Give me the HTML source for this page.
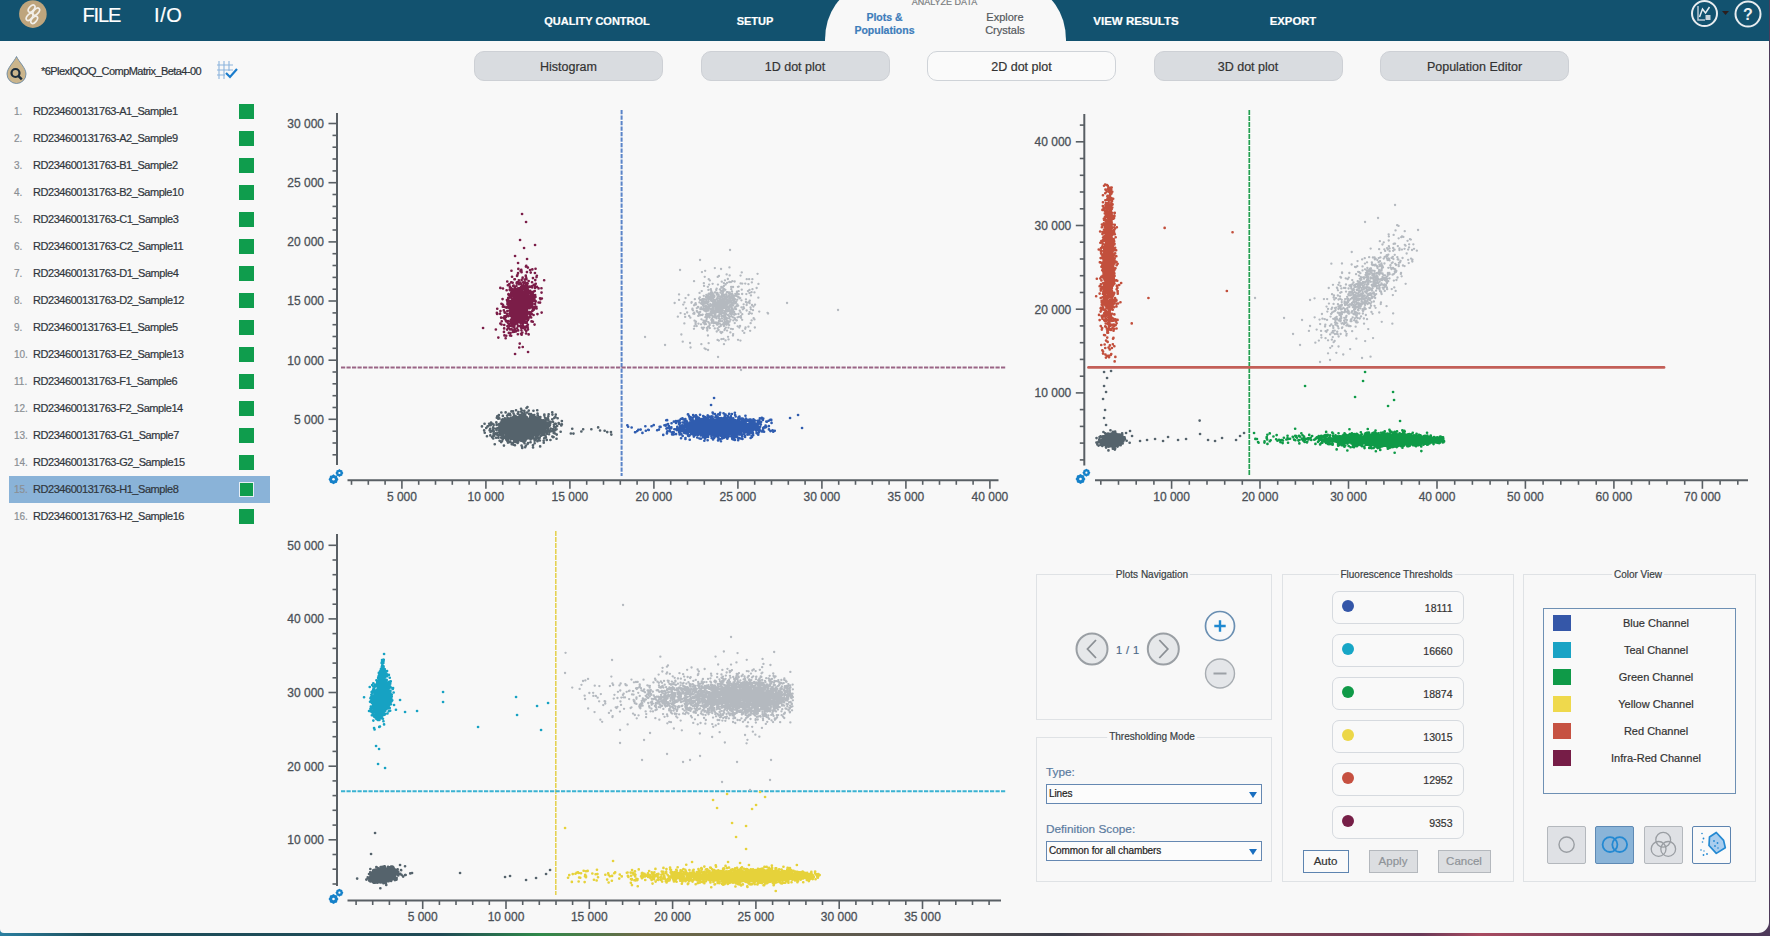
<!DOCTYPE html>
<html><head><meta charset="utf-8">
<style>
*{margin:0;padding:0;box-sizing:border-box}
html,body{width:1770px;height:936px;overflow:hidden}
.win div{-webkit-text-stroke:0.2px currentColor}
body{font-family:"Liberation Sans",sans-serif;position:relative;background:linear-gradient(90deg,#2a7fa0 0,#1d4f5c 90px,#1f4a55 440px,#2f8a4a 540px,#6d6a48 640px,#5a5550 930px,#3c3e4a 1060px,#8a4a55 1200px,#6a3a58 1420px,#a84a60 1480px,#4e3a5a 1700px)}
.win{position:absolute;left:0;top:0;width:1769px;height:932.5px;background:#f8f8f8;border-radius:0 0 11px 4px;overflow:hidden}
.hdr{position:absolute;left:0;top:0;width:1769px;height:41px;background:#12526f;overflow:hidden}
.ab{position:absolute;white-space:nowrap}
.logo{position:absolute;left:19px;top:0px;width:28px;height:28px;border-radius:50%;background:#c2a478}
.menu{position:absolute;color:#fff;font-size:20px;top:4px;line-height:23px}
.tabt{position:absolute;color:#fff;font-weight:bold;font-size:11px;top:15px;transform:translateX(-50%);white-space:nowrap}
.atab{position:absolute;left:825px;top:-10px;width:241px;height:51px;background:#f8f8f8;border-radius:36px 36px 0 0/50px 50px 0 0}
.sub{position:absolute;font-size:10.5px;font-weight:bold;line-height:13px;text-align:center;transform:translateX(-50%);white-space:nowrap}
.btn{position:absolute;top:50.5px;width:189px;height:30px;border-radius:10px;background:#d9dce0;border:1px solid #cdd0d5;font-size:12.5px;color:#333;text-align:center;line-height:30px}
.btn.on{background:#fafafa;border:1px solid #cfd3d8}
.num{position:absolute;left:14px;font-size:10px;color:#8a8f94;line-height:14px;margin-top:0.5px}
.sname{position:absolute;left:33px;font-size:11px;letter-spacing:-0.45px;color:#30363c;line-height:14px;white-space:nowrap}
.sq{position:absolute;left:239px;width:15px;height:14.5px;background:#0f9d4d}
.sq.sel{border:1px solid #e6eef5}
.selbar{position:absolute;left:9px;width:261px;height:27px;background:#8ab3d8}
svg text.al{font-family:"Liberation Sans",sans-serif;font-size:12px;fill:#4a5057;stroke:#4a5057;stroke-width:0.28px}
.gbox{position:absolute;border:1px solid #dfe2e5}
.gtitle{position:absolute;font-size:10px;color:#3a3f44;background:#f8f8f8;padding:0 2px;transform:translate(-50%,-50%);white-space:nowrap;line-height:12px}
.field{position:absolute;left:1331.5px;width:132px;height:32.5px;border:1.5px solid #d6dadf;border-radius:7px;background:#f9f9f9}
.field .dot{position:absolute;left:9.3px;top:8.2px;width:12px;height:12px;border-radius:50%}
.field .val{position:absolute;right:10px;top:9px;font-size:10.5px;color:#333;line-height:14px}
.sbtn{position:absolute;top:849.5px;height:23px;font-size:11.5px;text-align:center;line-height:21px}
.lg{position:absolute;left:1552.5px;width:18px;height:16px}
.lgt{position:absolute;font-size:11px;color:#333;transform:translateX(-50%);white-space:nowrap;line-height:14px}
.cvb{position:absolute;top:826px;width:39px;height:38px;border:1.5px solid #b4b8bd;border-radius:2px;background:#dfe1e5}
.lab2{position:absolute;left:1046px;font-size:11.8px;color:#5b7ba0;line-height:14px}
.sel2{position:absolute;left:1045.5px;width:216.5px;height:20px;border:1.3px solid #6588b2;background:#fcfcfc;font-size:10px;letter-spacing:-0.1px;color:#222;line-height:18px;padding-left:2.5px}
.sel2 .tri{position:absolute;right:4px;top:6.5px;width:0;height:0;border-left:4.5px solid transparent;border-right:4.5px solid transparent;border-top:6px solid #1a6fc0}
</style></head>
<body>
<div class="win">
  <div class="hdr">
    <svg class="ab" style="left:0;top:0" width="60" height="32" viewBox="0 0 60 32"><circle cx="32.9" cy="14.1" r="13.8" fill="#bea57d"/><g fill="none" stroke="#f2efe9" stroke-width="1.7"><ellipse cx="31.6" cy="8.6" rx="4.3" ry="2.4" transform="rotate(-50 31.6 8.6)"/><ellipse cx="36.2" cy="11.6" rx="4.3" ry="2.4" transform="rotate(-50 36.2 11.6)"/><ellipse cx="29.6" cy="16.8" rx="4.3" ry="2.4" transform="rotate(-50 29.6 16.8)"/><ellipse cx="34.2" cy="19.8" rx="4.3" ry="2.4" transform="rotate(-50 34.2 19.8)"/></g></svg>
    <div class="menu" style="left:82.5px;letter-spacing:-1.1px">FILE</div>
    <div class="menu" style="left:154px;letter-spacing:0.6px">I/O</div>
    <div class="tabt" style="left:597px">QUALITY CONTROL</div>
    <div class="tabt" style="left:755px">SETUP</div>
    <div class="atab"></div>
    <div class="ab" style="left:944.5px;top:-3px;font-size:9px;color:#7a7d80;transform:translateX(-50%)">ANALYZE DATA</div>
    <div class="sub" style="left:884.5px;top:11px;color:#3e7dbb">Plots &amp;<br>Populations</div>
    <div class="sub" style="left:1005px;top:11px;color:#54585c;font-weight:normal;font-size:11px">Explore<br>Crystals</div>
    <div class="tabt" style="left:1136px;font-size:11.5px">VIEW RESULTS</div>
    <div class="tabt" style="left:1293px;font-size:11.3px">EXPORT</div>
    <svg class="ab" style="left:1688px;top:0" width="81" height="30" viewBox="1688 0 81 30">
      <circle cx="1704.5" cy="13.5" r="12.5" fill="none" stroke="#e8ecef" stroke-width="2"/>
      <path d="M1698 6v14h7" fill="none" stroke="#b8c8d4" stroke-width="1.5"/>
      <path d="M1699.5 17l3-8 3 4 4-6" fill="none" stroke="#e6ecf0" stroke-width="1.5"/>
      <rect x="1705.5" y="15" width="5" height="5" fill="#c8d4dc"/>
      <path d="M1722 11h7l-3.5 4z" fill="#2b1f1f"/>
      <circle cx="1748" cy="14" r="12.5" fill="none" stroke="#e8ecef" stroke-width="2"/>
      <text x="1748" y="19.5" text-anchor="middle" font-family="Liberation Sans" font-size="16" font-weight="bold" fill="#eef1f3">?</text>
    </svg>
  </div>

  <!-- toolbar buttons -->
  <div class="btn" style="left:474px">Histogram</div>
  <div class="btn" style="left:700.5px">1D dot plot</div>
  <div class="btn on" style="left:927px">2D dot plot</div>
  <div class="btn" style="left:1153.5px">3D dot plot</div>
  <div class="btn" style="left:1380px">Population Editor</div>

  <!-- file row -->
  <svg class="ab" style="left:4px;top:55px" width="26" height="30" viewBox="0 0 26 30">
    <path d="M12.5 1.5C10 7 3 13 3 19a9.5 9.5 0 0 0 19 0c0-6-7-12-9.5-17.5z" fill="#cbb58c" stroke="#5a7fa0" stroke-width="0.8"/>
    <circle cx="11.5" cy="18" r="4" fill="none" stroke="#1c2d3c" stroke-width="2.2"/>
    <path d="M14.3 20.8l3.5 3.5" stroke="#1c2d3c" stroke-width="2.4"/>
  </svg>
  <div class="ab" style="left:41px;top:63.5px;font-size:11px;letter-spacing:-0.55px;color:#2c3238;line-height:14px">*6PlexIQOQ_CompMatrix_Beta4-00</div>
  <svg class="ab" style="left:214px;top:59px" width="26" height="22" viewBox="0 0 26 22">
    <g stroke="#8cb4dc" stroke-width="1.1" fill="none"><path d="M5 2v18M10 2v18M15 2v10M3 6h16M3 11h16M3 16h8"/></g>
    <path d="M12 14l4 4 7-8" fill="none" stroke="#1a7ccc" stroke-width="2.2"/>
  </svg>

  <div class="num" style="top:104px">1.</div><div class="sname" style="top:104px">RD234600131763-A1_Sample1</div><div class="sq" style="top:104px"></div><div class="num" style="top:131px">2.</div><div class="sname" style="top:131px">RD234600131763-A2_Sample9</div><div class="sq" style="top:131px"></div><div class="num" style="top:158px">3.</div><div class="sname" style="top:158px">RD234600131763-B1_Sample2</div><div class="sq" style="top:158px"></div><div class="num" style="top:185px">4.</div><div class="sname" style="top:185px">RD234600131763-B2_Sample10</div><div class="sq" style="top:185px"></div><div class="num" style="top:212px">5.</div><div class="sname" style="top:212px">RD234600131763-C1_Sample3</div><div class="sq" style="top:212px"></div><div class="num" style="top:239px">6.</div><div class="sname" style="top:239px">RD234600131763-C2_Sample11</div><div class="sq" style="top:239px"></div><div class="num" style="top:266px">7.</div><div class="sname" style="top:266px">RD234600131763-D1_Sample4</div><div class="sq" style="top:266px"></div><div class="num" style="top:293px">8.</div><div class="sname" style="top:293px">RD234600131763-D2_Sample12</div><div class="sq" style="top:293px"></div><div class="num" style="top:320px">9.</div><div class="sname" style="top:320px">RD234600131763-E1_Sample5</div><div class="sq" style="top:320px"></div><div class="num" style="top:347px">10.</div><div class="sname" style="top:347px">RD234600131763-E2_Sample13</div><div class="sq" style="top:347px"></div><div class="num" style="top:374px">11.</div><div class="sname" style="top:374px">RD234600131763-F1_Sample6</div><div class="sq" style="top:374px"></div><div class="num" style="top:401px">12.</div><div class="sname" style="top:401px">RD234600131763-F2_Sample14</div><div class="sq" style="top:401px"></div><div class="num" style="top:428px">13.</div><div class="sname" style="top:428px">RD234600131763-G1_Sample7</div><div class="sq" style="top:428px"></div><div class="num" style="top:455px">14.</div><div class="sname" style="top:455px">RD234600131763-G2_Sample15</div><div class="sq" style="top:455px"></div><div class="selbar" style="top:475.5px"></div><div class="num" style="top:482px">15.</div><div class="sname" style="top:482px">RD234600131763-H1_Sample8</div><div class="sq sel" style="top:482px"></div><div class="num" style="top:509px">16.</div><div class="sname" style="top:509px">RD234600131763-H2_Sample16</div><div class="sq" style="top:509px"></div>

  <svg class="ab" style="left:0;top:0" width="1769" height="932" viewBox="0 0 1769 932"><line x1="337" y1="113" x2="337" y2="465" stroke="#595f64" stroke-width="2"/><line x1="332.5" y1="454.8" x2="337" y2="454.8" stroke="#595f64" stroke-width="1.6"/><line x1="332.5" y1="443" x2="337" y2="443" stroke="#595f64" stroke-width="1.6"/><line x1="332.5" y1="431.2" x2="337" y2="431.2" stroke="#595f64" stroke-width="1.6"/><line x1="332.5" y1="407.5" x2="337" y2="407.5" stroke="#595f64" stroke-width="1.6"/><line x1="332.5" y1="395.7" x2="337" y2="395.7" stroke="#595f64" stroke-width="1.6"/><line x1="332.5" y1="383.8" x2="337" y2="383.8" stroke="#595f64" stroke-width="1.6"/><line x1="332.5" y1="372" x2="337" y2="372" stroke="#595f64" stroke-width="1.6"/><line x1="332.5" y1="348.3" x2="337" y2="348.3" stroke="#595f64" stroke-width="1.6"/><line x1="332.5" y1="336.5" x2="337" y2="336.5" stroke="#595f64" stroke-width="1.6"/><line x1="332.5" y1="324.7" x2="337" y2="324.7" stroke="#595f64" stroke-width="1.6"/><line x1="332.5" y1="312.9" x2="337" y2="312.9" stroke="#595f64" stroke-width="1.6"/><line x1="332.5" y1="289.2" x2="337" y2="289.2" stroke="#595f64" stroke-width="1.6"/><line x1="332.5" y1="277.4" x2="337" y2="277.4" stroke="#595f64" stroke-width="1.6"/><line x1="332.5" y1="265.5" x2="337" y2="265.5" stroke="#595f64" stroke-width="1.6"/><line x1="332.5" y1="253.7" x2="337" y2="253.7" stroke="#595f64" stroke-width="1.6"/><line x1="332.5" y1="230" x2="337" y2="230" stroke="#595f64" stroke-width="1.6"/><line x1="332.5" y1="218.2" x2="337" y2="218.2" stroke="#595f64" stroke-width="1.6"/><line x1="332.5" y1="206.4" x2="337" y2="206.4" stroke="#595f64" stroke-width="1.6"/><line x1="332.5" y1="194.5" x2="337" y2="194.5" stroke="#595f64" stroke-width="1.6"/><line x1="332.5" y1="170.9" x2="337" y2="170.9" stroke="#595f64" stroke-width="1.6"/><line x1="332.5" y1="159" x2="337" y2="159" stroke="#595f64" stroke-width="1.6"/><line x1="332.5" y1="147.2" x2="337" y2="147.2" stroke="#595f64" stroke-width="1.6"/><line x1="332.5" y1="135.4" x2="337" y2="135.4" stroke="#595f64" stroke-width="1.6"/><line x1="328.5" y1="419.3" x2="337" y2="419.3" stroke="#595f64" stroke-width="1.6"/><line x1="328.5" y1="360.2" x2="337" y2="360.2" stroke="#595f64" stroke-width="1.6"/><line x1="328.5" y1="301" x2="337" y2="301" stroke="#595f64" stroke-width="1.6"/><line x1="328.5" y1="241.9" x2="337" y2="241.9" stroke="#595f64" stroke-width="1.6"/><line x1="328.5" y1="182.7" x2="337" y2="182.7" stroke="#595f64" stroke-width="1.6"/><line x1="328.5" y1="123.5" x2="337" y2="123.5" stroke="#595f64" stroke-width="1.6"/><text x="324" y="423.6" text-anchor="end" class="al">5 000</text><text x="324" y="364.5" text-anchor="end" class="al">10 000</text><text x="324" y="305.3" text-anchor="end" class="al">15 000</text><text x="324" y="246.2" text-anchor="end" class="al">20 000</text><text x="324" y="187" text-anchor="end" class="al">25 000</text><text x="324" y="127.8" text-anchor="end" class="al">30 000</text><line x1="347.5" y1="480.3" x2="998.5" y2="480.3" stroke="#595f64" stroke-width="2"/><line x1="351.5" y1="480.3" x2="351.5" y2="484.8" stroke="#595f64" stroke-width="1.6"/><line x1="368.3" y1="480.3" x2="368.3" y2="484.8" stroke="#595f64" stroke-width="1.6"/><line x1="385.1" y1="480.3" x2="385.1" y2="484.8" stroke="#595f64" stroke-width="1.6"/><line x1="418.7" y1="480.3" x2="418.7" y2="484.8" stroke="#595f64" stroke-width="1.6"/><line x1="435.5" y1="480.3" x2="435.5" y2="484.8" stroke="#595f64" stroke-width="1.6"/><line x1="452.3" y1="480.3" x2="452.3" y2="484.8" stroke="#595f64" stroke-width="1.6"/><line x1="469.1" y1="480.3" x2="469.1" y2="484.8" stroke="#595f64" stroke-width="1.6"/><line x1="502.7" y1="480.3" x2="502.7" y2="484.8" stroke="#595f64" stroke-width="1.6"/><line x1="519.5" y1="480.3" x2="519.5" y2="484.8" stroke="#595f64" stroke-width="1.6"/><line x1="536.3" y1="480.3" x2="536.3" y2="484.8" stroke="#595f64" stroke-width="1.6"/><line x1="553.1" y1="480.3" x2="553.1" y2="484.8" stroke="#595f64" stroke-width="1.6"/><line x1="586.7" y1="480.3" x2="586.7" y2="484.8" stroke="#595f64" stroke-width="1.6"/><line x1="603.5" y1="480.3" x2="603.5" y2="484.8" stroke="#595f64" stroke-width="1.6"/><line x1="620.3" y1="480.3" x2="620.3" y2="484.8" stroke="#595f64" stroke-width="1.6"/><line x1="637.1" y1="480.3" x2="637.1" y2="484.8" stroke="#595f64" stroke-width="1.6"/><line x1="670.7" y1="480.3" x2="670.7" y2="484.8" stroke="#595f64" stroke-width="1.6"/><line x1="687.5" y1="480.3" x2="687.5" y2="484.8" stroke="#595f64" stroke-width="1.6"/><line x1="704.3" y1="480.3" x2="704.3" y2="484.8" stroke="#595f64" stroke-width="1.6"/><line x1="721.1" y1="480.3" x2="721.1" y2="484.8" stroke="#595f64" stroke-width="1.6"/><line x1="754.7" y1="480.3" x2="754.7" y2="484.8" stroke="#595f64" stroke-width="1.6"/><line x1="771.5" y1="480.3" x2="771.5" y2="484.8" stroke="#595f64" stroke-width="1.6"/><line x1="788.3" y1="480.3" x2="788.3" y2="484.8" stroke="#595f64" stroke-width="1.6"/><line x1="805.1" y1="480.3" x2="805.1" y2="484.8" stroke="#595f64" stroke-width="1.6"/><line x1="838.7" y1="480.3" x2="838.7" y2="484.8" stroke="#595f64" stroke-width="1.6"/><line x1="855.5" y1="480.3" x2="855.5" y2="484.8" stroke="#595f64" stroke-width="1.6"/><line x1="872.3" y1="480.3" x2="872.3" y2="484.8" stroke="#595f64" stroke-width="1.6"/><line x1="889.1" y1="480.3" x2="889.1" y2="484.8" stroke="#595f64" stroke-width="1.6"/><line x1="922.7" y1="480.3" x2="922.7" y2="484.8" stroke="#595f64" stroke-width="1.6"/><line x1="939.5" y1="480.3" x2="939.5" y2="484.8" stroke="#595f64" stroke-width="1.6"/><line x1="956.3" y1="480.3" x2="956.3" y2="484.8" stroke="#595f64" stroke-width="1.6"/><line x1="973.1" y1="480.3" x2="973.1" y2="484.8" stroke="#595f64" stroke-width="1.6"/><line x1="401.9" y1="480.3" x2="401.9" y2="488.8" stroke="#595f64" stroke-width="1.6"/><line x1="485.9" y1="480.3" x2="485.9" y2="488.8" stroke="#595f64" stroke-width="1.6"/><line x1="569.9" y1="480.3" x2="569.9" y2="488.8" stroke="#595f64" stroke-width="1.6"/><line x1="653.9" y1="480.3" x2="653.9" y2="488.8" stroke="#595f64" stroke-width="1.6"/><line x1="737.9" y1="480.3" x2="737.9" y2="488.8" stroke="#595f64" stroke-width="1.6"/><line x1="821.9" y1="480.3" x2="821.9" y2="488.8" stroke="#595f64" stroke-width="1.6"/><line x1="905.9" y1="480.3" x2="905.9" y2="488.8" stroke="#595f64" stroke-width="1.6"/><line x1="989.9" y1="480.3" x2="989.9" y2="488.8" stroke="#595f64" stroke-width="1.6"/><text x="401.9" y="500.8" text-anchor="middle" class="al">5 000</text><text x="485.9" y="500.8" text-anchor="middle" class="al">10 000</text><text x="569.9" y="500.8" text-anchor="middle" class="al">15 000</text><text x="653.9" y="500.8" text-anchor="middle" class="al">20 000</text><text x="737.9" y="500.8" text-anchor="middle" class="al">25 000</text><text x="821.9" y="500.8" text-anchor="middle" class="al">30 000</text><text x="905.9" y="500.8" text-anchor="middle" class="al">35 000</text><text x="989.9" y="500.8" text-anchor="middle" class="al">40 000</text><path d="M338.5 479.3L337.4 480.9L337 482.8L335.1 483.2L333.5 484.3L331.9 483.2L330 482.8L329.6 480.9L328.5 479.3L329.6 477.7L330 475.8L331.9 475.4L333.5 474.3L335.1 475.4L337 475.8L337.4 477.7Z" fill="#1581c9"/><circle cx="333.5" cy="479.3" r="1.3" fill="#f8f8f8"/><path d="M343.4 473L342.5 474.3L342.2 475.8L340.7 476.1L339.4 477L338.1 476.1L336.6 475.8L336.3 474.3L335.4 473L336.3 471.7L336.6 470.2L338.1 469.9L339.4 469L340.7 469.9L342.2 470.2L342.5 471.7Z" fill="#1581c9"/><circle cx="339.4" cy="473.0" r="1.1" fill="#f8f8f8"/><line x1="621.6" y1="110" x2="621.6" y2="476" stroke="#5a84c8" stroke-width="2" stroke-dasharray="4.2 1.3"/><line x1="341" y1="367.4" x2="1005.5" y2="367.4" stroke="#9a6585" stroke-width="2" stroke-dasharray="4.2 1.3"/><path d="M523.5 421.8h.1M527.3 425.7h.1M521.9 432.6h.1M513.9 427.9h.1M519.3 431.6h.1M493.2 438.4h.1M524.5 426.3h.1M519.1 433.5h.1M516.1 429.7h.1M528.8 431.9h.1M526.5 419.2h.1M524.7 415h.1M515.8 420.4h.1M522.9 420.6h.1M532 432.8h.1M514.6 430.7h.1M519.6 428.2h.1M493.3 431.5h.1M508.3 433.8h.1M493.4 428.1h.1M522.1 429.8h.1M507.4 430.2h.1M526 416.7h.1M525.8 425.5h.1M522.7 434.3h.1M497.4 428.2h.1M518.3 427.7h.1M523.2 424.9h.1M525.6 423.9h.1M511.2 433.6h.1M519.5 427.2h.1M502.5 419.4h.1M537 423.6h.1M515.7 419.8h.1M521.9 410.6h.1M532.7 430.9h.1M518.9 431.5h.1M522.4 420.3h.1M525.8 432.9h.1M524.8 430h.1M506.7 424.2h.1M525.4 432.6h.1M538.4 418.3h.1M504.6 422.6h.1M533 419.6h.1M524.6 423.5h.1M517.7 432.8h.1M547.8 418.3h.1M534.6 419.1h.1M524.7 428.7h.1M529.7 425.9h.1M522.3 432.6h.1M532.4 423h.1M532 424.4h.1M538 427h.1M516.1 423.7h.1M526.9 429.6h.1M518.5 440.4h.1M524.7 426.1h.1M507.3 429.6h.1M518.3 435.3h.1M520.6 423.5h.1M530 424.7h.1M548.6 414.3h.1M503 432.6h.1M516.2 431h.1M538.8 425h.1M504.4 429.7h.1M518.1 436.9h.1M523.2 433h.1M537.9 419.1h.1M530.1 427.4h.1M518.4 429.1h.1M521.2 431h.1M520.8 426.8h.1M557.6 418.2h.1M514.6 423.9h.1M529 427.2h.1M522.5 425h.1M522.5 429.9h.1M513.1 424.1h.1M523.6 425.2h.1M520.9 425.2h.1M534.6 422.2h.1M533.3 431.6h.1M523.4 424.8h.1M528.5 428.9h.1M519.9 422.5h.1M539.9 427.2h.1M523 417h.1M532.9 423.4h.1M499.2 425.1h.1M531.6 432.8h.1M490.5 432h.1M495.9 428.8h.1M521.7 431.4h.1M499.6 431.9h.1M534.6 440.8h.1M555.2 430.2h.1M514.3 428.2h.1M519.7 427.3h.1M525.5 428.8h.1M531.1 424.2h.1M522.7 429.4h.1M522.1 433.9h.1M538.1 434.3h.1M532.6 423.8h.1M509.7 420.8h.1M523.4 427.7h.1M524.3 427h.1M515.9 432.7h.1M527.4 424.8h.1M516.7 427.6h.1M538.9 431.7h.1M525.6 425.6h.1M524.9 426.8h.1M517.9 437.7h.1M522.2 447.9h.1M486.9 436.2h.1M501.7 431.9h.1M526.9 423.5h.1M495.5 433.6h.1M532.3 427.4h.1M501.9 430.8h.1M529 425.8h.1M515.7 428.4h.1M530 426.7h.1M525.4 429.1h.1M499.6 440.8h.1M539.5 428.6h.1M540.3 417.1h.1M522.8 422.4h.1M516 410.3h.1M522.1 424.2h.1M514.3 431.2h.1M536.9 428.9h.1M513.1 423h.1M523.7 428.8h.1M512.9 423.8h.1M514.3 418.9h.1M535.8 422.9h.1M523.1 433.8h.1M532.1 421.5h.1M525.8 445.7h.1M518.5 433.6h.1M519.5 426.9h.1M516.6 428h.1M523.7 423.2h.1M520.2 428h.1M521.6 430.7h.1M507.8 429.1h.1M513.8 434.8h.1M538.3 431.4h.1M515.9 430.4h.1M512.5 430.4h.1M528.6 426.9h.1M539.1 428.3h.1M508.8 423.6h.1M521 430.9h.1M511.4 430.5h.1M501.3 424.3h.1M540.1 446.4h.1M523.2 422h.1M524.3 424.2h.1M514.3 430.2h.1M514.4 422h.1M521.8 419.9h.1M511.2 423.6h.1M504.7 428.2h.1M537.4 428.2h.1M516.7 436.4h.1M526.4 430.5h.1M524.1 432.8h.1M521.5 429.7h.1M518.8 426h.1M531.3 432.9h.1M518 423.7h.1M522 424.5h.1M525.4 440.6h.1M534.4 430.2h.1M534.6 428.4h.1M526.5 429.8h.1M517.5 433.3h.1M514.9 424.5h.1M544.3 424.8h.1M536.7 418.9h.1M521.3 428.8h.1M533.4 420.9h.1M533.8 434.5h.1M545.3 431.8h.1M532.6 423.3h.1M518.4 428h.1M545 417.7h.1M507.2 429.3h.1M536.3 430.3h.1M526.9 428.3h.1M534.2 415.1h.1M547.2 423.8h.1M544.8 429.3h.1M514.1 429.8h.1M506.3 435.1h.1M532.5 420.3h.1M498.3 435.8h.1M523.5 423.9h.1M531.2 428h.1M497.6 432.8h.1M506.6 431.9h.1M526.5 424.6h.1M524.5 428.6h.1M521.2 422.6h.1M523.8 418.2h.1M513.6 431.8h.1M511.1 428.6h.1M522.2 421.9h.1M515.6 425.1h.1M511.5 428.9h.1M528.6 433.5h.1M523.5 438.4h.1M528.4 431.2h.1M512.5 427.6h.1M505.2 433.3h.1M510 431.7h.1M526.4 429.7h.1M510.8 426.8h.1M528.6 436.5h.1M527.4 433.5h.1M544.8 425.6h.1M536.3 439.1h.1M522.9 425.3h.1M524.4 435h.1M509.8 438.2h.1M515.9 420.9h.1M533.8 428.7h.1M523.1 426.3h.1M525.8 431.8h.1M520.6 429.8h.1M539.3 438h.1M524 431.4h.1M501.1 429.5h.1M518.7 432.6h.1M498.6 428h.1M518.2 441.8h.1M534.3 423.8h.1M524.4 423.7h.1M503.4 429.5h.1M509.9 421.5h.1M533.9 417.4h.1M526.3 433.4h.1M524.2 424.2h.1M522.6 422.9h.1M524.3 425.4h.1M537.4 418.3h.1M532.7 418.1h.1M526.3 428.3h.1M511.9 443.1h.1M527.6 429.9h.1M518.5 431.2h.1M536 418.4h.1M507.6 428.8h.1M520.1 415.9h.1M524.5 436.2h.1M512.7 427.8h.1M549 425.9h.1M539.8 426h.1M518.4 424.9h.1M530.7 420.4h.1M526.8 429.5h.1M499.8 423.7h.1M526.5 420.5h.1M523.4 426.7h.1M524.5 424.3h.1M510.8 430.3h.1M521.4 433.2h.1M522.5 428.9h.1M533.4 427.8h.1M528.9 427.4h.1M524.3 432.9h.1M519.1 429.7h.1M518.6 422.5h.1M510.2 424.6h.1M536.1 426.8h.1M534.4 424.8h.1M534.1 429.9h.1M534.8 434.7h.1M524.3 410.9h.1M526.4 427.1h.1M521.7 439.7h.1M522.8 430.9h.1M525.6 437.6h.1M538.6 427h.1M530.2 418.6h.1M522.8 421.8h.1M518.3 431.6h.1M513.2 436.6h.1M538.5 423.4h.1M528 426.4h.1M524.6 428.8h.1M518.9 417.8h.1M506.1 426.3h.1M523.9 434.6h.1M537.4 441.2h.1M519.7 427.5h.1M518.8 422.4h.1M525 422.8h.1M502.8 415.9h.1M520.6 435.5h.1M502.8 424.7h.1M534.2 438.5h.1M506.2 432.5h.1M532.9 428.2h.1M537.6 418.6h.1M520.9 436.4h.1M517.5 426.4h.1M526.1 426.7h.1M523 416.1h.1M512 434.1h.1M532.4 434.9h.1M540.8 424h.1M521.2 428.4h.1M521.9 430h.1M518.5 430.8h.1M529.5 427.9h.1M514 435.5h.1M511.8 427.4h.1M548.3 419.9h.1M510.7 425.5h.1M537.2 410.3h.1M555.3 416.9h.1M528.1 434h.1M529.1 428.5h.1M539.4 423.4h.1M522 429.6h.1M516.4 417.5h.1M507.2 427.4h.1M524.9 431.3h.1M544.2 430.5h.1M533.7 423.1h.1M505.4 437.8h.1M514.1 439.7h.1M518.1 425.9h.1M527.5 431.3h.1M518.3 412.1h.1M525 420.6h.1M527.1 430.4h.1M519.2 428.3h.1M523.5 429h.1M525.7 425.1h.1M523.1 426.6h.1M532.2 432.9h.1M556.5 438.7h.1M528.7 426.6h.1M523.9 419.9h.1M504.3 436.6h.1M529.7 431.2h.1M500.3 433.6h.1M500.6 430.9h.1M532.3 436.8h.1M531.7 427.5h.1M522.6 430.4h.1M513.1 423.3h.1M519.9 425.2h.1M511.7 422.9h.1M533.2 426.7h.1M543.4 427.7h.1M525.5 424.8h.1M516.2 437.3h.1M508.2 422.3h.1M523.3 425.9h.1M521.1 429.8h.1M504.3 419.4h.1M525.7 430.9h.1M512.6 431.7h.1M536.1 425.2h.1M536.1 436.4h.1M544.5 426.6h.1M517.8 430h.1M529.7 421.8h.1M521.4 417.2h.1M518 423.8h.1M520.5 426.5h.1M506.9 426.2h.1M501.2 435.3h.1M530 417.7h.1M521.3 421.9h.1M527.4 407h.1M534.7 433.4h.1M512.1 427h.1M516.9 426.2h.1M525.1 423.4h.1M527.4 430.9h.1M520 426.1h.1M539.5 428h.1M525.1 419.4h.1M502.6 439.5h.1M513.6 430.7h.1M531.9 429.7h.1M529.4 433.5h.1M498.7 428.5h.1M548.2 424.2h.1M528.3 429.8h.1M536.6 428.7h.1M518.4 426.4h.1M518.9 428.4h.1M511.2 426.1h.1M552.9 429.3h.1M522.4 432.7h.1M536.3 426.9h.1M515.3 441.9h.1M525 420.3h.1M486.2 428h.1M519.9 438.4h.1M531.4 425.7h.1M498.8 415h.1M534.2 433h.1M528.7 430.8h.1M510.5 421.8h.1M517.3 433.4h.1M519 423.3h.1M523 421.7h.1M519.3 427.5h.1M512.8 425.6h.1M518.7 420.2h.1M515.5 427.1h.1M504.8 422.3h.1M523.5 428.1h.1M537 426.5h.1M509.3 432.4h.1M523.9 426.7h.1M517.6 422.5h.1M518.3 424.9h.1M536.7 424.9h.1M518.8 436.5h.1M540.3 430.8h.1M514.5 424.9h.1M527.8 431.6h.1M521.5 423h.1M516.4 433.5h.1M528.1 426.2h.1M522 433.6h.1M533 431.2h.1M522.1 423.2h.1M512.3 430.4h.1M522.2 421.3h.1M524.5 427.4h.1M539.2 434.3h.1M523.8 431.6h.1M499 430.3h.1M530.4 422.2h.1M513 434h.1M501.7 420.1h.1M523.2 424.3h.1M536.4 428.7h.1M503.3 421.8h.1M507.3 440.9h.1M516.8 433.7h.1M506.4 424.9h.1M527.1 425.3h.1M515.1 422h.1M513.3 419.3h.1M534.4 430.5h.1M510.4 434.2h.1M527.4 428.9h.1M495.5 433.4h.1M505.1 425.1h.1M513.6 429.7h.1M539.8 420.4h.1M521.7 428.1h.1M526.9 434.3h.1M524.2 434.7h.1M525.4 425.5h.1M525 423h.1M509.3 441.8h.1M496.8 417.8h.1M505.3 425.4h.1M516.2 429.1h.1M536.6 435.9h.1M530.8 423.8h.1M498.4 437.8h.1M481.9 426.4h.1M521 440.8h.1M537.2 428.7h.1M530.4 425.2h.1M516 432.4h.1M532.5 429.7h.1M505.9 420.8h.1M522.1 428.7h.1M512.5 424.1h.1M515.4 425.4h.1M552.2 412.2h.1M535.5 417.2h.1M519.7 424.8h.1M513.2 423.1h.1M502.9 432.3h.1M520.4 431.8h.1M523.6 426.6h.1M522.8 423.1h.1M523.5 430.7h.1M511.3 418.6h.1M522.2 415.8h.1M523.9 431.8h.1M547.8 431.4h.1M544.9 431.2h.1M522.8 427.1h.1M501.3 412.5h.1M521.8 421.4h.1M519 430.5h.1M512.7 423.3h.1M523 423.8h.1M513.1 422h.1M527.9 423.7h.1M523.4 431.3h.1M526.3 429.5h.1M521.9 422.9h.1M511.9 420.5h.1M514.3 425.9h.1M522.4 429.9h.1M530.3 424.7h.1M523.2 418.1h.1M498.2 418.7h.1M525 430.2h.1M510.4 433.3h.1M519.3 424.3h.1M520.2 423.8h.1M502.3 433.6h.1M524.6 426.3h.1M525.9 423.7h.1M521.2 432.8h.1M520.7 428.8h.1M513.6 444.8h.1M502.7 437.8h.1M518.5 422.8h.1M518.9 427.7h.1M524.8 427.5h.1M511.9 422.5h.1M525.6 423.8h.1M526.8 434.7h.1M521.5 418.5h.1M518.2 435h.1M530.4 428.8h.1M504.8 428.5h.1M532.8 431.6h.1M526.7 429.9h.1M527.1 433h.1M527.4 425.8h.1M515.9 427.1h.1M521.1 426.8h.1M533.1 438.5h.1M535.9 438.1h.1M525.4 424.2h.1M511.8 427.5h.1M532.4 421.4h.1M538.9 426.6h.1M534.8 428h.1M527.2 438.5h.1M506 419.6h.1M535.4 432.6h.1M522.6 430.1h.1M527.9 426.7h.1M505.3 426.3h.1M515.5 428.7h.1M519.8 431.6h.1M536.1 419.6h.1M519.8 436.3h.1M526.3 426.1h.1M552.9 436.9h.1M536.2 428.4h.1M523.3 435.3h.1M521.5 431h.1M504 437.8h.1M513.4 429h.1M526.7 424.9h.1M528.1 430.6h.1M525.7 431.9h.1M533 435.5h.1M513.6 416.9h.1M523.3 426.9h.1M531.9 432.4h.1M532 418.2h.1M536.2 425.6h.1M528.2 436.4h.1M521.4 434.8h.1M530.6 418.7h.1M511.9 437.5h.1M514.4 432.1h.1M534 433h.1M523.4 430.5h.1M527.5 428.8h.1M491 422.5h.1M514.3 422.2h.1M519.6 430.9h.1M504.7 430.7h.1M506 436.6h.1M520.3 426.4h.1M532.3 415.4h.1M526.5 426.6h.1M513.7 430.9h.1M524 431.6h.1M530.2 427.7h.1M501.2 426.5h.1M523.3 435.1h.1M532.1 422.2h.1M537.3 433.1h.1M545.1 424.4h.1M535 421.2h.1M530.6 439.5h.1M525.7 417.8h.1M534.9 421.1h.1M517.3 431h.1M523.5 426.5h.1M536.5 431.6h.1M540.5 426.2h.1M522.1 425.7h.1M524.5 443.3h.1M526.7 426.1h.1M537.1 426.1h.1M523.3 423.2h.1M537 423.6h.1M516.5 431h.1M522.5 430.5h.1M522.1 428.1h.1M533.4 423h.1M536.4 430.7h.1M497.2 416.2h.1M511 426.6h.1M527.8 426.2h.1M515 423.4h.1M484.7 432.8h.1M542.3 420.6h.1M527.5 424.8h.1M534.6 443.2h.1M520.4 431h.1M535 432.9h.1M521.7 428.3h.1M534.7 431.4h.1M512.1 433.9h.1M511.6 437.8h.1M528 443.1h.1M517.5 427.5h.1M535.9 429.1h.1M526.9 427.4h.1M512.9 411.3h.1M524.2 421.5h.1M520.5 428.3h.1M542.4 432.3h.1M519.5 426.4h.1M518.3 436.1h.1M535.7 432.7h.1M550.3 423.5h.1M549 434.2h.1M525.8 439.5h.1M525.8 429.5h.1M543.5 420.3h.1M522.7 441.1h.1M505.1 428h.1M525.5 425.3h.1M527.8 428.1h.1M512.9 425.5h.1M506 435.1h.1M512.4 432h.1M530.4 432.7h.1M517.6 430.9h.1M522.4 424.6h.1M526.3 427h.1M530.9 431.9h.1M520.6 426.4h.1M530.5 442.2h.1M514.1 427.5h.1M518.8 424.6h.1M508.4 438h.1M538.4 431.3h.1M523.6 427.8h.1M508.5 427h.1M521.1 430h.1M520.8 434.9h.1M530.4 430.7h.1M508.7 427.9h.1M512.3 431.3h.1M521.5 431.1h.1M533.4 410.7h.1M522.9 424.8h.1M531 423.6h.1M554.9 423.9h.1M519.7 430h.1M520.3 433.2h.1M549.3 432h.1M528.4 427.1h.1M530.4 427.6h.1M550.2 421.9h.1M537.3 428.1h.1M529.7 434.4h.1M535.9 429.9h.1M536 430.3h.1M520.7 425.4h.1M528.3 427.1h.1M531.7 432.7h.1M521.5 429.9h.1M507 428.1h.1M527.4 431.3h.1M515.1 431.3h.1M519.5 429h.1M515.1 430.9h.1M517.8 430.7h.1M508.1 428.2h.1M543.4 422.9h.1M526.1 427.9h.1M538.4 420.8h.1M542.9 420.6h.1M524.7 433.8h.1M509.8 428.2h.1M511 428.9h.1M510.9 428.4h.1M517.3 428.7h.1M524.8 428h.1M507.8 429.5h.1M529 421.4h.1M510.8 433h.1M527.5 423.4h.1M522.4 439.1h.1M517.7 413.7h.1M522.9 423.1h.1M518.5 433.6h.1M514.5 427.7h.1M501.7 425.6h.1M523.8 430h.1M540.2 422.2h.1M557.1 426h.1M529.8 425.7h.1M515.1 424.8h.1M549.6 430.4h.1M523.8 431.4h.1M523 423.9h.1M520.6 439.5h.1M524.8 424.6h.1M518.2 417.4h.1M521 408.8h.1M507.6 441h.1M521.1 427.9h.1M547.4 422.9h.1M522.9 424.1h.1M520.9 422.5h.1M531.5 435.6h.1M532.1 426.9h.1M515.1 436h.1M521.2 427h.1M531.8 416.8h.1M531.3 437.1h.1M525.3 425.8h.1M538.4 425.8h.1M517.4 436.5h.1M525.1 426h.1M519.3 433.8h.1M535.1 427.1h.1M516.9 431.2h.1M517.8 425.3h.1M531.7 433.7h.1M535.2 435h.1M535 427.4h.1M497.7 435h.1M533.1 430.4h.1M521.1 427h.1M518.3 432.3h.1M528 426.9h.1M508.6 434.3h.1M492.4 423.8h.1M520.7 428.7h.1M509.6 431.1h.1M515.9 424.2h.1M537.2 419.6h.1M527.4 424.7h.1M543.7 430.7h.1M521.1 423.9h.1M490.3 435.4h.1M518.4 434.3h.1M505.3 433h.1M511.2 421.4h.1M530.4 428.4h.1M519.1 432.4h.1M493.3 428.4h.1M535.4 435.2h.1M523.2 430.7h.1M530.4 431h.1M524.9 426.8h.1M532.4 424h.1M524.3 426.6h.1M534.5 427.4h.1M528 429.9h.1M529.7 430.4h.1M528 426.3h.1M509.7 429.5h.1M522.6 429.9h.1M519.5 417.5h.1M525.3 425.4h.1M503.1 424h.1M555.7 423.7h.1M525.2 426.3h.1M510.3 427.8h.1M513.4 426.4h.1M519.9 433.6h.1M523.1 429.7h.1M512.6 417.5h.1M525.1 428.1h.1M515.3 422h.1M529 434.2h.1M512.2 425.6h.1M523.2 425.4h.1M533.8 427.7h.1M553.9 424.6h.1M515.4 428.5h.1M518.2 439h.1M516.7 429.6h.1M535.4 432.8h.1M506.7 437.9h.1M519.3 424.3h.1M524.4 436.7h.1M513.6 432.5h.1M507.6 437.6h.1M516.7 422.8h.1M501.9 434h.1M502.9 432.7h.1M516.5 424.3h.1M527.5 444h.1M522 431.5h.1M490.2 428.7h.1M519.9 429.2h.1M541 435.7h.1M531.7 434.4h.1M523.4 431.3h.1M511.8 437.6h.1M532.3 435.9h.1M508.2 414.7h.1M507.1 426.2h.1M515.8 424.4h.1M540 427.3h.1M527.6 436.9h.1M536.4 430.4h.1M517 422h.1M536.7 425.2h.1M518.7 433.1h.1M521.6 424.9h.1M561.8 424.4h.1M531.2 428.8h.1M520.3 422.7h.1M522.5 438.8h.1M526.7 429.2h.1M533.1 429.3h.1M516 421.7h.1M489.1 423.8h.1M518.9 423.8h.1M524.2 429.2h.1M525.8 428.5h.1M555.6 427.1h.1M533 447.5h.1M532.8 433.7h.1M510.6 425.1h.1M534 423.6h.1M552.3 436.5h.1M530.4 426.3h.1M528 436.4h.1M526.5 436.8h.1M539 424.7h.1M514.5 427.6h.1M521.8 429.2h.1M527.2 424.7h.1M535.4 419.7h.1M515.6 425.3h.1M527.5 432h.1M517.8 424.2h.1M525.7 426.6h.1M522.7 426.2h.1M511.8 422.4h.1M524.4 436.4h.1M530.4 418.5h.1M510 424.9h.1M520.2 433.1h.1M529.1 422.1h.1M515.8 431h.1M526.6 434.7h.1M512.9 424.8h.1M535.1 428.2h.1M552.2 419.3h.1M521.9 428.7h.1M534 428.7h.1M525.9 435h.1M525.5 430.7h.1M537.5 432.4h.1M510.6 432.3h.1M535.9 420.4h.1M522.8 432.1h.1M543.7 429.8h.1M525 422.7h.1M519.7 432.8h.1M526.6 428.2h.1M532.5 429.4h.1M524 422.7h.1M537.8 428.1h.1M515.8 431.1h.1M501.8 428.3h.1M536.2 427.7h.1M530.1 417.7h.1M526 434.5h.1M524.2 423.9h.1M531.9 418.9h.1M519.1 424h.1M517 424.9h.1M522.7 430.2h.1M534.9 423.1h.1M502.9 431.9h.1M537.3 421.8h.1M518.4 439.1h.1M516.3 430.5h.1M539.5 437.6h.1M521.6 419.9h.1M514.8 431.1h.1M514.8 418.3h.1M534.6 430.3h.1M540 431.1h.1M518 419.2h.1M526.6 424.1h.1M534.1 418.9h.1M510.3 415.2h.1M528.1 423.5h.1M523.1 422.3h.1M518 421.5h.1M517.3 429.3h.1M525.3 431.9h.1M523.8 420.7h.1M516.6 425.4h.1M517 428.7h.1M542.7 424.7h.1M526.2 423.9h.1M532.4 430.9h.1M538.1 431.5h.1M533.6 432.4h.1M558.8 423.8h.1M512.8 443.1h.1M536.2 438.6h.1M521.8 426.9h.1M542.2 426h.1M546.9 433.7h.1M484.5 423.7h.1M516.2 430.2h.1M531.3 427.7h.1M529.6 425.1h.1M530 426.7h.1M522.3 418.5h.1M528.2 425.2h.1M524.1 441.4h.1M537 435.6h.1M496.1 437.7h.1M534.2 429.5h.1M510 435.9h.1M546.7 439.9h.1M522.5 432h.1M506.8 438.2h.1M529.6 420.5h.1M518.4 429.8h.1M510.7 425.5h.1M510.9 424.5h.1M523.4 423.7h.1M531.7 430.5h.1M537.1 433.1h.1M520 414.9h.1M535 435.3h.1M524.5 432.8h.1M523 426.4h.1M536.1 422.3h.1M530.6 427.3h.1M520.3 434.1h.1M521.8 426.6h.1M521.7 422.2h.1M525.1 429.9h.1M516.3 420.9h.1M531.2 427.9h.1M520.5 433.7h.1M527.8 428.9h.1M510.8 435.2h.1M528.7 430.6h.1M529.4 432h.1M517.5 429.6h.1M542 423h.1M528.9 426.2h.1M549.8 425.4h.1M535.6 434h.1M515.2 440.1h.1M514 434.3h.1M529.3 422.9h.1M524.8 419.6h.1M524.3 427.3h.1M521.8 434.5h.1M506.2 431h.1M521.3 427.9h.1M489.6 425.2h.1M527.4 431.2h.1M515.2 430.4h.1M517.5 428.3h.1M521.5 428.8h.1M527.4 435.8h.1M508.7 428.4h.1M494.7 444.3h.1M506.3 439.7h.1M500.8 430.1h.1M506 437.6h.1M545.9 425.4h.1M509.9 424h.1M531 426.1h.1M506.4 424h.1M526.8 429.9h.1M520.2 428.4h.1M523.2 433.9h.1M532.7 433h.1M526.2 429.4h.1M524.4 421.6h.1M511 430.1h.1M529.3 423.5h.1M522.1 428.5h.1M535.3 435.4h.1M523.1 421h.1M539.1 427.6h.1M505.4 429.1h.1M520.6 419.9h.1M533.3 430.4h.1M516 429h.1M508.8 424.7h.1M519.8 423.4h.1M524.9 426.3h.1M545.7 418.4h.1M536.4 422.1h.1M513.2 427.2h.1M513 426.6h.1M518.7 427.9h.1M537.4 420h.1M514.1 432h.1M512.2 425.1h.1M534.8 418.7h.1M530.9 424.2h.1M512.2 423.4h.1M509 434.8h.1M515.1 430.1h.1M517.1 427h.1M499 430.1h.1M535.1 428.6h.1M516.3 442h.1M527.4 425.6h.1M539.4 428.6h.1M534 430.1h.1M513.7 424.9h.1M535.3 428.3h.1M536.9 427.8h.1M508.3 424.7h.1M511.5 432.6h.1M521.5 445.5h.1M501.2 437.7h.1M558.6 423.1h.1M499.3 430.9h.1M516.1 437.3h.1M521.4 423.8h.1M519.6 430.5h.1M529.1 438.3h.1M527.4 428.6h.1M521.9 431.6h.1M540.4 427.9h.1M501.8 433.5h.1M524.7 437.3h.1M516.2 427.5h.1M525.2 428.7h.1M526.4 427.5h.1M513.3 426.6h.1M515.8 428.5h.1M530.4 422.9h.1M529.7 432.9h.1M516.7 438.1h.1M553.5 437h.1M555 433.5h.1M505.5 423.8h.1M532.9 445.2h.1M547.8 422.8h.1M530 427.3h.1M526.2 434.4h.1M522.2 424.5h.1M508.5 441.5h.1M521.4 429.9h.1M517 427.7h.1M530.8 423.4h.1M519.1 431h.1M518.7 425.9h.1M504.4 437.9h.1M524 432.9h.1M507.4 417.8h.1M521.7 425.4h.1M530.6 426.5h.1M527.5 421.6h.1M530 420.6h.1M527 428.1h.1M524.5 427.1h.1M521.7 418.7h.1M520.2 425.3h.1M531.9 429.9h.1M515.7 424.5h.1M541.5 420.7h.1M524.9 435.3h.1M513.8 438h.1M511.4 411.4h.1M516.6 422.1h.1M526.9 430.8h.1M514.5 421.7h.1M533.8 426.2h.1M510.7 425.5h.1M496.4 433.5h.1M513.5 413.5h.1M523 421.3h.1M534.7 431.8h.1M538.1 425.3h.1M504.8 418.4h.1M516.2 431.1h.1M541.6 429.9h.1M527.3 426.5h.1M523.9 427h.1M534 429.1h.1M546.6 431.4h.1M541.4 427.6h.1M525.6 430.4h.1M527.2 427.5h.1M530.8 425.4h.1M515.4 422.9h.1M515.5 429.7h.1M524.6 426h.1M509 427.4h.1M523.7 432.8h.1M525.1 430.2h.1M552.8 430.7h.1M510.7 418.1h.1M523 430.8h.1M521.5 424.4h.1M529.6 422.3h.1M537.2 421.7h.1M514.2 441.5h.1M511.4 435.3h.1M493.3 424.2h.1M514.9 423.6h.1M529.3 427.6h.1M524.7 422.7h.1M507.9 442.6h.1M518.8 420h.1M523.7 421.9h.1M529.6 426.2h.1M516.4 428.7h.1M521.8 428.7h.1M503.6 433.7h.1M509.8 442.1h.1M561.8 421.1h.1M504.1 427.3h.1M520.9 421.8h.1M526.6 429.1h.1M520.4 432.5h.1M510.8 427.1h.1M523.8 433.3h.1M524 428.2h.1M523.6 438.4h.1M509.9 430.3h.1M522.1 423.1h.1M516.5 426h.1M517.9 421.1h.1M527 412.5h.1M540.4 429.9h.1M538.8 433.4h.1M519.8 437.5h.1M535.9 426.7h.1M538.7 425.4h.1M536.2 421.2h.1M543.6 432.9h.1M522.2 430.7h.1M521.3 424.4h.1M534.8 431.3h.1M498.9 435h.1M525.4 419h.1M517.8 432.8h.1M519.9 429.1h.1M498.9 427.3h.1M515.9 426.9h.1M525.1 447.3h.1M537 437h.1M533.3 434.9h.1M522.7 422.2h.1M521.6 424.8h.1M510 436.7h.1M530.9 416.3h.1M520.9 424.4h.1M530.3 417.5h.1M538.9 434h.1M524.1 435.7h.1M504.2 432.5h.1M512 430.4h.1M503 426.9h.1M508.7 426.8h.1M539.4 430.2h.1M525.5 425.3h.1M506.3 436.4h.1M530.5 425.1h.1M533.8 423.9h.1M520.3 435.7h.1M514.5 427.8h.1M521.5 430.3h.1M527.7 425h.1M531 414h.1M539.1 430.1h.1M537 419.8h.1M533.6 431.2h.1M533.5 421.9h.1M529.6 419.1h.1M504.3 431.5h.1M523.2 429.6h.1M529 428.4h.1M519.1 421.8h.1M530.8 430.5h.1M519.5 420.9h.1M505.3 425.1h.1M539.7 422.6h.1M531 425.5h.1M526.2 431.4h.1M541.7 420.7h.1M532.1 429.4h.1M530.4 433.2h.1M501.3 422.5h.1M511.2 419.2h.1M516.7 425.7h.1M513.4 425.9h.1M527.2 429.9h.1M537.8 415.5h.1M520.2 431.2h.1M510.1 433.6h.1M559.1 423.8h.1M519.7 422.7h.1M508.7 429.3h.1M529.3 421.4h.1M528.8 430.5h.1M516.1 428.2h.1M537.1 432.5h.1M518.4 426.1h.1M513.9 436.8h.1M525.1 414.6h.1M533.3 421.1h.1M510.1 434.4h.1M526.8 420.5h.1M523.3 432h.1M516.7 429h.1M534.3 423.9h.1M522.8 424.3h.1M522.8 429h.1M546.2 424.7h.1M534.6 425h.1M534.6 435.2h.1M529.9 427.6h.1M512.3 420.5h.1M518.8 433h.1M529.8 431.7h.1M533 435.6h.1M538.3 435.1h.1M529.9 420.6h.1M534.8 432.1h.1M535.9 431.2h.1M527 427.8h.1M511.8 429.9h.1M513.8 417.5h.1M504.5 425.9h.1M537.7 433.9h.1M512 417.8h.1M535.6 424.6h.1M528.1 428.6h.1M541.6 429.4h.1M534.6 434.9h.1M521.3 414.8h.1M520.1 428.7h.1M525.5 433.2h.1M525.7 419.3h.1M518.5 428.2h.1M540 432.8h.1M496.6 434.4h.1M526.5 408h.1M517.4 428.1h.1M527.3 430.7h.1M538.8 424.2h.1M523.6 427.8h.1M509.2 428.2h.1M533.8 423h.1M514.8 430.5h.1M529.5 426.2h.1M526.8 425.3h.1M489.6 430.2h.1M517.6 431.7h.1M526.1 428.8h.1M541.1 420.2h.1M527.3 427h.1M530.8 433h.1M506.9 426.7h.1M539.8 432.6h.1M550.9 431.3h.1M523.8 419.5h.1M522.4 429.3h.1M507.6 439.4h.1M534.2 435.2h.1M530.2 431h.1M537.5 423.4h.1M530.6 418.2h.1M508 433.7h.1M539.1 428.1h.1M508.6 432.3h.1M521.9 428.1h.1M526.9 429.3h.1M531.4 425.3h.1M529.5 430.4h.1M527.2 430.8h.1M510.9 428.6h.1M509.3 433.7h.1M523.9 415.3h.1M513 423.3h.1M507.8 438.2h.1M515 435h.1M510 432.6h.1M493.2 429.7h.1M503.7 420.9h.1M505.1 431.5h.1M529.6 437.3h.1M527.2 421.4h.1M543.6 429h.1M503.6 432.9h.1M513.7 432.1h.1M539.1 417.5h.1M522.5 430.2h.1M520.8 422.4h.1M553 437.3h.1M521.6 428.7h.1M512.9 423.8h.1M509.7 436.4h.1M528.5 434.2h.1M527.1 424.3h.1M513.7 437.2h.1M499.3 418.4h.1M528.9 428.9h.1M530.1 433h.1M515.7 416.3h.1M534.1 434.5h.1M530.4 427.1h.1M496.4 430.1h.1M519.4 421.7h.1M533.5 430.7h.1M516.5 422.2h.1M520.4 425.7h.1M537.6 415.6h.1M545.5 436.1h.1M496.3 422.4h.1M549.5 422.4h.1M506.7 427.1h.1M541.8 426.6h.1M541.1 431.7h.1M533.5 430.9h.1M525.3 426.6h.1M514 427.2h.1M529.5 427.7h.1M517.6 432.2h.1M543.1 424.8h.1M530.4 417.5h.1M550.4 440h.1M508 437.6h.1M541.7 428.1h.1M555.4 428.7h.1M544.4 423.1h.1M523.5 423.7h.1M511.5 427.4h.1M522.3 427.2h.1M506.4 422.5h.1M524.6 426.8h.1M513 432h.1M522.1 425.7h.1M522.5 428.3h.1M544.3 415.6h.1M536.2 426.1h.1M523.2 427.1h.1M537.4 420.2h.1M514.4 419.5h.1M519.5 431.1h.1M537.5 421h.1M515.7 430.2h.1M520.6 426h.1M500.8 435.2h.1M525.2 426.1h.1M540.3 419.3h.1M516.8 428.2h.1M525.8 426.6h.1M513.6 432.6h.1M514.5 427h.1M513.3 427.3h.1M537.8 430.7h.1M554 432.5h.1M527.7 430.3h.1M514.7 435.6h.1M533.3 430h.1M520.2 432.9h.1M533.2 431.9h.1M526.6 429.4h.1M526.9 428.1h.1M532.3 428.2h.1M519.8 438.3h.1M518.1 428.6h.1M500.4 428.4h.1M519.1 426.5h.1M509.7 429h.1M522.2 429.6h.1M509.2 421.2h.1M524.4 412.9h.1M529.9 429.3h.1M505.9 420.1h.1M513 430.6h.1M512.4 429.8h.1M534.5 434.4h.1M542.8 434.9h.1M529.5 428.7h.1M519.4 425.1h.1M552.4 414.6h.1M509.3 425.6h.1M535.7 427.2h.1M514.4 415.9h.1M491.6 431h.1M546.2 426.2h.1M545.6 430.4h.1M510.5 427h.1M528.2 428.9h.1M520.3 423h.1M524.7 426h.1M512.8 422.8h.1M519.3 428.8h.1M531.5 437.9h.1M528.1 429.1h.1M539.6 429h.1M524.6 421.1h.1M556.7 434.6h.1M515.9 424.7h.1M529.4 434.6h.1M493.7 431.2h.1M510.9 424.4h.1M537.7 431.8h.1M514.5 428.8h.1M534.8 428.8h.1M523.5 430.4h.1M515.1 428.6h.1M519.4 426.1h.1M515.6 432.4h.1M517.2 425.9h.1M530.3 427.8h.1M529.4 424.8h.1M513.3 416.9h.1M509.6 424.2h.1M526.8 425.2h.1M523.2 428.1h.1M532.4 431.7h.1M534.6 427.9h.1M522.3 413.2h.1M521.6 422.6h.1M517.8 426.8h.1M513.3 417.3h.1M507.1 415.5h.1M521.1 428.8h.1M520.4 428.6h.1M531.8 426.8h.1M520 424.7h.1M522.5 441.1h.1M510.8 428.2h.1M554.3 417.9h.1M528.7 434.1h.1M543 429.5h.1M535.5 424.5h.1M535.9 431.4h.1M522.1 428.7h.1M530.1 430h.1M553.9 426.8h.1M512 424.3h.1M544.4 434.1h.1M547.4 427.2h.1M530.4 419.5h.1M530.8 424.1h.1M542.1 432.8h.1M516.5 426.7h.1M529.4 427.9h.1M514.6 432.1h.1M514.1 429.7h.1M513.9 418.2h.1M521.9 433.5h.1M526.1 432.9h.1M528.9 431.7h.1M541.7 428.1h.1M533.2 430.1h.1M536.5 438.8h.1M519.1 426.6h.1M523.6 441.8h.1M529.3 434.5h.1M527.2 430.4h.1M506.2 438.9h.1M545.8 437.4h.1M546.8 422.9h.1M534.6 428.7h.1M528.2 429.8h.1M522.7 429h.1M543.3 435h.1M505.3 433.6h.1M525.9 423.3h.1M537.4 429h.1M522.2 431.7h.1M517.9 423.9h.1M525.6 424.5h.1M516 425.5h.1M545.6 422.3h.1M515.1 430.3h.1M533.4 432.1h.1M510.7 438.9h.1M534.1 435h.1M523 435.2h.1M492.1 437.2h.1M524.4 434.1h.1M501.3 426.2h.1M516.2 434.6h.1M542.1 428.3h.1M501.4 428.6h.1M514.1 426.9h.1M536.7 424.9h.1M525.5 426.1h.1M539 421.1h.1M530.2 431.9h.1M507 429.2h.1M523.3 428.6h.1M533.9 428.5h.1M532.7 430.3h.1M523.9 426.4h.1M524.3 427.7h.1M522.2 420.3h.1M516.5 416.9h.1M524.7 436.2h.1M508.3 418.2h.1M519.3 430.6h.1M539.8 440.5h.1M532.4 424.5h.1M522.1 447.1h.1M518.7 436h.1M525.6 439.6h.1M513 436.5h.1M513.1 431.3h.1M535 422.3h.1M518.8 431.1h.1M526.5 426.4h.1M530.3 421.4h.1M524.8 436.2h.1M545 423.8h.1M531.2 427.3h.1M519.2 424.5h.1M536.1 428.1h.1M529.1 426.2h.1M513.3 426.6h.1M524.3 422.3h.1M521.7 421.3h.1M504.9 426.3h.1M522 429.9h.1M521.6 439.4h.1M519.3 434.2h.1M501.1 442.1h.1M519.1 431.8h.1M523.1 427.4h.1M525 416.2h.1M500.3 430.1h.1M530.3 416.3h.1M493.1 427.2h.1M522.1 437h.1M552.7 429.2h.1M512.6 438.3h.1M517.5 426.4h.1M536.9 419h.1M520 426.2h.1M520.5 426.3h.1M528 436.3h.1M538.9 439.1h.1M502 426.5h.1M513.7 426.9h.1M514.7 428.2h.1M505.8 427h.1M509.3 419.9h.1M507.1 430.5h.1M526.9 429.4h.1M517.1 430.1h.1M525.1 420h.1M530.1 426.9h.1M508.6 413.8h.1M525.5 431.8h.1M545.7 420h.1M527.6 426.4h.1M516.2 426.3h.1M522.1 422.3h.1M498.5 417.2h.1M525.7 421.4h.1M532 434.5h.1M516.6 429.8h.1M521.4 430h.1M543.7 442.8h.1M517.9 428.1h.1M527.6 432.4h.1M512.7 429.2h.1M514 436.1h.1M517 432.1h.1M547.9 427.9h.1M518.5 427h.1M515 431.3h.1M515.6 437.8h.1M521 416.2h.1M532.7 426.7h.1M525.7 426.1h.1M546.9 424.7h.1M525.5 417.9h.1M553.7 432.9h.1M527.2 422.7h.1M536.2 425.1h.1M502.5 426.4h.1M522.1 420.2h.1M522.7 425.1h.1M519.7 416.5h.1M499.3 425.1h.1M536.1 425.2h.1M520.7 428.4h.1M517.7 429.1h.1M520.6 427.6h.1M522.8 436.5h.1M528.8 430.1h.1M507.4 422.2h.1M517.2 426.6h.1M526.9 424.5h.1M525.1 427.4h.1M520.1 425.6h.1M518.1 424.7h.1M517.8 434.9h.1M523.4 428.4h.1M539.7 424.8h.1M510.9 427.8h.1M542.1 425.5h.1M531.5 433h.1M520.2 430.5h.1M533 433.3h.1M505.6 412.4h.1M505.2 431.4h.1M513.4 433.3h.1M521.7 434.9h.1M520.5 428.6h.1M514.3 415.4h.1M526.3 433.4h.1M487.6 426.4h.1M527 421.9h.1M496.6 424.9h.1M515.6 435.7h.1M519.8 435h.1M506.1 435.2h.1M508.1 423.8h.1M523.4 422.6h.1M530.3 427.3h.1M528.4 421.9h.1M517.5 433h.1M503 435.9h.1M517.9 431.5h.1M527.9 428.2h.1M493.3 430.2h.1M534.2 428h.1M518.2 419.2h.1M511.4 437.3h.1M529.2 433.8h.1M544.3 423h.1M527.2 427.9h.1M537.6 429h.1M525.5 433.9h.1M539.7 429.6h.1M540.1 427.2h.1M522 424.4h.1M533.9 422.2h.1M525.9 424.4h.1M524.7 428.4h.1M516.8 427.8h.1M521.1 428.8h.1M533 431.5h.1M507 432.4h.1M531.7 429.1h.1M527.7 431h.1M526.6 428.8h.1M506.3 429.5h.1M523.2 430.3h.1M530.6 418.4h.1M512.5 438.9h.1M524.7 419h.1M494 435.8h.1M530.3 427.8h.1M518.6 433.2h.1M536.7 427.6h.1M498.7 424.3h.1M543.6 440.7h.1M517.8 431.5h.1M532.1 428.1h.1M518.6 428.8h.1M514.8 436.7h.1M560.6 431.7h.1M509.6 431.5h.1M515.1 420.4h.1M517.4 424.7h.1M517.5 429h.1M539.7 437.7h.1M538.3 428.6h.1M511.8 428.7h.1M503.9 436.7h.1M533.9 427h.1M561.2 425.4h.1M540.3 428.7h.1M535.4 420h.1M518.4 431.7h.1M522.3 430.7h.1M500.6 428h.1M506.9 423.3h.1M547.8 429.2h.1M518.4 434.7h.1M549.3 422.8h.1M524.4 422.4h.1M513.9 432.5h.1M530.7 420.9h.1M528.5 425.9h.1M504.9 424.9h.1M531.5 425.2h.1M545.2 422.6h.1M519.1 430.3h.1M517.5 427.9h.1M530 426h.1M525.2 426h.1M511.2 432.9h.1M519.8 434.3h.1M516.4 433.5h.1M528.7 432.9h.1M536 422.2h.1M530.9 426.2h.1M528.1 419h.1M536.8 436.5h.1M529.5 429.6h.1M531.6 425.4h.1M520.4 429h.1M514.4 427.4h.1M531.2 424.8h.1M514.9 431.1h.1M534.4 420.3h.1M502.7 421.9h.1M512.6 428h.1M505.9 423.4h.1M507 437.7h.1M514.1 424.7h.1M520.2 439.5h.1M533.2 437.6h.1M493.6 425h.1M536.2 428.5h.1M501.9 441.3h.1M513.9 428.2h.1M531.9 420.7h.1M523.5 428.7h.1M507.9 440.1h.1M536.9 422.1h.1M511.3 433.5h.1M527.7 428.2h.1M526.9 427.4h.1M540.5 424.9h.1M520.3 427.3h.1M534.9 432.6h.1M509.9 435.3h.1M535.9 422.2h.1M518.9 421.1h.1M552.6 430.9h.1M526.4 428.7h.1M525.6 433.9h.1M542.8 428.2h.1M528.7 433.9h.1M516.8 428.8h.1M534.8 434h.1M511.9 431h.1M537.3 438.5h.1M537 423.7h.1M517.9 435.5h.1M513.6 433.2h.1M525.8 429h.1M523.9 425.1h.1M510.4 432.6h.1M529.9 420h.1M504.6 423.8h.1M519.4 432.6h.1M518.3 419.7h.1M522.1 434.4h.1M530.1 425.6h.1M512.4 430.4h.1M532.2 428.3h.1M522.1 430.9h.1M516.4 427.5h.1M514.3 427.8h.1M484.1 430.4h.1M527.7 432.6h.1M514.9 434.4h.1M525.3 434.9h.1M539 429.7h.1M535.9 426.4h.1M534.8 421.7h.1M517.7 436.5h.1M516 432h.1M532.5 426h.1M527.2 431.7h.1M534.8 433.1h.1M524.1 428.6h.1M534.8 429.4h.1M530.7 419.4h.1M532.1 424.2h.1M528 426h.1M525.7 429.8h.1M526.3 423.4h.1M533.6 425.5h.1M513.5 420.7h.1M538.7 427h.1M523 428.8h.1M534.4 432.2h.1M523.1 434.9h.1M521.3 429.5h.1M521.8 428.8h.1M506.8 430.6h.1M514.8 439.7h.1M519.5 415.7h.1M544.8 425.9h.1M528.1 431.1h.1M544.2 438.2h.1M513 423.8h.1M527.6 429.7h.1M529.4 431h.1M542.8 424.7h.1M517 420.6h.1M531.9 425.6h.1M527.2 421.1h.1M514.6 432h.1M523.5 424.4h.1M522.3 435.8h.1M532.5 422.1h.1M528.9 425.7h.1M518.5 422.9h.1M493.3 435.6h.1M536.9 423.7h.1M541.9 434.7h.1M546.3 419.5h.1M517.2 431h.1M532.3 437.8h.1M521.2 422.2h.1M523.8 439.4h.1M523.5 436.4h.1M523.2 417.7h.1M537 419.1h.1M524.8 424.3h.1M523 432.5h.1M521.7 426.9h.1M527.5 427.3h.1M513.3 433.5h.1M517.7 429.7h.1M523.6 429.4h.1M518.7 427.3h.1M523.4 432.8h.1M518.9 425.7h.1M543.9 424.5h.1M528 424.5h.1M523.6 433.4h.1M545 428.7h.1M528.7 410.6h.1M523.4 429.1h.1M526.2 422.5h.1M527.1 423.7h.1M543.7 432h.1M523.5 423.9h.1M510.4 426.9h.1M530.6 435.6h.1M511.3 428.9h.1M538.7 422.5h.1M520.1 423.1h.1M522.3 420.8h.1M550.6 428.6h.1M538.3 427.2h.1M507.9 436.7h.1M519.5 429.9h.1M515.2 429.3h.1M525.7 430h.1M522.5 427.7h.1M519.7 430.5h.1M517.2 432.8h.1M518.1 435.2h.1M509.5 424.9h.1M527.7 421.3h.1M539.7 423h.1M509.2 430.5h.1M521 411.6h.1M517.3 425.5h.1M531.4 430.9h.1M506.4 425.1h.1M520.9 419.8h.1M513.3 438.4h.1M532.3 434.9h.1M525.1 426.8h.1M522.6 436.7h.1M527.6 433.3h.1M521.5 423.8h.1M510.1 441.6h.1M528.5 424.3h.1M526.8 426.8h.1M521.8 422.5h.1M533.7 427.9h.1M534.2 422h.1M516.8 428.7h.1M515 435.3h.1M542.1 428h.1M549.9 424.1h.1M514.1 439.9h.1M500.9 422.2h.1M516.2 435h.1M517.6 427h.1M510.3 430.2h.1M524.4 428.4h.1M506.6 430.6h.1M505.5 429.5h.1M540.2 420.4h.1M518.6 426.5h.1M523.5 430.1h.1M535.2 426.6h.1M533.1 421h.1M518 423.3h.1M524.2 424.7h.1M516.2 428.6h.1M546.5 427.6h.1M539.8 428.3h.1M505 424.6h.1M524.1 428.5h.1M528.4 423.4h.1M526.9 417.3h.1M541.9 426.5h.1M544.3 414.5h.1M515.5 422.3h.1M522 419.6h.1M512.4 431.9h.1M529 413.9h.1M525.5 429.2h.1M524.4 423.1h.1M502.9 422.5h.1M516.5 431.3h.1M525.5 430.1h.1M507.8 434.3h.1M519.1 433.8h.1M519.3 430.2h.1M528.1 429.4h.1M522.1 427.6h.1M512.1 429.8h.1M530.1 426.3h.1M514.9 422.1h.1M517.6 443h.1M516 430h.1M532.9 430.2h.1M506.1 430.3h.1M523 424h.1M534.7 425.9h.1M517.7 425.1h.1M526.9 420.5h.1M515.9 428.5h.1M550.5 422h.1M533.2 425.1h.1M526.5 431h.1M509.1 425h.1M513.1 431.1h.1M535.2 423.7h.1M556.5 429.2h.1M527.6 428.1h.1M539.2 428.2h.1M512.6 420.7h.1M522.2 425.1h.1M523.8 424.9h.1M532.8 429h.1M510.2 432.4h.1M533.5 432.2h.1M535 425.1h.1M510.3 429.6h.1M507.4 420.3h.1M526.1 419.7h.1M512.8 422.1h.1M502.7 426.9h.1M537.5 413.5h.1M524.8 419.8h.1M518.5 431.4h.1M544.5 422.5h.1M525.2 415.1h.1M516.1 441.6h.1M525.1 428.7h.1M515.9 427.4h.1M516.5 431.8h.1M528.6 422.9h.1M516.5 439.8h.1M519.9 422.5h.1M536.5 422.2h.1M530.5 426.9h.1M529.4 424.9h.1M529.3 433.6h.1M527.2 421.9h.1M535.8 424.1h.1M523.9 428.9h.1M512.3 434.9h.1M515.6 433.8h.1M503.9 445.6h.1M520 425.7h.1M535.7 428.6h.1M543.7 431.6h.1M514.3 426.4h.1M523.9 425.5h.1M519.7 425.7h.1M511.1 423.6h.1M503.9 420.6h.1M524.4 425.3h.1M503.1 420.9h.1M525.4 429.7h.1M523.6 420.2h.1M517.9 438.6h.1M516.6 434.7h.1M509.7 434.5h.1M505 425.4h.1M542.1 432.9h.1M529.6 428.2h.1M520.4 430.9h.1M510.1 424.9h.1M533 431.3h.1M535.4 424.4h.1M516.9 428.8h.1M519.4 417.9h.1M534.2 423.9h.1M527.4 429.8h.1M547.7 423.3h.1M518.8 426.3h.1M532.2 432.4h.1M511.5 428.4h.1M543.4 431.6h.1M515.6 416.8h.1M493.6 433.8h.1M522.4 431.3h.1M522.6 422.7h.1M555.7 414.6h.1M520.6 432.6h.1M523.3 421.7h.1M535.7 420.4h.1M543.4 429.6h.1M523.4 426.5h.1M541 429.9h.1M531.2 420.9h.1M521.2 429.3h.1M525.1 432.6h.1M524.4 429.3h.1M509.9 414.1h.1M541.7 430.6h.1M501.9 429.8h.1M535 422.7h.1M533.3 433.1h.1M522.1 418h.1M511.7 444.2h.1M521 424.4h.1M529.6 435.2h.1M530.6 427.1h.1M526.7 420.3h.1M541.5 426.9h.1M516.1 430.5h.1M525.5 429.3h.1M510.9 433.1h.1M528.8 424.7h.1M525.6 429.9h.1M517.7 433.8h.1M542.1 424.1h.1M531 422.4h.1M490.7 425.1h.1M524.8 431.8h.1M510.4 432.5h.1M548.3 416.2h.1M543.1 421.3h.1M517.9 435.7h.1M524.1 421.6h.1M520.9 428.9h.1M526.7 424.3h.1M528 421.7h.1M546.7 426.7h.1M511.7 427.6h.1M539.6 433.1h.1M517.9 436h.1M526 427h.1M540.3 433h.1M532.5 432.6h.1M513.6 425.9h.1M518.7 425.3h.1M514.9 445.2h.1M523.2 425.7h.1M537.7 426.4h.1M512.2 427.5h.1M527.8 427h.1M529 424.9h.1M529.2 430.5h.1M528.4 432.5h.1M552.9 421.8h.1M570.8 433.5h.1M611.3 434.6h.1M591.3 429.2h.1M610.9 432.1h.1M598.1 427.4h.1M607.2 432.1h.1M572.2 428.8h.1M604.6 430.7h.1M581.3 431.5h.1M600 430.5h.1M573.4 433.6h.1M583.1 429.2h.1" stroke="#55636c" stroke-width="2.6" stroke-linecap="round" fill="none" opacity="1.0"/><path d="M514.3 319.1h.1M525.6 291.4h.1M520.4 304.5h.1M524.8 289.6h.1M522.1 286.4h.1M515.7 306.5h.1M525.7 294.3h.1M527.8 267.6h.1M523.7 310.7h.1M526.9 304.4h.1M517.6 309.9h.1M514.6 320.4h.1M518.4 307h.1M514.5 312h.1M512.2 295.4h.1M530.3 316.3h.1M521.9 318h.1M535.1 295.1h.1M516.8 311.5h.1M522.5 308.4h.1M522.6 303.2h.1M519.9 306.5h.1M522.9 291.7h.1M520.4 302.4h.1M521.2 306.9h.1M510.3 304.4h.1M519 284.2h.1M516.5 310.7h.1M526.2 313h.1M521.1 325.6h.1M526.3 299.4h.1M527.5 289.2h.1M516.6 318.8h.1M538.5 288.4h.1M518.8 305.7h.1M512.5 301.3h.1M526.3 309h.1M528.4 300.8h.1M519.9 310.9h.1M523.7 296.8h.1M522.3 332.6h.1M526.8 312.8h.1M525.1 298.7h.1M531.4 295.8h.1M521.8 304.3h.1M540 298.3h.1M512.8 295.8h.1M523.1 318.3h.1M520.7 320.2h.1M523.1 293.4h.1M509.6 313.5h.1M526 306h.1M517.8 315h.1M513 294.4h.1M511.1 335.8h.1M519 306.6h.1M517.9 326.1h.1M511.8 295.8h.1M514.4 317.1h.1M522.2 305.1h.1M517.3 324h.1M540 302.6h.1M519.5 291.3h.1M524.8 297.3h.1M535.4 296.9h.1M518.2 312.4h.1M524.3 309h.1M521.8 307h.1M519 317.1h.1M527.8 324.8h.1M516.3 295.6h.1M514.8 317.6h.1M520.4 301.9h.1M529.3 297.9h.1M516.9 313.4h.1M524.8 308.3h.1M516.5 299.6h.1M529.4 304.9h.1M515.9 330.9h.1M514.7 319.2h.1M533.6 295.5h.1M522.9 288.4h.1M532.9 278.1h.1M520.5 307.2h.1M525.5 297.9h.1M522.5 296.7h.1M513 312.8h.1M521.6 304h.1M522.6 303.1h.1M521.9 307.9h.1M518 315.2h.1M541.6 312.6h.1M513.2 316h.1M521.3 307.1h.1M519.3 319.9h.1M516.5 294.6h.1M514.2 291.4h.1M523.8 301.9h.1M521.1 327.7h.1M518.1 330.4h.1M512.3 293.5h.1M518.9 297.3h.1M520.7 310.4h.1M523.4 306.6h.1M527.7 318.3h.1M523.6 301h.1M527.9 289.8h.1M529 312.5h.1M508.4 316.1h.1M526.3 294.1h.1M521.4 271h.1M524.5 300.5h.1M523.9 288.9h.1M509.4 313.7h.1M517.4 295.5h.1M526 333.5h.1M519.8 301.9h.1M524.4 307.4h.1M518 310.8h.1M532.5 303.9h.1M520.4 298h.1M530.3 315.1h.1M517.4 282.4h.1M521.1 317.5h.1M526.6 300.5h.1M512.7 299.7h.1M512.1 311.6h.1M522.7 311.8h.1M524.7 310h.1M527 295.7h.1M523.3 299.7h.1M524.9 309.1h.1M512.6 310.2h.1M518.7 305.4h.1M526.4 319.3h.1M517 303.9h.1M515.6 323h.1M501.5 324.5h.1M518.9 309h.1M510 303.6h.1M522.5 321.9h.1M525.7 309.3h.1M521.2 313.2h.1M524.3 291.3h.1M517.6 310.3h.1M521.6 334.7h.1M511.7 301.7h.1M516 308.3h.1M538.5 302.5h.1M506 321.1h.1M520.5 271.1h.1M511 320.7h.1M527 311.8h.1M519.1 303.2h.1M507.3 311h.1M512.5 316.3h.1M524.1 308.7h.1M523.1 313.2h.1M523.2 319.8h.1M519.5 308.5h.1M523.7 312.8h.1M524.8 319.6h.1M523 311.5h.1M513.5 300.8h.1M504.4 316.4h.1M504.4 335.4h.1M521.7 303.6h.1M512.1 310.2h.1M514.3 309.9h.1M518.4 320.6h.1M516.6 302.7h.1M514.7 306h.1M522.8 327.8h.1M522.5 315.9h.1M525.4 300h.1M525.9 317.8h.1M531.2 307.1h.1M518 319h.1M521.9 286.2h.1M497.2 308.7h.1M517.1 316.7h.1M518.6 292.9h.1M529.4 296.1h.1M524.8 313.7h.1M529.9 306.7h.1M529.7 301.8h.1M525.7 309h.1M523.6 296.2h.1M522.4 296.6h.1M516.1 320.6h.1M521.1 298.2h.1M515.5 309.5h.1M522.6 305.6h.1M517.5 318.6h.1M496.8 312.9h.1M503.8 310.4h.1M514.9 316.4h.1M517.7 308.6h.1M520.7 292.1h.1M528.4 299.4h.1M516.1 316.1h.1M508 321h.1M522.1 304.1h.1M529.6 286.9h.1M532.4 297.5h.1M513.1 322.5h.1M517.6 315h.1M513.9 323.8h.1M527.8 294.5h.1M524.4 296h.1M521.3 298.5h.1M526.1 292.3h.1M515.9 308.4h.1M521.5 272.2h.1M519.1 310.8h.1M517.2 303.7h.1M519.2 299.2h.1M520.9 312.4h.1M520.9 312.8h.1M528 307.5h.1M524 303.4h.1M519.7 305.8h.1M509.3 284h.1M512 276.8h.1M517.7 297.9h.1M517.5 307.6h.1M510.3 323.2h.1M515 313.4h.1M521.5 298.8h.1M518 302.7h.1M521 293.4h.1M519.3 305.6h.1M515.8 305.2h.1M516.5 305.8h.1M518.9 308.4h.1M519.8 315.6h.1M505.7 320.4h.1M506.6 290.3h.1M511.7 316.6h.1M527.8 287.2h.1M514 308.4h.1M525.8 307.3h.1M514.7 321.2h.1M520.7 305.2h.1M514.3 304.9h.1M523.9 303.1h.1M518.1 319.9h.1M521.3 308.9h.1M525 322.6h.1M512.9 332h.1M520.3 318.1h.1M519.5 300.4h.1M523 305.2h.1M520.5 307.8h.1M523.8 283.6h.1M508.8 332.9h.1M526.1 294.5h.1M530 313.8h.1M518.1 288.4h.1M516.1 307.1h.1M519.7 313.2h.1M514.7 311.6h.1M524.2 286.9h.1M524.2 301h.1M522.3 316.7h.1M528 305.6h.1M522.8 307.8h.1M513 315.1h.1M518.3 268.9h.1M522.1 308.5h.1M524.8 313.3h.1M514.2 327.5h.1M506.3 321.5h.1M530.7 297.2h.1M516.6 320.1h.1M520.7 323.1h.1M527.6 299h.1M515.7 299.4h.1M517.7 304.5h.1M516.5 300.9h.1M526.2 284.3h.1M526 285.7h.1M517.5 274.8h.1M522.7 301.6h.1M504.6 312.6h.1M526 293.8h.1M521 307.4h.1M518.6 314.5h.1M510.1 329.5h.1M517.9 315h.1M515.9 297.8h.1M526.7 317h.1M517.9 306.3h.1M517.1 311.5h.1M518 314.7h.1M521.7 314.9h.1M523.4 285.5h.1M526.5 289.4h.1M514.5 308.8h.1M527.6 317.7h.1M515.9 320.4h.1M521.8 309.8h.1M521.5 302.7h.1M523.8 303.3h.1M520.4 299.4h.1M511 288h.1M518.9 297.4h.1M525.2 306.9h.1M517.7 293.9h.1M520 306.4h.1M526 303.7h.1M516.4 303.5h.1M522.1 301.8h.1M520.7 308.6h.1M516.1 306.4h.1M525 279.6h.1M526.3 309.5h.1M529.6 308.2h.1M518.9 300.4h.1M535.2 307.8h.1M523.6 297h.1M517.9 307.5h.1M516.5 295.6h.1M514.2 312.1h.1M522.3 308.3h.1M508.5 294.1h.1M520 298.5h.1M515.2 309.9h.1M517.1 312.9h.1M519.3 307.6h.1M510 286.5h.1M514.4 298h.1M525 307.4h.1M517.1 308.4h.1M519.7 306h.1M518.9 293.6h.1M524.3 304h.1M531.8 298.1h.1M527.4 293h.1M525.9 291.6h.1M523.1 300h.1M516.4 294.1h.1M527.3 311.7h.1M513 318.3h.1M507.9 322.9h.1M516.7 283.4h.1M516.3 298h.1M521 307.6h.1M524.8 301h.1M529.3 302.1h.1M519.7 302.7h.1M519 291.1h.1M514.9 323.9h.1M512.6 282.7h.1M530.2 314.7h.1M516.4 292.2h.1M513.9 321h.1M522.8 309.5h.1M520.8 310.6h.1M524.4 302.3h.1M517.7 294.7h.1M515.8 294.6h.1M527 307.1h.1M517.2 305.2h.1M521 294.1h.1M523.4 291.4h.1M511.6 298h.1M518.2 305.1h.1M512.7 313.2h.1M522.7 324.9h.1M518.5 302.1h.1M495.8 329.5h.1M523.7 314.9h.1M500.3 323.6h.1M518.5 294.8h.1M515.7 311.1h.1M515.4 315.5h.1M523.2 282.2h.1M522.8 313.2h.1M506.2 316.1h.1M516 313.4h.1M524.1 308h.1M520.7 316h.1M523.1 303h.1M522 301.7h.1M511.5 329.1h.1M516.5 312.4h.1M518 273h.1M523.1 318.5h.1M526.4 318h.1M527.4 314.3h.1M511.2 292.9h.1M516.4 319.4h.1M519 311.4h.1M517.2 316.3h.1M502.9 304.7h.1M541.8 298.5h.1M532.7 296.3h.1M519.8 301h.1M514.2 318.8h.1M521.2 295.4h.1M502.9 288.5h.1M517.7 309h.1M524.8 303.2h.1M535.2 280.1h.1M526.1 299h.1M534.3 299.1h.1M513.3 318.6h.1M497.1 314h.1M526.1 299.2h.1M522 297.2h.1M520 302.2h.1M515 297.1h.1M513.9 310.3h.1M517.9 292.6h.1M532.3 310.9h.1M523.5 318.7h.1M532.3 305.6h.1M519.6 308.2h.1M523.8 317.5h.1M515.8 306.9h.1M530.1 305.4h.1M522.5 310h.1M523.4 306.5h.1M508.6 307.8h.1M521.3 321.1h.1M518.5 318.6h.1M518 312.3h.1M515.2 298h.1M515.5 299.6h.1M512.9 314.9h.1M517.2 293.6h.1M517.2 321.2h.1M523.3 297.2h.1M511.3 321.2h.1M512.1 318.4h.1M517.3 300.7h.1M512.1 301.8h.1M521.6 279.9h.1M518.5 305.5h.1M516.6 319.3h.1M521.3 312.9h.1M525.8 303.2h.1M521.4 330.2h.1M520.4 310.3h.1M522.2 309.7h.1M516.4 303.5h.1M512.1 313.2h.1M519.2 347.5h.1M521.4 308.8h.1M536.9 286.7h.1M517.9 308.6h.1M511.6 324.7h.1M519.7 315.7h.1M517.5 299.6h.1M514.6 309.3h.1M532.2 287.4h.1M533.5 315h.1M522.7 298.6h.1M517.8 302.3h.1M523.9 295.2h.1M521.2 290.9h.1M507.4 326.2h.1M522.5 322.1h.1M522.4 302.8h.1M536.5 308.4h.1M515.3 319.5h.1M520.2 301.3h.1M519.8 301.2h.1M508.3 294.5h.1M531.5 321.4h.1M506.4 307.8h.1M513.4 306.1h.1M518.5 301.9h.1M510.7 294.9h.1M521.2 321.2h.1M516.6 289.9h.1M521.9 296.4h.1M524.4 286h.1M521.8 295.6h.1M521.2 300.6h.1M519.7 301.2h.1M525.5 287.5h.1M527.7 297.1h.1M519 304.9h.1M520.9 288.3h.1M517.1 311.2h.1M522.4 302.7h.1M519.9 296.9h.1M517.9 302.9h.1M512.7 309.4h.1M502.8 306.8h.1M527.6 306h.1M524.9 315.1h.1M526.8 294h.1M523 298.1h.1M524.6 314.1h.1M521.6 306.1h.1M525.4 294h.1M526.7 302.1h.1M533.2 296.2h.1M514.6 306.1h.1M525.7 287.8h.1M535.7 283.7h.1M529 292.9h.1M512.6 304h.1M517.8 334.2h.1M520.1 320.2h.1M519.5 319.3h.1M513.2 306h.1M522.3 320h.1M514.9 307.8h.1M535.4 306.6h.1M521.6 314.2h.1M522.1 286h.1M526.2 286.3h.1M523.2 291.4h.1M514.7 320.5h.1M518.1 315.3h.1M521.7 307.6h.1M513.1 301.7h.1M523.8 304.3h.1M529.7 312.1h.1M527.4 297.3h.1M528.8 317.7h.1M528.4 296.7h.1M522.4 320.9h.1M530 301.6h.1M521.5 298.3h.1M522.2 303.7h.1M529.1 297h.1M535 303.9h.1M520.9 287.2h.1M508.2 297.8h.1M536.3 306.7h.1M527 310.1h.1M533.2 301.1h.1M526 326.5h.1M523.2 292.6h.1M516.8 303.5h.1M515.8 301.4h.1M531.8 305.5h.1M526 303.2h.1M519.7 343.6h.1M513.5 305.7h.1M518 292.9h.1M518.3 306.1h.1M501.4 303.8h.1M520.2 319.6h.1M541.5 292.6h.1M518 304h.1M518.7 317.2h.1M526.7 283h.1M510.9 297h.1M521.7 318.6h.1M512 325.7h.1M518 305.1h.1M522 304.5h.1M517.8 319.1h.1M522.6 292.6h.1M511.3 290.6h.1M525.5 297.8h.1M516.7 282.5h.1M530.7 272.6h.1M518 301.6h.1M510.8 316.1h.1M518.8 311.7h.1M513.5 316.4h.1M521 284h.1M519.5 304.1h.1M524.8 329.5h.1M530.2 290.9h.1M523.6 296.2h.1M515.3 313.6h.1M508.7 305.8h.1M517.6 313h.1M518.5 305.7h.1M516.6 322.9h.1M513.2 317.7h.1M512.5 311.4h.1M523.5 303.4h.1M507.7 315.8h.1M522 294.5h.1M524.9 313.7h.1M513.2 318.9h.1M512.9 315.4h.1M521 289.9h.1M517.3 310.5h.1M520.8 308.5h.1M534.5 324.6h.1M521.7 290.8h.1M525.3 298.3h.1M517.5 305.2h.1M514.7 321.5h.1M522 301.5h.1M513.3 317.7h.1M527.7 307.4h.1M517 317.4h.1M518.4 309.9h.1M514.4 279.2h.1M517.1 301.6h.1M514 308.4h.1M512.6 326.4h.1M506.8 313.7h.1M520.6 302.6h.1M533.2 291.9h.1M511.7 306.1h.1M531.8 304.4h.1M524.3 316.2h.1M515.7 288.8h.1M533.9 284.7h.1M512.6 300.1h.1M519.3 308.4h.1M532.7 294.1h.1M513.6 300.7h.1M518.3 314.9h.1M517.7 282.7h.1M512.8 310h.1M511.7 308.2h.1M510.6 303.4h.1M526.7 311h.1M526 311.5h.1M506.2 335.7h.1M519.6 307.1h.1M514.8 279.2h.1M526.9 301.1h.1M511.9 315.8h.1M524.4 319h.1M518.8 314.8h.1M512.6 313.4h.1M519 309h.1M517.2 301.1h.1M529.4 306.5h.1M526.1 278.9h.1M513.9 317.7h.1M519.9 310.9h.1M529 307.9h.1M512.2 289.7h.1M510.7 303.2h.1M528.9 299.9h.1M522.9 308.7h.1M516 300.4h.1M519.2 309.1h.1M524.5 314.3h.1M503.7 317.7h.1M531.2 293.1h.1M519.7 303.4h.1M529.9 286.5h.1M518.4 315.3h.1M532.5 300.4h.1M514.4 319.7h.1M530 298.9h.1M501.1 317.7h.1M521.1 300.7h.1M528.5 302h.1M511.5 307.1h.1M507.2 306.9h.1M521.3 303.6h.1M523.4 310.6h.1M523.9 315h.1M515.1 314h.1M523.4 300.1h.1M515.6 290.7h.1M535.9 307.7h.1M521.2 269.9h.1M527.6 313.9h.1M514.1 320.9h.1M519.9 290.1h.1M531.6 313.8h.1M517.3 301.5h.1M524.2 315.4h.1M519.2 298.7h.1M516.7 298.7h.1M515.1 297.7h.1M525.1 307.9h.1M521.5 291.7h.1M514.5 329h.1M511.3 302h.1M525.3 327.7h.1M527.6 302.6h.1M522.3 303h.1M525.5 299h.1M508.4 301h.1M516 310.6h.1M519.3 315.3h.1M520.4 306.9h.1M518.3 298.4h.1M521.1 308.2h.1M518.1 301h.1M513.9 307h.1M525.8 276.5h.1M517.6 301.3h.1M517.1 306.5h.1M530.5 301.1h.1M520.2 302.2h.1M517.7 320.1h.1M511.2 314h.1M515.9 317.8h.1M526.3 308.5h.1M522.7 308.1h.1M517 328.3h.1M519.9 302.1h.1M519.8 310.6h.1M523.7 308.3h.1M517 309.7h.1M499.9 313.8h.1M532.8 307.3h.1M522.9 310.4h.1M520.4 296.8h.1M530 312.6h.1M510.8 290.2h.1M527.8 320.1h.1M519.5 319.6h.1M525.4 303.9h.1M516.1 290.1h.1M520.8 305.7h.1M524.4 315.2h.1M527.7 292h.1M525.8 292.9h.1M521.5 317.9h.1M517.4 304.1h.1M531.5 293.6h.1M526.9 272.1h.1M519.4 301.5h.1M520.5 293.5h.1M510.8 307.4h.1M515.7 305h.1M510.3 321.2h.1M522.2 296.9h.1M517.3 318h.1M523.4 292.7h.1M509.9 287.5h.1M517.6 303.4h.1M514.8 287.5h.1M523.5 326.4h.1M514.1 305.5h.1M509 295h.1M523.1 323h.1M522.6 299.5h.1M512.5 302.5h.1M529.1 303.4h.1M525 310.9h.1M501.7 321.3h.1M522.3 294.4h.1M514.5 299.3h.1M519 301.7h.1M511.3 288.5h.1M530.8 294h.1M515 300h.1M523.3 295.8h.1M525 309.1h.1M522.2 313h.1M521.9 307.2h.1M518.2 307.6h.1M524.3 291h.1M519.8 301.4h.1M509.6 308.5h.1M524.5 310.6h.1M516.3 304.5h.1M516.9 310h.1M517 301.5h.1M511.6 289.9h.1M513.3 308.3h.1M510.8 301.6h.1M526.1 286.1h.1M527.3 316h.1M519.7 318.2h.1M508.2 316.2h.1M533.8 297.5h.1M515 323.6h.1M504.9 312.4h.1M506.9 315.6h.1M523.2 295.2h.1M529.8 302h.1M510 335.5h.1M515.7 305h.1M516.1 305.3h.1M510 325.9h.1M505.6 338.3h.1M520.9 307.3h.1M512.5 325.7h.1M525.6 294.9h.1M508.9 303.7h.1M527 297.7h.1M519.9 318h.1M512.6 330.3h.1M519.2 301.8h.1M518.2 306.8h.1M531.1 317.5h.1M511.7 313.1h.1M532.9 310.2h.1M524.5 315.4h.1M515.9 321.9h.1M530.4 306.8h.1M500.3 287.9h.1M521.9 304.3h.1M520.7 305.3h.1M521 300.1h.1M522.9 310.9h.1M516.6 312.7h.1M514.3 326.1h.1M526.7 310.8h.1M519.1 307.9h.1M512.7 289.2h.1M527.6 298.7h.1M521.2 292.3h.1M510 313.4h.1M528 302.4h.1M516 305.3h.1M509.9 313.4h.1M518.8 302.5h.1M518 313.5h.1M519.2 312.2h.1M507.8 285.3h.1M528.4 318.8h.1M527.8 299.6h.1M522.6 296h.1M521.4 303.3h.1M523.3 308h.1M514.1 314.7h.1M527.6 283.6h.1M515.1 308.5h.1M524.6 311h.1M515.8 312.3h.1M517.9 311.6h.1M537.4 314.1h.1M526.3 301.3h.1M513.3 312h.1M516.6 308.2h.1M520 311.9h.1M517.4 309.8h.1M525.2 303h.1M516.8 305.3h.1M509.7 310.8h.1M514.3 314.1h.1M522.6 277.6h.1M526.3 290h.1M535.5 268.7h.1M533.9 296.5h.1M523.4 296h.1M517.7 308.4h.1M523.4 303.6h.1M517.8 316.9h.1M517.7 297.8h.1M517.9 296.8h.1M528.2 295.6h.1M528.5 302.9h.1M526.9 307.1h.1M508.3 299.1h.1M531.2 292.4h.1M514.8 290.3h.1M513.9 309.7h.1M524.6 299.8h.1M513.5 295.8h.1M510.2 301.6h.1M510.4 311.5h.1M527.6 327.4h.1M522.5 315.7h.1M515.9 296.4h.1M521.5 301.2h.1M525.7 275.6h.1M526.4 279.3h.1M518.2 282.6h.1M516.6 302.6h.1M523.9 297.7h.1M509.4 297.5h.1M523.6 299.6h.1M521.3 301.1h.1M526.7 321.7h.1M509.6 289.8h.1M524.3 300.7h.1M524.4 307.8h.1M516 313.5h.1M532 282.2h.1M530.9 307.2h.1M527 293.3h.1M528.6 296.6h.1M529.4 291.3h.1M523.1 320.6h.1M521.6 313h.1M512.6 298.8h.1M517.2 292.1h.1M527.3 316.3h.1M521.8 317.1h.1M518.2 297.1h.1M519.4 310.6h.1M531.8 287.2h.1M510.1 290.2h.1M510.4 307.6h.1M528.4 286.8h.1M523.1 311.6h.1M511.1 319.5h.1M513.5 306.2h.1M520.2 309.2h.1M526.6 322.9h.1M519.4 310.6h.1M504.3 318.6h.1M524.7 322.2h.1M521.7 293.8h.1M515.6 321.9h.1M513 315.3h.1M525.7 307h.1M520.4 315.3h.1M522.6 310h.1M521.8 308.1h.1M522.5 299.8h.1M525.5 301.9h.1M535.5 301h.1M512.4 316.1h.1M519.2 309.1h.1M513.5 313.7h.1M527.8 305h.1M516.9 316.7h.1M511.4 270.7h.1M521 297.9h.1M508.9 323.9h.1M517 302.7h.1M516.6 311.9h.1M501.1 317.6h.1M544.1 280.3h.1M519.6 303.7h.1M513.2 285.9h.1M522.4 309.7h.1M524.6 313.4h.1M512.3 304.1h.1M515.1 313.2h.1M521.6 304.3h.1M522.4 307.2h.1M511.5 308.4h.1M516.3 310.2h.1M517.7 316.5h.1M521.5 312.7h.1M520.3 305.6h.1M513 306.8h.1M516.6 311.8h.1M535.6 301.6h.1M518.5 300.6h.1M518.7 303.9h.1M520.7 309.7h.1M524.6 300.9h.1M524 294.2h.1M516.4 302.7h.1M510.6 301h.1M518.2 311.3h.1M513.8 298.2h.1M517.6 302.4h.1M517.5 322.5h.1M520.7 310h.1M532.8 293h.1M516.2 322.6h.1M508.8 301.9h.1M524.9 297.5h.1M523.9 311.5h.1M512.1 291.8h.1M523.8 305.3h.1M520.1 309.6h.1M515.1 314.2h.1M521.8 300.8h.1M522.9 301.3h.1M523.6 305.2h.1M525.4 319.1h.1M522.7 287.1h.1M518.8 313.7h.1M532.8 308.8h.1M507.5 326h.1M519.9 288h.1M515.3 319.8h.1M525.5 298h.1M524.4 308.2h.1M510.9 301.2h.1M534.9 273h.1M514.5 305.6h.1M533.7 309.6h.1M503.9 331.9h.1M529.9 297.8h.1M520.1 292.9h.1M524.5 316.1h.1M516.5 303h.1M519.1 317.5h.1M518.2 318.8h.1M521 303.3h.1M524.2 304.6h.1M518 297.4h.1M521 286.7h.1M514.8 306h.1M516.5 318.9h.1M513.7 320.7h.1M524 305.9h.1M522.7 347h.1M516.7 301.3h.1M525 305.7h.1M531.6 298.9h.1M518.8 298.4h.1M502.5 299.1h.1M532.1 300.8h.1M525.1 300.7h.1M523.7 308.9h.1M534.1 307.2h.1M516.7 295.5h.1M520.8 309.9h.1M511.8 299.5h.1M525.5 317.7h.1M522.2 306.9h.1M517 275.9h.1M514.1 289.4h.1M517.2 316.5h.1M519.5 300h.1M531.2 299.1h.1M519.4 303.1h.1M519 307.1h.1M518.7 309.9h.1M507.5 302.2h.1M514.7 322.4h.1M512.9 300.6h.1M521.3 301.8h.1M507.9 304.4h.1M500.4 311.1h.1M519.2 322.1h.1M498.3 337.6h.1M507.4 301.4h.1M525.3 304.7h.1M503.6 317.8h.1M520.1 304.3h.1M520.4 313.8h.1M514.7 294.6h.1M504.6 317.6h.1M536.5 277.1h.1M515.1 312.3h.1M521.9 312.4h.1M514.6 322.1h.1M525.8 291h.1M505.7 317.3h.1M503.5 317.8h.1M515.2 296.9h.1M512.1 311.1h.1M513.6 285.5h.1M519.6 292.8h.1M523.3 295.6h.1M517.2 304.1h.1M527.2 295.5h.1M518.8 280.3h.1M523.6 309.1h.1M532.2 286h.1M530.3 313.8h.1M509.3 308.2h.1M534.1 295.9h.1M507.2 281.5h.1M528.2 298.4h.1M521.8 293h.1M521.5 303.8h.1M515.4 302.8h.1M521.5 326.4h.1M528.6 281h.1M515.3 294.8h.1M515.8 311.2h.1M527.9 329.4h.1M528.6 334.4h.1M528 292.9h.1M517.6 311.5h.1M525.9 266.6h.1M526.2 303.7h.1M525.4 318.7h.1M527.1 315.1h.1M524.9 282.4h.1M515.2 292.5h.1M526.3 278.3h.1M523.2 299.7h.1M518.2 283.6h.1M523.1 309.9h.1M517.2 300.4h.1M520.8 314.5h.1M515.6 304.5h.1M531.8 302.9h.1M526.2 331.1h.1M519.7 319.5h.1M514.2 292.7h.1M510.9 319.5h.1M522.2 311.8h.1M517.4 317.7h.1M521.4 311.6h.1M511.2 282.2h.1M506.9 300.1h.1M524.6 279.6h.1M520.9 290.2h.1M512.9 298.7h.1M508.5 327.9h.1M523.7 306.3h.1M517.7 307.7h.1M524.5 320.7h.1M532.3 295.9h.1M520.4 322.7h.1M520.3 307.5h.1M517.9 296.2h.1M526.6 301.2h.1M508.6 302.5h.1M504.9 318.3h.1M518.1 317.9h.1M512.3 303.1h.1M529.8 302.3h.1M510.4 333.1h.1M517.4 308.7h.1M520.4 303.5h.1M510 311.4h.1M513 309h.1M518.8 300h.1M532.8 321.8h.1M521 333.8h.1M524.8 298.5h.1M514.3 296.8h.1M527.6 299.5h.1M534.7 285.6h.1M523.1 314.1h.1M541.4 288.3h.1M509.6 313.7h.1M513.1 309.9h.1M517.6 312.6h.1M516.2 289.7h.1M520 306.7h.1M523.1 309.2h.1M518.4 315.7h.1M520 310.8h.1M523.9 298.9h.1M521.9 313.9h.1M512.5 323.3h.1M514.7 318.1h.1M531 295.7h.1M517.2 311.2h.1M515.8 295.1h.1M522.5 303.6h.1M516.4 314.4h.1M521.9 296.2h.1M515.8 331.5h.1M521.4 315.4h.1M524.9 300.2h.1M515.4 299.4h.1M512.3 305.1h.1M530.9 304.3h.1M516.4 286h.1M507.4 304h.1M512.8 293.3h.1M520.5 301.1h.1M514 322.4h.1M509.8 305.3h.1M507.1 329.6h.1M530.6 312.3h.1M520.5 314h.1M520.9 298.5h.1M512.2 315.3h.1M519.5 303.4h.1M523.2 317.3h.1M519.9 312.7h.1M519 314.6h.1M522.5 305.9h.1M523.4 297.4h.1M517.2 303.1h.1M526.9 300.5h.1M519.6 326h.1M526.4 300.6h.1M517.1 282.4h.1M510.5 311.2h.1M514.4 325.4h.1M516.7 296.9h.1M524.1 318.1h.1M525.5 308h.1M523 304.6h.1M514 308.6h.1M525.5 310.9h.1M513.6 290.7h.1M515.5 312.6h.1M521.6 298.3h.1M519.1 309.1h.1M523.8 320.1h.1M533.4 298.9h.1M521.9 306.6h.1M527.4 326.1h.1M513.6 331.1h.1M523.7 297.1h.1M517.1 297.5h.1M517.2 310.5h.1M528.4 299.5h.1M522.5 306.7h.1M524.1 293.6h.1M514.8 311.8h.1M530.7 291.8h.1M518.1 307.8h.1M515.1 313h.1M521.3 295.3h.1M526.4 289.7h.1M527 291.5h.1M513.1 319.9h.1M520.4 282.6h.1M535.1 287.9h.1M533.9 309.6h.1M514.6 306.6h.1M517.7 317.1h.1M504.2 325h.1M515.2 309.9h.1M515.3 305.3h.1M520.3 298.1h.1M514.1 304.3h.1M524.4 316.6h.1M518.5 313.1h.1M516.4 315h.1M525.7 293.7h.1M519.1 290.4h.1M514.7 300h.1M521 299.7h.1M519.4 313.9h.1M521.2 315.3h.1M514.4 331.8h.1M519.5 301.1h.1M523.1 304.9h.1M504.6 306.9h.1M513.8 305.9h.1M517.8 297.6h.1M517.8 312.3h.1M536.8 275.8h.1M540.4 299.2h.1M532.3 269.4h.1M521.8 315h.1M527.8 287.6h.1M528.1 296.8h.1M509.9 305.7h.1M518.4 293.1h.1M520.3 307.6h.1M522.9 300.9h.1M504.1 328.4h.1M527 285.8h.1M513.9 299.7h.1M523.2 311.2h.1M527.8 307.9h.1M511.5 308.7h.1M523.3 303h.1M519.4 321.3h.1M515 310.2h.1M523.2 318.7h.1M534.7 291h.1M522.2 308.3h.1M508.4 301.6h.1M515.9 298.7h.1M512.8 314.2h.1M526.8 295h.1M520.4 320.7h.1M517.8 317.2h.1M527.9 287.1h.1M519.5 309.5h.1M526.2 265.9h.1M510.9 314.9h.1M519.1 294.5h.1M520.2 305.4h.1M522 214h.1M526 222h.1M520 240h.1M535 245h.1M524 248h.1M515 256h.1M527 259h.1M518 263h.1M530 270h.1M483 328h.1M515 354h.1M528 352h.1" stroke="#7b1d48" stroke-width="2.6" stroke-linecap="round" fill="none" opacity="1.0"/><path d="M757.5 273.8h.1M706.1 311.3h.1M718.6 305.2h.1M726.5 295.1h.1M719.5 303.7h.1M734.1 314.8h.1M694.4 326.2h.1M707.6 315.1h.1M717 316.6h.1M684.3 323.4h.1M703.8 327.6h.1M729.7 301.6h.1M712.4 321.6h.1M736.7 306.3h.1M724 302.6h.1M710.6 297.5h.1M710.8 311.8h.1M705.8 299.2h.1M713.2 307.4h.1M704.2 303.8h.1M720.6 309.1h.1M708.8 293.7h.1M718.4 306.8h.1M724.8 321.5h.1M733.6 309.5h.1M733.9 300.1h.1M724.3 319.2h.1M716.3 303.3h.1M719.8 312.2h.1M731.2 304.8h.1M729.7 292.5h.1M721.6 310.2h.1M727 330.6h.1M722.9 290.9h.1M726.4 294.1h.1M720.8 324.7h.1M721.4 296.5h.1M708.1 310.7h.1M713.1 306h.1M720.6 299.4h.1M681.3 334.5h.1M684.4 302.3h.1M717.3 294.6h.1M699.4 312.5h.1M717.7 312h.1M767.5 312.8h.1M722.6 304.6h.1M743.5 307.1h.1M748.8 313.9h.1M709.6 317.5h.1M719.6 312.3h.1M726.7 297h.1M723.9 288.9h.1M750.5 307.4h.1M721 299.2h.1M731.2 314h.1M708.1 304.6h.1M729.3 282h.1M708.7 308.6h.1M727.1 282.8h.1M729.6 302.8h.1M700.1 312h.1M749.4 289.9h.1M723.9 326.1h.1M728.2 308.3h.1M736.9 293.3h.1M751.9 305h.1M747 302.7h.1M733.8 297.1h.1M723.8 286h.1M706.8 303.2h.1M728 336.8h.1M727.4 303.5h.1M734.7 307.5h.1M728.3 323.5h.1M704.1 301.5h.1M708.7 279.2h.1M752.3 279.2h.1M701.9 272.1h.1M711 309.4h.1M726.6 303.4h.1M723 298.6h.1M718 300.8h.1M708.6 343.2h.1M706.3 321.1h.1M715.2 312.8h.1M722.5 294.7h.1M708.6 301.8h.1M717 309.7h.1M707.6 308.4h.1M708.9 307.7h.1M758.4 283.9h.1M721.7 281.7h.1M724.2 307.8h.1M713.1 310.8h.1M709.7 315.6h.1M729.3 308h.1M726.6 324.7h.1M723.1 301.3h.1M721.6 307h.1M726.2 319.4h.1M694.3 313.5h.1M731.9 312.4h.1M741.7 289.7h.1M718.3 303.1h.1M708.4 289.9h.1M721.3 303.7h.1M725 328.8h.1M707.2 330.5h.1M713.7 310.1h.1M721.2 311.7h.1M734.1 312h.1M701.1 299.9h.1M713.5 303.8h.1M718 301.2h.1M714.8 268.1h.1M749.1 279.2h.1M725.2 294.7h.1M729.1 295.7h.1M706.6 309.7h.1M725.6 284.5h.1M709.1 313.7h.1M745.2 283.6h.1M730.2 306.7h.1M721.1 309.5h.1M708.6 309.2h.1M737.6 326.3h.1M708.5 294h.1M729.7 301.6h.1M698.2 315.9h.1M730.9 328.8h.1M699 314.2h.1M722.2 311.1h.1M717 308.9h.1M745.2 328.8h.1M706.8 308.2h.1M694.8 299.2h.1M696.8 311h.1M716.3 311.4h.1M740.4 340.6h.1M707.8 286.8h.1M703.7 298.9h.1M724.4 330.1h.1M723.4 299.8h.1M719.4 298.5h.1M687.1 312.5h.1M708.2 298.9h.1M703.7 299.7h.1M698.6 315.8h.1M724.6 289.5h.1M725.4 315.6h.1M732.5 310.2h.1M718.9 302.3h.1M721.4 339.2h.1M718.4 296.2h.1M718.6 311.8h.1M717.6 328.5h.1M730.1 306.8h.1M701.2 307.5h.1M733.6 298.8h.1M721.8 307h.1M719.9 319.1h.1M722.6 306h.1M704.6 324.3h.1M708.1 295.7h.1M739.5 298.3h.1M724.9 312.2h.1M713.1 301.7h.1M715 302.1h.1M742.2 283.6h.1M726.6 310.1h.1M717.6 311.9h.1M729.7 305.2h.1M714.2 295.6h.1M713.3 294.1h.1M730.3 312.2h.1M710 305.6h.1M711.5 314.9h.1M719.3 311h.1M733 287h.1M711.4 297.4h.1M732.8 311h.1M722.5 287.6h.1M710.9 294h.1M728.4 327.7h.1M714.8 300h.1M732.8 303.2h.1M731.3 315.9h.1M738 339.8h.1M741.7 272.4h.1M722.5 302.8h.1M726.1 313.6h.1M689.1 315.9h.1M716.7 298.3h.1M742.8 309.3h.1M719.9 289.4h.1M726.1 317.5h.1M718.2 306.3h.1M708.5 310.5h.1M707.4 302.5h.1M733.4 295.7h.1M724.4 317.3h.1M720.3 307.6h.1M751.8 313.6h.1M713.7 323.2h.1M710.3 303.8h.1M732 297.9h.1M724.2 304.5h.1M703.2 308.7h.1M726.7 323.9h.1M721.2 333.1h.1M711.2 297.1h.1M674.6 303h.1M707.4 310h.1M731.2 289.2h.1M728.5 339.4h.1M720.7 326.1h.1M739 316.8h.1M704.5 348.3h.1M722.2 321.2h.1M723.5 291.2h.1M721.4 311.2h.1M719.5 302.8h.1M719.8 312.4h.1M721.8 301.8h.1M723.2 301.1h.1M713 296.8h.1M722.7 310.9h.1M730.5 319.7h.1M695.9 304.6h.1M730.2 305.3h.1M758.3 297.7h.1M728.4 300.7h.1M721.8 301.5h.1M719.6 314.4h.1M739.3 327.6h.1M738.1 305.7h.1M715.4 315h.1M731.5 295.3h.1M710.2 308.7h.1M712.6 309.2h.1M713.9 297.3h.1M728.9 310.3h.1M724 323h.1M734.5 317.8h.1M722.6 301.2h.1M695.3 303.8h.1M722.8 311.1h.1M725.6 302.6h.1M746.6 310.5h.1M705.6 306h.1M717.3 308.7h.1M692.3 309.6h.1M730 305.8h.1M703.3 305.4h.1M716.2 290h.1M731.8 308.7h.1M751.5 292.2h.1M718.3 307.9h.1M725.1 302.8h.1M715.5 308h.1M733.8 312.3h.1M720.6 321.1h.1M732.2 303.3h.1M702.7 302.9h.1M730.8 314.1h.1M694.2 312.6h.1M720.4 303.7h.1M749.4 293h.1M705.7 321.2h.1M706.3 295h.1M726 304.3h.1M707.4 310.4h.1M684.8 314.1h.1M701.3 344.2h.1M716.1 292.8h.1M730.4 301.1h.1M723.4 307.5h.1M723.3 307.9h.1M740.8 316.2h.1M705.1 270.8h.1M751.8 282.4h.1M732 291.3h.1M703.8 283.2h.1M738.6 286.6h.1M727.5 306.5h.1M717 303.1h.1M726.1 321.7h.1M727.8 279h.1M695.5 322.9h.1M707.1 314h.1M731.8 302.1h.1M749.1 302h.1M721.6 302.7h.1M731.8 306h.1M677.8 316.7h.1M685.9 308.3h.1M711.5 301h.1M713.1 303h.1M725.2 312.9h.1M714.1 304.5h.1M723.5 316.7h.1M716.2 304.7h.1M725.2 304h.1M738.4 314h.1M725.3 289.8h.1M756.6 288h.1M720.7 313.6h.1M717.6 311.9h.1M695.9 321.7h.1M711.3 319.9h.1M726.2 299.3h.1M730.7 304.1h.1M733.1 334.1h.1M711.1 296.4h.1M709.1 316.8h.1M706.1 316.5h.1M714.3 312.8h.1M718.6 312.3h.1M692.9 310.3h.1M736.3 301.6h.1M712.1 308.8h.1M724.4 308h.1M741.4 300.3h.1M751.6 320.4h.1M719.7 312.3h.1M745.5 327.4h.1M730.2 310.9h.1M724.1 313.1h.1M736.8 320.3h.1M716.5 318.4h.1M720.1 289.7h.1M712 300.9h.1M710.7 293h.1M729.6 321.3h.1M727.9 300.2h.1M715.9 305.4h.1M717.7 308.9h.1M717.7 324.6h.1M707.6 298h.1M725 297h.1M704.2 323.3h.1M719.5 305.4h.1M705.2 322.3h.1M716.9 324.5h.1M730.1 298.7h.1M729.9 296.7h.1M716.8 294.7h.1M723.4 300.6h.1M716.6 288.6h.1M716.6 309.7h.1M714.9 292.3h.1M735.8 302.7h.1M720.2 302.2h.1M718.5 316.2h.1M701.7 291.1h.1M723.5 305.9h.1M718.5 330h.1M722 294.4h.1M701.4 319.3h.1M729.1 293.8h.1M699.1 298.5h.1M715.9 299.8h.1M737.2 299.7h.1M730.6 294h.1M713 305.6h.1M718.1 316.5h.1M717.7 276.9h.1M729 309.3h.1M730.3 332.4h.1M730.7 300.5h.1M715.7 305.6h.1M690.3 317.7h.1M729.2 308.7h.1M725.5 340.4h.1M722.7 296.6h.1M704.7 276.8h.1M714.7 317.4h.1M705.6 310.9h.1M728.6 300.4h.1M727.9 300.4h.1M724.9 280.3h.1M733 305.4h.1M721.7 296.9h.1M714.7 311.7h.1M718.3 302.7h.1M720.4 298.1h.1M691.6 302.2h.1M707.9 335.5h.1M714.6 305.5h.1M729.8 305.8h.1M753.6 318.2h.1M745.9 302h.1M712.9 311.5h.1M709.8 280.4h.1M718.4 316.8h.1M713.2 320.1h.1M711.3 297.7h.1M712.6 283.8h.1M737.1 305.5h.1M705.1 310.9h.1M725.1 324.4h.1M706.3 300.3h.1M729.7 301.6h.1M749.5 303.2h.1M716.5 311.6h.1M699.5 292.9h.1M720.4 292.4h.1M724.5 301.3h.1M716.7 331.5h.1M710.5 300h.1M720.3 301.7h.1M712.6 317h.1M745.9 302h.1M727.5 323.4h.1M717.8 301.8h.1M694.6 304.7h.1M731.8 307.9h.1M704.6 310.2h.1M712.1 309.3h.1M708.6 299.6h.1M715 300.1h.1M694 305.3h.1M685.5 298.1h.1M723.8 294.9h.1M717.9 304.4h.1M719.1 305h.1M742.2 314.2h.1M729 318.2h.1M725.5 301.5h.1M724 317.3h.1M713.1 313.2h.1M729.6 275.4h.1M694.5 320.7h.1M700 300h.1M708.2 326.7h.1M737.2 294.6h.1M726.8 321.5h.1M735 313.8h.1M704.6 308.6h.1M702 302.1h.1M726.1 314h.1M710.8 300.5h.1M722.3 301.5h.1M727.3 311.4h.1M720 304.1h.1M729.5 321.7h.1M732.8 329.1h.1M718.2 311.5h.1M725.2 311.3h.1M725.5 299.2h.1M694 281.2h.1M723.2 306.6h.1M730 302.2h.1M719.4 312.8h.1M717.8 307.7h.1M735.3 293.8h.1M726.2 299.2h.1M734.4 300.8h.1M746.7 279.2h.1M712.9 298.8h.1M712 312.7h.1M716.8 307.4h.1M744 308.3h.1M719.5 304.6h.1M740.5 275.6h.1M717.6 296.8h.1M736.3 320.4h.1M723.6 323.4h.1M697.5 312.2h.1M727.4 306.4h.1M713 300.4h.1M718.9 276h.1M715.3 292.3h.1M742.1 294h.1M721.7 303.6h.1M720.5 299.9h.1M719.1 308.4h.1M713.4 325.8h.1M721.7 299.8h.1M737.3 304.5h.1M722.5 312.8h.1M701 324.3h.1M712 318.7h.1M753.4 306.5h.1M712.1 310.5h.1M717.4 298.4h.1M683.2 304.6h.1M712.1 305.2h.1M705.9 301.4h.1M722.6 300.5h.1M733.1 295.8h.1M725.9 303.4h.1M728.9 298.1h.1M714.7 313.2h.1M754.4 319.4h.1M714.8 301.1h.1M725.8 299.1h.1M740.6 283.4h.1M718.5 315.5h.1M725.6 311.7h.1M711.1 290.9h.1M723 310.5h.1M720.3 310.6h.1M719.7 306.7h.1M726.8 304.1h.1M699.8 297.3h.1M710.9 312.7h.1M715.9 309.7h.1M708.8 326.6h.1M725 306h.1M712.2 308.9h.1M707.7 304.2h.1M706.8 317.9h.1M712.4 319.5h.1M726.6 311.1h.1M708.3 322.1h.1M727.8 301.7h.1M721.4 287.7h.1M724.4 305.8h.1M706.8 327.9h.1M715.7 323.2h.1M727.5 296.7h.1M722.8 324.4h.1M716.5 323.6h.1M713.5 321.6h.1M719.7 298.8h.1M693.9 328.8h.1M740.6 312.3h.1M727.5 320.8h.1M707.7 307.6h.1M726.4 300.5h.1M682.7 341.7h.1M709.6 325h.1M728.8 315.9h.1M748.4 284.2h.1M708.9 306.7h.1M707.3 314.5h.1M721 312.5h.1M726.7 319h.1M710.5 304.5h.1M705.9 297h.1M768 313.5h.1M706.5 311.3h.1M706.1 311.5h.1M718.7 316.8h.1M730.9 282.1h.1M740.2 298.1h.1M718 304.6h.1M696.7 326.1h.1M718.1 307.1h.1M749.7 300.7h.1M721.3 291.1h.1M736.9 291.7h.1M703.7 306.5h.1M719.2 326.8h.1M718.2 322.5h.1M750.9 295.4h.1M719 318.5h.1M717.6 304.9h.1M702.5 299.2h.1M734.9 299.3h.1M690.5 347.5h.1M723.4 338.9h.1M702.9 304.5h.1M714.8 316.1h.1M712.4 306.3h.1M715 313.8h.1M729.4 267.4h.1M704.1 323.3h.1M709.9 298.1h.1M723.8 307.3h.1M717.7 310.4h.1M715.9 322.4h.1M734.1 301h.1M730 306.5h.1M709.1 308.5h.1M717.8 300.3h.1M703.1 305.4h.1M722.8 299.9h.1M704.2 310.4h.1M725.5 305.7h.1M728.9 308.2h.1M744.2 332.9h.1M726.7 324.8h.1M717.4 293h.1M706.6 315.3h.1M723 312.8h.1M727.7 300.1h.1M731.1 314h.1M706.6 296.3h.1M728.8 311.1h.1M685.1 316.9h.1M707.1 309.2h.1M720.4 332h.1M709.3 306.4h.1M734.7 323.1h.1M750.1 330.8h.1M726 308.1h.1M712.5 307.7h.1M730.3 310.3h.1M742.1 319.8h.1M717.5 339.9h.1M698.4 323.7h.1M715.4 301.8h.1M749.7 313.2h.1M710.3 294.1h.1M716.2 306.2h.1M726.7 305.1h.1M706.5 319.6h.1M698 307h.1M718.3 311.9h.1M726 309.7h.1M717.1 308.6h.1M706.9 301.9h.1M703.8 322.9h.1M745.9 299.3h.1M691.4 302.8h.1M732.1 293.7h.1M718.8 340.6h.1M734.7 298.9h.1M743.6 304.3h.1M713 307.1h.1M728.2 301.7h.1M727.9 303.5h.1M733.4 295.3h.1M718.9 320.9h.1M728.1 309.4h.1M723.9 315.1h.1M703.2 309h.1M727.2 297.8h.1M722.8 292.8h.1M724.2 319.5h.1M717.1 305.5h.1M725.5 284.2h.1M729.6 293.8h.1M702.9 328.9h.1M736.1 296.1h.1M746.6 305h.1M705.3 317.2h.1M725.2 311h.1M721.5 310.3h.1M679 299.9h.1M719.7 323.6h.1M705.9 314.6h.1M715 303.7h.1M735.6 295.6h.1M703 304.5h.1M716.2 312.2h.1M715.4 313.7h.1M718.6 295.1h.1M712.3 297.3h.1M714.7 328.4h.1M711.8 315.3h.1M711.1 293.9h.1M709.4 323.4h.1M705 321.9h.1M735.6 306.6h.1M722.2 311.1h.1M701.1 303.5h.1M731.5 311.4h.1M699.4 302.4h.1M726.2 323.3h.1M710.2 306h.1M741.4 307.3h.1M680.5 313.1h.1M702.1 301.7h.1M731.6 297h.1M710.9 311.3h.1M703.2 322.6h.1M721.7 315.4h.1M723.7 296h.1M726 307.2h.1M702.6 314.6h.1M707.9 301.6h.1M733.8 302h.1M712.8 296.8h.1M710.5 315h.1M740.9 316.1h.1M715 303.2h.1M703.4 320.6h.1M707.3 329h.1M736 309.2h.1M721.6 316.6h.1M717.5 308.5h.1M722.3 299.1h.1M711.7 322.8h.1M707.8 316.7h.1M709.1 284.6h.1M713.5 310.4h.1M712.3 292.6h.1M706 307.4h.1M711.8 311.4h.1M709.8 328.1h.1M721.9 308.8h.1M738.6 291.2h.1M696.8 308.1h.1M734.8 303.5h.1M759.2 311.6h.1M723.9 344.2h.1M705 303.3h.1M722.2 300.6h.1M719.1 316.3h.1M713.7 305.1h.1M715.2 310.8h.1M734.6 281.5h.1M679 294.4h.1M729.7 313.7h.1M737.9 286.8h.1M727.3 318.3h.1M738.7 294.2h.1M720.8 311.2h.1M728.3 321.9h.1M726.7 292.1h.1M712.4 304.7h.1M723.1 315.7h.1M726.6 304.5h.1M711.1 309h.1M733.1 317.4h.1M727.8 292.1h.1M699.5 315.2h.1M712.3 294.8h.1M717.9 284.6h.1M711.8 321h.1M735.7 314.2h.1M733.4 303.3h.1M708.6 297.3h.1M721.5 304.8h.1M714.5 312.3h.1M718.2 307.3h.1M729.8 316.6h.1M710.8 294.8h.1M721.9 308.9h.1M711.9 305.7h.1M746.3 294.1h.1M726.4 301h.1M711.9 319.1h.1M720.2 296.7h.1M752.4 289.2h.1M715.2 313.3h.1M752.9 310.2h.1M755 304.7h.1M715.3 316.8h.1M750.6 323.2h.1M701.8 327.7h.1M734.2 299.5h.1M742.6 330.8h.1M748.4 326.7h.1M721.1 302h.1M738.1 297h.1M731.1 296.5h.1M747.9 291.1h.1M717.9 311.9h.1M718.9 310.3h.1M718.2 301.1h.1M719.2 311.9h.1M715.2 322.6h.1M712.8 316.2h.1M721.1 313.8h.1M700.3 309h.1M714.3 305.9h.1M705.7 349.2h.1M702.1 315.1h.1M703.7 295.8h.1M720.2 314h.1M739.7 310.7h.1M710.8 289.2h.1M754.8 327.5h.1M721.5 293.6h.1M727.9 315.1h.1M711.5 313.8h.1M724.4 298.1h.1M721.5 296.2h.1M695.6 303.2h.1M723.8 283.1h.1M715.7 304.4h.1M706 324.1h.1M702 309.3h.1M733.3 320.4h.1M728.7 300.5h.1M716.4 302.5h.1M734.3 300.7h.1M731.6 316.4h.1M698.4 307.3h.1M700.6 315h.1M725.1 312.7h.1M706.7 306.4h.1M714.7 314.7h.1M721.3 304.8h.1M713.2 306.1h.1M713.4 308.5h.1M693.3 313.7h.1M737.1 305.3h.1M688.4 295h.1M709 296.2h.1M726.8 300h.1M712.5 293.6h.1M707.3 303.1h.1M703.1 301.2h.1M732.3 299.9h.1M721.3 287h.1M694.3 313.8h.1M697.9 307.1h.1M737.5 317.3h.1M732.3 281.2h.1M710.9 298.2h.1M726.6 274.4h.1M702.3 304.3h.1M703.5 306.2h.1M704.5 321h.1M722.9 290.1h.1M721.2 302.1h.1M725.1 302.7h.1M695.6 324.2h.1M731.1 286.9h.1M709 298.6h.1M739.4 297.7h.1M724.8 314.6h.1M692.4 308.6h.1M714.4 296.6h.1M714.5 313.9h.1M754.4 292.4h.1M721.4 305.3h.1M741 317.8h.1M703.3 301.9h.1M713.9 316.2h.1M729.1 325.1h.1M718.2 302.5h.1M726.5 310.2h.1M731.9 304.4h.1M722.3 332.1h.1M715.7 309.9h.1M704 285.9h.1M729.2 306.4h.1M716.6 305.3h.1M718.4 294.4h.1M750.8 309.3h.1M714.2 303.5h.1M713.8 301.2h.1M721.9 318.7h.1M749.5 312.1h.1M725.8 327.6h.1M732.9 335.6h.1M712.3 298.4h.1M735 319h.1M719.3 300.7h.1M705.4 303.4h.1M729.6 305.8h.1M723.8 299.2h.1M732.4 313.8h.1M645 337h.1M665 345h.1M690 343h.1M740 326h.1M741 370h.1M708 350h.1M718 357h.1M787 303h.1M838 310h.1M730 250h.1M721 269h.1M680 270h.1M700 260h.1" stroke="#b4b9bf" stroke-width="2.3" stroke-linecap="round" fill="none" opacity="1.0"/><path d="M742 424.3h.1M710.4 420.3h.1M715.3 430.3h.1M713.8 428.7h.1M701.2 424.9h.1M732.7 437.6h.1M718.3 426.7h.1M727.3 438.8h.1M741.9 420.7h.1M714.1 423.2h.1M721 430.9h.1M709.4 431.7h.1M731.4 432.6h.1M723.9 425.9h.1M740.1 427.5h.1M773.2 431.8h.1M705.8 429.4h.1M738.7 426h.1M698.4 426.9h.1M698.7 419.7h.1M696.3 430.3h.1M741.4 424.1h.1M711.4 429.4h.1M726.2 428.1h.1M708.1 428.8h.1M738.8 426.4h.1M703.2 429.4h.1M718.5 429.3h.1M699.7 423.4h.1M714.4 427.1h.1M740.1 428.1h.1M722.7 424.2h.1M721.7 427.9h.1M735.1 433.3h.1M710.7 432.3h.1M694.6 426.1h.1M700 414.8h.1M705.7 432.5h.1M739.7 430.7h.1M718.8 427.1h.1M710.5 427.9h.1M720.5 424.5h.1M708.6 424.3h.1M731.7 430.1h.1M731.3 432.5h.1M701.7 428.5h.1M759.1 421.9h.1M704.8 422.8h.1M724.3 429.3h.1M713.7 430h.1M737.3 434.7h.1M733.8 426.2h.1M720.1 425h.1M722.6 425.3h.1M686.3 433.4h.1M699.5 433.2h.1M718.9 424.7h.1M722.8 425.9h.1M710.6 426.2h.1M729.4 430.4h.1M739 424.1h.1M702.4 429.4h.1M723.9 429.2h.1M744.7 428.1h.1M716.4 434.6h.1M718.5 424.6h.1M719.1 425.4h.1M726.2 432.8h.1M683.4 427.1h.1M727.7 424.3h.1M713.2 426.4h.1M731 422.8h.1M710.1 430.4h.1M717.6 424.7h.1M723.3 430.2h.1M737 431.1h.1M717.4 427.1h.1M724.9 435.2h.1M707.5 427.6h.1M717.8 429.1h.1M724.6 430.8h.1M741.7 425.3h.1M697.1 420.2h.1M721 428.9h.1M712.2 424.9h.1M728.6 422.6h.1M707.6 424h.1M727 429.4h.1M700.7 435.5h.1M737.2 427.4h.1M720.7 427.4h.1M715.6 428.7h.1M720.3 430h.1M723 427.6h.1M725.6 425.3h.1M748 433.2h.1M719.6 426h.1M706 423.8h.1M706.9 425.6h.1M703.6 423.2h.1M697.4 426.4h.1M729.4 427.1h.1M704.7 429.1h.1M712.9 425.8h.1M722.9 427.2h.1M743 425.8h.1M700 427.5h.1M716.7 432.9h.1M735.4 425.7h.1M685.3 419.1h.1M733.3 432h.1M682.7 429.3h.1M716.6 430.5h.1M705.3 419.4h.1M724.5 428.8h.1M742.1 426.7h.1M708.1 426.4h.1M748.4 432.2h.1M742.5 423.6h.1M703.5 425.9h.1M720 428.4h.1M731.6 423h.1M737.4 425.1h.1M729.5 426.5h.1M710.9 424h.1M708.3 426.1h.1M729.7 431.1h.1M712.7 424.6h.1M723.2 425h.1M719.9 424.9h.1M700.4 425.6h.1M750.1 428.7h.1M721 431.9h.1M752.8 432.5h.1M738.5 438.8h.1M734.9 421.6h.1M706.1 423.8h.1M711.3 436h.1M720.5 428.2h.1M717.3 428.5h.1M699.5 426.8h.1M765.5 425.5h.1M756.5 433.1h.1M725 427.6h.1M721 425.8h.1M714.5 428.1h.1M703 427.5h.1M724.2 429.3h.1M718.6 429.6h.1M727.9 428.8h.1M738.3 427.1h.1M759 429.1h.1M718.6 427.3h.1M726 420.2h.1M714.3 428.2h.1M724.7 421.6h.1M707.8 427.5h.1M743.5 424.8h.1M734.8 439.9h.1M700.7 429.6h.1M719.3 426.2h.1M732.8 426.4h.1M728.9 431h.1M699 420.8h.1M728.6 433.1h.1M724.7 433.5h.1M711.3 429.7h.1M728 425.6h.1M704.9 429.6h.1M711.2 426.6h.1M705.5 422.8h.1M733.2 424.3h.1M735.1 432.1h.1M715.4 427h.1M722.9 425.2h.1M736.8 431.6h.1M673.7 432.2h.1M718 430.9h.1M729.8 429.7h.1M725.4 424h.1M713.6 427.3h.1M692.1 422.5h.1M705.4 432.9h.1M733.7 424.6h.1M704.3 440.8h.1M721.7 423h.1M716.6 423.9h.1M734.4 431.8h.1M710.4 421.5h.1M722.4 426.8h.1M723.4 428.4h.1M702.9 437.3h.1M722.8 428.3h.1M739.6 429.6h.1M723.1 427h.1M702.8 426.5h.1M709.2 424.5h.1M685.4 430.3h.1M705.5 426.2h.1M690.7 426.4h.1M729.1 413.9h.1M719 429.3h.1M717.8 427.6h.1M742.8 426.5h.1M719.4 427.5h.1M728.5 431.6h.1M704.4 420.1h.1M711.4 431.8h.1M710.9 425.9h.1M722 425.1h.1M699.7 429.5h.1M711.5 429.2h.1M710.4 423.2h.1M725.8 437.1h.1M697.5 424.5h.1M720.6 431.5h.1M723.2 426.9h.1M719.9 435.1h.1M747.7 419.9h.1M719.8 428.1h.1M721.3 432.4h.1M722.1 424.7h.1M729 428.3h.1M726.2 418.1h.1M719.7 414.8h.1M733.5 419.7h.1M705 425.7h.1M727.6 422.9h.1M701.4 428.3h.1M752.8 424.8h.1M712.6 419.5h.1M715.8 428.9h.1M714.3 432.1h.1M726.7 429.9h.1M667 432.2h.1M712.9 425.5h.1M728.1 425.6h.1M725.9 427.4h.1M706.5 427.5h.1M750.6 432.2h.1M740.3 432.5h.1M707.9 430.8h.1M712.6 426h.1M695.9 415.3h.1M711.8 422.3h.1M715 428h.1M751.7 422.3h.1M694.5 435.6h.1M751.3 425h.1M718.3 425.9h.1M714 428.1h.1M712.6 424.9h.1M728.2 426.1h.1M711.7 432.8h.1M712.4 435.2h.1M714.5 437.3h.1M719.4 433.9h.1M723.3 432.9h.1M713 418.7h.1M710.3 426.7h.1M727.8 424.2h.1M720.9 426.5h.1M719.1 428.1h.1M680.9 429.8h.1M716.4 430.9h.1M702.6 432.9h.1M708.2 429h.1M712.1 431.7h.1M705.7 422.6h.1M688.5 423.2h.1M700.5 427.8h.1M732.6 429.7h.1M712.5 416.6h.1M706.5 420.1h.1M718.1 429.4h.1M680.9 425.6h.1M734.9 428.8h.1M728.5 429h.1M717.1 428.2h.1M722.2 424.8h.1M708.9 430.1h.1M711.4 425.6h.1M713.8 430.4h.1M710 421.3h.1M724.9 428.4h.1M707.1 426.9h.1M732.5 424.5h.1M683.9 432.6h.1M720.3 428.3h.1M736.7 427.4h.1M736 427.9h.1M695.7 423.6h.1M725.2 427.8h.1M739.5 423.1h.1M718.7 421.4h.1M743.8 427.3h.1M702.5 428.3h.1M718.6 423.5h.1M752.4 423h.1M735 420.5h.1M730.9 425.3h.1M716 424.3h.1M714.5 434.9h.1M735.4 421h.1M719.8 426.1h.1M746.1 431.2h.1M708.3 427.7h.1M706.4 426.9h.1M726.6 433.5h.1M700.8 430.6h.1M726.6 430.9h.1M737.1 425.5h.1M744.7 429.6h.1M705 428.9h.1M712 424.2h.1M737.4 432.1h.1M713.5 427.8h.1M725.4 425.1h.1M690 427.7h.1M717.1 428.2h.1M727.2 427.3h.1M704.7 426.3h.1M726.1 419.9h.1M720.2 426h.1M714 426.7h.1M710.5 422.7h.1M716.1 429h.1M726.8 426.2h.1M714.7 429.7h.1M746.8 430.2h.1M723.6 426.3h.1M687.9 414.4h.1M719.5 425.6h.1M730.8 423.3h.1M730.5 423h.1M713.6 424.3h.1M685.5 423.7h.1M720.4 428.3h.1M721.5 428.7h.1M738.2 427.3h.1M717.6 422.7h.1M719.4 422.1h.1M724.6 428.7h.1M740.8 433.9h.1M754.9 420.5h.1M749.9 424.1h.1M711.9 424.5h.1M750.3 425.6h.1M722.3 429.2h.1M739 424.5h.1M711.9 424.8h.1M735.1 424h.1M734.6 435.6h.1M696.1 426.7h.1M719.2 431h.1M716.6 430.1h.1M707.1 426.5h.1M712.6 427.7h.1M701.2 426.2h.1M724.2 426h.1M720.1 422.3h.1M720.7 424.6h.1M717.1 424.6h.1M725.1 430.1h.1M711.7 425.7h.1M706.6 423.7h.1M724 428h.1M723.3 424.9h.1M725.3 425.7h.1M726.3 422.6h.1M703.4 429.5h.1M702.3 425.4h.1M698.8 428.7h.1M734.3 424.7h.1M736.2 422.7h.1M704.8 417h.1M731.1 428.7h.1M725.7 431.8h.1M712.5 420.1h.1M738 438.4h.1M721.4 431.3h.1M719.1 429.3h.1M725.5 425.2h.1M735.9 425.4h.1M729.1 431.7h.1M691.7 425.1h.1M703.2 418.5h.1M735.1 425h.1M758.6 428h.1M703.5 426.4h.1M736.5 426.1h.1M703.2 427.1h.1M731.9 432.1h.1M716.1 428.2h.1M733.6 428.4h.1M732.1 421.5h.1M706.5 425h.1M695.4 433.4h.1M702.4 428.6h.1M694.1 429h.1M668.8 426.1h.1M692.5 417.9h.1M720 426.2h.1M709.2 424.4h.1M734.1 439.7h.1M712.3 423.1h.1M729.7 424.3h.1M724.2 432.5h.1M710.9 425.7h.1M702.6 425.1h.1M691.1 430.1h.1M730.9 424h.1M718.1 426.6h.1M686.5 425.6h.1M709.9 428.8h.1M715.1 426.1h.1M746.8 428h.1M738.2 422h.1M713.6 424h.1M729 427.2h.1M684.4 422.9h.1M710.3 429.7h.1M712.2 426.7h.1M701.1 419.9h.1M734 432.3h.1M710.7 424.6h.1M733.7 429.4h.1M700.4 428.7h.1M729.4 427.1h.1M731.6 428.8h.1M689.8 430.2h.1M723.6 423.8h.1M725.8 432.2h.1M727.8 423.5h.1M712.6 431.4h.1M705.5 424.6h.1M703.8 428.3h.1M723.4 426h.1M712.3 428.7h.1M718.6 425.1h.1M683.9 425.6h.1M716.4 426.3h.1M681.9 428.4h.1M722.5 433.8h.1M736.3 423.6h.1M724.8 414.5h.1M715.2 426.3h.1M736.4 424.5h.1M696.3 427.6h.1M712.3 427.1h.1M730.5 425.7h.1M710.3 425.9h.1M693 426.5h.1M703.5 423.6h.1M725.9 423.1h.1M727.5 422.7h.1M720.7 423.2h.1M731 426.5h.1M721.7 431.4h.1M722.4 431.1h.1M730.7 425.1h.1M684 428.7h.1M760.3 423h.1M729.2 426.3h.1M750.7 425.8h.1M721.5 431.6h.1M737.2 425.3h.1M724.3 425.5h.1M724.3 424.1h.1M721 423.3h.1M715.7 431.2h.1M740.8 432h.1M731.5 424.4h.1M749.3 421.3h.1M696.1 424h.1M683 419.3h.1M732.4 425.2h.1M750.5 433.3h.1M702.6 423.1h.1M700.2 426.5h.1M701.7 428.4h.1M717.6 421.8h.1M744.9 425.3h.1M718.2 422.3h.1M724.3 428.5h.1M680.8 427.6h.1M703.1 426.5h.1M725.5 414.5h.1M725.1 423.5h.1M700.8 427.3h.1M722.8 424.3h.1M721.8 429.2h.1M728.3 427.7h.1M709.1 428.9h.1M719.4 426.8h.1M745.9 429.4h.1M699.8 423.7h.1M714.5 425.6h.1M705.8 430.6h.1M730.6 422.6h.1M709.4 422.3h.1M703.3 428.6h.1M706.2 431.1h.1M682 430.5h.1M722.8 433.8h.1M752.2 427.1h.1M731 419h.1M726 425.2h.1M725.2 420h.1M712.8 425.4h.1M694.1 427.4h.1M709.2 430.4h.1M734.1 434h.1M693.1 427.5h.1M745.7 432h.1M673.6 434.4h.1M709.9 423.7h.1M706 424.6h.1M700.9 420.5h.1M707.2 424.8h.1M715.9 425.7h.1M715.9 424.4h.1M726.2 426.5h.1M722.1 423.4h.1M750.6 438h.1M713.8 422.1h.1M705.2 430.7h.1M709.6 424.7h.1M717.6 425.7h.1M739.5 428.3h.1M723.5 413.3h.1M713.1 424.6h.1M723 429.9h.1M689.5 417.7h.1M711.7 420.2h.1M708.8 416.9h.1M706.2 425h.1M728 420.9h.1M701.8 424.6h.1M707.8 423.7h.1M709.1 427.5h.1M722.9 430.8h.1M704.1 421.1h.1M748 424h.1M706.4 424.2h.1M732.1 432.5h.1M726.1 425.4h.1M731.7 423.2h.1M721.5 420.5h.1M690.1 428.4h.1M762.8 419.9h.1M722.1 423.7h.1M702.9 429.2h.1M741.9 427h.1M718.5 427.2h.1M704.8 428.8h.1M726.9 424.3h.1M720.4 422.4h.1M737.5 422.8h.1M718.9 423.2h.1M732.8 429.5h.1M726.6 428.7h.1M714.5 426.7h.1M719.6 427.7h.1M734.4 425.3h.1M719.2 425.2h.1M706.5 430.7h.1M721.6 420.9h.1M726 427.5h.1M727.6 431.5h.1M697.7 423.1h.1M705.3 426.4h.1M715.4 426.8h.1M733.1 425.6h.1M723.6 430.6h.1M748.6 428.2h.1M766.1 426.9h.1M733.5 425.3h.1M721.2 423.8h.1M714.6 431.7h.1M704.5 425.7h.1M722.3 424.3h.1M703.1 425.7h.1M730.5 432.5h.1M694.7 424.1h.1M736.4 430h.1M716.1 422.2h.1M708.5 422.9h.1M723.1 436.9h.1M721.3 422.7h.1M720.2 427h.1M681 438.2h.1M679.6 420.4h.1M735.5 425.8h.1M720 427.6h.1M731.2 424.2h.1M694 428.5h.1M712.9 427.9h.1M703 425.8h.1M720.5 428h.1M731.2 425.9h.1M701.5 419.9h.1M725.2 428h.1M731.4 436.6h.1M682.8 430.2h.1M717.5 427.7h.1M719.1 421.6h.1M713.9 423.5h.1M724.9 428.9h.1M753.6 428.1h.1M727.5 430.2h.1M741.2 425h.1M732.8 420.4h.1M716.3 415.8h.1M708.8 428.1h.1M705.9 428.8h.1M686.9 426.1h.1M711.6 427.9h.1M722.2 427.4h.1M717.8 428.6h.1M717.7 422.2h.1M734 422.6h.1M733 423.6h.1M714.5 427h.1M717.3 427.2h.1M690.6 419.9h.1M743.7 427.3h.1M714.5 430h.1M671.5 423.3h.1M719.2 428.2h.1M715.6 422.1h.1M731 427.5h.1M719.1 422.5h.1M724.6 427.2h.1M703.2 416.1h.1M732.2 420.5h.1M699.2 430.3h.1M716.5 426.7h.1M721.9 424.2h.1M715 429.8h.1M733 418.3h.1M726.3 430.2h.1M722.5 428h.1M722.1 424.9h.1M725.2 427.2h.1M725.4 429.9h.1M696.8 430.1h.1M718.6 427h.1M714.6 428.2h.1M713.9 431.6h.1M720.7 422.5h.1M719.2 429h.1M697.4 421.1h.1M715.6 432.1h.1M736.3 429.4h.1M725.6 425.3h.1M698.5 428.3h.1M708.2 424.8h.1M731.1 428.8h.1M680.8 419h.1M722 430h.1M736.2 427.7h.1M725.8 427.3h.1M705.5 428.4h.1M726 424.7h.1M692.2 427.7h.1M717.2 428.8h.1M691.7 424.4h.1M709.4 424.3h.1M708 424.7h.1M710.3 427.4h.1M730.9 424h.1M723.6 422.7h.1M744 430.9h.1M758.2 434.8h.1M721.1 418.1h.1M729.7 417.9h.1M707.1 424.3h.1M719.1 431.6h.1M708.5 429.6h.1M708.1 427.1h.1M732.4 425.9h.1M712.8 427h.1M723.9 426.4h.1M715 430.1h.1M756.2 429.6h.1M724.3 430.4h.1M696.7 425.7h.1M728 437.2h.1M759.6 427.7h.1M731.2 425.1h.1M731.4 424.1h.1M732.1 422.8h.1M737.4 428.2h.1M710.1 430.4h.1M710.6 424.8h.1M711.6 424.1h.1M695.1 435.1h.1M704.2 427.3h.1M732.3 429.2h.1M713.5 426.8h.1M711.2 424h.1M743.6 424.7h.1M726.4 421.7h.1M710.2 424.1h.1M708.3 423.5h.1M715.8 424.4h.1M720.4 423.1h.1M741.3 418.5h.1M724.1 427.1h.1M702.4 428.5h.1M716.4 427.3h.1M695.1 432.7h.1M710.2 431.4h.1M736.2 426.4h.1M693.8 428.6h.1M713.7 428h.1M728.8 429.6h.1M722.8 424.8h.1M715.7 432.6h.1M708.3 427.2h.1M707.2 431.5h.1M730.2 423.7h.1M717.1 425.6h.1M725.2 421.5h.1M727.8 426.9h.1M693.7 425h.1M724.4 429.5h.1M733.2 425.3h.1M719.1 427.8h.1M731.4 422.8h.1M696.6 421.5h.1M713.6 435.7h.1M712.9 428.8h.1M711.3 428.5h.1M727.5 422.9h.1M712.4 427.1h.1M732.9 427h.1M714.5 430.5h.1M696.8 434.6h.1M725.7 430.9h.1M701.7 424.4h.1M740.2 422.3h.1M708.7 427.5h.1M743.1 421.6h.1M724.3 424.6h.1M703.1 424h.1M717.2 428.4h.1M715 434.3h.1M726.5 427.6h.1M689 432.1h.1M730.8 426.3h.1M707.7 427.3h.1M698.2 428.1h.1M715.9 425.4h.1M707.5 429.1h.1M719.4 424.9h.1M738.5 423.4h.1M716.8 428.3h.1M735.9 429.1h.1M742.8 431.4h.1M743.7 421.7h.1M722.8 429.5h.1M751.5 436.1h.1M741 429.8h.1M749.3 425h.1M718.9 418.1h.1M732.6 428.8h.1M745.4 415.8h.1M723.8 430.7h.1M708.4 423.5h.1M728.2 426.5h.1M725 421.6h.1M704.9 431.4h.1M754.5 428.4h.1M713.7 426.8h.1M730.6 426.3h.1M711.6 422.3h.1M698.3 430.6h.1M709.4 421.4h.1M679.8 422.9h.1M726.3 426.4h.1M702.4 422.7h.1M741.5 422.3h.1M706.4 426.1h.1M721.2 421.7h.1M697.9 435h.1M702 429.3h.1M717.7 433.7h.1M709.3 431.6h.1M763.3 431.5h.1M714.1 423.1h.1M669.7 430.5h.1M719 429.3h.1M706.9 427.9h.1M702 421.4h.1M697.6 430.1h.1M688.4 426.2h.1M722.8 430.6h.1M718.9 421.9h.1M717.9 423.6h.1M714.9 423.2h.1M742 426.7h.1M704.5 429.7h.1M709.1 426.5h.1M721.5 429.4h.1M710.3 429.4h.1M708.4 430.5h.1M707 423.4h.1M714.8 427.8h.1M717.5 431.6h.1M732.5 425.4h.1M699.9 430.2h.1M720.7 433.8h.1M728.8 430.4h.1M715.1 425.6h.1M710 427.1h.1M724.6 423.9h.1M736 435.1h.1M717.4 427.9h.1M714.8 427.2h.1M747.4 434.6h.1M714.6 424h.1M716.6 429.2h.1M741.8 431.7h.1M719.1 420.6h.1M719.1 429.2h.1M715.8 429.8h.1M753.4 419.3h.1M718 435.8h.1M734.6 428.2h.1M727.3 425.9h.1M720 427.3h.1M741.1 425h.1M709.5 430.4h.1M757.1 433.5h.1M708.4 428h.1M728.9 423.5h.1M739 424.8h.1M724.3 427.3h.1M741.3 427.5h.1M745.5 424.5h.1M699.2 433.6h.1M715.6 421.4h.1M738.9 431.8h.1M722.4 434.4h.1M715.7 424.6h.1M724.3 432.8h.1M708.6 425.9h.1M712.8 429.2h.1M738.5 428.9h.1M726.8 421.3h.1M772.7 430.7h.1M690.2 427.7h.1M691.2 433.9h.1M697.4 429.3h.1M722.9 426.2h.1M745.1 430.4h.1M703.9 433h.1M715.9 432.7h.1M748.2 426.7h.1M705.9 427.8h.1M763.2 427.9h.1M705.1 425.8h.1M706.3 421.6h.1M690.8 424.5h.1M727 433.6h.1M697.2 431.1h.1M719.8 429.1h.1M719.3 429.2h.1M709.1 434.3h.1M713.9 430.9h.1M714.6 426.8h.1M723.4 427.5h.1M699.6 431.9h.1M705.2 424.9h.1M679.5 431.2h.1M737.6 429.4h.1M736.4 428.2h.1M729.9 429.2h.1M697.3 428.6h.1M719.3 428h.1M724.1 427.6h.1M736.4 427.9h.1M718.4 426.6h.1M707.3 428.3h.1M756.1 425.5h.1M719.1 427.2h.1M701.2 426.4h.1M728.4 429h.1M740.2 427.9h.1M713.8 424.3h.1M725.5 430.9h.1M721.1 423.9h.1M716 426.5h.1M714.7 427.9h.1M723.2 426.9h.1M687.5 429.3h.1M716.7 428.9h.1M696.9 433.5h.1M706.3 422.6h.1M726.3 429.2h.1M711.5 430.9h.1M712.6 428.4h.1M717.3 420.9h.1M693.1 430.2h.1M699.2 429.3h.1M740.3 422.5h.1M704.7 429.2h.1M712.5 420.9h.1M724.9 429h.1M713.9 427.4h.1M716.8 426.8h.1M698.3 427h.1M705.4 425.4h.1M721.2 425.5h.1M722 430.6h.1M728.7 429.3h.1M708.6 427.8h.1M720.1 432.8h.1M707.7 429.3h.1M732.3 438.9h.1M705.5 435.3h.1M726.3 426.1h.1M724.9 430h.1M734.4 425.2h.1M705.1 429.1h.1M718.6 428.2h.1M697.7 426.2h.1M727.9 429.8h.1M713.5 424.8h.1M709.1 428.5h.1M694.7 432.3h.1M705.3 426h.1M715.5 425.4h.1M714.5 427h.1M734.8 425.1h.1M714.5 432.8h.1M718.7 428.5h.1M692.6 429.8h.1M709.7 426.1h.1M738.4 424.8h.1M745 429h.1M679 424.2h.1M748 428.2h.1M715.4 424.1h.1M691 421.5h.1M727.6 430h.1M736 426.1h.1M733.9 425.3h.1M726.1 431.2h.1M742.9 418.7h.1M717.3 431.2h.1M726.4 427h.1M768.6 420.7h.1M721 421.3h.1M679 422.8h.1M737.4 428h.1M721.1 421.3h.1M703.6 429.5h.1M749.7 426.6h.1M735 427.7h.1M717.1 425h.1M723.7 425.7h.1M667.3 431.3h.1M720.6 428.7h.1M676.1 422.4h.1M703.3 424.2h.1M739.1 425.4h.1M723 435.6h.1M697.2 425.5h.1M705.7 433h.1M730.2 426.9h.1M719.7 429.9h.1M716.3 428.1h.1M703.1 427h.1M734.3 429.7h.1M702.1 430h.1M714.4 425.5h.1M696.1 428.7h.1M713.9 421.1h.1M717.8 422.9h.1M714.3 424.8h.1M720.8 431.4h.1M725.7 428h.1M690 425.9h.1M718.9 431.1h.1M751.8 420.8h.1M745 424.9h.1M730.4 426h.1M682 425.7h.1M704 427.4h.1M733.9 425.3h.1M743 430.3h.1M709 426.5h.1M712.5 426.9h.1M731.7 424.1h.1M732.3 425.1h.1M711.5 429.2h.1M696.5 426.1h.1M693.3 427.2h.1M710.3 425.6h.1M693.1 420.6h.1M706.3 425.4h.1M724.6 427.4h.1M711.9 430.1h.1M728.8 424.4h.1M694.1 421.4h.1M725.3 423.6h.1M709.5 427.8h.1M723.5 426.5h.1M745.5 426.2h.1M702.7 420.9h.1M728.3 427.4h.1M715.7 425.7h.1M714.4 427.2h.1M689.3 429.3h.1M716.9 429.4h.1M716.5 427.1h.1M719 423.8h.1M714.9 429.3h.1M689.8 429.6h.1M752.4 427.5h.1M715.3 430.6h.1M742.4 420.8h.1M704.9 427.1h.1M710.6 428.8h.1M753.2 422.6h.1M750.8 427.6h.1M709.3 426.4h.1M721.2 429.3h.1M698.2 433.4h.1M712.1 422.9h.1M692.4 427.2h.1M732.5 424.5h.1M690.1 430.4h.1M711.1 416.5h.1M702.3 423.7h.1M714.7 429.1h.1M714.9 423.1h.1M704.5 422.3h.1M731.7 422.6h.1M702.1 429.9h.1M726.2 428.2h.1M722.6 418.5h.1M698.5 427.3h.1M713.6 432.2h.1M718.5 430.5h.1M731.8 429.2h.1M738.6 421.3h.1M714.3 430.6h.1M722.7 424h.1M717.9 427.4h.1M721.9 428.4h.1M700.7 426.4h.1M709.8 429.6h.1M728.3 427.4h.1M737.2 426h.1M722 424.7h.1M712 425.3h.1M722.4 425.4h.1M699.8 419.5h.1M746.8 431.2h.1M682.6 435.9h.1M721.6 427.3h.1M744.1 420.1h.1M714.3 425.5h.1M699.1 426.6h.1M712.6 424.2h.1M721.8 426.4h.1M736 428.2h.1M717.1 420.3h.1M724.5 421.4h.1M728.4 429.5h.1M724.3 428.6h.1M726.6 429.5h.1M725.6 425.1h.1M728.9 425.1h.1M703.3 435.2h.1M705.7 430.9h.1M711.6 429.6h.1M743.4 430h.1M715.1 424.1h.1M714.7 427.4h.1M738.5 417.6h.1M727 432.3h.1M712.5 418.5h.1M738.7 429h.1M708.9 425.9h.1M703.4 430.5h.1M697 431h.1M744.6 427.4h.1M718.4 426.8h.1M737.4 427.8h.1M704.9 428.1h.1M691.2 427.9h.1M722.7 430.4h.1M713.2 432.2h.1M690.5 424.1h.1M721.7 432.3h.1M770.3 419.7h.1M720.8 428.7h.1M677.7 421h.1M700.8 438.8h.1M709.5 428h.1M682.4 430.9h.1M703.9 434.3h.1M698.7 432.3h.1M708.2 435.7h.1M711.1 422.6h.1M720 425.1h.1M728.4 428.5h.1M725.1 425.8h.1M717.3 423h.1M706.1 425.7h.1M719.7 424.2h.1M721 432h.1M713.5 427.5h.1M721.9 430.4h.1M730.9 422.7h.1M698.4 426.2h.1M715.1 432h.1M698.9 425.4h.1M729.6 428.7h.1M706.4 429.2h.1M684.4 432.9h.1M700.7 424.5h.1M747.5 426.7h.1M729.1 426.5h.1M729.4 431.8h.1M712.9 426.7h.1M722.6 424.7h.1M706.1 421.7h.1M712.6 412.6h.1M728 423.6h.1M738.5 429.9h.1M716.4 422.6h.1M706.2 425.4h.1M712.5 424.9h.1M701.7 424.1h.1M699.6 424.7h.1M711.2 429h.1M727.5 424.8h.1M738.6 430.2h.1M744.4 427.5h.1M717.5 422.4h.1M730.9 425.3h.1M696 429.7h.1M725.3 432h.1M771.2 419.9h.1M727.2 428.6h.1M736.1 430.4h.1M729.2 434.4h.1M748.2 425.3h.1M736.8 430.9h.1M696.7 422.6h.1M706.5 434.7h.1M740.1 430.1h.1M708.8 421.7h.1M740.8 424.4h.1M707.9 426.2h.1M713.8 428.6h.1M708.5 427.6h.1M756.3 430.7h.1M725.9 429.7h.1M673.8 421.6h.1M704.5 423.2h.1M699.7 428.6h.1M723.8 424.3h.1M723.3 425.5h.1M695 426.7h.1M726.7 433.5h.1M738.8 427.8h.1M722.3 438.5h.1M727.7 430.2h.1M760.8 424.5h.1M718.3 432.9h.1M712.1 425.5h.1M730.7 434.2h.1M718 427.9h.1M702.9 425.4h.1M713.3 420.3h.1M699.6 429.3h.1M746.3 426.7h.1M747.8 425h.1M709.1 427.3h.1M695.8 425.1h.1M710.7 423h.1M747.9 432.9h.1M721.1 432.5h.1M742.1 423h.1M731.4 425.2h.1M724.7 425.6h.1M706.9 423.3h.1M729.7 430h.1M721 427.3h.1M710.8 425.6h.1M716.1 428.6h.1M730 428.7h.1M723 426.4h.1M740.5 426.5h.1M774.7 430.8h.1M728.6 429.4h.1M730 424.8h.1M734.2 430.5h.1M716.3 426.1h.1M712.7 429.8h.1M707.6 440.3h.1M706.1 429.6h.1M735.4 429.8h.1M716.9 434.4h.1M708.4 427.9h.1M695.2 427h.1M727.3 421h.1M722 430.9h.1M738.1 423.5h.1M699.9 429.2h.1M708.4 420.8h.1M720.7 424.3h.1M729.8 431.1h.1M729.6 430.4h.1M739 438.1h.1M679.6 434.5h.1M717.2 431.8h.1M709.2 428.9h.1M740.7 426.9h.1M695.6 426.4h.1M707.6 427.4h.1M732.2 429.5h.1M708.3 433.6h.1M701.6 427.5h.1M741.2 423.5h.1M729.3 427.6h.1M707.9 419.6h.1M687.1 431.1h.1M715.3 417.2h.1M705.4 417.9h.1M708.8 428.8h.1M731.3 429.8h.1M702.3 423.5h.1M715.6 426.9h.1M704 429.5h.1M727.2 428.6h.1M715.7 422.3h.1M732.4 426.9h.1M698 419.6h.1M710.7 423.6h.1M709.2 421.5h.1M719.6 427h.1M712.7 429.6h.1M743.1 426.5h.1M712.5 426.2h.1M711.4 427.7h.1M698.4 426.3h.1M709.8 424.9h.1M744.7 430.5h.1M723.3 428.2h.1M703.6 430.6h.1M730.9 422.4h.1M712.6 423.3h.1M728.7 425h.1M697.1 423.8h.1M706.1 427.1h.1M744.8 426.3h.1M719.8 430.7h.1M722.1 434h.1M725.7 424.9h.1M736.4 428h.1M710.2 428.9h.1M699.9 433.1h.1M717.3 424.6h.1M729.9 427.6h.1M712 426.3h.1M735.6 429.6h.1M693.6 432.2h.1M702.9 423.2h.1M697 425.5h.1M694.5 428.4h.1M758.5 429.9h.1M716.6 419.2h.1M744.9 436.3h.1M724.7 426.1h.1M696.8 425.1h.1M739.1 427.4h.1M729.6 429.7h.1M746.9 427.1h.1M738.8 434.5h.1M715.8 427.4h.1M725.8 426.9h.1M714.2 424.8h.1M702.1 428.5h.1M713.2 432.6h.1M731.4 427.6h.1M705.2 430.9h.1M738.8 427.4h.1M736.5 432.4h.1M721.3 426.2h.1M713.9 419.9h.1M732.6 424.3h.1M713.7 426.6h.1M730.3 426.8h.1M725.4 428.7h.1M717.7 425.9h.1M707.4 421.2h.1M703.6 429.2h.1M716 425.9h.1M696.3 434.3h.1M716 428.2h.1M721.1 428.8h.1M712.6 426.4h.1M726.2 425h.1M731.4 430.1h.1M686.7 426.4h.1M718.2 424.1h.1M704.4 429.3h.1M708.2 426.7h.1M715.8 426.3h.1M735.8 422.3h.1M701.1 430.8h.1M717.9 427.6h.1M714.8 427.3h.1M712.2 427.3h.1M738.1 425.2h.1M742.3 422.8h.1M695.5 427.7h.1M726.3 427.5h.1M728.4 430.7h.1M699.6 424.3h.1M745.2 431.2h.1M732.2 434.2h.1M749.5 420.7h.1M701.7 431.5h.1M712.6 429.1h.1M707.9 426.8h.1M710.2 427.1h.1M709.9 430.1h.1M699.7 421.5h.1M719.7 432.3h.1M696.5 428.5h.1M733.1 430.7h.1M735.1 415h.1M689.9 419.3h.1M706.6 428.9h.1M721.2 423.7h.1M744 428.1h.1M714.6 426.5h.1M747.8 420.7h.1M745.2 422h.1M721.3 434.3h.1M692.8 427h.1M707.1 424h.1M677.5 429.9h.1M720.7 423.5h.1M721.1 428.7h.1M698.4 419.2h.1M744.8 427h.1M709.1 430h.1M721.6 421.7h.1M731.7 428.5h.1M732.5 422.8h.1M727.6 430.2h.1M729.3 423.3h.1M723 427h.1M759.8 418.3h.1M730.7 429.7h.1M705.1 438.6h.1M734.1 423.4h.1M719.3 425.6h.1M715.2 425.9h.1M757.5 420.8h.1M721.8 420.7h.1M722.6 429.6h.1M730.7 423h.1M707.3 431.3h.1M711.2 424.2h.1M716.1 425.2h.1M702.3 424.7h.1M722.3 423.7h.1M700.7 426.5h.1M726.2 424.3h.1M719.5 422.1h.1M719.7 427.1h.1M729.7 424.5h.1M715.2 430.5h.1M732.9 432.7h.1M711.1 419h.1M719.3 427.6h.1M718 428h.1M733.4 424.5h.1M721.1 425.5h.1M708.4 427.4h.1M737.8 426.9h.1M721 426.8h.1M731.8 426.4h.1M706.9 428.9h.1M737.5 424.9h.1M712.5 422.7h.1M727.8 426.4h.1M721.9 428.9h.1M700.7 421.8h.1M726.2 427h.1M717.8 429.1h.1M714.1 425.2h.1M717 419.9h.1M732.3 429h.1M723.9 437.7h.1M712.5 433.5h.1M711 424.6h.1M716.7 424.6h.1M695.4 422.4h.1M708.1 427.5h.1M712 425.7h.1M696.7 425.8h.1M744 429.9h.1M717.1 426.2h.1M744.9 435.7h.1M716.7 426.5h.1M718.6 426.3h.1M718 425h.1M696.4 431.8h.1M698 427.9h.1M726 431h.1M713.2 424.4h.1M726.6 427.1h.1M722.2 429.4h.1M695.8 420h.1M700.8 428.6h.1M701 429.6h.1M701.4 424.1h.1M695.2 429.6h.1M718.4 424.5h.1M731.8 425.5h.1M736.7 425.3h.1M727.6 430.3h.1M702.2 422.6h.1M704.8 425.7h.1M756.5 428.7h.1M723.2 424.1h.1M701.3 431.3h.1M708.6 425.4h.1M728 427.1h.1M724.6 428.3h.1M721.1 427.9h.1M715.6 432.9h.1M740 422.2h.1M728.7 430.4h.1M733.4 428.1h.1M723.6 426.4h.1M728 427.5h.1M729.4 430.3h.1M669.8 431.2h.1M718.6 425.1h.1M741.4 430.5h.1M726.1 427.1h.1M701.5 420.7h.1M682.4 418.2h.1M742.3 430.4h.1M721 426.5h.1M725.8 429.1h.1M707.5 422.5h.1M735 431.4h.1M712.3 424.2h.1M715.1 420.5h.1M699.4 423.5h.1M720.3 430h.1M723.2 432.4h.1M706 427.6h.1M707.2 424.3h.1M726.7 433.1h.1M704.1 430.7h.1M724.8 416.6h.1M744.7 427.7h.1M718.7 428.9h.1M688.8 426.3h.1M717.4 434h.1M734.7 425h.1M719.6 432.4h.1M702.9 426.3h.1M733.6 427.9h.1M723.8 428.6h.1M738.3 430h.1M749.6 422.8h.1M731.2 432.2h.1M715.4 428.8h.1M687.8 433.4h.1M690.1 422.4h.1M716.8 425.1h.1M702.6 430h.1M717.9 426.4h.1M696.5 416.3h.1M690.7 417.2h.1M738.7 417h.1M722.5 426.4h.1M719.6 429.6h.1M711.1 427.1h.1M725.4 430.4h.1M701.1 424.2h.1M713.2 425.1h.1M720.6 435.7h.1M712.9 413.5h.1M708.3 428.1h.1M714.9 429.4h.1M734 427.1h.1M709.6 428.9h.1M700.3 432h.1M749.7 425.6h.1M688.9 430.5h.1M710.9 428.2h.1M703.3 427.4h.1M703.8 430.6h.1M742.4 438.9h.1M737 422.9h.1M710.6 433.8h.1M735.3 423.6h.1M711.8 429.6h.1M731.4 430.7h.1M725.1 424.2h.1M733.6 420.1h.1M718.4 427.5h.1M723.3 424.6h.1M716.4 432.9h.1M676 434.1h.1M761.9 431.4h.1M728.7 430.2h.1M719.6 421.4h.1M715.7 424.5h.1M711.4 428.2h.1M707.3 422.8h.1M718.7 432.3h.1M732.2 422.9h.1M721.9 427.9h.1M721.3 426.2h.1M728.9 428.2h.1M706.7 418.3h.1M737.3 428.1h.1M711.9 424.2h.1M725 423.5h.1M710.8 425.6h.1M729.6 423.7h.1M703 429.2h.1M738.5 420.9h.1M711 429.5h.1M712.3 432.2h.1M700.9 425.3h.1M702.6 426.4h.1M714.7 426.1h.1M693.9 428.6h.1M740.6 427.8h.1M716.4 423.9h.1M676 429.4h.1M718.6 427h.1M725.9 423.6h.1M721.2 428h.1M708.9 428.6h.1M716.4 425.6h.1M684.7 431.2h.1M702.6 424.1h.1M690.2 422.8h.1M703.8 432.3h.1M734.8 412.8h.1M739.4 416.5h.1M743.4 428.8h.1M709.7 425.9h.1M722.6 426.7h.1M711.9 419.8h.1M724.8 420.2h.1M720.1 422.5h.1M696.8 423h.1M733.9 424.4h.1M712 429.3h.1M710.1 426.6h.1M713.4 429.8h.1M711 426.8h.1M696.3 421.1h.1M715.3 428.5h.1M725.2 417.6h.1M731.9 429.8h.1M712.9 430.5h.1M741.6 424h.1M705.6 433.8h.1M707 430.1h.1M680.1 426.6h.1M747.8 427.2h.1M745.7 425.3h.1M749 434.4h.1M677.2 427.1h.1M725.4 429.9h.1M696.5 430h.1M731.5 425.3h.1M715.7 428.5h.1M711.6 426.7h.1M718.7 439.4h.1M715 425.3h.1M740.7 426.5h.1M734.2 427h.1M692.1 420.7h.1M729.7 425.6h.1M683.2 427.4h.1M742.8 421h.1M714 429.1h.1M713.8 422.6h.1M716.7 435.9h.1M749.1 429.6h.1M729.8 427h.1M717.3 428h.1M728.6 419.5h.1M714.3 422.4h.1M745 436.9h.1M710.9 428.3h.1M710.2 424.4h.1M713.2 425.7h.1M734.3 431.2h.1M720.8 430.1h.1M710.5 423.6h.1M694.8 423.7h.1M731.9 429.3h.1M710.3 427.1h.1M722.1 428h.1M714.5 426.8h.1M728.2 424h.1M721.2 432.1h.1M681.2 431.1h.1M685.7 424.9h.1M711.5 431.7h.1M687.7 429.3h.1M725.7 421.7h.1M718.2 425.4h.1M741.7 429.3h.1M726.2 429.3h.1M725.7 426.6h.1M710.1 429.1h.1M722.6 421.8h.1M733 431.6h.1M736 434.7h.1M722.4 424.4h.1M716 426.6h.1M707.8 435.5h.1M709.1 423.6h.1M710.5 425.7h.1M735.3 431.2h.1M733.3 420.2h.1M716.5 420.8h.1M706.4 420.8h.1M726.3 433.4h.1M738.8 420h.1M727.7 424.6h.1M694.4 428.6h.1M752 422.1h.1M734.4 425.9h.1M710.4 432.8h.1M717.5 424.4h.1M716 432.8h.1M718.9 424.9h.1M704.6 428.2h.1M735.7 430.8h.1M697.8 418.9h.1M704.2 428.4h.1M740.7 430.9h.1M719.4 434.7h.1M736.8 427.7h.1M722.5 431.6h.1M741.1 433h.1M743.2 425.7h.1M722.1 429.5h.1M730.9 426.9h.1M707.6 434.3h.1M725.2 421.9h.1M680.4 432.1h.1M715.5 425.8h.1M695.4 431.3h.1M692.8 429.1h.1M731.1 418.3h.1M718.3 422.9h.1M739.7 418.9h.1M695.4 433.7h.1M723.3 423.3h.1M760.1 430.4h.1M732.2 434h.1M699.3 428.8h.1M735.6 416.5h.1M720.5 424h.1M709.5 427.7h.1M707.3 426.7h.1M721.2 423.9h.1M692.1 428.6h.1M735.5 426.9h.1M729.9 428.5h.1M726.6 425.6h.1M738.1 427.7h.1M702.9 423h.1M721.4 425h.1M728.8 428.6h.1M729 436.1h.1M713.4 427.1h.1M717.3 428.7h.1M725.2 425.4h.1M725.8 425.7h.1M768.8 426.1h.1M671.3 427.3h.1M719.2 425.9h.1M714.5 431.1h.1M724.8 426.7h.1M719.3 425.1h.1M723 420.5h.1M700.8 430.2h.1M692.3 429.8h.1M707.3 426.8h.1M721 425.8h.1M731.4 424.1h.1M733.5 422.7h.1M672.1 433.9h.1M711.6 438h.1M732 423h.1M718.8 424.8h.1M738.3 426.6h.1M748.2 427.2h.1M713.3 429.1h.1M709.1 423.5h.1M720 418.8h.1M701.9 427.2h.1M717.8 424.5h.1M708 426.6h.1M740.8 423.4h.1M718.2 427.1h.1M711.9 430.3h.1M718.5 426.9h.1M723 431.9h.1M686.8 421.8h.1M696.5 431.8h.1M679.6 423.1h.1M715.6 427.7h.1M730.8 416.4h.1M696.7 431.8h.1M666.3 424.7h.1M730.3 430.7h.1M710 427.8h.1M717.7 424.3h.1M725.2 430.5h.1M731.6 431.5h.1M711.2 427.4h.1M705.6 425.8h.1M694 430h.1M706.5 427.9h.1M720.1 424.2h.1M754.6 422.7h.1M732.4 433.1h.1M703.1 422.2h.1M716.5 424.4h.1M711.6 427.4h.1M690.8 427.1h.1M717.5 422.3h.1M723.6 424.5h.1M721.4 427.1h.1M718.2 425h.1M702 419.3h.1M708.4 431.6h.1M682.5 425.5h.1M729.4 428.8h.1M711.8 429.5h.1M676 423h.1M714.6 430.9h.1M727.2 426.5h.1M765.2 427.4h.1M707.9 421.9h.1M745.6 425.6h.1M700.8 429.1h.1M730.8 425.4h.1M727.4 430.2h.1M716.1 424.1h.1M692.4 422.1h.1M698.3 421.3h.1M727.1 424.6h.1M733.7 420.5h.1M715.8 423.7h.1M715.9 431.9h.1M710 428.4h.1M720.5 423.7h.1M710.6 432.3h.1M738.3 424.1h.1M730 424.4h.1M725.7 423.7h.1M706 429.9h.1M692.7 428.9h.1M701.8 424.4h.1M742.1 425.5h.1M733.9 424.2h.1M717.3 428.1h.1M730.9 429.1h.1M734.5 431.4h.1M707.3 428.9h.1M754.3 429.5h.1M733.4 424.8h.1M703.3 423.4h.1M714.7 424.2h.1M729.2 424.7h.1M751.9 437h.1M772.5 430.4h.1M704.7 430.7h.1M710.4 424.8h.1M737.3 430.2h.1M711.1 427.1h.1M722.5 430.6h.1M714 421.8h.1M729.3 433.6h.1M701.3 428.1h.1M693.9 423.4h.1M704.8 428.4h.1M742.1 424.2h.1M764 431.8h.1M747.2 431.1h.1M702.9 424.1h.1M705.7 425.5h.1M723 427.3h.1M711.4 426.3h.1M697.8 432.2h.1M725.5 424.7h.1M708.5 425.8h.1M749.2 424.9h.1M721.8 430.5h.1M713.8 431.5h.1M703.9 430.9h.1M717.8 421h.1M718 440.4h.1M727.9 416.8h.1M720.8 427.9h.1M717.7 427.2h.1M693.7 427.4h.1M708 437h.1M719 431.1h.1M726.8 432.5h.1M713.6 423.9h.1M701.9 433.5h.1M705.4 424.1h.1M713.4 428.9h.1M728.5 433.8h.1M713 430.2h.1M703.9 428.3h.1M715.5 430.9h.1M715 422.7h.1M736.9 429.6h.1M717.3 427.4h.1M709.3 431.1h.1M717.6 426.3h.1M724.4 430.1h.1M682.5 422.5h.1M712.8 430.4h.1M703 431.4h.1M709.3 423.4h.1M707.4 422.2h.1M744.3 421.1h.1M731.8 426.2h.1M722.3 419.8h.1M708.5 426.6h.1M723.5 423.6h.1M724.5 427.8h.1M697.2 426.7h.1M688.9 436.1h.1M743.2 430.1h.1M737.4 428.2h.1M719.3 429.7h.1M739.1 432.2h.1M735.1 428.5h.1M746.1 425.5h.1M689.4 429.8h.1M728.1 432.4h.1M738.3 418h.1M722.4 424.8h.1M699.7 429.1h.1M689.6 435.3h.1M740.6 431.5h.1M756.1 427.9h.1M686.6 428.2h.1M698.8 430.4h.1M730.1 427h.1M730.9 430.8h.1M712.7 424.7h.1M697.2 429.5h.1M734.2 423.3h.1M733.1 425.6h.1M691.3 427.1h.1M718.7 433.6h.1M717.1 431.2h.1M738.5 423.7h.1M724.5 427.3h.1M724 431.5h.1M724.2 423.3h.1M688.2 414.6h.1M752.5 433.1h.1M711.7 426.6h.1M718.1 426.1h.1M742.9 429.9h.1M731.2 422.2h.1M716.1 423.6h.1M718.8 426.9h.1M737.6 423.9h.1M717.1 426.7h.1M701.7 428.4h.1M735.6 424.2h.1M750.1 425.4h.1M729.4 427.7h.1M730.3 422.5h.1M695.4 432.4h.1M708.5 434.9h.1M694.2 426.8h.1M735.1 429.9h.1M723.9 428.3h.1M675.8 421h.1M725.1 425.4h.1M736.2 427.6h.1M704.2 424.7h.1M713.4 434.7h.1M749.1 428.6h.1M681.4 428.8h.1M730.3 417.9h.1M738.2 420.3h.1M726.4 422.5h.1M713.9 431.1h.1M722.2 421.4h.1M723.9 426.4h.1M733.5 428.8h.1M737.5 425h.1M693.4 423.3h.1M717.9 424.9h.1M717.5 424h.1M740.3 418.5h.1M704 422h.1M739.4 430.1h.1M707.3 421.6h.1M707.4 430.1h.1M700.1 419.9h.1M715.4 425.3h.1M712.4 422.4h.1M720.6 422.2h.1M715.9 429h.1M730.7 423.7h.1M725.2 427h.1M742.6 418.7h.1M718.7 432.8h.1M717.8 429.3h.1M702.1 422.5h.1M736.2 426.2h.1M714.4 427.3h.1M737.3 426.8h.1M692 426.5h.1M740.4 427.1h.1M744.3 428.1h.1M688 435.8h.1M729.2 425.5h.1M707.8 415.5h.1M683.6 430.5h.1M712.4 432.2h.1M720 431.7h.1M695 428.4h.1M724.8 428.4h.1M737.1 436.9h.1M700.5 422h.1M678 429.1h.1M717.4 428.2h.1M721.5 423.1h.1M719.9 429h.1M744.5 427.4h.1M727.6 423.2h.1M665.6 425.7h.1M717.9 437.6h.1M706.8 427h.1M714.2 425.2h.1M692.4 432.9h.1M723.9 427.7h.1M717 428.7h.1M709.2 429.2h.1M694.6 426.3h.1M735.2 428.9h.1M732.6 423.5h.1M724.7 428.2h.1M704.2 424.1h.1M704.3 434.1h.1M740 430.9h.1M706.4 436.1h.1M727.3 428.9h.1M740.7 430.5h.1M693.5 424.7h.1M698.7 420.7h.1M726.8 435.1h.1M687.9 428.2h.1M710.2 427.8h.1M709.4 416.7h.1M734.2 438.3h.1M693.6 427.6h.1M721.5 428.3h.1M728.5 425.1h.1M699.8 430.5h.1M705.3 427.6h.1M731.4 423.3h.1M701 428.6h.1M680 429.8h.1M737.5 422.8h.1M722.7 430h.1M707.2 425.7h.1M720.1 412.8h.1M716.8 429.8h.1M725.3 423.6h.1M743.9 423h.1M746.4 428h.1M706.6 417.7h.1M705.7 430.6h.1M713.4 430.7h.1M747 424.6h.1M734.5 431.1h.1M685.6 432.4h.1M713.5 421.9h.1M710.2 423.3h.1M731.6 426.9h.1M740.5 428h.1M705.5 419.1h.1M697.8 422.2h.1M721.2 426.5h.1M733.7 431h.1M722.1 427.4h.1M706.1 430h.1M714.8 429.6h.1M730.1 429.5h.1M724.2 426.1h.1M727.1 422.9h.1M709.6 432.5h.1M709.3 421.7h.1M720.5 424.7h.1M671.2 428.3h.1M715.2 424h.1M728.3 428.9h.1M731.7 422.5h.1M711.7 427.4h.1M716.7 432.5h.1M729.4 427.4h.1M717 427.3h.1M681.4 434.2h.1M724.3 428.4h.1M696.4 429.2h.1M703.6 421.3h.1M771.5 422.9h.1M725.5 432.8h.1M730 425.7h.1M734.1 424.7h.1M732 435.2h.1M720.8 425.7h.1M732.3 432h.1M720.5 428.1h.1M706.3 427h.1M726.6 428.7h.1M720.5 426.5h.1M729.6 423.9h.1M733.6 430.1h.1M748.9 426.8h.1M700.5 434.6h.1M724.5 428.2h.1M750.5 425.4h.1M709.2 416.5h.1M702.2 426.2h.1M714.9 428.7h.1M710.5 425.9h.1M700.8 428h.1M734.1 422.4h.1M707.2 429.8h.1M720.9 426.1h.1M700.5 420.9h.1M758.1 433.4h.1M705.8 428.7h.1M705 427h.1M731.4 426.4h.1M712.8 426.1h.1M721 426.2h.1M736.6 428.4h.1M700.8 426.3h.1M738.9 428h.1M705.2 437h.1M669.8 428.4h.1M721.7 430.8h.1M710 431.8h.1M685.1 427h.1M753.3 428.9h.1M713 428h.1M692.5 425.3h.1M717.9 424.6h.1M737.7 426.4h.1M715.4 429.6h.1M713.2 425.6h.1M715.6 424.8h.1M722.5 426.9h.1M723.4 433.2h.1M739 427.9h.1M702.6 423.3h.1M751.3 430.6h.1M736.7 428.8h.1M735.7 427.8h.1M714.4 420.1h.1M727 426.7h.1M714.6 431.1h.1M738.3 426.8h.1M718.6 432.8h.1M699.7 429.5h.1M715.1 426h.1M702.8 427.4h.1M728.5 431.7h.1M715.7 421.4h.1M708 425h.1M720.7 429.1h.1M744.1 430.3h.1M707.4 427.5h.1M725.1 424.4h.1M711.8 428.3h.1M724.5 430.8h.1M757.2 425h.1M695.5 431.2h.1M720 425.1h.1M753.1 435.3h.1M672.1 434.4h.1M732.4 428.3h.1M719.9 419.7h.1M723.3 426.6h.1M706.3 430.2h.1M714 425h.1M689.3 431.5h.1M708.1 422.7h.1M714.1 424.5h.1M705.4 437.5h.1M742.1 426.9h.1M720.3 424.7h.1M756.4 425.5h.1M724.7 431h.1M707.1 423.7h.1M715.8 426.4h.1M716.8 428.2h.1M712.7 426.7h.1M731.5 428.7h.1M730.1 422.2h.1M713.1 433.3h.1M725.4 429.5h.1M689.7 439.8h.1M711.6 431.3h.1M744.3 432.5h.1M758.1 424.4h.1M731.7 429.2h.1M751.3 423.1h.1M719.6 428.4h.1M715.3 423.2h.1M724.8 432.1h.1M728.5 429.8h.1M737 424.6h.1M719.4 426.3h.1M718.6 424.1h.1M732.8 422h.1M725.6 426.7h.1M723.6 419h.1M706.3 422.3h.1M717.1 422.8h.1M721.5 427.9h.1M722 429.2h.1M719.8 429h.1M736.9 424.2h.1M722 430.1h.1M715.8 433.4h.1M715.6 422.9h.1M725.9 435.4h.1M728 430.1h.1M726.7 426.6h.1M727.9 426.8h.1M711.5 424.8h.1M751.6 428.6h.1M704.8 436.3h.1M693.1 421.4h.1M728.6 427.1h.1M738.7 425.7h.1M706.1 420.6h.1M709.4 427.1h.1M729.9 426.3h.1M729.6 431.6h.1M712.5 426.6h.1M710.4 430.3h.1M734.1 425.1h.1M766.8 421.8h.1M770.4 431.1h.1M721.1 423.4h.1M723.9 427h.1M711.2 427.3h.1M715.5 425h.1M690.2 427.2h.1M692.9 434.5h.1M732.3 425h.1M725.4 422.1h.1M710.2 431.5h.1M736.7 422.7h.1M716.6 421.6h.1M710 423.3h.1M707.6 428.5h.1M713.8 432.8h.1M753.4 424.4h.1M706.9 429.4h.1M751.7 421.7h.1M728 430.1h.1M747 429.5h.1M719.4 426.3h.1M699.2 426.4h.1M742.1 434.4h.1M704.5 427.1h.1M757.9 422.2h.1M733.8 431.2h.1M717.3 421.6h.1M704.1 422.7h.1M706.5 430.8h.1M724.2 425.4h.1M709.2 422.8h.1M667.1 420.3h.1M705.3 427h.1M733.7 426.4h.1M724.8 423.4h.1M708.4 427.7h.1M711.4 420.6h.1M711.6 416.6h.1M758.9 427h.1M693.1 415h.1M702 425h.1M718.4 429.5h.1M726.3 419.6h.1M711.3 418.3h.1M749.4 429.3h.1M720.1 430.5h.1M706.5 436.6h.1M711.1 425.8h.1M716.5 426.4h.1M717.1 421.5h.1M725.6 430.9h.1M735.5 431.2h.1M714.6 425.1h.1M730.7 427.9h.1M742.1 436.2h.1M708.1 426.9h.1M690.7 432.1h.1M719.7 429.9h.1M723.3 426.4h.1M749.5 423.9h.1M688.8 424.6h.1M730.1 422.4h.1M716.7 432.5h.1M727 425h.1M759.3 420.3h.1M723.9 422.9h.1M727.8 424.7h.1M723 429.1h.1M705 428.1h.1M724.8 415.5h.1M711.9 428.1h.1M724 428.7h.1M681 430.6h.1M728.2 430.9h.1M721.5 428.1h.1M713.6 424.3h.1M737.9 432.4h.1M725.7 423.4h.1M731 424.9h.1M732.4 439.2h.1M714.8 429.1h.1M725 424h.1M731 428.7h.1M711.9 419.9h.1M725.1 424.7h.1M723.3 422.1h.1M745.8 418.5h.1M719.4 429.1h.1M718.2 423.3h.1M708.4 426.4h.1M712.3 431h.1M725.8 429.2h.1M735.3 424.4h.1M690.3 425h.1M711.7 428.4h.1M723.3 422.3h.1M725.2 428.4h.1M700.4 430h.1M707.9 431.1h.1M715.8 427.5h.1M725.9 427.4h.1M729.7 417.8h.1M700.4 429.5h.1M725.1 430.5h.1M710.9 427.8h.1M715.3 426.5h.1M731.3 425.3h.1M719.2 424h.1M726.7 427.2h.1M725.5 422.7h.1M712.5 429.8h.1M712.7 426.2h.1M721.7 428.5h.1M718.7 426.3h.1M736.7 426.8h.1M728.8 419.7h.1M722.2 437.4h.1M695.6 433h.1M713.3 427.8h.1M724.9 424.6h.1M685.4 439h.1M683.5 430.4h.1M730.9 426h.1M731.6 422.6h.1M711.4 426.6h.1M718.3 437.4h.1M709.6 422.6h.1M718.2 426.7h.1M729.3 426.8h.1M733.5 429.6h.1M738.6 427.3h.1M724.5 428.1h.1M714.2 430h.1M732.5 424.6h.1M724.9 426.8h.1M725.4 421.4h.1M742.8 428.4h.1M720.4 427h.1M711.7 427.5h.1M734.7 422.7h.1M714 438h.1M710.9 430.7h.1M729.4 425.9h.1M706.2 423.8h.1M700.8 426.9h.1M751.4 425.9h.1M731.6 426.9h.1M716.7 428h.1M725.5 421.5h.1M720 424.9h.1M709.3 427.2h.1M708.6 418.9h.1M704.2 434.6h.1M730.1 431.7h.1M729.7 427.6h.1M738.5 430.1h.1M723.4 427.8h.1M742.2 426.8h.1M725.6 429.8h.1M732.8 427.3h.1M713.4 427h.1M722.2 430.1h.1M717.8 434.9h.1M708.9 430.4h.1M723.9 427.6h.1M740.8 421.8h.1M750.6 424h.1M712.3 422.4h.1M721 426.5h.1M746.1 430.3h.1M713.2 421.2h.1M719.2 428h.1M717.6 424.4h.1M731.7 429.4h.1M720.2 424.3h.1M698.5 431.8h.1M728.8 427.6h.1M701 426.3h.1M677.3 426.9h.1M742.4 426.5h.1M731.9 428.3h.1M719 423.1h.1M737.7 426.4h.1M738.6 424.3h.1M728.2 427.5h.1M704.2 424.5h.1M695.2 427.5h.1M720.2 439h.1M736.6 425.8h.1M705 427.4h.1M731.3 430.1h.1M695.4 425.3h.1M731.4 427.2h.1M724.2 425.4h.1M730.7 428.8h.1M690.6 423.3h.1M701.4 435h.1M706.4 422h.1M725.8 427h.1M735.5 430.6h.1M734.2 428.4h.1M698.4 417.6h.1M714.2 429.3h.1M741.3 427.3h.1M729 428.8h.1M696 418.9h.1M732.2 438.2h.1M728.4 421.6h.1M728.4 430.3h.1M722.2 420.8h.1M724.5 423.7h.1M728.8 429h.1M727.7 423.8h.1M733.5 433.5h.1M732.1 432.1h.1M727.2 428.2h.1M716.2 425.5h.1M731.9 425.4h.1M736.9 429h.1M711.2 428.8h.1M708.2 425.5h.1M731.3 427.4h.1M747.1 429.2h.1M706.6 432.1h.1M726.3 424.5h.1M741.9 426.9h.1M727.9 429.5h.1M723.7 418.1h.1M721.7 429.6h.1M719.9 424.6h.1M730.8 433h.1M718.9 425.7h.1M714.5 423.8h.1M761 422h.1M718.7 422.9h.1M727.8 427.2h.1M745.2 431.4h.1M696.9 430.1h.1M712.7 428.2h.1M711.3 423.9h.1M717.6 433.6h.1M737.2 420.2h.1M711.6 427.9h.1M740 421.3h.1M745.3 427.8h.1M710 427.1h.1M728 430.7h.1M733.8 422.6h.1M704.3 423.9h.1M692.4 419.3h.1M720.8 424h.1M699.7 420.2h.1M722.7 424.3h.1M704.7 421.5h.1M709.2 428.7h.1M709.7 427.1h.1M721.6 429.9h.1M735.9 431.1h.1M724.3 424.1h.1M727.3 430.7h.1M695.3 430.6h.1M750.6 419.6h.1M735.8 432h.1M742.8 423.7h.1M720.1 426.6h.1M706.4 433.9h.1M724 426h.1M706.5 430.2h.1M719.4 424.5h.1M716.8 424.8h.1M717 431.5h.1M703.9 426.3h.1M733.3 431.5h.1M703.4 431.7h.1M721.3 429.8h.1M717 429.3h.1M698.5 425.4h.1M727.7 425.1h.1M719.9 428h.1M744.9 428.9h.1M762.5 418.6h.1M710 425.7h.1M686.5 427.2h.1M719.2 430h.1M737.7 426.5h.1M715.8 421.8h.1M745.9 427.5h.1M722.5 422.4h.1M709.1 424.7h.1M715.6 428.6h.1M722.9 437.8h.1M729.7 432.2h.1M707.1 419.4h.1M720.9 441.3h.1M732.7 419.5h.1M715.6 425.8h.1M720.2 425.6h.1M740 434.6h.1M731 424.5h.1M726.4 429.3h.1M706.6 424.3h.1M686.1 426h.1M703.8 424.2h.1M708.8 425.8h.1M730.3 423.5h.1M714.1 433.9h.1M711.5 431h.1M710.2 433h.1M723.7 436.1h.1M714.2 426.6h.1M732.1 424.8h.1M732.2 422.5h.1M726.1 418.6h.1M710.9 426h.1M748.7 428.3h.1M724.1 423.7h.1M733 427.8h.1M731.2 427.8h.1M714.9 425.2h.1M715.2 423.8h.1M714.3 427.7h.1M730.9 426.5h.1M727.5 423.4h.1M695.9 421.2h.1M738.1 440.3h.1M692.4 430.7h.1M705.6 424.5h.1M732.6 425h.1M720.2 432.1h.1M715.3 424.9h.1M680.8 428h.1M730.6 417.1h.1M715.2 427.9h.1M717.9 429.4h.1M699.2 431.4h.1M694.4 430.2h.1M717.7 430.1h.1M683.3 428.6h.1M731.9 427.5h.1M730.6 425.8h.1M701 419.1h.1M704.8 423.2h.1M720 428.1h.1M718.2 414.4h.1M709.2 430.4h.1M717.4 429.5h.1M701.2 421.9h.1M689.1 431h.1M736.5 425h.1M724.9 432.9h.1M697.2 424.3h.1M719 429.5h.1M720.7 422.3h.1M763.2 418.6h.1M734.8 420.1h.1M741.8 427.8h.1M710.7 419.8h.1M733.4 431.9h.1M706.8 420.2h.1M708 428.9h.1M751 429.5h.1M699.9 423.2h.1M753.8 426.5h.1M712.5 434h.1M700.7 423.7h.1M741.9 430.2h.1M693.4 429.9h.1M719.5 428.5h.1M725 420.8h.1M704.6 424.5h.1M703.8 428.1h.1M698.4 432.5h.1M757.1 423.5h.1M700.1 420.1h.1M709.7 426.9h.1M689.7 422.3h.1M725.7 428.5h.1M693.2 430.1h.1M712.9 425.9h.1M716.7 421.5h.1M709.3 427h.1M722.5 428h.1M696.8 426.9h.1M715.8 429.6h.1M733.6 423.7h.1M733.5 429.7h.1M700.4 429.3h.1M699 426.6h.1M747.5 426.6h.1M733 424.1h.1M694.4 425.6h.1M733.4 423.5h.1M722.2 431h.1M730.4 427.8h.1M738.2 422.9h.1M715.8 426.1h.1M732.3 434.6h.1M710.5 433.5h.1M748.6 433.1h.1M723.7 424.4h.1M748.5 431.3h.1M725.3 422h.1M700.6 433.2h.1M717.2 421.9h.1M724.2 428.3h.1M696.4 418.5h.1M703.9 428.1h.1M709.5 424.5h.1M705.5 424.1h.1M723 432h.1M708.4 427.5h.1M736.1 430.2h.1M708.5 429.1h.1M698.9 424h.1M719.5 424.9h.1M736.4 431.1h.1M738.4 431.9h.1M706.6 425.4h.1M711.6 435.1h.1M709.4 430.6h.1M725.3 434h.1M706.3 430.2h.1M666.9 433.4h.1M731.9 425.1h.1M728.2 426.8h.1M700 420.7h.1M713.7 428.1h.1M710.5 422.3h.1M704.8 428.1h.1M720.9 424.6h.1M707.3 424.6h.1M712.9 424.6h.1M728.8 424.5h.1M731.1 422.3h.1M739.7 431.6h.1M719.5 424.4h.1M726.8 432h.1M724.3 430.7h.1M710.6 429.8h.1M695.6 425.6h.1M697 422.8h.1M684.6 420.9h.1M719 422.3h.1M741.2 421.8h.1M727.5 424.9h.1M738.7 427.3h.1M723.8 430.7h.1M744.8 430.1h.1M735.1 421.2h.1M737.5 433.5h.1M712.8 431.1h.1M707.1 432h.1M724.4 428h.1M745.7 423h.1M731.3 419.9h.1M728.7 427.4h.1M720 420.9h.1M712.3 428.9h.1M731.7 430.2h.1M729.2 424h.1M712.7 430.8h.1M740.2 427.4h.1M744.1 428.1h.1M677 430.2h.1M725.6 423.6h.1M682.3 426.4h.1M712.8 423h.1M720.1 428.6h.1M727.6 424.4h.1M727.8 432.2h.1M731.7 431.6h.1M722.2 424.9h.1M708.8 426.6h.1M723 426.7h.1M712.7 433h.1M728.2 428.8h.1M717.4 427.9h.1M667.7 427.9h.1M730.7 429h.1M712.5 427h.1M720.7 427.8h.1M712.5 422.3h.1M753.1 420.2h.1M745.2 422.2h.1M706.5 432.3h.1M729.6 433.8h.1M715.3 427.5h.1M705.2 423.5h.1M731.8 414h.1M702 431.9h.1M748.5 423.9h.1M717.1 428.3h.1M738.4 423.2h.1M712.5 430.5h.1M716.9 424.6h.1M712.3 428.4h.1M751.4 424.2h.1M756.8 424.2h.1M728.7 422.4h.1M710.3 431.8h.1M720 422h.1M727.1 429.3h.1M707.5 423.5h.1M725 425.4h.1M697.5 430.1h.1M712.5 423.1h.1M708.7 432h.1M715 425.1h.1M737.7 429.2h.1M698.9 430h.1M722.2 431.4h.1M712.5 425.7h.1M706.7 427.9h.1M709.5 424.6h.1M691 427.5h.1M723.3 425.5h.1M724.8 430.2h.1M699.5 438.5h.1M723.1 431.9h.1M718.2 423.3h.1M685.4 426.8h.1M715.8 426.4h.1M708.2 421.7h.1M699.6 421.8h.1M697.5 429.1h.1M706.2 433.1h.1M686.4 420.8h.1M729.3 426.1h.1M726.2 428.1h.1M709.1 432.1h.1M720.6 420.4h.1M709.2 425.4h.1M709.5 419.9h.1M719.4 424.9h.1M710.3 427.7h.1M726.2 423.1h.1M701.8 429.9h.1M705.2 422.6h.1M669.9 427.5h.1M745.5 424.5h.1M744.2 422.3h.1M717.7 417.4h.1M724.1 424.3h.1M712 432.1h.1M715.1 422.6h.1M768.9 429.4h.1M724.7 414.8h.1M718.2 428.7h.1M713.9 424.3h.1M724 425.3h.1M725.2 427.9h.1M706.8 426.2h.1M716.3 427.9h.1M727.6 426.2h.1M721.2 427.7h.1M707.6 418.6h.1M723.6 424h.1M719.7 425h.1M715.9 421.5h.1M711.2 428h.1M725.6 427.7h.1M711.5 422.7h.1M700.8 426.1h.1M708.7 427.9h.1M717.4 425.4h.1M702.7 429.1h.1M689.2 430.1h.1M732.2 422.4h.1M702.3 429h.1M703.5 432.9h.1M730.8 424.2h.1M706.6 429.3h.1M707.6 415.5h.1M693.6 416.7h.1M717.7 426.3h.1M690.3 422.3h.1M731.9 430.3h.1M712 432.2h.1M729.8 424.6h.1M709.9 423.9h.1M691.7 429.4h.1M707.5 429h.1M733 428.3h.1M722.7 420.3h.1M715.1 428.5h.1M737.3 427.1h.1M699.3 422.4h.1M712.6 424.4h.1M730.6 429.6h.1M695.1 422.7h.1M723.1 421h.1M714.8 428.1h.1M734.6 429h.1M725 425.1h.1M721.2 426h.1M712 427.7h.1M698.9 418.1h.1M688.3 427.2h.1M689.1 436h.1M715.6 426.8h.1M724.2 424.2h.1M744.3 433.8h.1M723.4 420.1h.1M732.4 426.3h.1M704.6 424h.1M711.1 424h.1M724 425.5h.1M708.9 425.4h.1M726.9 430.2h.1M731.7 432.8h.1M713.4 434.8h.1M713 428.4h.1M715 425h.1M706.5 424.6h.1M738.3 431.5h.1M718.8 429h.1M739.2 420h.1M691 422.2h.1M761.8 417.7h.1M712.6 426.9h.1M717 429.9h.1M728.4 431.9h.1M727.5 426.5h.1M744.1 426.4h.1M720.6 425.5h.1M695 416.4h.1M738.9 424.7h.1M714.7 425h.1M692.3 427.7h.1M701.2 428.2h.1M711.9 425.8h.1M693.6 427.9h.1M712 417.3h.1M711.4 426.9h.1M738.3 426.2h.1M734.7 435.8h.1M715.4 423.7h.1M687.3 430.5h.1M707.1 426.3h.1M707.8 427.1h.1M727.6 427.6h.1M696.1 418.8h.1M747.7 433.2h.1M710.9 429.7h.1M696.6 432.9h.1M719.7 425.6h.1M703.8 432.6h.1M707.6 416.4h.1M718.9 420.7h.1M708.4 416.3h.1M708.1 431.2h.1M764.3 427.1h.1M718.7 428h.1M703.1 423.1h.1M737.8 423.3h.1M731.6 429.4h.1M749.6 419.6h.1M710.1 425.8h.1M716.1 426.4h.1M726.9 433.8h.1M726.6 429.9h.1M709.9 428.1h.1M750 427.6h.1M702.8 419.8h.1M727 429.6h.1M713.5 428.6h.1M714.1 429h.1M716 425.6h.1M752.8 425.9h.1M711 428.7h.1M682.4 425.2h.1M734.2 423.8h.1M723 426.9h.1M729.6 426.3h.1M731.5 423.5h.1M749.4 420.2h.1M708.5 430.4h.1M712.5 417.9h.1M727.6 430.6h.1M715.3 426.8h.1M723.8 426h.1M694.3 425.1h.1M712.4 425.7h.1M727.5 424.2h.1M726.7 422.3h.1M681.8 429.3h.1M761.6 418.4h.1M742.5 422.4h.1M745.2 423.5h.1M735.1 431h.1M707.2 428.4h.1M719.4 427.5h.1M693.8 434.9h.1M727.3 423.9h.1M714.6 422.9h.1M725.9 429.3h.1M712.4 425.7h.1M721.5 431.7h.1M708.1 433.7h.1M711.3 427.6h.1M708.2 430.2h.1M715.3 426.4h.1M723.8 426.2h.1M744 428.1h.1M710.4 430.7h.1M736.9 428.1h.1M704.5 432.8h.1M739.8 426.2h.1M718.3 424.4h.1M704.5 424.5h.1M715.9 428.1h.1M729.3 425.9h.1M718.9 423.5h.1M724.8 427.5h.1M718.1 425.8h.1M741.5 422.6h.1M725.4 436.1h.1M723.7 429.8h.1M723.5 429.3h.1M697.6 427.9h.1M731.3 425.1h.1M709.6 420.3h.1M714.5 432.7h.1M750.5 430.4h.1M705.3 428.6h.1M755.1 426.1h.1M713.3 428.9h.1M700.3 428.1h.1M707.1 422.5h.1M707.6 432.9h.1M716.2 426.6h.1M710.8 425.8h.1M709.5 428.9h.1M715.2 433.3h.1M735.7 424.7h.1M739.9 425.7h.1M703.6 424.8h.1M719.2 423.8h.1M711.8 419.9h.1M734.3 429.3h.1M701.8 425h.1M729.3 429h.1M734 436.1h.1M713.4 427.5h.1M713 427h.1M723.8 424.1h.1M692.1 427.4h.1M705.2 421.2h.1M702.5 422.4h.1M723.9 424.2h.1M701.3 426.9h.1M708.5 423.8h.1M664.4 425.2h.1M705.1 422.6h.1M734.7 423.1h.1M725 429.2h.1M735.4 429.7h.1M689.3 428.9h.1M741.2 426.5h.1M723.8 418.4h.1M688 425.7h.1M734 431h.1M727.6 419.3h.1M727.6 416h.1M723.2 427.1h.1M733.1 424.3h.1M726.2 424.9h.1M728.6 435.1h.1M727.4 427.4h.1M724 424.6h.1M720.7 423.3h.1M719.4 424.1h.1M712.2 431.4h.1M722.5 426.6h.1M726.9 430.2h.1M717 419.2h.1M717.3 429h.1M742.4 426.7h.1M742.1 426.7h.1M722 431h.1M708.3 422.8h.1M751.7 425.3h.1M695.2 426.4h.1M753 430.1h.1M734.4 427h.1M706.6 426.5h.1M714.9 414.1h.1M699.4 425.4h.1M722.9 425.8h.1M697.6 428.8h.1M692.5 418.3h.1M721.3 428.3h.1M708.5 430.6h.1M717.1 428.7h.1M715.4 427.7h.1M709.7 427.6h.1M726.5 422.8h.1M706.8 421.6h.1M731 422.5h.1M711.7 427.2h.1M736.7 424.1h.1M712.5 428.7h.1M727.2 428.9h.1M733.2 419.9h.1M716 429.4h.1M685.4 438h.1M736.4 421.1h.1M681.2 430.2h.1M724.4 430.5h.1M694.3 422h.1M713.1 427.7h.1M716.6 429.5h.1M710.9 425h.1M721.1 428.4h.1M726.5 428h.1M719.8 429.9h.1M722.2 421.6h.1M745.3 429.7h.1M727.6 432.9h.1M722.7 422.2h.1M711.3 429h.1M693.8 436.6h.1M705.2 429.8h.1M726.5 428.5h.1M719.7 429.4h.1M726.3 424.7h.1M689 423.2h.1M719.9 426.6h.1M677.9 428.4h.1M712.1 424.2h.1M679.1 432.4h.1M718.9 431.5h.1M724.1 425h.1M699.6 426h.1M729.2 420.8h.1M722.7 426.2h.1M715.4 427.3h.1M697.2 437.5h.1M702.1 424.4h.1M710.9 433.5h.1M734.4 431h.1M712.2 431.5h.1M679.3 431.6h.1M693.3 430.4h.1M720.9 427.3h.1M714.2 430.2h.1M727.7 421.1h.1M728.7 427.8h.1M731 427.8h.1M734.4 432.6h.1M753 434.1h.1M723.6 425.7h.1M699.6 425.7h.1M729.6 424.1h.1M734.5 432h.1M725.5 424.9h.1M688.3 427h.1M724.9 420.3h.1M750.2 420h.1M725.9 423.9h.1M713.4 432.7h.1M681 427.3h.1M696.1 422.3h.1M755.4 426h.1M719.4 434.6h.1M731.4 426.5h.1M714.6 432.1h.1M704.4 424.3h.1M754.6 424.6h.1M723.7 425.5h.1M736.7 424.8h.1M719.7 431.9h.1M701.6 425.1h.1M751.5 430.8h.1M712.8 422.7h.1M725 424.2h.1M722.9 426h.1M730.3 428.8h.1M728.6 426.7h.1M746.2 420.8h.1M717.2 424.7h.1M741.9 427.3h.1M742.7 423.3h.1M715.1 429.5h.1M702.7 422.4h.1M717.3 422.1h.1M731.5 427.6h.1M724.1 435.1h.1M740.7 438.5h.1M718.8 430.8h.1M686.8 424.2h.1M703.2 429.8h.1M689 416.1h.1M686.8 424h.1M713 439.4h.1M729.3 428.7h.1M725.9 427.9h.1M726.6 427.2h.1M727.7 428.8h.1M713.6 427.6h.1M735.9 422.6h.1M725.4 432.1h.1M727.6 427.2h.1M695.7 426.2h.1M733.5 424.4h.1M742.6 422.4h.1M716.3 427.5h.1M688.8 428.6h.1M735 421.7h.1M714 426.8h.1M714.1 422.6h.1M714.2 432.4h.1M705.9 425.3h.1M725.7 427.6h.1M738.1 428.3h.1M718 423.9h.1M705.7 430.9h.1M713.3 428.7h.1M715.5 422.8h.1M713.9 424.8h.1M723.1 426.4h.1M717.5 425.1h.1M718 422.3h.1M718.8 422.7h.1M704.4 422.7h.1M726.4 433.1h.1M732.4 427.4h.1M724.6 417.1h.1M720.8 423.2h.1M758.4 426.9h.1M722.5 427.8h.1M746.2 430.3h.1M705.1 428.1h.1M706.2 431.9h.1M695.4 430.2h.1M705.3 428.1h.1M704.5 425.9h.1M717.3 434.3h.1M722 429.6h.1M712.3 427.1h.1M718.5 427.8h.1M710.1 428.4h.1M703.4 430.2h.1M701 427.8h.1M707.9 416.6h.1M741.7 429.2h.1M694 423.5h.1M728.8 429.7h.1M726.9 430.1h.1M709.2 429h.1M726.6 427.5h.1M752.3 423.6h.1M707.1 423.6h.1M721.7 421.7h.1M710.9 429.4h.1M713.5 430.8h.1M717.5 425.1h.1M717 430.5h.1M704.4 430.2h.1M712.4 427.1h.1M738.8 419.7h.1M740 428.8h.1M722.7 426.9h.1M736.1 436.8h.1M710.9 428.9h.1M713.7 425.6h.1M720.8 431.1h.1M736.4 427.2h.1M721.7 425.7h.1M697.9 425.5h.1M760.1 426.8h.1M741.7 428h.1M725.6 425h.1M696.6 426.3h.1M721.6 424.1h.1M766.3 421.6h.1M709.5 427.5h.1M728.2 424.3h.1M709.8 429.2h.1M724.5 425.9h.1M666.2 420.2h.1M709.3 425.4h.1M711.5 427.6h.1M726.8 432.9h.1M720.6 427.3h.1M713.7 427.2h.1M696.3 418.8h.1M699.6 429.6h.1M711.5 420.6h.1M722.5 432h.1M757.3 429.7h.1M713.5 429.2h.1M712.4 428.5h.1M719.3 424.7h.1M683.5 428.6h.1M729.2 431.6h.1M732 428.1h.1M694.3 423h.1M706.3 433.4h.1M758.9 432.3h.1M719.5 425.3h.1M708.6 434.7h.1M707 431.1h.1M744.3 427.8h.1M716.1 420.3h.1M700.8 432.8h.1M722.4 424.1h.1M763.2 428.5h.1M708.1 423.1h.1M699.9 423.6h.1M763 429.9h.1M719 418.3h.1M738.4 429.6h.1M725.9 431.2h.1M703.9 428.2h.1M697.9 425.9h.1M748.1 421h.1M711.6 424.8h.1M723.1 430h.1M700.9 427.7h.1M730 426.3h.1M627.3 425.3h.1M640.6 429.6h.1M666.4 428.5h.1M638.3 429.7h.1M635 432.3h.1M645.8 430.8h.1M645.3 426.3h.1M663.2 434.9h.1M648.7 430h.1M637.2 431h.1M671.8 432.5h.1M672.9 432.4h.1M668 424h.1M659.8 427h.1M660.5 426.9h.1M659.6 426.7h.1M658.9 429.6h.1M648.6 430h.1M635.3 432.3h.1M651.5 426.2h.1M631.6 427.5h.1M674.3 429.3h.1M657.1 430.2h.1M653.7 425.1h.1M628.1 426.7h.1M648.2 429.7h.1M642.4 432.9h.1M667 420h.1M666.6 428.6h.1M679.9 428.1h.1M798 415h.1M802 428h.1M790 418h.1M714 398h.1M711 405h.1" stroke="#2f5caf" stroke-width="2.6" stroke-linecap="round" fill="none" opacity="1.0"/><line x1="1084.3" y1="114" x2="1084.3" y2="465.5" stroke="#595f64" stroke-width="2"/><line x1="1079.8" y1="459.9" x2="1084.3" y2="459.9" stroke="#595f64" stroke-width="1.6"/><line x1="1079.8" y1="443.1" x2="1084.3" y2="443.1" stroke="#595f64" stroke-width="1.6"/><line x1="1079.8" y1="426.4" x2="1084.3" y2="426.4" stroke="#595f64" stroke-width="1.6"/><line x1="1079.8" y1="409.6" x2="1084.3" y2="409.6" stroke="#595f64" stroke-width="1.6"/><line x1="1079.8" y1="376.2" x2="1084.3" y2="376.2" stroke="#595f64" stroke-width="1.6"/><line x1="1079.8" y1="359.4" x2="1084.3" y2="359.4" stroke="#595f64" stroke-width="1.6"/><line x1="1079.8" y1="342.7" x2="1084.3" y2="342.7" stroke="#595f64" stroke-width="1.6"/><line x1="1079.8" y1="325.9" x2="1084.3" y2="325.9" stroke="#595f64" stroke-width="1.6"/><line x1="1079.8" y1="292.5" x2="1084.3" y2="292.5" stroke="#595f64" stroke-width="1.6"/><line x1="1079.8" y1="275.7" x2="1084.3" y2="275.7" stroke="#595f64" stroke-width="1.6"/><line x1="1079.8" y1="259" x2="1084.3" y2="259" stroke="#595f64" stroke-width="1.6"/><line x1="1079.8" y1="242.2" x2="1084.3" y2="242.2" stroke="#595f64" stroke-width="1.6"/><line x1="1079.8" y1="208.8" x2="1084.3" y2="208.8" stroke="#595f64" stroke-width="1.6"/><line x1="1079.8" y1="192" x2="1084.3" y2="192" stroke="#595f64" stroke-width="1.6"/><line x1="1079.8" y1="175.3" x2="1084.3" y2="175.3" stroke="#595f64" stroke-width="1.6"/><line x1="1079.8" y1="158.5" x2="1084.3" y2="158.5" stroke="#595f64" stroke-width="1.6"/><line x1="1079.8" y1="125.1" x2="1084.3" y2="125.1" stroke="#595f64" stroke-width="1.6"/><line x1="1075.8" y1="392.9" x2="1084.3" y2="392.9" stroke="#595f64" stroke-width="1.6"/><line x1="1075.8" y1="309.2" x2="1084.3" y2="309.2" stroke="#595f64" stroke-width="1.6"/><line x1="1075.8" y1="225.5" x2="1084.3" y2="225.5" stroke="#595f64" stroke-width="1.6"/><line x1="1075.8" y1="141.8" x2="1084.3" y2="141.8" stroke="#595f64" stroke-width="1.6"/><text x="1071.3" y="397.2" text-anchor="end" class="al">10 000</text><text x="1071.3" y="313.5" text-anchor="end" class="al">20 000</text><text x="1071.3" y="229.8" text-anchor="end" class="al">30 000</text><text x="1071.3" y="146.1" text-anchor="end" class="al">40 000</text><line x1="1095" y1="480.3" x2="1748" y2="480.3" stroke="#595f64" stroke-width="2"/><line x1="1100.8" y1="480.3" x2="1100.8" y2="484.8" stroke="#595f64" stroke-width="1.6"/><line x1="1118.5" y1="480.3" x2="1118.5" y2="484.8" stroke="#595f64" stroke-width="1.6"/><line x1="1136.2" y1="480.3" x2="1136.2" y2="484.8" stroke="#595f64" stroke-width="1.6"/><line x1="1153.9" y1="480.3" x2="1153.9" y2="484.8" stroke="#595f64" stroke-width="1.6"/><line x1="1189.3" y1="480.3" x2="1189.3" y2="484.8" stroke="#595f64" stroke-width="1.6"/><line x1="1207" y1="480.3" x2="1207" y2="484.8" stroke="#595f64" stroke-width="1.6"/><line x1="1224.7" y1="480.3" x2="1224.7" y2="484.8" stroke="#595f64" stroke-width="1.6"/><line x1="1242.3" y1="480.3" x2="1242.3" y2="484.8" stroke="#595f64" stroke-width="1.6"/><line x1="1277.7" y1="480.3" x2="1277.7" y2="484.8" stroke="#595f64" stroke-width="1.6"/><line x1="1295.4" y1="480.3" x2="1295.4" y2="484.8" stroke="#595f64" stroke-width="1.6"/><line x1="1313.1" y1="480.3" x2="1313.1" y2="484.8" stroke="#595f64" stroke-width="1.6"/><line x1="1330.8" y1="480.3" x2="1330.8" y2="484.8" stroke="#595f64" stroke-width="1.6"/><line x1="1366.2" y1="480.3" x2="1366.2" y2="484.8" stroke="#595f64" stroke-width="1.6"/><line x1="1383.9" y1="480.3" x2="1383.9" y2="484.8" stroke="#595f64" stroke-width="1.6"/><line x1="1401.6" y1="480.3" x2="1401.6" y2="484.8" stroke="#595f64" stroke-width="1.6"/><line x1="1419.3" y1="480.3" x2="1419.3" y2="484.8" stroke="#595f64" stroke-width="1.6"/><line x1="1454.7" y1="480.3" x2="1454.7" y2="484.8" stroke="#595f64" stroke-width="1.6"/><line x1="1472.4" y1="480.3" x2="1472.4" y2="484.8" stroke="#595f64" stroke-width="1.6"/><line x1="1490.1" y1="480.3" x2="1490.1" y2="484.8" stroke="#595f64" stroke-width="1.6"/><line x1="1507.8" y1="480.3" x2="1507.8" y2="484.8" stroke="#595f64" stroke-width="1.6"/><line x1="1543.1" y1="480.3" x2="1543.1" y2="484.8" stroke="#595f64" stroke-width="1.6"/><line x1="1560.8" y1="480.3" x2="1560.8" y2="484.8" stroke="#595f64" stroke-width="1.6"/><line x1="1578.5" y1="480.3" x2="1578.5" y2="484.8" stroke="#595f64" stroke-width="1.6"/><line x1="1596.2" y1="480.3" x2="1596.2" y2="484.8" stroke="#595f64" stroke-width="1.6"/><line x1="1631.6" y1="480.3" x2="1631.6" y2="484.8" stroke="#595f64" stroke-width="1.6"/><line x1="1649.3" y1="480.3" x2="1649.3" y2="484.8" stroke="#595f64" stroke-width="1.6"/><line x1="1667" y1="480.3" x2="1667" y2="484.8" stroke="#595f64" stroke-width="1.6"/><line x1="1684.7" y1="480.3" x2="1684.7" y2="484.8" stroke="#595f64" stroke-width="1.6"/><line x1="1720.1" y1="480.3" x2="1720.1" y2="484.8" stroke="#595f64" stroke-width="1.6"/><line x1="1737.8" y1="480.3" x2="1737.8" y2="484.8" stroke="#595f64" stroke-width="1.6"/><line x1="1171.6" y1="480.3" x2="1171.6" y2="488.8" stroke="#595f64" stroke-width="1.6"/><line x1="1260" y1="480.3" x2="1260" y2="488.8" stroke="#595f64" stroke-width="1.6"/><line x1="1348.5" y1="480.3" x2="1348.5" y2="488.8" stroke="#595f64" stroke-width="1.6"/><line x1="1437" y1="480.3" x2="1437" y2="488.8" stroke="#595f64" stroke-width="1.6"/><line x1="1525.4" y1="480.3" x2="1525.4" y2="488.8" stroke="#595f64" stroke-width="1.6"/><line x1="1613.9" y1="480.3" x2="1613.9" y2="488.8" stroke="#595f64" stroke-width="1.6"/><line x1="1702.4" y1="480.3" x2="1702.4" y2="488.8" stroke="#595f64" stroke-width="1.6"/><text x="1171.6" y="500.8" text-anchor="middle" class="al">10 000</text><text x="1260" y="500.8" text-anchor="middle" class="al">20 000</text><text x="1348.5" y="500.8" text-anchor="middle" class="al">30 000</text><text x="1437" y="500.8" text-anchor="middle" class="al">40 000</text><text x="1525.4" y="500.8" text-anchor="middle" class="al">50 000</text><text x="1613.9" y="500.8" text-anchor="middle" class="al">60 000</text><text x="1702.4" y="500.8" text-anchor="middle" class="al">70 000</text><path d="M1085.5 479L1084.4 480.6L1084 482.5L1082.1 482.9L1080.5 484L1078.9 482.9L1077 482.5L1076.6 480.6L1075.5 479L1076.6 477.4L1077 475.5L1078.9 475.1L1080.5 474L1082.1 475.1L1084 475.5L1084.4 477.4Z" fill="#1581c9"/><circle cx="1080.5" cy="479" r="1.3" fill="#f8f8f8"/><path d="M1090.4 472.7L1089.5 474L1089.2 475.5L1087.7 475.8L1086.4 476.7L1085.1 475.8L1083.6 475.5L1083.3 474L1082.4 472.7L1083.3 471.4L1083.6 469.9L1085.1 469.6L1086.4 468.7L1087.7 469.6L1089.2 469.9L1089.5 471.4Z" fill="#1581c9"/><circle cx="1086.4" cy="472.7" r="1.1" fill="#f8f8f8"/><line x1="1249.3" y1="110" x2="1249.3" y2="476" stroke="#22a050" stroke-width="1.7" stroke-dasharray="5 1"/><line x1="1088.5" y1="367.4" x2="1664" y2="367.4" stroke="#c35f58" stroke-width="2.8" stroke-linecap="round"/><path d="M1114.1 263.7h.1M1111.9 240.3h.1M1111.6 277.4h.1M1105.8 259h.1M1103.9 247.1h.1M1110.4 283.6h.1M1111.4 240.9h.1M1111 255.9h.1M1112.1 304.9h.1M1107.3 283.8h.1M1109.3 231.9h.1M1104.7 226.7h.1M1105.5 261.2h.1M1107 261.8h.1M1105.3 314.4h.1M1112 269.8h.1M1109.5 231.6h.1M1110.1 294.4h.1M1104.8 286.4h.1M1102.6 262.5h.1M1110 271.4h.1M1105 335.3h.1M1112.8 243.2h.1M1108.1 261.5h.1M1110.1 293.4h.1M1102.3 318.7h.1M1108.3 260.2h.1M1107.6 259.1h.1M1109.3 241.7h.1M1109.7 261.9h.1M1106.6 279h.1M1108.2 221.7h.1M1105.4 204.7h.1M1112.2 299.6h.1M1111.7 233.6h.1M1106.9 185.1h.1M1109.2 250.4h.1M1111.4 273.5h.1M1109.3 259.6h.1M1109.8 262.7h.1M1105.7 231.3h.1M1108.7 328.1h.1M1106.5 236.9h.1M1105.9 221.3h.1M1109.7 204.5h.1M1109.9 296.7h.1M1113.9 250h.1M1111.2 286.9h.1M1105.7 278.3h.1M1110.3 246.1h.1M1111.9 230.5h.1M1104.6 223.5h.1M1108.5 221.9h.1M1110.3 244.8h.1M1110.4 263.7h.1M1107.1 288.8h.1M1108.6 207.1h.1M1107.5 308h.1M1114.4 283.6h.1M1110.3 217.3h.1M1111.1 269.9h.1M1106.8 291.6h.1M1113.3 304.4h.1M1112.3 328.2h.1M1104 185.7h.1M1107.9 232.8h.1M1112.6 264.7h.1M1111.8 241.4h.1M1104.7 313.8h.1M1102.6 275.8h.1M1107.3 297.3h.1M1109.4 267.3h.1M1103.4 256.2h.1M1106.4 240.9h.1M1108.9 236.3h.1M1108.9 218.2h.1M1104 262.2h.1M1109.6 270.3h.1M1114.5 263h.1M1104.8 277.6h.1M1106.9 286.8h.1M1101.4 266.7h.1M1107.7 253.6h.1M1110.6 231.7h.1M1108.7 238.6h.1M1102.2 270.3h.1M1110.7 209h.1M1109.1 264.3h.1M1111 260.7h.1M1108.9 248.8h.1M1105.9 267.3h.1M1110.7 262.6h.1M1112.4 260.9h.1M1106.8 254.6h.1M1108.3 259.7h.1M1109.7 246.7h.1M1105.6 305.7h.1M1109.5 226.3h.1M1109.2 265.1h.1M1106.9 243.6h.1M1104.5 275.9h.1M1115.3 356.9h.1M1105.3 200.2h.1M1108.5 307.2h.1M1113.1 281h.1M1113.7 300.3h.1M1111.5 216.4h.1M1100.6 308.2h.1M1113.8 294.2h.1M1110.3 250.6h.1M1103.3 292.8h.1M1107.4 196.8h.1M1103.9 284h.1M1109.7 310.1h.1M1107.9 216.7h.1M1103.4 304.1h.1M1115.1 298.7h.1M1109.3 254.2h.1M1110.8 236h.1M1102.9 195.2h.1M1109.8 220h.1M1113.5 239h.1M1108.1 302h.1M1108.6 245.2h.1M1099.6 293.6h.1M1110.7 255.1h.1M1116.1 250.3h.1M1114.3 273.4h.1M1102.5 297.2h.1M1111.4 262.2h.1M1107.1 281h.1M1114.3 249.4h.1M1112.5 233.5h.1M1108.7 281.4h.1M1106.2 285.5h.1M1106 203h.1M1111.4 258h.1M1108.6 292.2h.1M1102.7 244.1h.1M1107.4 211.2h.1M1100.9 250.3h.1M1107.1 270.8h.1M1117.3 287.9h.1M1109.5 296.1h.1M1113.9 280.1h.1M1113.9 283.8h.1M1104.2 295.1h.1M1115.1 253.4h.1M1107.9 259.5h.1M1107 212.1h.1M1113.2 303.3h.1M1109.5 236.4h.1M1111.7 269.2h.1M1108 212h.1M1112.6 257.6h.1M1106.6 245.5h.1M1108.9 294.1h.1M1106.1 297.6h.1M1110.8 248.4h.1M1109.5 253.5h.1M1110.7 198.1h.1M1109.3 308.2h.1M1110.4 217.7h.1M1108.5 288.7h.1M1112.9 261.8h.1M1110.6 237.4h.1M1111.3 208.1h.1M1114.6 258.6h.1M1111.3 198.1h.1M1111.8 320.9h.1M1104.8 270.1h.1M1111.6 187.5h.1M1106.7 297.4h.1M1106.7 252.7h.1M1108.3 233.8h.1M1105.7 280.9h.1M1112 291.2h.1M1108.6 208.2h.1M1110.3 291.6h.1M1105.3 277h.1M1108.8 264.7h.1M1098.7 249.5h.1M1107.9 231.2h.1M1107.2 282.7h.1M1104.7 259.7h.1M1109 280.5h.1M1105.8 316.2h.1M1108.8 223h.1M1106.5 264.8h.1M1107.8 254.3h.1M1102.5 262.5h.1M1111.9 264.6h.1M1109.9 222.3h.1M1110.2 217.8h.1M1109.7 261.1h.1M1113.4 280.2h.1M1108.7 187.5h.1M1113 250.1h.1M1107.2 314.9h.1M1100.7 326.1h.1M1108.1 188.2h.1M1109.3 284.7h.1M1107.7 252.6h.1M1108.1 237.4h.1M1096.8 278.8h.1M1111 230.4h.1M1107.7 313.3h.1M1112.5 302.3h.1M1104.9 271.6h.1M1111 315.9h.1M1110.6 269.7h.1M1111.2 189.4h.1M1107.1 221h.1M1110.6 213.2h.1M1107.3 251.5h.1M1102.9 293.9h.1M1113 266.8h.1M1108 300.4h.1M1112.4 285.1h.1M1111.4 281.3h.1M1107.6 341.9h.1M1110.9 250.6h.1M1104.8 213.4h.1M1104.8 289h.1M1103.6 268.9h.1M1103.6 207.9h.1M1109.3 234.8h.1M1111.4 226.1h.1M1113.1 269h.1M1110 250.6h.1M1108.8 218.2h.1M1108.5 217.3h.1M1107.9 224.6h.1M1104.1 313.3h.1M1106.3 210.8h.1M1104.4 225.3h.1M1107.5 270.8h.1M1108.7 229.3h.1M1108 259h.1M1105.4 247.3h.1M1103.2 301.2h.1M1113.3 264.6h.1M1107.7 235h.1M1105.9 277.5h.1M1102.7 243.8h.1M1116.4 300.6h.1M1106.6 280.1h.1M1103.7 256.9h.1M1100.8 290.6h.1M1112.4 281.9h.1M1108.6 205.5h.1M1106.8 254.3h.1M1107.2 266.8h.1M1106.9 246.2h.1M1107.2 234.2h.1M1109.1 257.6h.1M1109.2 266.5h.1M1113.1 265.7h.1M1112.3 264.2h.1M1110.6 249.4h.1M1106.8 272.5h.1M1108 261.6h.1M1106.7 211.5h.1M1102.3 246.4h.1M1100.7 298h.1M1104.8 227.3h.1M1111.7 281.8h.1M1104.9 270.5h.1M1105.7 275.8h.1M1106.2 235.1h.1M1105.1 260.6h.1M1107.9 239.9h.1M1113.1 325.7h.1M1104.7 239h.1M1110.1 265.7h.1M1107.4 258.5h.1M1111.2 289.6h.1M1107.5 236.6h.1M1109.9 289.9h.1M1108.1 223.7h.1M1112.7 285.5h.1M1103.2 246.5h.1M1106.8 288.1h.1M1101.9 224.6h.1M1111.1 290.5h.1M1114.2 258.4h.1M1111.1 279.4h.1M1109.3 221.4h.1M1108.5 261.6h.1M1108.9 266.1h.1M1105.5 320.4h.1M1106.8 267.9h.1M1110.2 269.8h.1M1110.4 239.1h.1M1108.2 242.9h.1M1101.1 253.4h.1M1107.6 255.7h.1M1112.9 241.2h.1M1111.4 243.7h.1M1105.2 245.7h.1M1103 307.2h.1M1106.4 262.1h.1M1106.5 216.7h.1M1107.5 270.2h.1M1107.7 249.3h.1M1100.9 307.9h.1M1109.7 235.6h.1M1104.1 269h.1M1107.7 227.5h.1M1108.5 311.8h.1M1107.9 214.7h.1M1106.9 240.9h.1M1109.1 269.5h.1M1109.8 292h.1M1109.2 293.3h.1M1112.9 258.5h.1M1107.4 203.2h.1M1109.3 281.5h.1M1109.6 296.3h.1M1111.5 297.3h.1M1112.8 247.7h.1M1109.1 215.1h.1M1109.6 213.4h.1M1107.5 261h.1M1103.7 240.5h.1M1108.1 258.8h.1M1104.2 296.4h.1M1106.5 222.2h.1M1110.2 293.1h.1M1117.6 291.1h.1M1108 212.3h.1M1104.4 231.8h.1M1104.5 304.6h.1M1109.6 263.4h.1M1106.2 257.4h.1M1109.7 313.2h.1M1104.9 267.1h.1M1105.3 260.7h.1M1105.7 260.8h.1M1108 237.7h.1M1110.2 228.1h.1M1106.5 285.6h.1M1106.4 229.6h.1M1110.2 241.1h.1M1101.3 286.9h.1M1109.2 200.5h.1M1111 307.5h.1M1108.5 234.4h.1M1107.6 286.3h.1M1109 224h.1M1107 282.1h.1M1107.8 228.3h.1M1107 290h.1M1110.7 192.7h.1M1108.6 285.2h.1M1107.6 255.7h.1M1110.3 294.1h.1M1105.6 236.6h.1M1107.3 254.7h.1M1101.5 262.9h.1M1113.8 278.2h.1M1109 213.3h.1M1107.5 226.5h.1M1114.1 241.2h.1M1121.1 283h.1M1110.6 288.8h.1M1111.7 255.7h.1M1114.1 230.1h.1M1107.5 247.5h.1M1108.9 189.9h.1M1111.4 247.3h.1M1111.8 250.8h.1M1100.6 258.1h.1M1111.9 258.3h.1M1106.6 263.8h.1M1105.3 254.1h.1M1105.2 245.9h.1M1107.4 273.1h.1M1106.1 215.8h.1M1109 272.1h.1M1109.4 249.7h.1M1109.5 281.7h.1M1105.2 271h.1M1110.8 226.3h.1M1106.7 252.4h.1M1111.8 288.3h.1M1105.7 260.2h.1M1106.8 267.6h.1M1109.2 263.3h.1M1114 275h.1M1107.2 222.7h.1M1111.7 234.1h.1M1109.1 262.9h.1M1107.1 257.8h.1M1110.3 313.7h.1M1110 248.3h.1M1112.8 285.6h.1M1096.1 296.2h.1M1117.7 293.7h.1M1111.1 246.7h.1M1111.1 287.5h.1M1110.9 247.6h.1M1104.1 265h.1M1111.6 248.7h.1M1107.9 286.6h.1M1108.8 255.6h.1M1109.6 251.1h.1M1106.5 280h.1M1109 238.5h.1M1107.8 273.4h.1M1110.5 282.4h.1M1111.6 290.2h.1M1107.9 229h.1M1107.6 265.8h.1M1109.1 284.2h.1M1109.4 272.2h.1M1100.3 278.4h.1M1102.1 328h.1M1116.6 289.3h.1M1106.5 305.5h.1M1110 248.7h.1M1113.5 330.7h.1M1111.9 235.3h.1M1107.7 236.5h.1M1106.2 304.2h.1M1116.2 299.8h.1M1109.2 289.3h.1M1109.7 247.1h.1M1106.9 245h.1M1109.1 217.6h.1M1105.7 281.6h.1M1110.9 247.9h.1M1102.9 254.3h.1M1108.5 253.8h.1M1111.5 257.1h.1M1111.3 243.8h.1M1104.5 218.3h.1M1110.8 249h.1M1119.1 285h.1M1107.3 330.9h.1M1108 307.7h.1M1114.8 234.2h.1M1109.4 270.4h.1M1100.1 231.5h.1M1110.7 274.8h.1M1117.2 280.7h.1M1113.9 217.2h.1M1104.7 284.5h.1M1108.3 224.4h.1M1106.8 257.2h.1M1109.6 217.5h.1M1106.8 230.7h.1M1107.3 251.8h.1M1107.5 244.6h.1M1106.6 279.2h.1M1109.5 259.2h.1M1105.9 247.1h.1M1108.4 276.1h.1M1106.7 242.6h.1M1109.8 275.7h.1M1114.3 244.5h.1M1105.3 290.7h.1M1106.1 279.7h.1M1110.6 251.5h.1M1107 261.5h.1M1101.3 241.1h.1M1108.1 239.2h.1M1104.3 278.9h.1M1109.9 281.6h.1M1108.2 230h.1M1106.1 259.8h.1M1102.6 232h.1M1110.8 288.9h.1M1111.4 279.2h.1M1107.9 253.7h.1M1108.7 268.8h.1M1108.9 300.7h.1M1111.5 304.1h.1M1110.2 227.9h.1M1109.7 238.5h.1M1109.3 247.6h.1M1108.4 215.1h.1M1107.3 225h.1M1111.7 259h.1M1109.5 238.1h.1M1113.4 267.8h.1M1108.4 260.2h.1M1107.2 303.5h.1M1110.4 276.9h.1M1107.1 286.8h.1M1105.3 231.1h.1M1109.4 220.4h.1M1102.9 315.6h.1M1104.5 270.9h.1M1108.3 237.9h.1M1105.1 184.6h.1M1105.9 315h.1M1110.4 234.3h.1M1104.1 271.9h.1M1107 271.8h.1M1106.4 274.3h.1M1105.6 289h.1M1107.8 225.2h.1M1105.6 254.8h.1M1107.4 196.8h.1M1106.2 259.5h.1M1104.8 237.7h.1M1102.9 258.4h.1M1110.5 243.4h.1M1116.6 323.2h.1M1100.7 289.1h.1M1103.9 271.9h.1M1111.5 296.4h.1M1107.7 231.8h.1M1110.5 252.7h.1M1107.1 267.2h.1M1110.7 269.5h.1M1110.8 243.9h.1M1113.4 254.4h.1M1105.7 296h.1M1105.6 274.5h.1M1113 338.8h.1M1109.2 253.1h.1M1106.7 205.7h.1M1105.9 244.3h.1M1110.1 210h.1M1114 227.2h.1M1108.4 291.9h.1M1112.5 204.4h.1M1104 298.9h.1M1111.3 260h.1M1107.8 241.4h.1M1112.5 260.9h.1M1105.5 259.8h.1M1105.1 301.9h.1M1110.4 288.4h.1M1112.2 247.4h.1M1106.4 225.6h.1M1109.9 259.6h.1M1113.9 326.3h.1M1112.4 253.3h.1M1111.3 257.1h.1M1106.6 282h.1M1106.8 292.3h.1M1109.9 254.6h.1M1108.4 198.8h.1M1109.8 252.7h.1M1109 252.3h.1M1110 315.8h.1M1110.4 271.9h.1M1105.2 229.9h.1M1109.3 315.2h.1M1106.5 296.1h.1M1105 310.8h.1M1110.2 320.4h.1M1112.1 293.8h.1M1110 301h.1M1108 276.2h.1M1105.8 293.4h.1M1101.6 300.9h.1M1105.6 289.1h.1M1108.3 234.5h.1M1106.9 247.2h.1M1111.8 309.1h.1M1110 273.6h.1M1107.3 293.7h.1M1107.1 264.6h.1M1113.4 295.1h.1M1103.3 309h.1M1111.5 270.8h.1M1101.7 309h.1M1112.7 243.1h.1M1110.2 260.3h.1M1112.6 232.2h.1M1108.7 260.2h.1M1108.7 274.6h.1M1111.4 236.2h.1M1113.4 318.8h.1M1107.3 320.3h.1M1111.8 348h.1M1104.3 210h.1M1108.1 254.7h.1M1105.2 271.3h.1M1107.1 291.5h.1M1110.9 229.5h.1M1105.8 274.2h.1M1115.6 325.1h.1M1102.9 267.9h.1M1113.9 282.9h.1M1114.2 292.9h.1M1106.8 307h.1M1109.7 274h.1M1109.8 210.8h.1M1112 257.6h.1M1107 283.4h.1M1110.1 241.8h.1M1109.6 251h.1M1105.7 310.5h.1M1106.2 285.4h.1M1109 243.9h.1M1105.2 314.2h.1M1109 260.1h.1M1111.5 285.1h.1M1111.7 249h.1M1111.4 243.7h.1M1111.1 274h.1M1116.5 262.1h.1M1111.5 267h.1M1109.6 242.3h.1M1110.4 205.2h.1M1108.5 347.6h.1M1109.9 191.3h.1M1113.4 279.7h.1M1109.7 223h.1M1112.7 247.2h.1M1100.9 251.7h.1M1110.8 256.5h.1M1108 258.8h.1M1109.9 205.5h.1M1112.3 218.8h.1M1107.8 250.1h.1M1112.9 280.2h.1M1108.2 226h.1M1108 215.7h.1M1102.6 287.2h.1M1106.1 237h.1M1111.2 200h.1M1116.4 303.8h.1M1108.8 234.5h.1M1109.8 262h.1M1111.9 255h.1M1112.5 251.8h.1M1107.4 269.3h.1M1110.1 288h.1M1114 307.2h.1M1104.9 218.5h.1M1107.7 245h.1M1105 310h.1M1106.4 308h.1M1108.9 267.5h.1M1109.8 264h.1M1108.8 308.4h.1M1106.4 236.7h.1M1114.4 280.7h.1M1105.8 283h.1M1105.2 293h.1M1102.6 247.2h.1M1109.4 254.1h.1M1108.8 253.6h.1M1103.5 247.9h.1M1106.8 260.7h.1M1117 285.9h.1M1116.5 328.5h.1M1111.3 229.9h.1M1109.6 303.3h.1M1107.1 260.1h.1M1109.9 249.7h.1M1105.5 269h.1M1109.7 296.3h.1M1110.3 239.3h.1M1109.2 276.4h.1M1110.9 329.9h.1M1111.2 241.8h.1M1109.4 223.8h.1M1110.3 234.9h.1M1111.1 264.4h.1M1101.7 304.8h.1M1116.8 285.9h.1M1112.8 281.2h.1M1107.7 262.9h.1M1101.2 310.4h.1M1104.8 321h.1M1110.7 210.8h.1M1108 236.9h.1M1109.8 197.4h.1M1111.9 272.4h.1M1101 248h.1M1103.6 260.3h.1M1111.1 274.2h.1M1106.4 234.2h.1M1110.9 278.8h.1M1107.9 260.8h.1M1107.6 263.1h.1M1107.7 266.6h.1M1108.7 304.2h.1M1109.6 272h.1M1106.9 296.6h.1M1105.1 217.1h.1M1105.9 243.8h.1M1111.3 300.7h.1M1108.1 275.5h.1M1108.4 288.1h.1M1108.3 281.3h.1M1106.6 284.8h.1M1117.6 292.1h.1M1109.8 325.2h.1M1107.8 235.1h.1M1112.3 219.1h.1M1111.4 250.6h.1M1116.3 256.2h.1M1106.6 191.6h.1M1108.8 276.4h.1M1106.4 221h.1M1104.3 238.3h.1M1110.9 253.9h.1M1112.7 258h.1M1103.9 250.7h.1M1108.9 248.6h.1M1105.2 252.5h.1M1111.3 202.5h.1M1110.7 329.4h.1M1108.7 271.5h.1M1108.2 312.3h.1M1108.6 265.6h.1M1107.9 274.7h.1M1111.6 258.9h.1M1109.4 322.6h.1M1112.7 218.6h.1M1108.1 323.9h.1M1104.9 289.1h.1M1106.4 306.8h.1M1106.9 210.3h.1M1106.6 203.2h.1M1112.7 255.4h.1M1109.5 247.7h.1M1104.5 277.6h.1M1105.6 230.1h.1M1109.8 274.5h.1M1108.6 250.2h.1M1109.1 234.9h.1M1108.1 252.1h.1M1110 300.1h.1M1105.9 357.6h.1M1112.5 276.4h.1M1108.9 321.6h.1M1110.2 219.2h.1M1108.9 272.4h.1M1108.1 221.1h.1M1104 263.6h.1M1107.8 236.7h.1M1110.9 231.7h.1M1112.2 191.8h.1M1112.8 262.3h.1M1108.2 297.7h.1M1105.4 189.6h.1M1111.3 220.8h.1M1107.6 266h.1M1107.5 195.7h.1M1110.6 190.7h.1M1106.2 255.4h.1M1109.8 345.4h.1M1103.9 236.5h.1M1105.4 250h.1M1113.8 255.6h.1M1111.3 251.3h.1M1109 209.1h.1M1109.1 254.5h.1M1106.2 312h.1M1110.6 268.5h.1M1112 247h.1M1110 290.2h.1M1108.2 262.8h.1M1109.7 311h.1M1110.9 229.4h.1M1110.5 318.7h.1M1114 217.9h.1M1112.1 269.8h.1M1109.9 206.5h.1M1108.3 317.2h.1M1106.4 279.7h.1M1110.2 248h.1M1109.3 271.2h.1M1108.7 239.9h.1M1109.5 297h.1M1100 262.4h.1M1111.1 257.6h.1M1111.2 240.1h.1M1107.3 356h.1M1103.5 277.9h.1M1108 261.5h.1M1112 250.2h.1M1103.7 231.8h.1M1111.2 307.8h.1M1106.1 267.7h.1M1108.8 267.7h.1M1111.8 300.5h.1M1104.1 286.5h.1M1109.6 263.1h.1M1106.8 286h.1M1109 319.3h.1M1114.3 314.4h.1M1104 269.8h.1M1106 296.7h.1M1112 201.1h.1M1103.8 223.4h.1M1105.9 283.8h.1M1108.3 221.6h.1M1111.3 282.5h.1M1111.7 243.7h.1M1107.2 258.4h.1M1107.1 274.7h.1M1111.2 224.5h.1M1103.7 260.5h.1M1099 314.9h.1M1106.6 219.9h.1M1109.5 291.1h.1M1110 234.1h.1M1111.5 282.5h.1M1099.8 262.2h.1M1108.8 266.6h.1M1108.4 355.8h.1M1108.7 312.6h.1M1109.1 274.2h.1M1110.6 227h.1M1106.5 298.2h.1M1104.4 272.4h.1M1107.1 223.4h.1M1110.8 234.7h.1M1108.1 296.5h.1M1111.6 222.3h.1M1106.3 274.4h.1M1103.7 265.2h.1M1102.8 258.4h.1M1115.4 268.2h.1M1102.4 256.1h.1M1106.7 303.2h.1M1113.6 218.6h.1M1113.8 272.1h.1M1108.1 286.4h.1M1113.6 248.4h.1M1102.9 202.2h.1M1108.6 310.5h.1M1112.4 305h.1M1112.1 212.8h.1M1110.4 189.7h.1M1099.6 320.1h.1M1107.2 235.7h.1M1108.5 279.2h.1M1110.7 281.5h.1M1103.2 256.8h.1M1111.4 193.6h.1M1111 233.9h.1M1108.8 266.3h.1M1109.4 274.5h.1M1109.2 223.4h.1M1110.3 300.3h.1M1111.5 250.9h.1M1106.1 235.4h.1M1106.5 224.2h.1M1105.3 249h.1M1106.1 206.3h.1M1106.4 249h.1M1106.9 223.3h.1M1107.9 302.4h.1M1111.1 240.3h.1M1116.8 227.2h.1M1108.6 229.2h.1M1109.9 289h.1M1105.5 259.3h.1M1109.6 286.2h.1M1104.6 233h.1M1107.6 282h.1M1110 194.4h.1M1105.4 354.6h.1M1107.9 217.1h.1M1105.2 244.4h.1M1109.6 255.4h.1M1115 298h.1M1113.6 242.4h.1M1114.4 260.5h.1M1108.6 275.5h.1M1108.2 191.2h.1M1105.7 221h.1M1109.1 277.1h.1M1109.3 230.5h.1M1114.4 215.9h.1M1112.7 301h.1M1105.4 241.2h.1M1108.6 202.4h.1M1107.3 279.1h.1M1109.7 229.2h.1M1111.8 204.9h.1M1110.3 297.6h.1M1109.4 246.4h.1M1103.3 300.4h.1M1103 237.5h.1M1110 206.6h.1M1110.4 230.1h.1M1106.2 254.5h.1M1108.4 233.7h.1M1110.4 325.9h.1M1107.5 274.9h.1M1106 234.4h.1M1109.8 247.3h.1M1112.4 324.7h.1M1101.3 276.8h.1M1109.7 289.1h.1M1114.7 224.9h.1M1107.6 264.6h.1M1110.5 309.2h.1M1108.5 309.5h.1M1110.5 218.5h.1M1111.7 263h.1M1108.9 275.5h.1M1105.3 256.1h.1M1107.3 242.4h.1M1108.3 259.4h.1M1109.7 265.9h.1M1111.8 274.8h.1M1106.8 258.4h.1M1111.7 227h.1M1103.9 252.5h.1M1110 249.6h.1M1106.4 257.8h.1M1112.8 246.3h.1M1111.9 279.3h.1M1114.5 250.2h.1M1105.3 208.3h.1M1109.4 316.1h.1M1101.4 280.4h.1M1110 295.3h.1M1107.6 277h.1M1107.5 323.4h.1M1109.6 312.2h.1M1106.6 301h.1M1116.6 265.3h.1M1104.6 250.1h.1M1105.9 303.1h.1M1107.5 208.3h.1M1105.9 238.9h.1M1103.3 291.5h.1M1108 259.8h.1M1108.6 249.6h.1M1107.8 276.1h.1M1111.2 269.9h.1M1106.2 262.7h.1M1109.7 349.5h.1M1110.2 268.1h.1M1110.2 243.4h.1M1107.4 236.9h.1M1108.7 247.5h.1M1100.6 311.6h.1M1103 353.6h.1M1111 275h.1M1106 265h.1M1107.9 283.5h.1M1106.2 292.5h.1M1107.1 267.8h.1M1107 239.2h.1M1107.3 237.1h.1M1109.2 256.1h.1M1109.8 235.1h.1M1107.9 261.7h.1M1110.1 309.1h.1M1105.1 310h.1M1105.7 267.2h.1M1104 286.7h.1M1110.7 303h.1M1107 225.4h.1M1105.9 241.4h.1M1106.2 246.5h.1M1109.1 198.9h.1M1108 303.7h.1M1111.5 237.6h.1M1105.6 250.1h.1M1110.1 225.2h.1M1105.7 323.5h.1M1108 209h.1M1112.1 266.6h.1M1110.3 250.3h.1M1107.9 306.4h.1M1110.7 217.1h.1M1106.1 256.7h.1M1108.3 204.3h.1M1105.9 228.3h.1M1105.7 252.7h.1M1110.3 262.9h.1M1109.9 308.1h.1M1111.1 247.2h.1M1106.8 328.7h.1M1114.1 232.3h.1M1104 335h.1M1111.8 286.5h.1M1108.8 304.7h.1M1107.2 315h.1M1104.2 301h.1M1103.9 309.8h.1M1112.3 224.3h.1M1104.4 254.3h.1M1106.4 274.7h.1M1110.4 187.7h.1M1107.5 206.2h.1M1106.8 239.3h.1M1107.7 263.3h.1M1103.1 302.3h.1M1107.1 206.6h.1M1105.7 326.8h.1M1102.8 206.1h.1M1109.1 278.4h.1M1112.1 247.7h.1M1107.4 276.4h.1M1105.2 326.4h.1M1110.7 228.2h.1M1105.1 300.9h.1M1103.2 271.7h.1M1111.8 246.6h.1M1105.6 282.5h.1M1101.8 227.2h.1M1101.6 316.1h.1M1106 242.4h.1M1110.7 246.4h.1M1105.8 318.3h.1M1109 323h.1M1110.8 245.9h.1M1110.3 258.3h.1M1107.8 199.8h.1M1112.5 253.8h.1M1109.1 236.3h.1M1112.2 297.9h.1M1107.3 244.8h.1M1105.1 236.1h.1M1112 305.2h.1M1112.9 274h.1M1109.7 219h.1M1110.8 243h.1M1108.5 329.3h.1M1107.5 274.3h.1M1107 275.1h.1M1108.9 266.6h.1M1110 224.6h.1M1111.3 264.7h.1M1105.7 265.2h.1M1109 291.7h.1M1106.8 284.1h.1M1110.6 271.9h.1M1104.5 279.8h.1M1107.7 226.6h.1M1113.1 198.8h.1M1112.1 284h.1M1109.1 220.6h.1M1109 309.4h.1M1109.5 278.5h.1M1107.8 265.4h.1M1107.2 247.5h.1M1114.2 268.8h.1M1106.3 279.6h.1M1104.3 298.3h.1M1105.1 216.6h.1M1111.3 302.1h.1M1114.5 243.7h.1M1102.4 234.1h.1M1105.9 246h.1M1111.4 287.6h.1M1107.9 271.9h.1M1108 294.7h.1M1105.1 297.5h.1M1107 214.7h.1M1108 332.8h.1M1107.9 225.2h.1M1107.2 199.3h.1M1108.7 188.5h.1M1107.6 245.8h.1M1108.9 267.4h.1M1113.2 233.9h.1M1104.5 285.4h.1M1108.4 256.8h.1M1106.6 248.4h.1M1105.4 299.7h.1M1112.9 278h.1M1109.5 237h.1M1100.8 284.2h.1M1107.3 267.7h.1M1107.7 283.7h.1M1115.5 325h.1M1106.5 230.6h.1M1110.8 226.4h.1M1109.9 209.2h.1M1107.6 248.1h.1M1107.4 290.7h.1M1114.5 275.9h.1M1109 357.3h.1M1109.8 233.1h.1M1107.7 257.3h.1M1106.7 252.6h.1M1108.4 238.9h.1M1111 260h.1M1113.8 324.6h.1M1108.4 230.8h.1M1111.7 260.4h.1M1112.6 262.1h.1M1109.5 294.3h.1M1110.7 284.1h.1M1107 308h.1M1114.6 361.4h.1M1110.5 234.4h.1M1106.6 231h.1M1106.6 268.9h.1M1107.5 271.9h.1M1107.2 283.7h.1M1107 300.7h.1M1106.3 235.8h.1M1108.1 258.8h.1M1113.5 277.8h.1M1107.1 286.5h.1M1110.7 189.3h.1M1109 279.5h.1M1107.9 250.5h.1M1104 229.5h.1M1109.3 221.9h.1M1102 317h.1M1113.7 240.5h.1M1110 195.6h.1M1105.7 226.2h.1M1105.5 269.5h.1M1105.6 279.8h.1M1110.4 246.5h.1M1115.1 301.5h.1M1110.1 305.7h.1M1106.9 271.1h.1M1104.3 320.4h.1M1106.1 256.3h.1M1104 249h.1M1107.8 246.7h.1M1106.1 214h.1M1113.8 230.5h.1M1105 210.9h.1M1112.7 296h.1M1105.5 305.6h.1M1111.2 354.1h.1M1106.1 207.2h.1M1111 215.8h.1M1110.5 274.3h.1M1118 303.5h.1M1102.5 267.5h.1M1110.9 215.3h.1M1110.6 266.6h.1M1105.8 257.1h.1M1109.5 254h.1M1112.8 344.2h.1M1109.4 280.1h.1M1114.2 215.7h.1M1108.5 242.2h.1M1108 258.9h.1M1105.1 213.6h.1M1102.4 209.9h.1M1113.3 234.3h.1M1107.5 226.6h.1M1113.6 255.7h.1M1109 228.6h.1M1106.9 259h.1M1103.2 289h.1M1102.3 350.3h.1M1113.1 294.8h.1M1110 329.4h.1M1105.9 276.4h.1M1107.4 269.5h.1M1107.3 277.8h.1M1105.9 274.3h.1M1112.7 269.5h.1M1106.9 270.8h.1M1109.8 304.1h.1M1107.1 256.4h.1M1110.6 211.8h.1M1108.7 270.5h.1M1103.8 240.8h.1M1110.3 324.3h.1M1110.9 268.2h.1M1101.7 302.5h.1M1104.9 264.8h.1M1107.8 295.1h.1M1111.1 224.2h.1M1110.5 260.7h.1M1108.9 280h.1M1110.9 265.7h.1M1114.5 269.7h.1M1104.7 288.2h.1M1111.1 304h.1M1107.5 264.1h.1M1108 208.8h.1M1110.1 281.5h.1M1107.9 234.6h.1M1112.1 261.8h.1M1109.2 259.6h.1M1110.7 221h.1M1110.7 355h.1M1110.5 280.7h.1M1109.1 269.5h.1M1111.7 272.6h.1M1108.2 229.2h.1M1107.5 225.4h.1M1103.1 240h.1M1106.6 234.1h.1M1116.4 306.4h.1M1109 205.5h.1M1109.4 287h.1M1109.4 276.5h.1M1109.8 249.6h.1M1117.5 319.9h.1M1116.1 261.7h.1M1112.9 270.2h.1M1110.1 228.4h.1M1106.4 287.1h.1M1107.9 330.7h.1M1112.6 242.7h.1M1108 272.1h.1M1106.4 239h.1M1106.4 291.8h.1M1109.4 254.1h.1M1105.5 206h.1M1107.9 286.8h.1M1106.5 232.1h.1M1111.5 214.6h.1M1108 269.2h.1M1108.4 275.7h.1M1107.9 281.7h.1M1108.3 293.6h.1M1110 194.5h.1M1109.7 248.8h.1M1111.7 251.1h.1M1110 235.1h.1M1112.4 272.1h.1M1112.6 281h.1M1105.8 223.7h.1M1106.1 276.2h.1M1109.8 275h.1M1109.1 294.8h.1M1107.6 276.1h.1M1105.2 193.3h.1M1108 244.8h.1M1108.8 217.8h.1M1102.5 264.3h.1M1106.8 269.4h.1M1114.7 212.9h.1M1110 230.1h.1M1109.3 235.4h.1M1111.4 266h.1M1102.4 305.3h.1M1107.9 256.5h.1M1105.9 223h.1M1104.1 258.3h.1M1106.4 262.3h.1M1110.8 304.4h.1M1106.4 227.6h.1M1113.7 278.7h.1M1109.5 276h.1M1109.9 288.3h.1M1107.3 223.3h.1M1102.9 224.9h.1M1109 245.2h.1M1112.5 245.3h.1M1107.9 256.4h.1M1106.9 259.9h.1M1115.4 319.2h.1M1106.3 239.1h.1M1102.9 240.2h.1M1113.1 231.4h.1M1110.2 194.5h.1M1105.5 250.3h.1M1105.9 314.4h.1M1109.8 214.2h.1M1106.4 247.6h.1M1108.9 274.4h.1M1115.6 237.3h.1M1110.5 212h.1M1112.3 278.8h.1M1106.8 298.8h.1M1104.4 298.5h.1M1105.7 319.8h.1M1108.1 246.6h.1M1104.6 344.5h.1M1111 238.3h.1M1109.1 273.5h.1M1105.7 266h.1M1107.5 216.8h.1M1111.8 292.6h.1M1108.2 212.3h.1M1110.9 287.1h.1M1109.6 296.6h.1M1101.2 345h.1M1112.7 238.7h.1M1107.3 279.7h.1M1110.5 281.6h.1M1103.8 218.7h.1M1107.1 285.9h.1M1110.7 221.6h.1M1111.9 266.7h.1M1106.8 249h.1M1111.9 309.3h.1M1106.8 298.7h.1M1111.2 283.7h.1M1111.4 219.1h.1M1110 265.8h.1M1111.3 264.2h.1M1113.4 337.9h.1M1104.3 278.9h.1M1112.7 271.7h.1M1110.8 288.9h.1M1111.7 208h.1M1114 329h.1M1107.4 292.2h.1M1104.7 262.4h.1M1109.4 245.1h.1M1112.3 265.2h.1M1108.6 271.3h.1M1105 265.9h.1M1109.2 191.9h.1M1111.6 209.2h.1M1108.3 212.8h.1M1110.9 264.2h.1M1109 278.2h.1M1102.9 283.2h.1M1101.8 329.6h.1M1102.9 302.2h.1M1109 221h.1M1108 205.4h.1M1106.9 256.7h.1M1109.7 241.3h.1M1110.5 229.4h.1M1107.3 332.8h.1M1113.4 284.4h.1M1111.8 228.2h.1M1108.7 262.8h.1M1106.1 240.4h.1M1111.4 221.6h.1M1105.9 224.3h.1M1107.2 337.6h.1M1110.4 267.7h.1M1112 253h.1M1109.1 277.6h.1M1108.7 236.2h.1M1112.7 309.7h.1M1112.5 306.7h.1M1106.1 318.6h.1M1108.1 307.9h.1M1109.2 208.7h.1M1107.1 242.3h.1M1110.2 272.1h.1M1108.3 251h.1M1107.1 253.2h.1M1110.1 248.8h.1M1107.1 240.2h.1M1108.8 275.8h.1M1106.4 320.8h.1M1110.6 270.2h.1M1108 208.5h.1M1110.2 305.8h.1M1112.4 318h.1M1107.8 234.5h.1M1107.5 282.2h.1M1105.6 260.4h.1M1104.1 319.9h.1M1116 256.3h.1M1107.4 199.8h.1M1109.9 252h.1M1108.1 223.1h.1M1106.2 271.9h.1M1105 233.4h.1M1109.7 262.1h.1M1110.6 209.6h.1M1107.8 297.5h.1M1102.3 242.5h.1M1107.6 236h.1M1108.5 228.6h.1M1104.5 287.6h.1M1113.8 303.6h.1M1115.8 321.4h.1M1106.9 271.8h.1M1112.8 215.8h.1M1109.9 278.2h.1M1110.2 219.5h.1M1105.2 254.6h.1M1107.9 188.9h.1M1103.3 293.4h.1M1103.6 290.3h.1M1115 228.6h.1M1108.7 268.2h.1M1107.4 291.2h.1M1111.2 267.5h.1M1105.8 227.8h.1M1107.8 257.5h.1M1113.4 320.6h.1M1111.6 261.9h.1M1108.1 254.3h.1M1109.7 233.7h.1M1109.3 227.8h.1M1107.3 305.7h.1M1102 265.9h.1M1107.4 244.6h.1M1105.2 282.3h.1M1104.9 217h.1M1100.3 242.7h.1M1110.3 269.6h.1M1110.4 318.2h.1M1107.6 232.1h.1M1107.3 259.4h.1M1108.5 276.2h.1M1106.8 225.6h.1M1106.2 288.3h.1M1108.2 227.6h.1M1105.5 256.5h.1M1106.7 236.1h.1M1114.3 346.2h.1M1107.3 196.5h.1M1104.9 284h.1M1105.9 260.9h.1M1111.9 313.8h.1M1104.2 316.5h.1M1107.7 185.7h.1M1113.7 240h.1M1109.3 273.5h.1M1103.9 255h.1M1109.5 231h.1M1111 305.2h.1M1107 280.2h.1M1113 261h.1M1114.1 270.3h.1M1109.6 272.1h.1M1106.8 235.1h.1M1108.8 325.9h.1M1105.2 289.2h.1M1107 306.6h.1M1110.6 267.4h.1M1106.6 291.1h.1M1106.1 236.6h.1M1107.8 240.2h.1M1108.6 267.7h.1M1105.6 228.6h.1M1108.4 305.4h.1M1105.8 311h.1M1107.8 224.3h.1M1106.8 262.8h.1M1112.3 258.9h.1M1104.2 282.7h.1M1109.4 275.3h.1M1109.4 222.4h.1M1115.1 247.8h.1M1113.9 329.4h.1M1110.4 286.6h.1M1110.7 261.7h.1M1108.2 218.3h.1M1103 351.5h.1M1103.4 251h.1M1116 280.4h.1M1104.8 292.7h.1M1117.6 263.7h.1M1111 279.2h.1M1107.4 270.2h.1M1108.9 199.8h.1M1109.5 291.2h.1M1105.9 204.9h.1M1107.5 264.8h.1M1108.5 328.6h.1M1108.3 229.9h.1M1108.4 292.9h.1M1108 245.4h.1M1107.5 249.6h.1M1108.8 241.5h.1M1105.5 245.8h.1M1112 301.1h.1M1111.7 277.4h.1M1110.7 234.7h.1M1102.9 268.5h.1M1105.1 259.9h.1M1108.8 240.8h.1M1104.2 248.5h.1M1106.5 280.6h.1M1109.2 287.9h.1M1099.6 286.3h.1M1113.1 294.6h.1M1113.2 270.6h.1M1103.7 286.9h.1M1105.9 298.6h.1M1106 340.6h.1M1108.1 275.9h.1M1108.1 259.2h.1M1106.5 235.4h.1M1108.1 230.4h.1M1108.4 287h.1M1107.3 209.5h.1M1109.7 257.5h.1M1104.1 220h.1M1120.4 302.3h.1M1110.5 272.5h.1M1111.1 282.6h.1M1103.6 273.4h.1M1105 282.5h.1M1108.6 252.9h.1M1111 308.7h.1M1112.2 207.6h.1M1109.2 253.9h.1M1109.8 235.8h.1M1110.4 300.1h.1M1105.2 348h.1M1101.7 254.4h.1M1111.1 206.6h.1M1112.7 264.5h.1M1106.3 277.3h.1M1105.7 311.9h.1M1109 289.4h.1M1103.9 285.3h.1M1164.6 227.9h.1M1232.5 232.3h.1M1148.4 298h.1M1226.8 291h.1M1131.7 323.4h.1" stroke="#c24f3c" stroke-width="2.6" stroke-linecap="round" fill="none" opacity="1.0"/><path d="M1113.2 440.2h.1M1102.4 439.3h.1M1115.7 438h.1M1106.4 437.5h.1M1110.4 439h.1M1107.4 445.8h.1M1106.1 440.2h.1M1124.4 439h.1M1112.3 440.6h.1M1113.6 441.3h.1M1119.1 442.3h.1M1115.3 434.1h.1M1105.6 442.7h.1M1107 442.5h.1M1102.8 442.1h.1M1106.7 442.2h.1M1109.9 442.2h.1M1117.5 435.1h.1M1112.5 438.3h.1M1115.4 440.8h.1M1106.4 436.9h.1M1112.1 440.1h.1M1109 442.5h.1M1112.6 438.3h.1M1115.8 441.8h.1M1107.2 441.2h.1M1112.3 439.9h.1M1121.3 441.7h.1M1109.4 434.3h.1M1118.5 440h.1M1110.2 439.5h.1M1112.4 435.8h.1M1114.9 439.4h.1M1110.1 439.5h.1M1111.4 440.6h.1M1113.5 440.1h.1M1111.7 439.8h.1M1113.3 436.1h.1M1111.6 446.2h.1M1116.8 438.2h.1M1107.8 437.6h.1M1107.3 440.8h.1M1116.9 438.1h.1M1118.1 436.4h.1M1110.7 437.9h.1M1113.4 437.4h.1M1115.6 439.4h.1M1115.5 439.5h.1M1106.9 441.7h.1M1111.6 434.3h.1M1112.5 434.7h.1M1105.8 442.4h.1M1121.7 442h.1M1115.9 440.1h.1M1120.2 441.8h.1M1115.6 437.1h.1M1114.9 436.1h.1M1111 443.9h.1M1107.4 442.1h.1M1111.9 440h.1M1119 442h.1M1113.9 436.5h.1M1108.4 437.9h.1M1108.9 437.3h.1M1111.9 437.6h.1M1104.9 443.2h.1M1104.4 443.5h.1M1108.2 443h.1M1111.8 441.5h.1M1118.2 438.1h.1M1108.3 439.2h.1M1118.1 438.2h.1M1113.3 434.4h.1M1115.1 442h.1M1103.5 443.7h.1M1107.5 443.4h.1M1108.9 437.3h.1M1117.7 442.4h.1M1109.1 440.1h.1M1109.7 440.4h.1M1114.5 438.1h.1M1115.6 438.7h.1M1114 438.3h.1M1111.6 437.8h.1M1105.8 441.6h.1M1115.8 443.3h.1M1106.2 437.9h.1M1098.9 441.6h.1M1110.4 439.2h.1M1117.7 440.4h.1M1108.5 438.7h.1M1113.6 439.5h.1M1115.6 442.9h.1M1118.3 441.1h.1M1113.5 439.2h.1M1111 443.7h.1M1115.6 440.3h.1M1111.9 446.5h.1M1116.1 439.9h.1M1113.4 437.9h.1M1116 441.1h.1M1107.9 437.6h.1M1115.4 441.2h.1M1115.5 440.3h.1M1109.9 434.9h.1M1105.4 437.3h.1M1103 440.7h.1M1103.2 442h.1M1114.6 438.7h.1M1112.1 441.6h.1M1112.4 437.4h.1M1116.2 439.6h.1M1110.5 438.3h.1M1107 440h.1M1115.2 433.6h.1M1102.7 438h.1M1116.7 435.9h.1M1105.4 441.3h.1M1105.9 438.7h.1M1109.4 437.2h.1M1108 441.8h.1M1112.1 441.3h.1M1110.7 440.1h.1M1117.6 439.2h.1M1113.5 438.9h.1M1111.6 439.2h.1M1103.8 441.3h.1M1118.6 436.2h.1M1110.5 440.1h.1M1120.5 434.9h.1M1119.8 439h.1M1123.1 440.2h.1M1111.4 441.2h.1M1119.1 438.1h.1M1115.4 441.5h.1M1103.6 439.6h.1M1117.7 440h.1M1113.1 444.2h.1M1113 437.1h.1M1109.7 440.4h.1M1112.7 442.8h.1M1105.3 441.8h.1M1107 438.2h.1M1117.7 435.8h.1M1119.2 438.7h.1M1106.5 441.2h.1M1107.2 438.5h.1M1114.8 443.2h.1M1112.9 444.4h.1M1123.4 441.2h.1M1110.6 438.5h.1M1103.2 443.4h.1M1105.5 437.5h.1M1119.4 434.8h.1M1111.8 436.9h.1M1112.6 443.2h.1M1106.7 439.1h.1M1108.4 435.7h.1M1114.9 442.3h.1M1110.8 440.8h.1M1115.2 443.4h.1M1107 441.5h.1M1113.5 441.1h.1M1119.7 443h.1M1117.4 441.6h.1M1110.6 437.8h.1M1109.9 440h.1M1106.6 439.5h.1M1113.2 434.4h.1M1117.8 441.5h.1M1115.4 435.1h.1M1116.6 443.8h.1M1123.1 438.4h.1M1123 440.4h.1M1118 436.5h.1M1112.3 442.2h.1M1107.2 443.6h.1M1115.6 440.2h.1M1109.6 438.9h.1M1108.5 440.7h.1M1108.9 445h.1M1113.8 440h.1M1108.5 436.6h.1M1115.3 442.9h.1M1117.3 443.7h.1M1121.8 441.1h.1M1102.9 444.5h.1M1112.3 440h.1M1108.1 440.8h.1M1112.8 437.6h.1M1106.6 437.4h.1M1105.5 439.6h.1M1113.4 443h.1M1109.4 440.6h.1M1119.9 438.4h.1M1112.5 438.9h.1M1102 443.4h.1M1117.4 439.1h.1M1110.7 446.2h.1M1118.9 440.8h.1M1113.8 439.6h.1M1118.1 438.4h.1M1121.6 439.7h.1M1112.1 439.6h.1M1101.7 444.4h.1M1105.7 444.9h.1M1111.5 436.7h.1M1111.1 435.6h.1M1115.6 437.8h.1M1117.2 437.8h.1M1117.1 441.8h.1M1109.5 442.5h.1M1109.1 435.7h.1M1105.3 438.3h.1M1100.8 444.9h.1M1103.5 441.7h.1M1110.7 440h.1M1109.5 435.4h.1M1105.9 439h.1M1113.2 443.4h.1M1107.9 442.7h.1M1108 436.3h.1M1110.9 441.4h.1M1107.1 438.1h.1M1107.6 441.6h.1M1114.3 438.3h.1M1120.3 435.1h.1M1108.3 439.5h.1M1114.1 436.2h.1M1106.5 434.6h.1M1103.4 442.9h.1M1110.2 437h.1M1102.6 441.7h.1M1117.3 442.3h.1M1119.8 439.4h.1M1111.6 440.5h.1M1107.2 437.7h.1M1114.6 435.3h.1M1115.2 438h.1M1113.9 439.5h.1M1111.6 440.8h.1M1108.1 435.9h.1M1115.6 437.7h.1M1115 439.5h.1M1109.5 440.8h.1M1118.3 438.8h.1M1112.4 444.8h.1M1112.8 438.8h.1M1102.3 445.9h.1M1111.9 445.8h.1M1106.9 438.2h.1M1110.4 441.2h.1M1110.7 443.8h.1M1112 433.4h.1M1106.9 441.9h.1M1106.9 437.7h.1M1114.1 437.9h.1M1105.9 439.8h.1M1111.7 444h.1M1118.4 440.1h.1M1107.7 441h.1M1099.5 439.4h.1M1106.4 441.1h.1M1103.8 441.5h.1M1105.7 440.4h.1M1116.3 442.4h.1M1102 440.4h.1M1106.9 443.4h.1M1110.4 441.6h.1M1111.4 439.3h.1M1112.4 440.8h.1M1107.9 441.7h.1M1108 438.3h.1M1103.8 442.6h.1M1116.2 439.6h.1M1109.4 439.3h.1M1121.2 439.3h.1M1111.5 441.4h.1M1101 442.3h.1M1115.9 439.5h.1M1109.7 444.2h.1M1111.9 443.1h.1M1112.9 442.8h.1M1104.9 440.8h.1M1114.6 441.5h.1M1118.4 443.4h.1M1104.6 439h.1M1104.7 440.8h.1M1114.7 439.6h.1M1106.8 439.4h.1M1110.5 440.9h.1M1115.5 439.2h.1M1108.6 440.6h.1M1105.2 441h.1M1111.5 442.5h.1M1110.8 440.3h.1M1109.8 434.1h.1M1109.4 444.2h.1M1106.9 443.2h.1M1110.7 442.5h.1M1111.6 442.7h.1M1111.3 437.9h.1M1110.2 439.1h.1M1110.7 437.4h.1M1115.2 445.9h.1M1108.7 439.5h.1M1104.8 444.9h.1M1105.1 440.5h.1M1105.5 442.2h.1M1112.1 438.3h.1M1114.2 440.5h.1M1115.6 441.6h.1M1116.6 438.6h.1M1113.4 437.9h.1M1118 440.3h.1M1114.8 434.4h.1M1115.4 439.4h.1M1112.8 438.8h.1M1119.1 437h.1M1124.5 437.2h.1M1112.7 440.9h.1M1114.4 439.2h.1M1107.8 436.3h.1M1110.8 441.5h.1M1107.9 441h.1M1109.9 439.9h.1M1107.8 435h.1M1117.2 437.8h.1M1108.6 437.2h.1M1106.5 446.8h.1M1114.6 436.2h.1M1107.2 438.9h.1M1113.9 441.1h.1M1121.6 438.4h.1M1105.8 440.9h.1M1117 438.6h.1M1118.2 440.2h.1M1103.7 436.7h.1M1120.6 437.9h.1M1114.9 439.8h.1M1112.4 438.3h.1M1117.6 439h.1M1114.6 443.8h.1M1115.6 438.9h.1M1114.7 444h.1M1110.8 434.5h.1M1106.6 444.9h.1M1109.1 441.3h.1M1114 433.8h.1M1117.3 439.7h.1M1106.8 443.2h.1M1114.1 441.4h.1M1114.6 441.8h.1M1112.3 434.5h.1M1119.3 437.2h.1M1112.9 437.7h.1M1109.2 440.1h.1M1114.7 434.6h.1M1120.2 438h.1M1109.1 437.9h.1M1106.6 442.6h.1M1115.5 441.1h.1M1106 446.5h.1M1102.9 436.2h.1M1106.2 444.2h.1M1109.9 437.4h.1M1114.9 437.8h.1M1120.1 438.2h.1M1122.3 437.9h.1M1119.4 438.6h.1M1111.8 437.9h.1M1120.9 438.4h.1M1117.4 442.4h.1M1105.5 436.9h.1M1121 439h.1M1108.5 440.2h.1M1107.7 440.6h.1M1107 444.7h.1M1106.9 444h.1M1112.5 438.8h.1M1114.8 436.8h.1M1107.6 443.8h.1M1111 443.9h.1M1118.8 437.1h.1M1105.9 444h.1M1113.4 433.9h.1M1105.5 439.7h.1M1117.7 437.7h.1M1112.3 434.6h.1M1113.6 440.1h.1M1105.8 445.6h.1M1119.1 434.5h.1M1115 440.4h.1M1109.8 436.8h.1M1109.1 442.4h.1M1113.1 440.6h.1M1113 437.9h.1M1114.4 437.9h.1M1107.1 434.1h.1M1105.2 441.2h.1M1111 437.5h.1M1112.2 434.9h.1M1115.2 439.4h.1M1115.4 440.8h.1M1117.2 438.7h.1M1113.8 439.4h.1M1116.9 443.6h.1M1116.3 437.8h.1M1113.2 441.8h.1M1102 440.7h.1M1109.5 440.3h.1M1110.7 439.4h.1M1111.7 443.7h.1M1108 441h.1M1102.6 444.4h.1M1112.2 439.5h.1M1120.2 436h.1M1111.3 438.7h.1M1118.9 439.3h.1M1106.9 439.8h.1M1109.7 440.3h.1M1108.7 446.2h.1M1107.3 439.5h.1M1114.5 437.2h.1M1110.1 443.7h.1M1111.4 437.3h.1M1103.3 442.1h.1M1110.5 438.8h.1M1108.2 445h.1M1110.4 440.2h.1M1119 437.6h.1M1111.2 441.4h.1M1112.2 437h.1M1113.1 439.7h.1M1105.7 441.9h.1M1116.3 436.5h.1M1115.5 441h.1M1113.1 439.7h.1M1110.6 444h.1M1110.2 440.7h.1M1106.5 438.9h.1M1121.8 439.3h.1M1110.5 439.9h.1M1111.2 435.5h.1M1102.9 441.3h.1M1117.1 441.5h.1M1104.3 439.4h.1M1104.1 443.2h.1M1101.3 442.8h.1M1110.9 437.8h.1M1111.1 444.3h.1M1118.8 435.7h.1M1109.2 440.4h.1M1110.1 439.6h.1M1110.2 441.6h.1M1105 440h.1M1107.2 443.1h.1M1100.7 442.7h.1M1116.5 439.4h.1M1103.3 437.5h.1M1110.3 438.3h.1M1106.3 440.3h.1M1114.2 440.2h.1M1117 437.4h.1M1107.2 443.6h.1M1120.6 443.6h.1M1114.3 441.4h.1M1109.3 441.2h.1M1110.2 436h.1M1114.1 441.5h.1M1121.7 438.5h.1M1107.4 439.9h.1M1100.9 443.4h.1M1106.1 439.7h.1M1111.4 437.5h.1M1108.8 446.8h.1M1104.7 441.6h.1M1103.8 444.7h.1M1116.1 437.9h.1M1111.8 441.1h.1M1112.5 437.7h.1M1108.2 437.6h.1M1111.1 436.8h.1M1115.1 444.3h.1M1113.1 442.9h.1M1110.8 440.7h.1M1115 441.1h.1M1106.5 438.2h.1M1106.4 443.1h.1M1106.8 446.1h.1M1118.7 442.2h.1M1115.7 441.5h.1M1110.7 440.9h.1M1116.5 437.6h.1M1110 440.2h.1M1110.9 445.2h.1M1109.4 439.3h.1M1102.7 442.5h.1M1110.4 443h.1M1110.7 441.8h.1M1114 443.5h.1M1107.3 437.7h.1M1107.7 441.1h.1M1118.4 437.7h.1M1108.6 439.3h.1M1109.5 439.8h.1M1108 440.7h.1M1115.2 441.4h.1M1114.6 437.7h.1M1110.5 441.2h.1M1105.6 441.8h.1M1111.2 443.1h.1M1121.7 438.6h.1M1108.6 443h.1M1109.6 441.6h.1M1116 433.6h.1M1116.4 442.5h.1M1109.4 439.7h.1M1107.9 438.1h.1M1118.4 438h.1M1112.5 439.8h.1M1109.2 438.7h.1M1112.4 439.9h.1M1105.4 437.8h.1M1119.4 439h.1M1111.8 444.4h.1M1106.3 445.8h.1M1117.8 438.2h.1M1112.3 440.4h.1M1116.1 435.7h.1M1110.2 440.3h.1M1115.4 440.8h.1M1114 434.4h.1M1106.3 442.5h.1M1113.8 440.7h.1M1116.5 434.8h.1M1107.9 441.6h.1M1107.5 435.2h.1M1111.3 441.3h.1M1110.5 442.2h.1M1109.9 436.4h.1M1107.9 440.5h.1M1124.8 438.9h.1M1114.4 440.5h.1M1106 441.1h.1M1116.5 443.5h.1M1103.5 442.5h.1M1116.1 439h.1M1119.3 438.7h.1M1115.3 442.1h.1M1106.8 440.6h.1M1109.6 437.9h.1M1116.1 439h.1M1105.6 442.9h.1M1123.2 437.1h.1M1107.4 438.1h.1M1119.8 441.2h.1M1119.2 441.7h.1M1113.9 438.8h.1M1111.5 437.1h.1M1113.2 436.3h.1M1114 437.8h.1M1115.6 441.1h.1M1099.6 440.6h.1M1112.6 437.8h.1M1113.2 441.8h.1M1123.7 439.9h.1M1111.4 442.5h.1M1115 443.7h.1M1101.7 441.8h.1M1105.5 438.5h.1M1108.4 443.9h.1M1112.2 439.5h.1M1103.2 440.5h.1M1114.7 435.2h.1M1110.6 438.4h.1M1118.2 436.9h.1M1114.6 443.7h.1M1118.1 436.8h.1M1105.6 440h.1M1110.4 445.1h.1M1119.7 442.5h.1M1109 445.5h.1M1113.5 444.2h.1M1108.4 435.9h.1M1104.9 441.5h.1M1109.2 439.9h.1M1118.6 440h.1M1109.6 437.5h.1M1119.9 436.7h.1M1112.6 440.5h.1M1114.9 435.5h.1M1109 440.7h.1M1101.8 441.3h.1M1113.6 439.4h.1M1114.2 438.8h.1M1111 441.5h.1M1114.6 443.4h.1M1114.5 441.6h.1M1109.8 434.9h.1M1110.3 443.5h.1M1105.9 440.9h.1M1106.3 445.3h.1M1108.2 442.4h.1M1117.3 437.6h.1M1118.6 434.6h.1M1116.1 440.2h.1M1107.6 439.6h.1M1105.8 443.8h.1M1107.2 440.3h.1M1116.3 441.5h.1M1112.4 439.3h.1M1106.7 435.1h.1M1110.9 439.7h.1M1115.6 442.2h.1M1111.4 435.7h.1M1118.5 440.4h.1M1110.5 442h.1M1110.3 440.5h.1M1114.4 436h.1M1110.5 441.3h.1M1107.2 445.8h.1M1112.3 441.9h.1M1110.1 439.6h.1M1100.9 441.2h.1M1111 443.4h.1M1118.2 439.1h.1M1111 439.5h.1M1114.4 440.5h.1M1110.3 441h.1M1118.2 440.4h.1M1121.2 437.1h.1M1111.6 437.5h.1M1115.2 440.2h.1M1110.5 435.5h.1M1114.1 433.7h.1M1108.6 441.6h.1M1117.8 441.7h.1M1115.3 438.5h.1M1109 437.9h.1M1104.6 436h.1M1112.8 436.2h.1M1103.6 441.8h.1M1110 436.6h.1M1108.8 441.3h.1M1103.8 438.3h.1M1114.6 440.7h.1M1107.4 439.6h.1M1105.3 439.1h.1M1112.9 440.4h.1M1108.1 444h.1M1111.2 441.7h.1M1115.5 440.9h.1M1117.7 442h.1M1118.6 439.2h.1M1121.9 437.7h.1M1111.6 442.6h.1M1112.3 440.4h.1M1117.9 444.5h.1M1112.4 441h.1M1120.1 440.9h.1M1106 444.3h.1M1104 436.5h.1M1111.3 441.3h.1M1107.9 440h.1M1112.4 440.6h.1M1122.9 441.3h.1M1116.1 438h.1M1111.5 434.2h.1M1115.3 441.5h.1M1105.9 438.6h.1M1119.2 438.8h.1M1113.6 437.1h.1M1112.5 438.3h.1M1112.8 433.1h.1M1114.6 438.6h.1M1112.3 441.3h.1M1106.4 443h.1M1114.3 438.5h.1M1105.4 439.4h.1M1105.8 444.1h.1M1115.3 436.9h.1M1115.7 441.2h.1M1115.4 434.9h.1M1113.7 440.8h.1M1113.1 443h.1M1102.1 445h.1M1121.7 439.4h.1M1107.4 438.8h.1M1114.4 439.5h.1M1111.5 441.4h.1M1109.5 441.3h.1M1103.1 443.6h.1M1115.7 439.3h.1M1111.8 443.1h.1M1115 435.2h.1M1110.7 445.1h.1M1099.9 441.6h.1M1113.3 444.6h.1M1116.8 442.3h.1M1113.8 439.8h.1M1113 434.5h.1M1119.5 435.7h.1M1102.1 440.9h.1M1111.8 437h.1M1117.5 436.6h.1M1108.7 440.2h.1M1105.7 440.6h.1M1109.4 437.4h.1M1111.6 445h.1M1113.5 441.2h.1M1115.3 442.7h.1M1114.4 441.9h.1M1113.3 442.9h.1M1118.2 439.3h.1M1114.8 440h.1M1112.6 440.1h.1M1110.3 439.6h.1M1106.3 439.9h.1M1118.6 438.7h.1M1107.9 442h.1M1109.6 435.2h.1M1109.2 444.2h.1M1113 436.2h.1M1112.5 443.6h.1M1114.2 439.1h.1M1114 435.4h.1M1110.1 440.4h.1M1112.1 436.2h.1M1110.8 441.9h.1M1101 442h.1M1121.1 437.2h.1M1113 437.6h.1M1117.1 443.2h.1M1103.7 440.7h.1M1117 439.1h.1M1106.4 442.1h.1M1100.2 440.4h.1M1109.2 438.1h.1M1112.6 440.3h.1M1112.9 439.8h.1M1114.4 439.2h.1M1108.1 443.3h.1M1111.6 438.6h.1M1113.2 436.6h.1M1120.5 439.6h.1M1109.4 439.6h.1M1109.8 438.9h.1M1106.2 437.1h.1M1110 441.8h.1M1114.6 438.3h.1M1120.1 440.1h.1M1105.7 440.6h.1M1105.7 441h.1M1114.1 438.9h.1M1109.8 439.4h.1M1116.3 440.4h.1M1110.3 438.4h.1M1112.4 440.5h.1M1112.1 434.7h.1M1113 445.9h.1M1116.6 434.1h.1M1112.5 443.1h.1M1120.1 440.1h.1M1115 440.2h.1M1110 439.5h.1M1106.8 439.9h.1M1119.6 441.9h.1M1110 440.8h.1M1111.9 440.8h.1M1108.9 438.6h.1M1121.1 437.9h.1M1114.3 438h.1M1103.7 440.3h.1M1109.4 440.5h.1M1106 442.6h.1M1110.9 440.2h.1M1110.6 437.5h.1M1114.4 438.9h.1M1108.8 442.7h.1M1107.5 441.2h.1M1109.3 442.7h.1M1112.2 437.8h.1M1101.9 442.8h.1M1118.5 440.3h.1M1113.5 440.7h.1M1102.8 443.4h.1M1107.8 446.5h.1M1118.5 436.9h.1M1122.2 434.7h.1M1110.6 442.1h.1M1112 437.2h.1M1114.3 437.5h.1M1108.8 446h.1M1112.9 440h.1M1111.1 442.3h.1M1107.1 436.4h.1M1118.4 438.2h.1M1110.7 439.6h.1M1122.3 440.9h.1M1106.5 442.3h.1M1103 439.9h.1M1105.8 444.6h.1M1122.5 440.2h.1M1107 441.7h.1M1122.3 438.3h.1M1103 439.9h.1M1121.5 439.4h.1M1109.8 435h.1M1108.2 435.8h.1M1123.5 439.9h.1M1113.4 446h.1M1105.6 440.1h.1M1103.8 437.7h.1M1108.1 439.1h.1M1111.9 442.5h.1M1105 444.3h.1M1109 437.9h.1M1111.1 440h.1M1104.5 442.8h.1M1111.1 440.7h.1M1117.5 443.6h.1M1114.6 441.2h.1M1115.8 437.5h.1M1116.5 440.8h.1M1108.1 440.8h.1M1110.7 440.3h.1M1112.2 436.6h.1M1113.8 437.7h.1M1108.3 440h.1M1112.5 439.4h.1M1111.7 436.1h.1M1117.4 442.4h.1M1116 445h.1M1120.5 440.1h.1M1106.8 436.2h.1M1113 436.2h.1M1110 439.8h.1M1110.8 437.5h.1M1111.8 440.4h.1M1121.3 442.8h.1M1111.6 441.7h.1M1107.2 441.7h.1M1122.1 437.9h.1M1104 437.8h.1M1107.7 439.1h.1M1112.9 439.1h.1M1107.5 445.3h.1M1110.4 443h.1M1115.3 437.6h.1M1114.2 437.1h.1M1105.6 438.7h.1M1114.5 439.1h.1M1110 433.7h.1M1117 437.7h.1M1104 440.4h.1M1107.2 433.9h.1M1117.6 440.4h.1M1108.9 446.4h.1M1104.9 441.9h.1M1110.1 437.9h.1M1107.2 439.9h.1M1110.1 438.3h.1M1116 436.9h.1M1115 437.6h.1M1104.9 439.8h.1M1119.7 441.6h.1M1107.6 440.2h.1M1108.7 440h.1M1107.5 440.2h.1M1112.3 439.4h.1M1109.1 439.6h.1M1109.9 438h.1M1116.6 436.2h.1M1122.2 442.1h.1M1106.8 438.5h.1M1109.8 439.2h.1M1115.7 438.2h.1M1108.3 437.7h.1M1102.2 437.5h.1M1119.5 439.4h.1M1111.6 438.9h.1M1119.8 441.8h.1M1105.8 443.5h.1M1113 433.7h.1M1105.6 437.2h.1M1109.7 436.4h.1M1108.6 445.6h.1M1120.5 436.6h.1M1113.1 438.7h.1M1105.1 437.8h.1M1107.5 441.8h.1M1109.7 441.2h.1M1114.9 444.7h.1M1119.5 438.1h.1M1115.2 442.1h.1M1108.7 437.4h.1M1111.4 441.3h.1M1107.5 440.5h.1M1114.3 437.8h.1M1108.9 439.7h.1M1107.2 440.9h.1M1110.8 439.1h.1M1113.4 438.7h.1M1115.2 437.7h.1M1117.1 435.3h.1M1118.8 439.4h.1M1119.9 436.9h.1M1104.8 442.4h.1M1117.6 439.2h.1M1119.3 440.3h.1M1118.7 438.1h.1M1108.8 441.7h.1M1117.5 443.2h.1M1110.9 439.7h.1M1102.6 441h.1M1108 439.9h.1M1114.6 434.7h.1M1115.7 440.1h.1M1115.6 435h.1M1116.6 438.4h.1M1109.7 442.5h.1M1106.9 441h.1M1110.8 434.4h.1M1108.9 439.8h.1M1109.1 437.8h.1M1108.1 436h.1M1106.3 441.3h.1M1111.4 440.9h.1M1118.4 442.3h.1M1110.1 440.8h.1M1112.6 440.7h.1M1114.7 442.5h.1M1115.3 438.9h.1M1121.1 439.8h.1M1105.5 442.7h.1M1121 438h.1M1114.6 439.3h.1M1109.9 446.2h.1M1110.3 439.4h.1M1111.4 443.2h.1M1111.7 437.9h.1M1115.1 442.3h.1M1103.7 443.3h.1M1109.5 437.6h.1M1114.2 443.8h.1M1111.9 444.3h.1M1115.2 443.7h.1M1114.7 443.5h.1M1116.5 438.8h.1M1109.6 442.1h.1M1115.3 442h.1M1116.1 441.8h.1M1106.5 442.3h.1M1122.5 439.6h.1M1121.5 442.1h.1M1108.9 441.3h.1M1103.3 436.6h.1M1111.4 442.8h.1M1112.2 441.2h.1M1110.5 436.4h.1M1109.9 439.1h.1M1115.3 437h.1M1117.8 444.2h.1M1118.8 442.1h.1M1104.7 438h.1M1119.5 442.2h.1M1122.1 440h.1M1110 443.4h.1M1104.9 441.5h.1M1114.3 441.4h.1M1115.4 441.4h.1M1105.1 439.6h.1M1110.6 436.7h.1M1116.8 441.1h.1M1112 439.4h.1M1111.2 438.6h.1M1111.7 439.1h.1M1106.1 444h.1M1121.6 437.9h.1M1120.2 443.4h.1M1118 435.7h.1M1108.5 442.6h.1M1119.8 441.7h.1M1113.8 437.9h.1M1107.8 435h.1M1109.1 440.5h.1M1113.3 442.2h.1M1118.2 439.6h.1M1111.1 440.6h.1M1109.1 435.1h.1M1112.9 441h.1M1103.4 442h.1M1112.2 440.8h.1M1111.5 440.9h.1M1112.1 442.4h.1M1119.7 435.8h.1M1121.2 441.5h.1M1107.7 437.8h.1M1112.5 442.6h.1M1112.1 434.9h.1M1122.9 438.9h.1M1110 438.5h.1M1114.8 437.7h.1M1096.5 438.1h.1M1110.8 441.2h.1M1110.9 438.3h.1M1112.9 431.9h.1M1117.9 444.5h.1M1097.3 444.5h.1M1115.4 434.2h.1M1118.8 445.1h.1M1114.7 444.3h.1M1117.5 446.6h.1M1121.1 439.2h.1M1105.1 433.2h.1M1107 439.2h.1M1105.7 436.3h.1M1121.5 437.7h.1M1098.6 442.1h.1M1106.1 435.1h.1M1106.2 439.6h.1M1102.2 439.7h.1M1116.8 442.5h.1M1110.2 434.1h.1M1122.1 433.2h.1M1112.6 439.6h.1M1109.6 441.3h.1M1110 444.9h.1M1097.4 442.3h.1M1115.1 448.4h.1M1121.3 443.7h.1M1126.6 440.8h.1M1110.9 446.3h.1M1099.5 437.1h.1M1100.6 443.9h.1M1114.7 440h.1M1112.8 437.6h.1M1109.1 438.2h.1M1121.9 441.1h.1M1103.2 439.5h.1M1109.7 439.3h.1M1111 443.4h.1M1111.1 442.8h.1M1120.6 445.2h.1M1115.9 437.9h.1M1112 441.8h.1M1110.5 439h.1M1114.1 440.3h.1M1099.2 439.4h.1M1098.4 441.9h.1M1112.4 437.4h.1M1113.6 435.7h.1M1096.4 442.6h.1M1114.7 436.3h.1M1100.8 437h.1M1122.6 443.5h.1M1118.3 445.3h.1M1129.6 442.7h.1M1117.4 444h.1M1111.1 438.7h.1M1107.6 439.1h.1M1108.6 436.8h.1M1103.4 432h.1M1114.2 436h.1M1112 438.4h.1M1107.2 437.8h.1M1121.1 441.9h.1M1109.2 438.9h.1M1113.4 445.3h.1M1113.4 434.1h.1M1108 433.6h.1M1120.1 443.1h.1M1098.5 445.6h.1M1112.7 436.1h.1M1108.7 442.3h.1M1116.9 444.3h.1M1103.8 442.4h.1M1108.1 446.5h.1M1114.9 437.9h.1M1118.2 441.2h.1M1113 441.8h.1M1104.6 437.9h.1M1100.5 436.3h.1M1120 436h.1M1112.8 448.7h.1M1108.4 450.4h.1M1118.9 442.1h.1M1115.1 431.6h.1M1117.9 441.8h.1M1116.9 438.8h.1M1109.6 438.9h.1M1114.8 449.6h.1M1106 447.6h.1M1110.4 430.3h.1M1113.7 438.5h.1M1111.7 439.8h.1M1113.7 447.5h.1M1110.2 439.9h.1M1114.2 436.9h.1M1126 433h.1M1130 431h.1M1132 436h.1M1140 441h.1M1147 440h.1M1155 439h.1M1163 441h.1M1168 437h.1M1178 440h.1M1186 439h.1M1199.6 420.6h.1M1200 434h.1M1208 440h.1M1215 441h.1M1222 438h.1M1236 440h.1M1240 436h.1M1244 433h.1M1104 372h.1M1107 378h.1M1104 386h.1M1106 392h.1M1103 399h.1M1105 410h.1M1104 418h.1M1106 425h.1M1111 371h.1" stroke="#55636c" stroke-width="2.6" stroke-linecap="round" fill="none" opacity="1.0"/><path d="M1361.1 438.1h.1M1411.7 440.2h.1M1416.1 435.4h.1M1375.4 439.3h.1M1405.5 439.6h.1M1413.1 441.8h.1M1407.5 435.7h.1M1414.5 445.2h.1M1391.3 440h.1M1382.6 442.3h.1M1417.1 438.7h.1M1393.1 436.5h.1M1394.9 439.7h.1M1424 439.3h.1M1397.3 439.1h.1M1363.3 439.4h.1M1378.5 440.6h.1M1392.1 439.4h.1M1390.8 438.5h.1M1409.9 442.4h.1M1436.7 437.7h.1M1339 441.3h.1M1396.7 444.8h.1M1374 437.3h.1M1385.7 441.5h.1M1411.3 440.9h.1M1343.4 442.8h.1M1342.5 443.7h.1M1374.8 438.5h.1M1384.2 434.9h.1M1398.3 440.7h.1M1348.4 442.2h.1M1362.1 443.6h.1M1388.2 445.3h.1M1403.4 437.5h.1M1432.4 439.2h.1M1373.6 438.5h.1M1358.9 436.6h.1M1395.8 438.4h.1M1344.6 436.5h.1M1390.2 439.1h.1M1406.4 437.2h.1M1350.9 441h.1M1426.2 440.5h.1M1370.5 439.2h.1M1406.3 437.6h.1M1352.3 441.8h.1M1384.9 438.9h.1M1378 440.1h.1M1424.2 439h.1M1370.7 439.6h.1M1394.7 442.3h.1M1343.7 442.2h.1M1433.1 438.7h.1M1419.8 439.9h.1M1433.8 437.5h.1M1384.5 442.9h.1M1375.4 441.6h.1M1336.7 440.5h.1M1412.3 443h.1M1403.3 440.2h.1M1418.2 442.7h.1M1438.9 440.5h.1M1411.7 442h.1M1407.9 440.6h.1M1351.1 442.3h.1M1389.3 438.9h.1M1400.4 444.4h.1M1421.5 440.9h.1M1403 439.3h.1M1334.2 437.3h.1M1358.6 442.2h.1M1392.3 443.6h.1M1435.3 439h.1M1414.6 445.4h.1M1405.4 436.5h.1M1386.5 436.6h.1M1368.7 441.9h.1M1354.3 438.4h.1M1420.9 439.1h.1M1398.8 437.5h.1M1427.1 438.7h.1M1426.8 436.3h.1M1365.2 440.5h.1M1420.9 444.1h.1M1410.8 442.7h.1M1354.9 440.7h.1M1396.4 439.8h.1M1403.6 439.4h.1M1326.6 435.4h.1M1409.9 440.3h.1M1369 444.9h.1M1391 440.2h.1M1399.7 438.9h.1M1407.7 439h.1M1396.4 437.1h.1M1402.9 443.5h.1M1398.4 441.7h.1M1423.5 440.2h.1M1371 441h.1M1399.4 434.8h.1M1413.7 439.1h.1M1369.7 437.2h.1M1393.1 443.6h.1M1427.5 440.3h.1M1443.9 440.9h.1M1364 438.1h.1M1388.8 439.1h.1M1349.5 439.5h.1M1344.5 433.3h.1M1408.9 442.5h.1M1405.6 438.5h.1M1373 435.7h.1M1366.2 439.8h.1M1415.3 445.6h.1M1426.4 438.9h.1M1368.3 439.5h.1M1392 439.9h.1M1373 444h.1M1404.5 440h.1M1384.2 443.1h.1M1402.1 436.3h.1M1343.8 441.7h.1M1396.3 440.6h.1M1442.1 438.6h.1M1387.4 439.1h.1M1381.3 439.7h.1M1348.7 437.5h.1M1387.8 441.4h.1M1402.9 439.3h.1M1394.9 435.8h.1M1407.2 437.5h.1M1416 442.1h.1M1380 447.2h.1M1398.2 442.7h.1M1399.4 441h.1M1416.3 442.4h.1M1397.4 441.6h.1M1374 433h.1M1434 437.1h.1M1388.6 443.5h.1M1386.9 442.2h.1M1396.7 441h.1M1373.6 448h.1M1343.6 441.4h.1M1384 441h.1M1356.1 441.6h.1M1382.3 437.6h.1M1378.6 438.1h.1M1370.7 437.9h.1M1389.5 435.9h.1M1407.2 440.9h.1M1390.7 434.9h.1M1387.4 437.3h.1M1395.6 442.6h.1M1406.4 435.9h.1M1442.9 439.6h.1M1433.3 440.2h.1M1339.9 440.9h.1M1375.4 437h.1M1376.4 437.6h.1M1395.9 446.3h.1M1377.2 439.4h.1M1353.6 443.6h.1M1322.3 442.7h.1M1426.9 442.6h.1M1395.7 440.7h.1M1413.4 441.4h.1M1441 440.2h.1M1391.8 441.6h.1M1403.1 440.2h.1M1410.7 435.9h.1M1396.8 439.4h.1M1386.6 441h.1M1379.3 445.8h.1M1357.3 440.3h.1M1438.4 439.6h.1M1410.9 441.2h.1M1435.7 442.1h.1M1387 438.9h.1M1440.3 436.5h.1M1374.5 446h.1M1371.8 439.1h.1M1355.6 438.1h.1M1425.3 441.1h.1M1410.1 438.8h.1M1355.7 442.8h.1M1352.6 442.1h.1M1409.3 443.5h.1M1380.2 439.1h.1M1352.1 436.4h.1M1401.3 438.9h.1M1379 447.3h.1M1386.3 441.2h.1M1410.1 439.6h.1M1385.2 436.6h.1M1434.9 439.4h.1M1435.1 439.2h.1M1422.1 438.5h.1M1341.4 439.6h.1M1383.5 444.3h.1M1402.6 440.4h.1M1419.6 440.4h.1M1389 443.1h.1M1407.4 439.5h.1M1399.1 440.1h.1M1319.9 439.8h.1M1375.9 444.3h.1M1426.4 439.8h.1M1411.3 440.9h.1M1353.8 440.3h.1M1382.7 437.4h.1M1401.5 438.8h.1M1398.6 445.6h.1M1417.8 441.6h.1M1380.1 440.9h.1M1343.2 437.1h.1M1407.2 441.8h.1M1348.6 439h.1M1389.7 438.7h.1M1379.4 442.8h.1M1392.6 438.2h.1M1411.8 439.1h.1M1394.2 442h.1M1393.1 442.4h.1M1397.5 440.8h.1M1402.7 442.8h.1M1399.6 433.3h.1M1414.1 440.8h.1M1323.9 440.1h.1M1399.2 439.2h.1M1411.9 439.4h.1M1392.8 437h.1M1346.3 439.3h.1M1406.3 439.2h.1M1380.1 442h.1M1403.5 443.3h.1M1419.9 439.8h.1M1385.6 437.9h.1M1430.9 440h.1M1434.7 440.7h.1M1406.3 435.8h.1M1378.1 441.2h.1M1410.7 438.1h.1M1376.5 445.3h.1M1352.3 440.1h.1M1371.6 442.8h.1M1432.3 438.4h.1M1395.8 438.9h.1M1436.4 441.3h.1M1388.9 438.8h.1M1358.8 443.1h.1M1405.7 440.7h.1M1369.2 433.5h.1M1389.5 438.2h.1M1411.3 437.6h.1M1396 439.8h.1M1419.2 440h.1M1400.4 438.4h.1M1392.5 437.7h.1M1411.9 439.7h.1M1361.9 442h.1M1390.8 440.5h.1M1392.8 440h.1M1395.6 441h.1M1431.4 440.4h.1M1394.3 439.4h.1M1375.9 435.9h.1M1378.5 437.9h.1M1355.7 441.3h.1M1372.5 439.3h.1M1393.3 440.4h.1M1388.2 438.9h.1M1391.4 442.7h.1M1394 439.7h.1M1392.2 444.6h.1M1395.8 439.2h.1M1409.8 438.6h.1M1387.5 439.1h.1M1406.3 437.1h.1M1395.3 435.7h.1M1442.6 439.5h.1M1375.8 439.1h.1M1407.9 437.6h.1M1362.2 439.2h.1M1404 440.2h.1M1434.3 438.2h.1M1398.9 437.9h.1M1374.6 440.3h.1M1389.2 441.3h.1M1432 437.9h.1M1373.2 438.5h.1M1416.2 438.8h.1M1402.4 443.9h.1M1359.1 439.7h.1M1354 447.2h.1M1342.7 438.1h.1M1426.3 438h.1M1411.5 440.1h.1M1385.1 441.6h.1M1375.3 437.1h.1M1362.5 437.3h.1M1373.9 437.7h.1M1406.7 435h.1M1391.9 441.3h.1M1390.4 439h.1M1405 438.5h.1M1390.4 440.8h.1M1392.4 439.3h.1M1404.2 442.7h.1M1397.6 438.8h.1M1436.7 441.9h.1M1399.6 436h.1M1414.6 440.2h.1M1377.7 437.2h.1M1404.3 435.5h.1M1394.8 442.8h.1M1379.2 441.3h.1M1375 435.1h.1M1401 442.7h.1M1433 438.6h.1M1417.8 441.2h.1M1427.4 441.4h.1M1353.1 440.7h.1M1394.9 435.5h.1M1427.9 438.4h.1M1375.9 441.4h.1M1364 437.1h.1M1352.8 435.4h.1M1441.6 439.3h.1M1411.2 441.5h.1M1367.3 442.4h.1M1422.6 438.1h.1M1377.5 435.7h.1M1353.7 439.4h.1M1360.4 443.1h.1M1390.7 439h.1M1389.9 445.3h.1M1393 440.2h.1M1429.7 439.7h.1M1433.6 439.3h.1M1408 439.5h.1M1352.5 435.9h.1M1439.2 443.1h.1M1402 437.8h.1M1439.1 439.6h.1M1387.7 440.8h.1M1378.7 440.4h.1M1418 436.6h.1M1341.6 445.3h.1M1362.1 439.6h.1M1356.7 437.8h.1M1325.5 441.5h.1M1352.9 445.1h.1M1356.8 442.5h.1M1402.5 443.6h.1M1425.2 438.5h.1M1409.1 434.6h.1M1413.3 436.3h.1M1386.8 440.5h.1M1358 434.9h.1M1413.4 440.7h.1M1348 435.2h.1M1401.1 437.9h.1M1390.8 437.3h.1M1386.3 441.6h.1M1438.1 438.7h.1M1377.3 441h.1M1435.4 440.5h.1M1366.4 443.7h.1M1368 438.3h.1M1417.7 441.8h.1M1402.9 439.7h.1M1394.8 438h.1M1399.5 437.7h.1M1421.6 438.8h.1M1384.1 435.6h.1M1411.7 439.6h.1M1386 440.9h.1M1386.9 437.2h.1M1374.6 439.4h.1M1437.9 441.1h.1M1393.6 438.8h.1M1376.4 438.8h.1M1396.2 437.2h.1M1346.3 442.7h.1M1441.6 439.7h.1M1428.2 442.8h.1M1383.8 442.1h.1M1374.5 440h.1M1373.2 436.4h.1M1383.2 440.6h.1M1387.9 441.4h.1M1368.9 438h.1M1364.8 434.4h.1M1409.6 437.5h.1M1361.1 439.1h.1M1338.1 445.8h.1M1383.2 441.2h.1M1384.7 439h.1M1392.7 433.9h.1M1368.2 443.8h.1M1375.4 437.8h.1M1369.8 439.1h.1M1376.3 438.6h.1M1376 443.7h.1M1366.4 441.8h.1M1375 438.2h.1M1379.8 447.5h.1M1393.4 441.6h.1M1442.3 440h.1M1408.5 446.2h.1M1441.4 439.3h.1M1392 437.5h.1M1366.9 442h.1M1398.9 442.3h.1M1392 437.5h.1M1373.5 438h.1M1368.9 442.6h.1M1420.4 444.6h.1M1403.4 438.2h.1M1366.2 442.4h.1M1382.2 443.1h.1M1382.7 441.6h.1M1387.4 436.7h.1M1389.7 433.7h.1M1333.1 440.9h.1M1387.8 448.7h.1M1394 439.3h.1M1358.1 438.5h.1M1407.4 442.3h.1M1386.2 441.1h.1M1383.8 438.6h.1M1373.7 435.9h.1M1376.6 438.3h.1M1387.5 437h.1M1423 441.4h.1M1342.4 435.9h.1M1389.6 441.7h.1M1373.8 442.3h.1M1373.8 439.8h.1M1363.1 441.3h.1M1367.8 443.3h.1M1360.8 440.6h.1M1402.8 443.3h.1M1393.8 439.5h.1M1395.8 440.9h.1M1400.3 438h.1M1356.1 441.1h.1M1413.7 439.6h.1M1425.4 437.1h.1M1380.3 438.7h.1M1351.9 438.3h.1M1437.9 440.2h.1M1345 437.1h.1M1361 437.9h.1M1382.8 432.5h.1M1417 440.9h.1M1438.1 437.9h.1M1409.4 439.5h.1M1396.5 441.2h.1M1425.5 440.9h.1M1400.6 442.2h.1M1381.6 439h.1M1375.3 438.6h.1M1387.5 441.9h.1M1432 439.1h.1M1410.9 438.8h.1M1426.7 440.1h.1M1360.5 439.9h.1M1385.7 440.4h.1M1384.7 440.3h.1M1397.6 441.3h.1M1353.8 441.6h.1M1376.8 442.1h.1M1393.1 433.9h.1M1392.7 437.2h.1M1388.6 437.3h.1M1425.9 442.8h.1M1387.1 440.5h.1M1376.1 437h.1M1383.3 437h.1M1429.2 439.1h.1M1413.8 439.2h.1M1391.3 444.9h.1M1368.3 444h.1M1386.5 438h.1M1421.7 442.2h.1M1380.5 442.1h.1M1438 439.2h.1M1361 439h.1M1401.7 435.3h.1M1365.5 437.6h.1M1401.4 443.3h.1M1377 438.5h.1M1398.7 443.8h.1M1426.2 441.8h.1M1390.6 438.2h.1M1357.7 441h.1M1354.5 446.3h.1M1368.5 443h.1M1377.8 439.4h.1M1416 446.2h.1M1393 439.6h.1M1386 439.1h.1M1365.6 441.9h.1M1397.5 441.8h.1M1404 438.4h.1M1352.6 438.1h.1M1377.8 444.8h.1M1430.3 438.5h.1M1394.3 438.9h.1M1350.6 437.4h.1M1398.4 438.8h.1M1364.2 438.9h.1M1384.6 443.3h.1M1417.2 438.9h.1M1380 444.3h.1M1334.9 439.4h.1M1438.8 440.9h.1M1364 440h.1M1393.3 432.9h.1M1428.4 439.9h.1M1416 442h.1M1382.4 442.8h.1M1399.9 441.6h.1M1423.5 441.1h.1M1393.5 443.1h.1M1349.1 437.5h.1M1434.4 438.8h.1M1402.6 441.5h.1M1370.3 441.8h.1M1392.2 443.1h.1M1384.4 439.9h.1M1391.7 437.7h.1M1350.4 438.6h.1M1370.2 438.9h.1M1372.9 437.6h.1M1397 434.3h.1M1378.7 438h.1M1349.9 437.2h.1M1377.2 441.7h.1M1323.9 437.6h.1M1394.2 445.6h.1M1391.2 436.7h.1M1422.8 439.7h.1M1403.6 434.6h.1M1371.6 441.7h.1M1391.8 440.9h.1M1415.7 441.7h.1M1417.2 441.7h.1M1408.2 445h.1M1409.4 437h.1M1404.1 440.7h.1M1394.3 438.6h.1M1429.8 439.7h.1M1411.6 440.9h.1M1394.7 440.5h.1M1384.7 431.2h.1M1388.1 438.6h.1M1378.7 444.5h.1M1397.4 441h.1M1403.9 442.6h.1M1403.2 438.1h.1M1373.6 437.9h.1M1335.7 441.1h.1M1343 442.9h.1M1373 436.9h.1M1364.1 440.8h.1M1402.7 442.8h.1M1391.9 443.1h.1M1372.4 438.5h.1M1353.7 439.5h.1M1442.1 437.2h.1M1393.8 436.7h.1M1423.2 440.7h.1M1430.5 439.1h.1M1369.7 437.8h.1M1423 436.5h.1M1408.2 440.3h.1M1338.2 441.3h.1M1414.8 440.4h.1M1427 432.7h.1M1374.5 444h.1M1390.3 435.8h.1M1372.9 439.7h.1M1365.9 439.7h.1M1377.7 448.1h.1M1381.9 442h.1M1395.3 436.5h.1M1398.6 445.7h.1M1365.6 444.8h.1M1364.8 438.9h.1M1376.3 435.4h.1M1353.1 438.3h.1M1353.4 439.4h.1M1411.4 444.2h.1M1364.4 440.2h.1M1393.2 438.9h.1M1397.1 437.5h.1M1395.6 442.5h.1M1407.5 440.7h.1M1442.5 438.5h.1M1387.2 443.4h.1M1376.8 443.5h.1M1337.8 437.3h.1M1356.1 441.9h.1M1388.9 435.4h.1M1362.4 442.7h.1M1422.2 440.7h.1M1370.8 442.7h.1M1435.4 440.8h.1M1385.8 440.9h.1M1387 443.7h.1M1397.1 441.5h.1M1384.2 438.4h.1M1410.2 441.5h.1M1415.9 437.4h.1M1415.3 440.5h.1M1414.1 437.7h.1M1385.6 441.1h.1M1369.9 437.2h.1M1392.1 440.5h.1M1384.1 437.2h.1M1427.8 442.4h.1M1392.1 440h.1M1392.4 440.9h.1M1395.9 435.7h.1M1391.1 439.8h.1M1390.1 439.7h.1M1380.4 440.6h.1M1339.1 441.8h.1M1374.2 440.7h.1M1382.9 438.7h.1M1370.2 439.9h.1M1389.2 437.3h.1M1390.9 438.8h.1M1380.3 439.7h.1M1378.8 444h.1M1370.5 435.1h.1M1402.5 437.8h.1M1406.7 437.7h.1M1355.5 441.7h.1M1373.6 441.9h.1M1404.3 438h.1M1435.9 440.7h.1M1407.4 446.3h.1M1385.9 440.3h.1M1371.4 441.3h.1M1354.5 441h.1M1396.5 441.3h.1M1413.1 438.8h.1M1390.2 441.8h.1M1423.4 437.6h.1M1367.4 439.6h.1M1359.3 437.2h.1M1415.6 443.6h.1M1343.3 441.7h.1M1410 438.7h.1M1423.7 438.7h.1M1400.1 440.4h.1M1376.3 434.2h.1M1405.6 437.4h.1M1399.5 439.2h.1M1430.7 440h.1M1389 441h.1M1381.4 438.5h.1M1402 446.4h.1M1409.2 441.4h.1M1382.3 437.8h.1M1394.4 437.2h.1M1391.6 438.6h.1M1388.3 439.4h.1M1371 442.8h.1M1382.9 441.5h.1M1422.2 442.3h.1M1395.6 433.9h.1M1406.3 438.4h.1M1396 437.8h.1M1414.5 442.3h.1M1415 435.6h.1M1392.7 435.7h.1M1399.6 440.9h.1M1403 440.7h.1M1380.8 441.7h.1M1362.1 436.9h.1M1389.8 441.7h.1M1361.2 437.1h.1M1428.8 440.9h.1M1398.7 439h.1M1366.7 438h.1M1399 442.3h.1M1397.4 440.4h.1M1381.5 440.6h.1M1401.6 436.4h.1M1423.9 439.2h.1M1361.2 435.7h.1M1361.5 437.5h.1M1394 441h.1M1394 440.1h.1M1425.9 440h.1M1358.7 438h.1M1398.3 443.4h.1M1427.7 439.5h.1M1389.4 438h.1M1351.9 435h.1M1399 435.4h.1M1409.1 440.1h.1M1363.8 438.1h.1M1393.9 444.2h.1M1394.5 441.2h.1M1428.2 441h.1M1332.2 432.6h.1M1430.8 437.7h.1M1359.8 442.9h.1M1365 440.9h.1M1396.6 438.4h.1M1414.1 440.2h.1M1383.4 438.3h.1M1406.3 442.6h.1M1425 443.7h.1M1354.1 434.1h.1M1396.4 443.5h.1M1405.3 439.8h.1M1426.8 437.7h.1M1354.2 446.4h.1M1367.8 439.4h.1M1412.7 432.7h.1M1354.6 438h.1M1403.2 441.3h.1M1403.3 443h.1M1358.3 439.2h.1M1416.9 444.7h.1M1377.4 443.2h.1M1385.4 442.3h.1M1406.8 436.6h.1M1395.4 437h.1M1384.6 441.4h.1M1332.5 441.7h.1M1413.6 443.3h.1M1409.4 438.7h.1M1387.7 439.2h.1M1406.8 445.6h.1M1358.9 440.1h.1M1401.9 437h.1M1405.5 441.4h.1M1399.8 440.6h.1M1403.4 431.8h.1M1408.5 441.6h.1M1426.1 438.8h.1M1407.3 442.1h.1M1365.9 442h.1M1395.6 437.7h.1M1381.5 440.9h.1M1410.4 440.2h.1M1383.3 441.8h.1M1415.3 438.9h.1M1369.4 438.2h.1M1392.2 435.7h.1M1350.5 442.3h.1M1392.7 438.4h.1M1395.3 440.3h.1M1412.9 441.4h.1M1381.7 436.1h.1M1381.3 442.3h.1M1391 434.8h.1M1381.7 442.3h.1M1400.8 440.3h.1M1344.4 446.8h.1M1409.8 442.9h.1M1383.6 439.2h.1M1404.8 437.2h.1M1401.2 437.9h.1M1413.6 438.3h.1M1402.4 435.9h.1M1367.4 432.9h.1M1407.5 435.9h.1M1424.2 439.5h.1M1418.8 439h.1M1387.2 437.6h.1M1398.8 443.6h.1M1443.2 438.5h.1M1420.9 439.8h.1M1392 442.3h.1M1376.2 434.6h.1M1403.6 440.3h.1M1403.8 441.6h.1M1343.4 434.9h.1M1385.8 438.6h.1M1417.4 441.5h.1M1353.6 438h.1M1375.6 440.1h.1M1387.4 444.1h.1M1441.6 440.3h.1M1382.3 440.1h.1M1391.3 437.7h.1M1393.5 444h.1M1399 438.3h.1M1398.5 440.7h.1M1430.3 440.4h.1M1382.6 438.4h.1M1414.6 439.6h.1M1386.5 440.2h.1M1416.7 439.8h.1M1377.5 440.1h.1M1385.7 440.1h.1M1393.2 436.9h.1M1423.5 439.6h.1M1411.1 438.2h.1M1427.1 441.6h.1M1374 439.7h.1M1422 442.6h.1M1396.8 442.8h.1M1421.3 440.1h.1M1401 440.7h.1M1396 443.4h.1M1415.3 441.2h.1M1406.6 436.1h.1M1424.7 441.6h.1M1364.1 441.8h.1M1370.6 436.3h.1M1389.6 434.4h.1M1398 441.4h.1M1391.2 438.8h.1M1385.5 440.4h.1M1335.8 438.6h.1M1375 440.9h.1M1400.2 439.7h.1M1343.3 440.6h.1M1410.1 439.4h.1M1421.2 438.8h.1M1360.2 441.6h.1M1367.8 435.8h.1M1386.2 439.2h.1M1436.9 442.6h.1M1367 440h.1M1383.5 439.7h.1M1400.1 441.7h.1M1390.3 439h.1M1434.2 440.4h.1M1321.2 435.8h.1M1370.6 442h.1M1396.4 438.6h.1M1411.9 438.7h.1M1363.8 439.7h.1M1380.6 439.9h.1M1355.1 439.4h.1M1387.3 441.1h.1M1356.2 438.1h.1M1394 438.4h.1M1386.4 439.7h.1M1369.5 435.6h.1M1408.5 441.8h.1M1350.2 437.3h.1M1403.9 440.4h.1M1376.6 440.1h.1M1390.2 440.8h.1M1395 445.2h.1M1382.4 438h.1M1364.7 439.7h.1M1373.7 432.8h.1M1419 444.4h.1M1376.8 443.4h.1M1346.5 442.1h.1M1334.8 438.7h.1M1387.5 436.3h.1M1397.7 441.5h.1M1405 436.5h.1M1435.8 439.7h.1M1395.4 436.4h.1M1374.7 441.2h.1M1389.7 443.6h.1M1373.5 438.3h.1M1364 442h.1M1400.1 439h.1M1420.8 442.1h.1M1410.1 439.9h.1M1392.8 438.4h.1M1387.7 436.5h.1M1394.8 439.3h.1M1399.4 445.1h.1M1394.2 441.6h.1M1390.3 437.1h.1M1391 445.5h.1M1402.5 436.5h.1M1439.2 439.6h.1M1426 441.3h.1M1379.3 440.1h.1M1420.4 441.7h.1M1413.8 439.9h.1M1363.4 439.3h.1M1382 433.4h.1M1396.8 441.4h.1M1361.4 438.7h.1M1375.1 440.7h.1M1403.4 438.4h.1M1380.9 440.4h.1M1396.8 440.9h.1M1367.1 439.3h.1M1409.8 439.3h.1M1374.2 437h.1M1345.9 441.2h.1M1428.7 437.8h.1M1414 441.4h.1M1400.3 441.5h.1M1405.2 439.6h.1M1357.9 439.6h.1M1378 446.5h.1M1336.4 438.6h.1M1410.8 438.2h.1M1364.7 441.1h.1M1344.9 438.6h.1M1397.6 440.1h.1M1398.6 438.2h.1M1384.9 441.9h.1M1391.1 435h.1M1375.1 435.2h.1M1416.9 439.1h.1M1396.5 441.7h.1M1434.6 441.4h.1M1368.8 438.1h.1M1397 440.1h.1M1432.8 440.2h.1M1381.6 435.7h.1M1436.1 441.2h.1M1369.3 437.4h.1M1411.8 443.1h.1M1401 438.7h.1M1407.8 442.7h.1M1422.5 442.5h.1M1354.2 440.3h.1M1353.9 440.7h.1M1327.9 441.3h.1M1381.7 441.6h.1M1403.8 440.2h.1M1383 442.3h.1M1383.1 444.1h.1M1407 436.1h.1M1380.5 439.9h.1M1397.3 440.8h.1M1402.3 443.2h.1M1335.5 435.4h.1M1398.6 440.6h.1M1344.2 444.1h.1M1407.4 437h.1M1389.8 445.4h.1M1374.3 440h.1M1404.9 441.3h.1M1391.6 443h.1M1362.6 440.9h.1M1385.5 440.8h.1M1387.3 444.1h.1M1420.5 443.3h.1M1414.7 439.2h.1M1392.8 447.1h.1M1398.4 438.4h.1M1348.2 440.8h.1M1339.8 440.8h.1M1350.9 434.5h.1M1378.3 442.9h.1M1399.5 438.5h.1M1393.4 439.7h.1M1396.4 445.6h.1M1408 443.2h.1M1408.7 440.6h.1M1343.8 439.3h.1M1413.5 438.9h.1M1332.2 440.1h.1M1397.2 446.4h.1M1387.3 441h.1M1394.2 441.8h.1M1374 439.2h.1M1411.3 441.6h.1M1391.5 438.7h.1M1399.1 438h.1M1421.1 436.3h.1M1402 442.2h.1M1357.7 443.4h.1M1373.4 437.2h.1M1406.3 441.4h.1M1420.6 439.4h.1M1422.1 438.8h.1M1403.9 445.6h.1M1381.1 442.6h.1M1407 441.1h.1M1397 436.4h.1M1382.4 442.8h.1M1395.1 436.4h.1M1383.5 441.6h.1M1383.7 442.9h.1M1366.2 443.4h.1M1397.4 441.5h.1M1343.3 445.4h.1M1354.5 441.7h.1M1365.9 439.4h.1M1358.6 441h.1M1441.5 438.2h.1M1372.3 441.9h.1M1395.8 435.5h.1M1386.7 439.9h.1M1395.4 440.6h.1M1391 440.8h.1M1389 439.1h.1M1409.1 444.6h.1M1417.9 439.8h.1M1347.3 450.5h.1M1428.1 440.4h.1M1379.8 442.7h.1M1398.7 441.8h.1M1370.6 435.2h.1M1364.5 448.1h.1M1410.7 439.6h.1M1417.2 442.8h.1M1390.6 436.9h.1M1397 442.7h.1M1416.3 440.9h.1M1380.3 437.3h.1M1338 442.4h.1M1365.6 437.9h.1M1395.8 444.2h.1M1417.6 436.2h.1M1351.8 441.9h.1M1385.9 438.3h.1M1391.8 440.7h.1M1385.9 443.5h.1M1387.4 441.2h.1M1368.9 434.6h.1M1396.8 442.5h.1M1423 438h.1M1371.5 436.1h.1M1422.8 441.1h.1M1396.8 439.3h.1M1397.2 444.3h.1M1390.5 440.1h.1M1417 440.7h.1M1340.7 438.4h.1M1381.8 446.4h.1M1413.8 437.8h.1M1356.7 438.2h.1M1350.2 440.4h.1M1407.1 440.4h.1M1408.9 437.2h.1M1354.3 441h.1M1392 437.8h.1M1400.4 441.9h.1M1398.5 440.7h.1M1401.7 440.1h.1M1419.3 438.6h.1M1400.9 446.1h.1M1432 440.4h.1M1406.1 443.9h.1M1383.6 437.9h.1M1375.7 440.7h.1M1400.2 437.6h.1M1384.8 443.3h.1M1431.4 440h.1M1379.4 439.6h.1M1407.6 439.6h.1M1420.3 437h.1M1412.2 438.3h.1M1402.7 440.3h.1M1343.5 441.6h.1M1427.1 436.9h.1M1440.2 438.8h.1M1360.1 436.9h.1M1411.3 434.3h.1M1404.1 443.9h.1M1383.3 440.6h.1M1435.2 437.5h.1M1414.5 441.4h.1M1410.4 444.3h.1M1377.7 439.5h.1M1359.4 442.6h.1M1406.3 443.6h.1M1409.8 437.9h.1M1376 435.9h.1M1375.3 438.2h.1M1367.1 439.3h.1M1372.6 440.4h.1M1328.5 438.9h.1M1399.4 441.2h.1M1325.4 438h.1M1402.3 439.3h.1M1391.6 441.3h.1M1367.6 439.1h.1M1383.9 443.2h.1M1421.8 441.3h.1M1328.5 440.5h.1M1370.2 438.8h.1M1342.9 440.8h.1M1377.4 444.1h.1M1347.8 439.5h.1M1442 439.5h.1M1435.1 441.9h.1M1384.3 437.8h.1M1376.8 442h.1M1327.7 434.9h.1M1324.7 441.6h.1M1401.4 438.4h.1M1393.2 438.7h.1M1403.9 438.1h.1M1378.2 441.7h.1M1400 441.4h.1M1430.6 440.1h.1M1373.7 432.5h.1M1397.6 435.7h.1M1410.5 439h.1M1367.1 437h.1M1388.5 444.3h.1M1377.4 442.4h.1M1433.9 440.9h.1M1388.8 436.3h.1M1424.3 437h.1M1399.9 436.7h.1M1391.5 440.2h.1M1413.6 440.3h.1M1416.7 440.2h.1M1381.6 436.1h.1M1432.8 442.7h.1M1409.9 441.4h.1M1399.3 442.2h.1M1374.2 432.8h.1M1439.9 440.6h.1M1355.2 440.6h.1M1362.8 440.5h.1M1404.2 430.8h.1M1357.6 438.3h.1M1435.2 440.4h.1M1400.5 438.3h.1M1432.9 441.5h.1M1373.9 439.6h.1M1392.4 440.7h.1M1358.5 440.6h.1M1420.6 442.4h.1M1397.9 443.1h.1M1391.4 431.8h.1M1383.6 443.8h.1M1350.8 440.8h.1M1413 443.2h.1M1362.5 441.8h.1M1377.3 438.8h.1M1351.8 433.2h.1M1396.7 443.2h.1M1391.9 442.3h.1M1389 442.7h.1M1407.2 441.1h.1M1396 435.2h.1M1370.2 444.1h.1M1412.5 438.4h.1M1400.6 441.1h.1M1432.5 438.1h.1M1347.7 438.2h.1M1383 435.8h.1M1401.6 442.7h.1M1377 435.8h.1M1416 439.9h.1M1364.9 437.5h.1M1403.5 441.4h.1M1403.4 439.4h.1M1377.6 442.4h.1M1395.1 442.1h.1M1415.7 437.1h.1M1415.3 440.3h.1M1399.1 441.1h.1M1405.7 439.4h.1M1420.2 438.3h.1M1405.5 440h.1M1424.1 442.7h.1M1398.7 438.2h.1M1352.1 438.6h.1M1376.2 441.8h.1M1346 434.9h.1M1397.2 440.3h.1M1390.7 436.9h.1M1392.4 445.6h.1M1387.2 433.6h.1M1421.3 438.4h.1M1358.1 437.6h.1M1328.9 438.2h.1M1389.9 435.1h.1M1437.5 437.5h.1M1404.7 431.6h.1M1365.4 437.3h.1M1379.5 442.4h.1M1361.4 438.4h.1M1353.1 446.9h.1M1407.7 441h.1M1369.8 437.2h.1M1354.1 441.8h.1M1378.4 437.4h.1M1332.7 444.1h.1M1390 443.6h.1M1405.5 438.6h.1M1424.4 440.5h.1M1391.4 442.6h.1M1400.9 439.2h.1M1392.4 441.8h.1M1416.4 440.7h.1M1407.8 438.7h.1M1409.4 439.6h.1M1424.8 437.5h.1M1441.9 440.5h.1M1384.4 435.4h.1M1403 437h.1M1421.1 440.5h.1M1354.2 435.8h.1M1391 440.5h.1M1436.9 438.8h.1M1394.9 441.1h.1M1373.7 442h.1M1403.3 443.7h.1M1366.3 441.5h.1M1379.2 436h.1M1406.7 441.9h.1M1389.9 442.5h.1M1335 437.6h.1M1403.4 437.1h.1M1382.4 435.4h.1M1399 441h.1M1440.9 440.4h.1M1391.3 439.9h.1M1385 443.8h.1M1402.5 445.2h.1M1385.1 438.4h.1M1393.5 436.4h.1M1440 439.9h.1M1420.4 435.3h.1M1416.8 437.6h.1M1341.4 441.1h.1M1407.9 438.6h.1M1400.5 439.9h.1M1389.5 445.7h.1M1392.6 439.5h.1M1381.8 441.8h.1M1398.2 440.3h.1M1402.6 443.3h.1M1384.6 442.7h.1M1388.5 439.1h.1M1436.2 442.1h.1M1377.6 443.4h.1M1382.8 443.5h.1M1411.9 438.6h.1M1419.4 436.2h.1M1395 440.1h.1M1397.6 443.9h.1M1329.9 437.4h.1M1390.7 439.4h.1M1354.7 443h.1M1394.5 432.5h.1M1401.8 438.4h.1M1384.9 442.3h.1M1408.9 443h.1M1357.8 440.9h.1M1353.3 436.6h.1M1394.7 431.8h.1M1391 436.3h.1M1425.3 435.8h.1M1393 437.3h.1M1385.8 441.3h.1M1339.7 444h.1M1377.3 436.5h.1M1351.1 439.9h.1M1411.1 437h.1M1407 438h.1M1410 435.4h.1M1420.9 441.9h.1M1413.5 442.1h.1M1416.4 442.7h.1M1424.7 439.1h.1M1403.4 437.4h.1M1340.1 436.3h.1M1408 441.8h.1M1408 437.2h.1M1332.2 438.3h.1M1402 442.2h.1M1351.2 439.5h.1M1377.1 440.1h.1M1409.6 436.4h.1M1416.2 442.2h.1M1412.6 443.5h.1M1392.3 439.3h.1M1359.1 438.3h.1M1407.5 441.6h.1M1367.7 429h.1M1348.6 446h.1M1395.9 443.9h.1M1321.4 442.9h.1M1391.7 438.2h.1M1390.1 441h.1M1368.3 442.9h.1M1426.8 441.2h.1M1424.8 440.6h.1M1409.7 440.3h.1M1420.4 440.2h.1M1347.5 440.6h.1M1395.8 443.6h.1M1404.3 437.7h.1M1430.3 439.6h.1M1395.1 440.9h.1M1362.1 445.7h.1M1393.9 441h.1M1373.5 440.1h.1M1438.1 439h.1M1345.2 445.5h.1M1379.5 441.2h.1M1424.3 440.5h.1M1379.3 440.7h.1M1395.7 439.4h.1M1403.8 440.5h.1M1422 438.4h.1M1409.4 439.3h.1M1394 443.7h.1M1425.9 440.6h.1M1372.3 436.8h.1M1371.3 440.6h.1M1383.7 440h.1M1428.1 438.8h.1M1400.7 440.6h.1M1356.8 443.4h.1M1363.9 437.8h.1M1388.4 439.2h.1M1386.7 434.8h.1M1389.1 445.7h.1M1431.6 440.5h.1M1364.5 440.6h.1M1442.7 438.7h.1M1379.7 442.1h.1M1413 445.2h.1M1376.2 440.7h.1M1424.6 439.4h.1M1418.5 443.2h.1M1360 443.2h.1M1403.5 435.9h.1M1394.2 439.1h.1M1387.6 442.5h.1M1396.5 438.5h.1M1426.1 438.8h.1M1378.3 447.4h.1M1374.4 437.8h.1M1400.9 440.1h.1M1400.3 442.5h.1M1399.8 438.2h.1M1388.1 436.9h.1M1396.4 439.4h.1M1408.4 438.7h.1M1380.9 440.7h.1M1370.9 440.7h.1M1337.9 437.7h.1M1338.4 438.9h.1M1355.3 436.7h.1M1405.3 441.7h.1M1395.9 439.5h.1M1397.2 440.7h.1M1392.3 444.4h.1M1338.5 433.3h.1M1405.9 440.6h.1M1406.7 437.5h.1M1367.2 444.8h.1M1360.1 435.5h.1M1379.8 440.1h.1M1437.8 440.4h.1M1403.7 438.6h.1M1387.7 440h.1M1384.6 445.7h.1M1396 436.8h.1M1410.4 441.1h.1M1372.3 441.9h.1M1371.9 437.7h.1M1357.9 445.2h.1M1387.8 447h.1M1380.4 439.8h.1M1372.3 433.2h.1M1403.1 439.1h.1M1358.7 439.1h.1M1327.2 439.5h.1M1413.9 439.8h.1M1421.8 440.6h.1M1406.3 440.3h.1M1378.8 435.3h.1M1397.4 439.6h.1M1419.5 440.3h.1M1398.6 439.4h.1M1367.5 433.6h.1M1382.2 442h.1M1329.6 440.8h.1M1398.4 443.3h.1M1401.2 445.5h.1M1390.8 441.5h.1M1394.2 444h.1M1372.6 443.1h.1M1407.1 440.1h.1M1418.9 434.7h.1M1377.5 439.2h.1M1406.5 439.1h.1M1403.2 435.9h.1M1384.4 439.7h.1M1427.5 440h.1M1373.3 434.8h.1M1395.7 440.2h.1M1420.5 438.6h.1M1405.3 437.9h.1M1357 441.3h.1M1398.6 437.2h.1M1438.7 439.8h.1M1362.7 440h.1M1408.1 440.7h.1M1431.5 437.8h.1M1383.7 440.9h.1M1402 440.7h.1M1398.6 438.2h.1M1398.3 443.6h.1M1383.5 434.6h.1M1386.1 440.4h.1M1368.1 438.7h.1M1424.9 437.9h.1M1433.5 438.7h.1M1416.5 441.4h.1M1408.2 444.1h.1M1395.7 441.3h.1M1375.1 444.8h.1M1401.6 438.9h.1M1414.4 440.3h.1M1403.2 439.4h.1M1334.7 439.9h.1M1397.5 438h.1M1374.3 444.5h.1M1419 438.9h.1M1414.2 444.6h.1M1394.8 435.7h.1M1403.2 444.7h.1M1387.7 439.5h.1M1331.1 440.3h.1M1378 443h.1M1396.5 441h.1M1413.8 437.4h.1M1373.8 442.6h.1M1360.6 441.1h.1M1387.9 444.7h.1M1418.2 442.3h.1M1396.3 443.7h.1M1388.6 440.9h.1M1419.5 440.5h.1M1417.5 438.4h.1M1427.6 438.6h.1M1412.3 440.7h.1M1407.7 445.1h.1M1361.6 437.5h.1M1427.6 440h.1M1396 440.6h.1M1415.9 439.1h.1M1369.3 440.4h.1M1388.8 433.9h.1M1440.4 438.7h.1M1411.3 439.9h.1M1410.5 438.5h.1M1382.5 443.6h.1M1383 446h.1M1412.9 437.7h.1M1373 443.2h.1M1381.5 442.2h.1M1409.9 434.2h.1M1365.8 438.8h.1M1438.4 439.7h.1M1373 443.5h.1M1373.8 440.7h.1M1418.7 445.3h.1M1421.3 440.7h.1M1420.1 439.9h.1M1421.8 440.9h.1M1402.3 436h.1M1404.5 437.6h.1M1424.4 438.4h.1M1360.5 441.4h.1M1397.5 440.4h.1M1372 437.9h.1M1370.6 437.6h.1M1322.2 441.6h.1M1401.9 437.5h.1M1376.2 438.2h.1M1386.1 441.5h.1M1374.9 438.4h.1M1420.8 439.5h.1M1401.9 439.7h.1M1440.9 436.8h.1M1374.6 432.3h.1M1360.1 438.6h.1M1392.9 440.8h.1M1377.9 441h.1M1438.4 439.4h.1M1404.8 437h.1M1378.8 440.4h.1M1381.4 444.9h.1M1388.1 442.7h.1M1395.7 443.9h.1M1387.2 440.5h.1M1341.6 439.1h.1M1391.2 438.9h.1M1415.4 439.7h.1M1371.8 442h.1M1342.3 439.4h.1M1392.4 440.6h.1M1420.1 440.5h.1M1376 433.2h.1M1363.8 436.4h.1M1424.3 442.2h.1M1389.4 435.2h.1M1362.9 437h.1M1408.4 435.3h.1M1404.4 444.4h.1M1374.2 442.3h.1M1402.2 436.1h.1M1381.8 437.2h.1M1385.1 441.1h.1M1398.8 441.8h.1M1377 438.9h.1M1393.6 438h.1M1379.4 439.9h.1M1357.2 440.2h.1M1395 440.5h.1M1408.1 439.6h.1M1390.6 442.3h.1M1343.7 439h.1M1424.7 438.7h.1M1409.4 440.1h.1M1369.9 438.3h.1M1424 436h.1M1374.2 435.4h.1M1361.2 438.5h.1M1380.2 449.9h.1M1385.2 435.4h.1M1429.2 439.9h.1M1417 440h.1M1333 436h.1M1417.1 437.8h.1M1369.2 447.9h.1M1345.8 439.9h.1M1427.3 438.8h.1M1424.2 439.1h.1M1376.4 434.3h.1M1377.9 437h.1M1391.2 442.6h.1M1389.1 437.4h.1M1396 436.7h.1M1399.4 440.3h.1M1388.7 440h.1M1402.3 430.2h.1M1360.7 440h.1M1440.6 439.7h.1M1354.7 440.9h.1M1410.2 436.7h.1M1386.7 438.3h.1M1401.6 441.8h.1M1376.6 436.5h.1M1358.6 442.2h.1M1385.9 441.7h.1M1417.8 444.5h.1M1349.1 438.1h.1M1404.2 438h.1M1384.8 442.9h.1M1372.8 440.3h.1M1417.5 437.8h.1M1407.3 439.3h.1M1439.3 439.2h.1M1433.9 440.2h.1M1387.4 443.2h.1M1390.7 436.7h.1M1374.3 442.6h.1M1338 439.8h.1M1404.1 442.3h.1M1359.6 437.3h.1M1361.8 437.1h.1M1368.8 438.7h.1M1364.5 435.7h.1M1388 439.5h.1M1361.8 437.6h.1M1388.6 439.3h.1M1392.4 440.6h.1M1427.9 440h.1M1421.8 438.1h.1M1350.2 441.5h.1M1379.4 437.5h.1M1352.4 440.2h.1M1423.2 441.1h.1M1411.6 439.7h.1M1382.6 443.3h.1M1413.8 442h.1M1386.2 442.5h.1M1430.7 435.6h.1M1381.2 443h.1M1397.6 439.5h.1M1372.5 444.9h.1M1399.1 443.8h.1M1433.9 439.3h.1M1429.7 439.6h.1M1410.8 435.7h.1M1375.2 440.8h.1M1413.6 438.3h.1M1418.7 439.7h.1M1416.2 444.5h.1M1404.3 442.3h.1M1383.6 441.9h.1M1402.8 441.4h.1M1404.4 442.2h.1M1392.4 440.2h.1M1399.9 436.7h.1M1327.3 439.5h.1M1337.8 436.4h.1M1420.2 438.5h.1M1407.6 439.4h.1M1342.9 443.7h.1M1377.9 441.7h.1M1390.4 442.5h.1M1400.7 438.2h.1M1397.3 439.3h.1M1382.3 438.7h.1M1389.1 441.8h.1M1403.7 437.3h.1M1402.7 437.8h.1M1382.6 439.2h.1M1420.7 441.6h.1M1371.6 441h.1M1337.5 441.6h.1M1438.7 438.9h.1M1441 441h.1M1364.5 438.4h.1M1389 437.7h.1M1373.9 439.9h.1M1407.9 438.5h.1M1389.5 448h.1M1429.6 439.5h.1M1374.3 439.9h.1M1363.6 438.5h.1M1406.6 437.8h.1M1420.8 443.1h.1M1402.9 442h.1M1397.7 437.5h.1M1344.3 440.1h.1M1408.6 438.9h.1M1393.1 438.8h.1M1365.7 441.9h.1M1426.6 442.2h.1M1344.2 442.9h.1M1383.1 436h.1M1368.5 436.7h.1M1365.2 438.4h.1M1369.7 438.9h.1M1365.5 443.5h.1M1360.1 442h.1M1396.4 439.6h.1M1397.9 437h.1M1364.7 435.8h.1M1370.1 442.1h.1M1407.8 440.1h.1M1397.7 439.6h.1M1438.3 443h.1M1332.6 444.7h.1M1399.9 445.2h.1M1358 443.1h.1M1398 437.8h.1M1405.7 440.2h.1M1351.2 436.8h.1M1382.6 439.1h.1M1414.5 439.6h.1M1380.5 435h.1M1369 440.7h.1M1359.3 442.1h.1M1418.4 438.9h.1M1377.1 441.8h.1M1367.6 441.7h.1M1318.9 440.3h.1M1390.7 438.8h.1M1385.3 442.6h.1M1423.4 441.3h.1M1366.1 443.5h.1M1396.6 440.6h.1M1380.4 441.9h.1M1358.2 439.4h.1M1389.8 440.5h.1M1371.6 444.6h.1M1356.8 437.7h.1M1407 440.3h.1M1380.9 443.3h.1M1360.6 441.5h.1M1405.4 434.5h.1M1394.7 442.4h.1M1393 437.6h.1M1393.5 438.3h.1M1411.2 443.5h.1M1406.1 437.7h.1M1365.7 443.2h.1M1358.1 438h.1M1388.2 441.4h.1M1387 439.2h.1M1351 440h.1M1414.4 444.4h.1M1383.5 440.9h.1M1396.9 440.7h.1M1414.8 438.5h.1M1401.6 445.3h.1M1372.4 439.2h.1M1386.1 438.1h.1M1393.3 442.3h.1M1436.7 441.1h.1M1405.4 440.1h.1M1379.1 439.2h.1M1401.9 445.4h.1M1393.6 444.2h.1M1398.9 441.9h.1M1403.7 439.4h.1M1393.4 437.6h.1M1395.7 441.8h.1M1426.4 439.6h.1M1381.7 439.7h.1M1372.9 439.9h.1M1390.3 441.2h.1M1399.6 438.6h.1M1354.8 442h.1M1394.1 444.4h.1M1428 444.4h.1M1420.9 439.5h.1M1391.2 436.2h.1M1423.1 441.4h.1M1400.4 441.1h.1M1402.9 443.4h.1M1352.1 440.3h.1M1356.6 433.9h.1M1368.5 440.1h.1M1395.5 438.4h.1M1418.5 440.3h.1M1361.7 434.2h.1M1401.3 442.3h.1M1335.1 441.4h.1M1339.3 436.4h.1M1360.6 439.6h.1M1378.3 442h.1M1412.2 442.7h.1M1398.7 439.3h.1M1424.6 440.2h.1M1382.1 446.1h.1M1424.3 441.6h.1M1404.3 437.4h.1M1384.7 441.4h.1M1428 440.1h.1M1367.9 441.6h.1M1436.8 441h.1M1371.2 439.6h.1M1376 440.6h.1M1395.9 438.7h.1M1323.7 435.9h.1M1412.1 435.7h.1M1429.4 440.6h.1M1412.6 436.4h.1M1409.8 444.5h.1M1357 434.9h.1M1413.7 438.9h.1M1374.1 438.8h.1M1396.4 438.8h.1M1389.1 440.4h.1M1366.2 441.5h.1M1435.8 438.2h.1M1442.7 440.6h.1M1388.3 444.7h.1M1390.2 441.4h.1M1420.1 442.5h.1M1413.3 440.8h.1M1396.2 443.7h.1M1427.5 438.6h.1M1389.9 438.3h.1M1414.1 443.3h.1M1402.4 436.5h.1M1416.7 440.9h.1M1429.3 437.1h.1M1442.8 438.1h.1M1364.1 440.6h.1M1399.8 445.3h.1M1391.3 441h.1M1399.9 444.8h.1M1376.8 440.6h.1M1421.1 437.5h.1M1420.3 440.6h.1M1401.6 443.1h.1M1333.7 440.6h.1M1366.9 440h.1M1382.7 441.5h.1M1407.5 436.7h.1M1406.7 436.7h.1M1418.8 440.8h.1M1379.2 440.9h.1M1393.8 439.9h.1M1348.9 436.5h.1M1362.1 438.3h.1M1429.2 443.3h.1M1431 438.7h.1M1424.4 441.8h.1M1418.6 439.7h.1M1427 441.9h.1M1415.2 440.9h.1M1389.6 439.2h.1M1407.5 440.8h.1M1416.5 433.7h.1M1388.8 440.7h.1M1388 441.3h.1M1372.1 443h.1M1390 436.5h.1M1340.1 442.1h.1M1381 439.6h.1M1422 438.7h.1M1366.3 435.3h.1M1382.6 440h.1M1371.5 448.3h.1M1406.4 435.9h.1M1408.7 438.2h.1M1423.7 438.6h.1M1403.1 434h.1M1377.5 438.9h.1M1409.7 437.1h.1M1365.4 439.5h.1M1408.2 434.2h.1M1422.6 436.9h.1M1404.5 444.1h.1M1384.3 441.1h.1M1407.1 437.3h.1M1439.7 440.2h.1M1354.6 439.9h.1M1419.6 439.5h.1M1413.9 440.7h.1M1369.2 439.4h.1M1356.2 435h.1M1401.2 442.1h.1M1421.2 446.4h.1M1335.1 438.2h.1M1420.4 444.6h.1M1370.2 438.8h.1M1393.1 437.6h.1M1431.8 440.8h.1M1380.9 437.9h.1M1372.9 439.8h.1M1419.8 442.4h.1M1400.5 442.3h.1M1385.8 445.5h.1M1401.3 434.4h.1M1394.8 440.7h.1M1382.3 446.3h.1M1405.2 442.5h.1M1403.2 440.3h.1M1398.5 436.5h.1M1389.2 438.3h.1M1404.5 438.7h.1M1396.2 441h.1M1385.6 440.3h.1M1388.1 441.2h.1M1427.1 440.2h.1M1391.8 437.3h.1M1385.2 436h.1M1387.8 440h.1M1444 441.5h.1M1384 445.3h.1M1381.8 437.8h.1M1364.3 446.7h.1M1370.2 440.1h.1M1369.5 439.6h.1M1355.2 439.5h.1M1397 431.4h.1M1388.1 443.9h.1M1425.4 442.7h.1M1381.4 439.7h.1M1360.3 436.1h.1M1383.5 443.4h.1M1407.2 441.9h.1M1403.9 439.7h.1M1409.9 440h.1M1411.5 442.7h.1M1381.7 438.8h.1M1409.5 438.5h.1M1370.8 440.6h.1M1435.2 440.8h.1M1406.6 435.9h.1M1401 436.7h.1M1381 439.5h.1M1414 437.4h.1M1421 440.7h.1M1379.2 444.6h.1M1398.9 437.3h.1M1380.6 439.7h.1M1430.1 438.3h.1M1383.7 444.8h.1M1351.6 442.1h.1M1404.5 439.7h.1M1370.6 436.6h.1M1407.7 440.1h.1M1364.2 440.4h.1M1441.4 439.3h.1M1414.4 437.3h.1M1337 440.2h.1M1399.1 443.8h.1M1415 438.7h.1M1366.9 443.1h.1M1422.4 439.8h.1M1398.5 438.7h.1M1394.5 439h.1M1395.5 439.7h.1M1423.4 439.6h.1M1403.5 442.7h.1M1386.1 445.5h.1M1364.5 439.5h.1M1390.5 443.3h.1M1393.5 438.6h.1M1358.1 439.5h.1M1414.6 440h.1M1357.2 438.3h.1M1393.7 436.8h.1M1396.8 444h.1M1349.4 429.2h.1M1403.9 441.6h.1M1410.4 440h.1M1382.7 437.6h.1M1410.1 442h.1M1367.4 439h.1M1381.1 440.4h.1M1412.3 439.1h.1M1386.8 437.6h.1M1369 439.8h.1M1392.2 440.5h.1M1340.4 439.4h.1M1365.5 433.4h.1M1422 439.9h.1M1381.3 440.4h.1M1387.3 446.8h.1M1396.5 436.7h.1M1427.3 435.6h.1M1363.8 436.4h.1M1439.3 439.9h.1M1435.9 442.3h.1M1405.1 438h.1M1404.3 434.4h.1M1362.9 441.1h.1M1344.2 438.6h.1M1370.9 446.7h.1M1420.3 444h.1M1411.6 437.7h.1M1400.5 440.6h.1M1387.4 434.8h.1M1424.2 436.5h.1M1397.2 441.4h.1M1354.8 439.1h.1M1398.4 441.8h.1M1373 434.8h.1M1372.7 441.3h.1M1341.7 440.6h.1M1346.8 437.9h.1M1359.6 437.4h.1M1410.4 441.2h.1M1438.7 442h.1M1378.3 441.6h.1M1409.2 442.1h.1M1350.1 437.1h.1M1362.6 441.4h.1M1400.4 440h.1M1392.7 443.8h.1M1376.5 441.9h.1M1346.4 438.2h.1M1378.9 438.6h.1M1355.6 443.6h.1M1343.3 442.2h.1M1381.4 441.7h.1M1392.7 445.2h.1M1388.9 442.3h.1M1360.9 440.9h.1M1427.6 439.6h.1M1415.5 439.9h.1M1385.7 442.4h.1M1353.9 438.6h.1M1374.8 441.5h.1M1433.2 442.8h.1M1367 442.5h.1M1357.7 442.1h.1M1369.4 442.6h.1M1392.9 441.6h.1M1418.3 441h.1M1394.5 442.2h.1M1365.1 436h.1M1401.5 438h.1M1390.8 447.2h.1M1384 436h.1M1434.3 437.3h.1M1324.2 438.1h.1M1421.1 439.5h.1M1392.6 439.1h.1M1385 437.2h.1M1389.7 437.8h.1M1428.8 440.7h.1M1365.1 442.1h.1M1385.9 443.1h.1M1337.1 438.9h.1M1424.9 441.7h.1M1376.9 438.2h.1M1413.3 442h.1M1416.2 438.1h.1M1375.3 440h.1M1398.4 441.6h.1M1360.9 437h.1M1403.3 438.1h.1M1374.6 437.9h.1M1358 443.3h.1M1390.5 437.3h.1M1407.9 438.5h.1M1369.5 442.2h.1M1380.6 438.1h.1M1380.6 441h.1M1434.4 440.9h.1M1429.4 436.7h.1M1403.3 439.4h.1M1353.7 436.5h.1M1404.1 441.4h.1M1390.8 444h.1M1379.9 443h.1M1399.5 438.7h.1M1340.9 441.7h.1M1345.8 439.1h.1M1353.1 434.3h.1M1426.3 441.2h.1M1407.1 439.2h.1M1407.9 441.1h.1M1370.7 439h.1M1414.1 439.6h.1M1386.6 443.7h.1M1346.1 436h.1M1382.7 441.8h.1M1373.3 441.8h.1M1440.6 437.1h.1M1417.3 439.9h.1M1411.9 436.3h.1M1395.1 443.4h.1M1388.2 438.3h.1M1371.7 437.9h.1M1399.7 437.5h.1M1376.5 444.1h.1M1398.2 435.9h.1M1411.7 439.5h.1M1429.5 443.4h.1M1365.6 440.7h.1M1402.1 442.3h.1M1376.8 439.9h.1M1363.5 442.6h.1M1437.2 437.4h.1M1394.6 442.7h.1M1347 437.3h.1M1397.6 443.6h.1M1363.7 442.3h.1M1412.4 442h.1M1427.2 442.4h.1M1366.8 432.9h.1M1398.6 435h.1M1393 437.5h.1M1386.5 445h.1M1399.1 436.8h.1M1326.1 431.9h.1M1400.7 440.8h.1M1354.5 442.3h.1M1429.6 440.6h.1M1429.6 441.4h.1M1406.1 439.1h.1M1387 442.1h.1M1338.9 437.2h.1M1408.4 437.2h.1M1437.1 439.6h.1M1377.4 438.5h.1M1392.2 441.2h.1M1383.8 439.2h.1M1437.6 440.1h.1M1400.3 442.5h.1M1381.2 438.3h.1M1405.7 437.8h.1M1428.1 441.7h.1M1402.2 440.7h.1M1409.4 440.1h.1M1338 444.3h.1M1381.9 437.2h.1M1423.2 437.3h.1M1394.6 452.8h.1M1403.8 440.2h.1M1351.5 443.4h.1M1380.8 436.9h.1M1416 441.7h.1M1385.1 439.1h.1M1380.6 436.5h.1M1392.1 442.1h.1M1351.3 436.3h.1M1386.8 444.8h.1M1383.5 443h.1M1412.3 441.8h.1M1375.4 437.8h.1M1404.8 441.5h.1M1391.9 437.7h.1M1330.8 438.6h.1M1429.6 441.6h.1M1428.1 443.9h.1M1382 442.9h.1M1350.2 439.1h.1M1367.5 440.4h.1M1378.9 442.7h.1M1395.6 441.2h.1M1392.8 440.2h.1M1393.5 438.7h.1M1349.7 434h.1M1390.1 440.3h.1M1400.5 440.4h.1M1402.6 442.9h.1M1372.4 444h.1M1400.6 442.9h.1M1405.9 442.2h.1M1399.8 440.1h.1M1339 445.1h.1M1396.5 440.2h.1M1430.9 439.7h.1M1372.1 442.7h.1M1399.6 442.2h.1M1373.9 442.9h.1M1348.6 439.9h.1M1389.2 444.4h.1M1436.5 439h.1M1366.6 442h.1M1378.3 442.1h.1M1420.1 442.5h.1M1410.9 440.2h.1M1396.7 442.4h.1M1382.3 440.5h.1M1360 441.8h.1M1382.3 437.8h.1M1393.8 443.5h.1M1420.8 440.4h.1M1403 438.1h.1M1426.3 440.7h.1M1380.3 442.2h.1M1415.9 443.9h.1M1379.7 442.4h.1M1408 438.8h.1M1401.8 441.1h.1M1367.4 440.2h.1M1416.4 439h.1M1345.1 435.2h.1M1413.2 437.5h.1M1384.4 443.1h.1M1429.2 437.1h.1M1395.1 433.6h.1M1380.9 440.6h.1M1422.8 437.3h.1M1387.1 444.4h.1M1409.3 441.9h.1M1379.5 437.6h.1M1375.9 442.9h.1M1410.4 443.9h.1M1395.3 437.2h.1M1395.5 440.9h.1M1367 438.3h.1M1386.5 437.1h.1M1417.3 440.8h.1M1415.9 439h.1M1374.3 441.6h.1M1415.7 445.3h.1M1396.6 444.7h.1M1380.5 439.4h.1M1364.3 438.6h.1M1341.6 439.2h.1M1413.7 441.8h.1M1364.9 440.4h.1M1378.5 442.1h.1M1384.1 441.9h.1M1434.8 442h.1M1365.8 444.3h.1M1352.2 437.7h.1M1389.9 439.9h.1M1408.2 443.8h.1M1390.8 437.3h.1M1380 437.9h.1M1410.1 441.3h.1M1372.2 439.5h.1M1389.1 436.7h.1M1433.2 438.2h.1M1381 440.3h.1M1369.2 442.8h.1M1411.9 438.8h.1M1361.1 440h.1M1367.7 438.1h.1M1413.5 441.3h.1M1375.6 446.4h.1M1401.9 438.1h.1M1353.7 446.1h.1M1375.7 434.6h.1M1435.9 442.4h.1M1425.2 440.9h.1M1393.8 440.3h.1M1427.1 444.8h.1M1380.1 440.8h.1M1432.8 441.6h.1M1389.7 441.3h.1M1374.1 437h.1M1359.1 441.3h.1M1383.5 439.7h.1M1399.3 433.9h.1M1367.8 443.7h.1M1371.4 444.5h.1M1439.1 442.2h.1M1377.5 434.7h.1M1389.8 439.6h.1M1413.3 440.4h.1M1367.7 443.5h.1M1352.2 443.6h.1M1373.7 440.4h.1M1431.2 442.1h.1M1355.6 438.1h.1M1417.3 442.2h.1M1402 440.2h.1M1420.3 439.7h.1M1375.6 435.3h.1M1385.1 441.5h.1M1440 442.6h.1M1344.5 438.7h.1M1409 437h.1M1421.2 440.8h.1M1388.7 439.4h.1M1372.3 441h.1M1409.9 440.1h.1M1387.6 434h.1M1387.8 441.7h.1M1378.3 438.5h.1M1341.1 439.5h.1M1428.1 440.4h.1M1385.9 438.1h.1M1402.1 440.9h.1M1400.1 440.6h.1M1419.2 443.3h.1M1419.2 443.8h.1M1355.7 438h.1M1409.4 439.6h.1M1353.4 440.6h.1M1373.4 442.8h.1M1389.5 440.8h.1M1391.5 446.9h.1M1423.4 443h.1M1354.5 438.3h.1M1404.2 440.7h.1M1383.6 440.5h.1M1373.2 437.6h.1M1379.6 437.2h.1M1407.3 435.8h.1M1421.5 439.2h.1M1373.3 442.3h.1M1427.1 442.7h.1M1394 442.9h.1M1443 437.3h.1M1378.4 441.2h.1M1370.6 442.4h.1M1377.2 441.8h.1M1410.5 441.6h.1M1407.5 439.9h.1M1367.9 440h.1M1386.6 442.9h.1M1379.8 436.2h.1M1430.8 442.4h.1M1430.1 441.9h.1M1370.9 440.6h.1M1407.2 439.1h.1M1384.5 441.7h.1M1401.2 443.3h.1M1389.4 440.1h.1M1380.9 439.3h.1M1387.9 442.6h.1M1366.2 441.1h.1M1416.3 440.8h.1M1388 439.9h.1M1391.7 438.7h.1M1409.8 441.4h.1M1410.7 436.2h.1M1375.5 430.6h.1M1359.9 442.8h.1M1394.8 446.6h.1M1437.6 438.9h.1M1361.9 440.4h.1M1382.2 442.3h.1M1375.8 444.2h.1M1341.8 441.8h.1M1321.7 439.2h.1M1414.1 439.3h.1M1406.8 442.9h.1M1423.5 440h.1M1379.5 441.3h.1M1374.3 436.5h.1M1342.2 439.2h.1M1420 438.3h.1M1376.1 438.5h.1M1393.2 441.5h.1M1364.6 439.5h.1M1393.8 438.8h.1M1392.8 439.7h.1M1369.9 435.4h.1M1388.7 439.9h.1M1385.2 439.7h.1M1407.1 436.9h.1M1419 438.2h.1M1408.4 442.7h.1M1371.2 442.7h.1M1378.2 441.6h.1M1386.2 437.9h.1M1427.9 440.3h.1M1391.7 438.3h.1M1397.6 436.7h.1M1359.4 441.2h.1M1389 441.7h.1M1403.6 440.4h.1M1433.1 438.4h.1M1433.4 442.4h.1M1396.7 447.1h.1M1399.6 438.8h.1M1361.3 442.7h.1M1417.1 442.9h.1M1387 437.8h.1M1409.9 441.1h.1M1370.2 439.5h.1M1428.1 441.8h.1M1381.7 436.5h.1M1383.4 442.2h.1M1341 440.7h.1M1389.1 441.7h.1M1383.9 444.3h.1M1366 441.3h.1M1366.3 442.3h.1M1392.4 435.7h.1M1432.6 439.7h.1M1415.4 438.2h.1M1426.6 437.3h.1M1328.6 439.6h.1M1383.6 437.6h.1M1394.5 441.7h.1M1357.3 440.2h.1M1368.5 439.7h.1M1397.2 442.8h.1M1406.8 439.1h.1M1434.9 441.4h.1M1394 440.7h.1M1404.1 440.6h.1M1415.2 439.9h.1M1364.9 441.5h.1M1401.9 438.2h.1M1387.5 441.3h.1M1390.1 442.1h.1M1393.1 440.4h.1M1396.4 437.4h.1M1395.6 440h.1M1373.7 440.4h.1M1376.7 435h.1M1395.2 443.3h.1M1376.8 447.2h.1M1406.6 442.6h.1M1378.7 444.4h.1M1381.9 443.6h.1M1431.7 442.2h.1M1352.7 434.7h.1M1412.4 439.8h.1M1385.1 445.7h.1M1372.3 438.2h.1M1352.4 436h.1M1369.7 435.6h.1M1386.9 437.8h.1M1415.3 439.9h.1M1339.2 439.7h.1M1408.1 440h.1M1409.7 438.5h.1M1400.6 441.3h.1M1399.1 441.3h.1M1386.2 438.4h.1M1394.3 439.8h.1M1394 437.3h.1M1375.7 439.5h.1M1384.2 443.1h.1M1370 435.8h.1M1380.3 440.7h.1M1393.5 438h.1M1403.4 439.7h.1M1390.9 444.6h.1M1404.7 444h.1M1361.6 436.8h.1M1372.8 443.3h.1M1389.6 438.7h.1M1398.7 445.1h.1M1370.9 437.2h.1M1393.7 440.9h.1M1392.4 438.6h.1M1439.7 438.5h.1M1372.8 439h.1M1393.3 438.8h.1M1387.9 437.8h.1M1414.9 437h.1M1401.6 440.8h.1M1398.5 442h.1M1376.8 442.5h.1M1353.9 443h.1M1385.7 441.1h.1M1406.7 436.7h.1M1357 438.2h.1M1396.7 438.2h.1M1384.2 443h.1M1425.6 440h.1M1344.9 440.1h.1M1372.3 440.7h.1M1392.7 441.8h.1M1389.2 445.3h.1M1389 436.6h.1M1425.6 440.6h.1M1398.9 441.1h.1M1433.1 442h.1M1388.9 440.8h.1M1349.1 442.4h.1M1424.3 440h.1M1403.5 444.9h.1M1403.3 437.5h.1M1416.3 441.3h.1M1402.4 447.8h.1M1358.3 439.9h.1M1364.7 440.9h.1M1355.8 441.1h.1M1340.2 438.6h.1M1382.7 437.7h.1M1397.6 440h.1M1358.3 442.5h.1M1389 445h.1M1439.5 441.4h.1M1336.2 436.2h.1M1384.1 437.4h.1M1358.4 438h.1M1401.9 442h.1M1418.3 445.3h.1M1417.1 439.9h.1M1403.6 439.4h.1M1379.9 438.2h.1M1375.3 441h.1M1399.6 439.6h.1M1370.8 440.7h.1M1382.2 440.6h.1M1359.4 442.1h.1M1414.9 440h.1M1438.6 438.6h.1M1391.1 439h.1M1391.8 440.7h.1M1383.7 443.4h.1M1373.3 437.5h.1M1374.8 443h.1M1407.7 440.6h.1M1404.7 440.8h.1M1401.7 440.2h.1M1367 437.5h.1M1426 436.4h.1M1404.3 437.4h.1M1411 440.8h.1M1364.4 438.2h.1M1408.8 440.2h.1M1413.6 440.6h.1M1394.7 439.7h.1M1325.6 440.2h.1M1380.3 435.1h.1M1408.2 445.4h.1M1354.3 440.4h.1M1362.4 440h.1M1393.3 437.2h.1M1326.3 438.7h.1M1417.5 441h.1M1385.7 441.3h.1M1375.9 436h.1M1349.1 441.8h.1M1360.9 442.2h.1M1382.1 439h.1M1381.9 442h.1M1390.8 439h.1M1372.6 444.2h.1M1392.9 435.8h.1M1414.8 440.6h.1M1435.5 438.4h.1M1418.3 439.9h.1M1379.6 442.3h.1M1365.6 440.4h.1M1405.2 442.5h.1M1380.6 439.4h.1M1412.3 442h.1M1336.6 449.4h.1M1386.2 437.2h.1M1382.8 443.5h.1M1383.3 438.9h.1M1399.8 441.4h.1M1367.5 444.5h.1M1387.1 436.5h.1M1384.5 438.9h.1M1379.3 440.3h.1M1370.3 442.7h.1M1348.1 440.9h.1M1339.5 438.6h.1M1360.8 432.2h.1M1372 439.3h.1M1409.2 438.8h.1M1421 439.9h.1M1406.8 439.6h.1M1356.8 446.3h.1M1384.7 441.6h.1M1398.8 440.2h.1M1351.8 442h.1M1420.6 437.8h.1M1342.7 436.5h.1M1406.3 439.1h.1M1375.9 440.1h.1M1377.4 441.4h.1M1411.7 439.4h.1M1371.8 438.6h.1M1373.2 442.3h.1M1376.7 439h.1M1404 439.1h.1M1400.6 440.8h.1M1371.8 440.5h.1M1419.9 439.9h.1M1383 441.4h.1M1424 439.5h.1M1409 439.1h.1M1376.6 435.4h.1M1394 435.1h.1M1381.3 440.2h.1M1368.5 442h.1M1395.6 436.5h.1M1396.9 439.4h.1M1386.2 442.6h.1M1402 439.5h.1M1380.4 442.2h.1M1392.2 441h.1M1398.4 442.6h.1M1350.6 447.2h.1M1437 438.2h.1M1406.3 440.5h.1M1347.3 441.1h.1M1371.6 441h.1M1376.6 445.7h.1M1408 437.6h.1M1395 440.6h.1M1354.9 442.2h.1M1403.9 437.5h.1M1403.9 438.5h.1M1365.7 435.4h.1M1363 437.5h.1M1353.1 442.9h.1M1399.6 440.3h.1M1397.9 442.9h.1M1345.5 441.7h.1M1364.8 439.7h.1M1395.6 442.8h.1M1363.5 442.9h.1M1368 439.4h.1M1395.4 436.1h.1M1375.8 445.4h.1M1369.6 443.8h.1M1395.9 439.7h.1M1353 440.7h.1M1402.2 435.9h.1M1391.3 443.6h.1M1398.4 438.8h.1M1408.6 444.7h.1M1424.8 437.9h.1M1411.2 438.6h.1M1379.9 443.3h.1M1401.6 443.7h.1M1429.1 438.5h.1M1395.8 437.2h.1M1377.4 435.4h.1M1388.1 439.1h.1M1389.9 441.3h.1M1380.9 437.3h.1M1394.2 439h.1M1349 438.8h.1M1411.2 439.7h.1M1414.9 440.2h.1M1377.2 441.3h.1M1336.3 441.7h.1M1382.3 443h.1M1372.2 442.2h.1M1418.3 439h.1M1401 436.7h.1M1380.9 444.6h.1M1399.9 444.4h.1M1408.6 441.4h.1M1402.5 439.7h.1M1401.8 439.4h.1M1356.2 440.8h.1M1340.7 438.1h.1M1404 440.8h.1M1391.7 435.1h.1M1368.3 442h.1M1385.7 439.7h.1M1413.9 435.2h.1M1387.7 441h.1M1415.6 435.2h.1M1393.6 440.1h.1M1378.8 438.2h.1M1370.7 438.8h.1M1371.5 435.3h.1M1374.3 442.4h.1M1429 443.2h.1M1385.6 439.5h.1M1388.4 439.9h.1M1390.8 438.3h.1M1417.5 439.7h.1M1403.7 441.1h.1M1333 441.3h.1M1414.7 436.7h.1M1400.5 440h.1M1406.5 438.4h.1M1369.6 438.5h.1M1364.7 441.2h.1M1421.3 451.1h.1M1422.8 438.5h.1M1392.4 445.3h.1M1343.7 441.1h.1M1419.3 443h.1M1410.5 441.1h.1M1392.4 438.8h.1M1350.4 439.9h.1M1390.7 439.3h.1M1367.9 442.9h.1M1405.6 438.1h.1M1399.7 441.2h.1M1357.7 442.2h.1M1431.4 439.8h.1M1443.4 442.2h.1M1378.2 441.7h.1M1381.8 438.4h.1M1371.5 439.3h.1M1398.8 439.8h.1M1374 443.2h.1M1417.3 441.2h.1M1372.7 437.5h.1M1380.8 439.7h.1M1360.1 439h.1M1393.2 440.3h.1M1402.4 442h.1M1335 438.4h.1M1396.1 438.4h.1M1368.2 440.1h.1M1341.7 442.2h.1M1364.2 438.5h.1M1394.7 436h.1M1375.2 439.7h.1M1360.3 438.3h.1M1365.2 438.8h.1M1413 441.1h.1M1398.5 437.2h.1M1372.6 442.8h.1M1407.1 442.7h.1M1375 436.8h.1M1390.6 438.8h.1M1362 446.3h.1M1372 437.9h.1M1388 442h.1M1414.5 444.8h.1M1361.5 444.2h.1M1357.1 441.3h.1M1383.1 439.3h.1M1407.1 439.6h.1M1425 442h.1M1390.4 434.9h.1M1433.8 441.4h.1M1420.7 437.4h.1M1385 441.7h.1M1407.3 443.1h.1M1364.1 441.5h.1M1391.8 441.1h.1M1378.9 445h.1M1359.3 438.8h.1M1376.4 440.5h.1M1341.8 444.2h.1M1365.7 441.3h.1M1343.1 441.8h.1M1386.4 437.2h.1M1383.6 439.6h.1M1390.4 439.9h.1M1381.6 439.8h.1M1400.4 439.2h.1M1371.3 437.3h.1M1418.9 440.7h.1M1407.7 435.8h.1M1409.6 442.4h.1M1332.4 442.1h.1M1366.7 436.9h.1M1398.8 438.5h.1M1348.7 441.2h.1M1400.5 443.5h.1M1390.5 442.3h.1M1397 441.2h.1M1424.3 443.3h.1M1414.4 439.8h.1M1338.3 441h.1M1381 440.4h.1M1430.1 440.6h.1M1377 437.3h.1M1394.5 441.6h.1M1420.9 441.7h.1M1402.7 439.6h.1M1369.5 436.9h.1M1417.9 436h.1M1381.6 437.7h.1M1385.6 441.9h.1M1406.2 443.1h.1M1424.1 440h.1M1408.9 439.6h.1M1431.7 442.4h.1M1414.1 441.9h.1M1361.7 440.2h.1M1438.6 440.6h.1M1382.6 441h.1M1435.3 441h.1M1412.9 441.6h.1M1400.5 441.7h.1M1369.7 438.4h.1M1367.2 444.1h.1M1418.8 441.8h.1M1384 445.4h.1M1438.8 438.7h.1M1410.1 434.9h.1M1390.3 444.1h.1M1342.5 444.8h.1M1386.7 441h.1M1396.7 437.7h.1M1438.5 440.8h.1M1383.1 434.3h.1M1438.4 441.1h.1M1414.2 440.8h.1M1366.5 439.8h.1M1401.9 438.7h.1M1389.8 439.4h.1M1394.8 443.1h.1M1376.5 439.9h.1M1383.6 438h.1M1374.3 437.2h.1M1380.3 436.7h.1M1367.2 441h.1M1401.4 435h.1M1424.1 439.8h.1M1385.3 440.7h.1M1403.6 441.2h.1M1407.9 438.2h.1M1411.2 441.9h.1M1420 439h.1M1356.8 437.4h.1M1331.2 444.3h.1M1360.3 445.1h.1M1427.1 441.5h.1M1368.8 438.6h.1M1354.5 439.3h.1M1372.9 438.4h.1M1379.4 439h.1M1412.3 441.9h.1M1426.2 439.2h.1M1397.4 437.8h.1M1398.2 437.7h.1M1377.7 442.5h.1M1431.4 438.3h.1M1416.4 438.9h.1M1413.9 438.6h.1M1396.6 440.9h.1M1440 441.6h.1M1372.7 443.6h.1M1397.1 442.6h.1M1404.2 437.8h.1M1418.8 437.7h.1M1395.3 442.9h.1M1369.1 441.2h.1M1391.8 440.6h.1M1414.5 440.4h.1M1358.2 442.1h.1M1369.5 441.7h.1M1387.8 439.6h.1M1400.8 441.5h.1M1327.9 443.9h.1M1398.2 444.5h.1M1342.7 441.4h.1M1388.1 436.6h.1M1347.4 439.5h.1M1400.9 439.3h.1M1434.2 440.6h.1M1378.9 437.8h.1M1372.7 442.3h.1M1368.7 436.4h.1M1367.3 438.5h.1M1437 440.8h.1M1364.7 440.4h.1M1381.7 441.8h.1M1389.4 429.7h.1M1419.9 436.7h.1M1392.1 440.1h.1M1385.6 436.3h.1M1402 439.9h.1M1359 440.2h.1M1342 442.5h.1M1379 437.1h.1M1350.6 442.6h.1M1362.3 444.4h.1M1344 444.1h.1M1426.9 439.1h.1M1384.2 439.8h.1M1395.5 440.4h.1M1359.2 441.3h.1M1405.8 440.3h.1M1429.2 437.9h.1M1368.9 433.3h.1M1363.9 438.7h.1M1349.3 440.5h.1M1355 439.8h.1M1361.4 442h.1M1372.5 437h.1M1427.5 438.9h.1M1384.8 433.5h.1M1433.7 438.7h.1M1415.9 440.4h.1M1390.9 443h.1M1391.5 441.8h.1M1419.8 440.9h.1M1399.4 441.3h.1M1410.5 441h.1M1417.9 440.7h.1M1331.5 440.5h.1M1396.1 437.6h.1M1406.2 439h.1M1422.2 439.4h.1M1392.6 440.8h.1M1395.2 441.2h.1M1432 440.6h.1M1396.3 444h.1M1347.4 443.6h.1M1363.6 442.4h.1M1356.7 439.2h.1M1382.7 441.4h.1M1358.3 437h.1M1383.7 442.2h.1M1384.6 445.2h.1M1399.9 438.4h.1M1399.1 441.7h.1M1357.9 438.1h.1M1374.8 439.3h.1M1385.2 440.9h.1M1409.4 443.2h.1M1377.5 445h.1M1374.7 444.5h.1M1370.8 441.3h.1M1384.5 436.5h.1M1406.4 439.2h.1M1382.8 439.8h.1M1368.9 441.5h.1M1402.4 438.8h.1M1407.3 441.5h.1M1363.5 440.3h.1M1393.4 437.6h.1M1355.7 436h.1M1384 440.4h.1M1414.4 437.4h.1M1367.7 434h.1M1404 439.1h.1M1392.2 438.2h.1M1405.3 440.4h.1M1389.5 437.2h.1M1426.1 441.6h.1M1397.9 435.9h.1M1389.9 431.1h.1M1348.6 440.3h.1M1404.3 436.4h.1M1399 439.9h.1M1414.4 442h.1M1403.7 433.9h.1M1416.1 438.8h.1M1390.6 437.2h.1M1347.4 441.8h.1M1422.3 441h.1M1409.9 445.6h.1M1405.8 441.6h.1M1365.2 440.7h.1M1403.2 440.3h.1M1422.8 440.3h.1M1354.8 444.8h.1M1400 440.2h.1M1418 441.9h.1M1374.3 437.7h.1M1367.6 438.2h.1M1379.3 435.9h.1M1388.9 440.6h.1M1408.9 440.6h.1M1350.3 437.4h.1M1422.4 439.3h.1M1417.7 441.5h.1M1380.9 441.3h.1M1414.4 439.4h.1M1377.8 439.5h.1M1329.5 439.5h.1M1404.3 439.6h.1M1406.6 441.9h.1M1399.6 441.6h.1M1432.1 439.8h.1M1377.4 437.9h.1M1391.6 442.6h.1M1413.2 441.7h.1M1425.2 443.2h.1M1424.3 441.1h.1M1398.8 437.3h.1M1398.1 439.2h.1M1432.9 438.9h.1M1375.2 441.7h.1M1439.4 439.2h.1M1443.1 438.3h.1M1439.9 436.8h.1M1372.8 438.2h.1M1406.7 437.4h.1M1399 442.1h.1M1435.1 439.9h.1M1368.6 436h.1M1406.6 435.5h.1M1351.4 440.6h.1M1396.1 440.6h.1M1399.9 433.7h.1M1377.9 438.9h.1M1419.2 441h.1M1338.9 437.2h.1M1405.1 442h.1M1425.9 440h.1M1384.6 441.3h.1M1390.4 439.9h.1M1380.1 444.3h.1M1373.6 439.5h.1M1393.4 442.5h.1M1377.1 434.8h.1M1419.6 442.6h.1M1360.9 440.7h.1M1402.1 437.2h.1M1345.3 441.4h.1M1395.8 445h.1M1427.7 439.7h.1M1396.1 442.2h.1M1403.7 434.8h.1M1356.5 438.2h.1M1411.6 442.1h.1M1388.9 437h.1M1388.1 443.1h.1M1409.7 436.5h.1M1376.4 443.3h.1M1406.7 440.1h.1M1382.3 442.5h.1M1435.6 439.8h.1M1327.1 440.7h.1M1399.4 440.6h.1M1355.4 445.1h.1M1355.7 440.3h.1M1391.1 444.5h.1M1431.8 441.3h.1M1355.3 441.2h.1M1399.3 438.9h.1M1394.3 440.7h.1M1380.5 438.8h.1M1366.3 442.5h.1M1341.5 437.7h.1M1353 445.6h.1M1408.1 445.1h.1M1327.3 435.7h.1M1379.8 438.7h.1M1388.8 440.1h.1M1398.3 436.5h.1M1423.3 439.6h.1M1337.3 438.9h.1M1358.1 438.3h.1M1375.8 451.2h.1M1402.9 432.1h.1M1375.5 440.6h.1M1400 443.5h.1M1434.2 439.9h.1M1377.7 438.1h.1M1370.4 444.7h.1M1399.3 437.7h.1M1363.1 438.4h.1M1344.5 441.5h.1M1360.1 439.1h.1M1433.5 444.1h.1M1382.1 439h.1M1427.6 440.1h.1M1404 437.9h.1M1405.1 443.3h.1M1393.8 434.5h.1M1369.2 444.6h.1M1392.1 439h.1M1410.5 439.6h.1M1369 435.6h.1M1401.5 442.8h.1M1429.4 439.1h.1M1351.6 443h.1M1326 443h.1M1353.3 438.5h.1M1346.3 436.7h.1M1357.3 439.4h.1M1414.3 440.8h.1M1395.9 437.6h.1M1400.9 441.5h.1M1416.3 436.7h.1M1337.9 443h.1M1385.8 435.6h.1M1366.7 438.8h.1M1369.4 437.4h.1M1352.6 441.3h.1M1377.5 440.1h.1M1349.9 439.5h.1M1409.3 435.6h.1M1431.3 438.1h.1M1421.2 439.4h.1M1416 440.4h.1M1404.8 444.2h.1M1373.6 437.4h.1M1384.2 441.2h.1M1372.8 440.3h.1M1408 443.9h.1M1410.3 440.7h.1M1390.8 442h.1M1356.8 441h.1M1418.8 445h.1M1361.3 443h.1M1420.9 440.3h.1M1398.9 440.4h.1M1407.2 443.8h.1M1435.1 438.7h.1M1382.9 443.6h.1M1372.7 443.8h.1M1410.5 440.5h.1M1371.6 438.3h.1M1392.4 434.7h.1M1398.9 441.5h.1M1392.3 438.5h.1M1414.8 436.3h.1M1348 440.2h.1M1390.9 443.6h.1M1354.3 435h.1M1390.3 445.6h.1M1406.3 438.7h.1M1411 439.3h.1M1442.8 442.4h.1M1379.6 441.8h.1M1387.8 445.5h.1M1418.8 435.7h.1M1374.2 437.2h.1M1397.5 439.6h.1M1386.5 437.8h.1M1419.8 442h.1M1393.4 440.5h.1M1411.3 440.3h.1M1424.5 437.2h.1M1380.3 437.1h.1M1373.7 441.4h.1M1411.9 438.7h.1M1404.6 437.2h.1M1383.5 440.5h.1M1383.7 444.6h.1M1397 443.6h.1M1389.1 436.6h.1M1329.1 441.8h.1M1397.8 442.6h.1M1375.4 439.9h.1M1418 438.5h.1M1370.8 437.3h.1M1365.6 441.9h.1M1413.4 436.2h.1M1406.4 440.9h.1M1356.5 437.7h.1M1372.3 443.7h.1M1409.3 434h.1M1404.4 439.2h.1M1398.9 440.8h.1M1381.5 438.9h.1M1347.6 436.3h.1M1423.7 438.8h.1M1398.5 440.8h.1M1328.9 444.2h.1M1403.7 444h.1M1380.6 440h.1M1378.4 433.3h.1M1368.3 438h.1M1376.2 438.5h.1M1426.5 439.3h.1M1393.8 439.5h.1M1352.9 435.9h.1M1396 434.4h.1M1392.1 435.4h.1M1436.6 441.6h.1M1371.5 444.9h.1M1362.2 437h.1M1390.6 438.7h.1M1409.7 440.4h.1M1380.7 439.2h.1M1368.9 442.4h.1M1416.7 439.2h.1M1396.8 439.7h.1M1418.8 440.7h.1M1402.3 438.9h.1M1394.9 441.5h.1M1395 443.5h.1M1404.2 438.6h.1M1413.8 443.5h.1M1397.3 443h.1M1400.8 444.1h.1M1346.8 437.4h.1M1374 439.3h.1M1370.1 441h.1M1368.8 432.5h.1M1411.2 440.7h.1M1403.3 438h.1M1399 437.1h.1M1376.6 439.6h.1M1396 439.1h.1M1371.6 440.5h.1M1425.8 440.8h.1M1411.2 438.2h.1M1376.9 437.7h.1M1363.3 441.2h.1M1396.5 442.4h.1M1380.4 443.9h.1M1361.6 439h.1M1374.5 440.2h.1M1391.3 439.9h.1M1377.6 442.4h.1M1366.9 439.9h.1M1430.5 436.3h.1M1408.8 440h.1M1374.6 440.4h.1M1346.7 436.1h.1M1390.6 438.5h.1M1395.8 444.7h.1M1352.5 441h.1M1390 442.5h.1M1356.4 434.1h.1M1408 439.5h.1M1380.9 432.8h.1M1393.8 435.8h.1M1369.7 441.4h.1M1350.1 439.5h.1M1403.6 440.3h.1M1414.6 440.8h.1M1436.7 440.5h.1M1361.5 443.6h.1M1376.4 442.3h.1M1395.3 439.8h.1M1382.5 441.4h.1M1388.4 444.5h.1M1400.9 438.8h.1M1353.4 441.3h.1M1417 437.2h.1M1367.6 438.1h.1M1389.3 439.8h.1M1358.2 441.6h.1M1399.9 443.1h.1M1387.6 443.2h.1M1410.3 441.8h.1M1366.4 443.2h.1M1383.2 437.2h.1M1399.9 444.2h.1M1384.7 437.2h.1M1372.5 436.6h.1M1410.3 438h.1M1433.3 440.2h.1M1406.2 439.4h.1M1420.4 440.7h.1M1413.1 440.3h.1M1398 440.6h.1M1402 442h.1M1405.5 442.5h.1M1423.2 441.3h.1M1425.6 441.9h.1M1423.4 444.7h.1M1388.6 441.3h.1M1375.9 437.4h.1M1356.1 439h.1M1425.3 437.2h.1M1358.4 435.2h.1M1381.1 440.6h.1M1395.4 438.3h.1M1383.4 436.6h.1M1403.1 441.9h.1M1395.6 434.8h.1M1369.1 441.5h.1M1361.9 438.6h.1M1373.1 440h.1M1358.8 439.7h.1M1336.9 438.7h.1M1364.4 440.9h.1M1408.1 440.3h.1M1404 439.9h.1M1344.2 440h.1M1386.5 440.1h.1M1353.9 442.9h.1M1402 443h.1M1419.1 436.7h.1M1421.7 443h.1M1421.4 439.1h.1M1367.7 437.6h.1M1366.3 440.4h.1M1339.5 438.5h.1M1401.1 436.6h.1M1332.5 439.5h.1M1330.1 441.8h.1M1276.1 439.2h.1M1280.1 440.4h.1M1299.4 440h.1M1299.9 436.6h.1M1266.7 437h.1M1276.6 435.1h.1M1290 438.8h.1M1308.3 438.6h.1M1318.7 436h.1M1270.6 440.3h.1M1310.7 437.8h.1M1269.7 433.4h.1M1327.4 442.8h.1M1322.3 440.2h.1M1306 438.9h.1M1320.1 439.7h.1M1269.7 441.3h.1M1307.2 441.8h.1M1332.6 439.4h.1M1306.8 442.3h.1M1273.4 436.5h.1M1279 439.9h.1M1303.7 439.6h.1M1311.2 440h.1M1297 437.7h.1M1256.9 439h.1M1267.3 434.7h.1M1283.8 437.7h.1M1326.8 440.5h.1M1298.4 440.6h.1M1296.2 436h.1M1282.6 443.1h.1M1319.4 439.6h.1M1327.3 441.3h.1M1316.8 437.4h.1M1292.8 437.1h.1M1294.1 439.8h.1M1281.5 440.1h.1M1264.4 442.6h.1M1334.6 439.2h.1M1277.4 440.7h.1M1304 437.5h.1M1319.4 437.3h.1M1292.7 436.7h.1M1280.3 442.1h.1M1287.9 439.1h.1M1308.6 439.5h.1M1264.5 441.4h.1M1294.1 439.5h.1M1266.6 437.9h.1M1287.5 435.7h.1M1282.9 440.6h.1M1298.3 440.3h.1M1306.9 442.5h.1M1267.1 439.5h.1M1330.1 435.3h.1M1315.8 438.2h.1M1287.5 438.1h.1M1308 438.3h.1M1288 442.7h.1M1319 438.4h.1M1304.2 439.6h.1M1316.6 438.3h.1M1267.4 443.9h.1M1286.3 439.5h.1M1318 441.9h.1M1258.5 442.8h.1M1255.3 438.9h.1M1299 435.7h.1M1315.4 439.1h.1M1333.9 440.5h.1M1327.3 438.6h.1M1325.4 436.9h.1M1295.2 435.8h.1M1315.4 443.9h.1M1329.2 437.6h.1M1295.3 440.3h.1M1321.4 437.9h.1M1302.5 435.2h.1M1333 433.6h.1M1304.5 442h.1M1308.5 438.3h.1M1301.8 438.6h.1M1320.1 444.4h.1M1329.5 442.6h.1M1325.3 435h.1M1302 439.2h.1M1332.9 440.6h.1M1338.1 442.2h.1M1331.5 440.2h.1M1318.9 440.8h.1M1326.3 436h.1M1322.1 436.4h.1M1299.3 443.4h.1M1295.6 436.6h.1M1301.3 433.3h.1M1295.1 428.8h.1M1308.3 439.1h.1M1314.2 439.7h.1M1339.6 440.4h.1M1303 440.5h.1M1325.4 439.6h.1M1312.1 436h.1M1335.3 438.3h.1M1338 437h.1M1309.2 434.9h.1M1304.8 439.9h.1M1304 436.6h.1M1305 386h.1M1355 397h.1M1363 381h.1M1365 372h.1M1393 392h.1M1394 400h.1M1388 406h.1M1400 421h.1M1254 433h.1M1258 442h.1" stroke="#0e9a47" stroke-width="2.6" stroke-linecap="round" fill="none" opacity="1.0"/><path d="M1365.8 288.3h.1M1363.7 289.5h.1M1359.3 303.7h.1M1341.8 304.7h.1M1346.3 304.5h.1M1366.3 287.1h.1M1369.1 293.6h.1M1392.5 274.7h.1M1403.3 236.9h.1M1349.4 285.5h.1M1344.1 312.3h.1M1374.2 296.4h.1M1333.2 318.8h.1M1364.9 263.6h.1M1355.2 314.2h.1M1380.2 270.9h.1M1350.1 291.9h.1M1333.3 328h.1M1392.6 262.4h.1M1379.5 266.2h.1M1353.1 293h.1M1331.3 263.7h.1M1366.6 292.9h.1M1383.7 258.6h.1M1325.3 324.7h.1M1328.7 288h.1M1358.7 304.9h.1M1395.8 272h.1M1360.7 306.3h.1M1339.9 318.7h.1M1340.6 319h.1M1337.9 290.3h.1M1341.3 288.4h.1M1346.4 316h.1M1396.3 271h.1M1395.3 269.4h.1M1374.7 277h.1M1394.8 271.4h.1M1367.3 274.7h.1M1331.7 332.6h.1M1356.4 315.4h.1M1387.5 260h.1M1360.6 280.2h.1M1366.4 277.3h.1M1359.8 304.4h.1M1361.5 301.5h.1M1352.3 311.2h.1M1356 274.2h.1M1321.9 314h.1M1357.3 284.5h.1M1333.5 303.9h.1M1333.1 326.1h.1M1343.9 324.3h.1M1380.8 279.3h.1M1358.7 288.7h.1M1354.6 301.4h.1M1378.4 283.3h.1M1366.6 298.4h.1M1326.4 331.8h.1M1378.4 285.6h.1M1377.5 276.6h.1M1379.6 289.1h.1M1340.2 292.8h.1M1367 262.3h.1M1353.6 300.1h.1M1372.5 286.4h.1M1341.8 314.3h.1M1367.3 291h.1M1333.6 297.4h.1M1354.1 320.3h.1M1405.6 283.8h.1M1373.8 301.5h.1M1366.4 292.9h.1M1370.5 356.7h.1M1364 278.7h.1M1354.6 313.4h.1M1365.9 288.6h.1M1356.8 303h.1M1362.8 285.8h.1M1366.5 296.9h.1M1338.6 320.4h.1M1375.9 278.9h.1M1409 247.4h.1M1355.9 321.9h.1M1381 265.6h.1M1374.1 284.4h.1M1365.1 298.4h.1M1379.2 274.3h.1M1386.5 306.2h.1M1362 304h.1M1353.1 294.3h.1M1404.7 231.2h.1M1327.3 311.6h.1M1368.2 329.1h.1M1411 258.6h.1M1337.2 331.7h.1M1341 316.5h.1M1331.4 309.1h.1M1391.5 269.2h.1M1361.1 293.9h.1M1356.7 289.6h.1M1409.1 244.3h.1M1369.7 274.3h.1M1389.4 278.4h.1M1347.6 279.2h.1M1350.8 319.9h.1M1369.5 299.7h.1M1345.1 299.1h.1M1352.6 317.3h.1M1335.1 319.7h.1M1367.5 296.3h.1M1356.2 307.1h.1M1390.7 267.7h.1M1326.5 306.6h.1M1412.4 259.6h.1M1359.4 288.1h.1M1356.9 290.3h.1M1371.5 272.7h.1M1395.6 290.9h.1M1369.4 280.7h.1M1389.6 251.2h.1M1352.8 307.1h.1M1369 290.2h.1M1394.7 254.8h.1M1346.3 322.3h.1M1371.8 262.5h.1M1374.3 283.6h.1M1335.6 310.1h.1M1354.3 308.1h.1M1359.2 299.5h.1M1371.7 285h.1M1349.5 326h.1M1373.7 280.5h.1M1396.4 280h.1M1368.7 270.1h.1M1350.8 295.2h.1M1356.3 304.4h.1M1356.7 307.6h.1M1346.3 304.3h.1M1384.6 284.5h.1M1335.5 320.9h.1M1394.2 287.4h.1M1373 278.3h.1M1381.6 294.1h.1M1356.9 296h.1M1364.8 308.8h.1M1393.7 274.1h.1M1377.7 279.9h.1M1358.6 282.4h.1M1365.9 297.9h.1M1355.2 314.6h.1M1360.3 283.6h.1M1381.7 266.6h.1M1359.2 305.9h.1M1387.9 272.9h.1M1355.6 284.3h.1M1350.5 299.1h.1M1383.4 288.9h.1M1392.9 267.9h.1M1357.5 261.1h.1M1387.7 249.5h.1M1365.1 291.7h.1M1347.1 308.8h.1M1363.2 282.7h.1M1386.9 283h.1M1380.9 302.4h.1M1388.2 281.2h.1M1367 319.2h.1M1331.1 313.9h.1M1398.3 259.5h.1M1347.9 298.8h.1M1354.2 285.7h.1M1345.3 288h.1M1350.1 295.3h.1M1372.3 265h.1M1366.4 297.8h.1M1365 269.3h.1M1338.3 284.8h.1M1351.8 304h.1M1342 273h.1M1398.6 238.3h.1M1367 279.6h.1M1336.1 307.7h.1M1342.6 312.3h.1M1355.6 299.2h.1M1361.9 289.8h.1M1308.9 330.9h.1M1341.7 299.8h.1M1343.2 354.5h.1M1404.5 248.8h.1M1348.7 277.6h.1M1385.2 286.2h.1M1393.4 259.1h.1M1382.2 273.6h.1M1359 287h.1M1347.8 312.7h.1M1344.7 323h.1M1387.3 256.1h.1M1372.3 274h.1M1359 295.4h.1M1367.4 301.3h.1M1365.6 309h.1M1343.9 287.9h.1M1402.9 265.5h.1M1323.9 299.1h.1M1388.3 267.8h.1M1340.2 305.5h.1M1376 290.7h.1M1362.3 295.6h.1M1364.2 303.7h.1M1363.8 318.5h.1M1387.1 289.2h.1M1359.4 290.5h.1M1382.4 244.5h.1M1355 308.6h.1M1380.3 257.4h.1M1387.1 278.8h.1M1338.5 320.4h.1M1359.4 284h.1M1371.6 289.4h.1M1409.9 239.2h.1M1367.8 299.6h.1M1375.8 283.4h.1M1328 353.3h.1M1341.7 309.2h.1M1376.9 280h.1M1408.7 263.1h.1M1363.4 310.5h.1M1363 311.3h.1M1338.5 299.5h.1M1393.1 248h.1M1361.6 303.9h.1M1395.2 263.8h.1M1357.5 318h.1M1348.7 311.3h.1M1362.6 310.2h.1M1386.7 255.2h.1M1351.2 288.5h.1M1364.6 284.5h.1M1358.8 294.3h.1M1333.9 295.5h.1M1347.1 303.2h.1M1355.9 297.3h.1M1378.6 288.1h.1M1339.9 296.4h.1M1375.5 264.7h.1M1391.7 289.1h.1M1361 316.4h.1M1358.7 308.1h.1M1386.8 287.5h.1M1336.3 322.9h.1M1366.1 301.4h.1M1360.3 308.4h.1M1412.1 261.1h.1M1370.1 307.8h.1M1339.5 315h.1M1365.3 282.5h.1M1357.3 293.8h.1M1377.8 282.3h.1M1344.6 302.3h.1M1372 264.4h.1M1340.4 321.4h.1M1355.9 286.9h.1M1381.3 278.9h.1M1386.7 279.8h.1M1397.3 257.2h.1M1375.6 258.6h.1M1389.5 260.4h.1M1348.4 313.5h.1M1338.5 328.3h.1M1341.9 313h.1M1336.7 333.7h.1M1407.5 240.8h.1M1374 276.3h.1M1369 298.1h.1M1347.5 298.4h.1M1376.4 273.1h.1M1341.6 323.6h.1M1330.5 316.6h.1M1351.6 292.8h.1M1393.1 250.8h.1M1353.3 301.8h.1M1377.3 260.1h.1M1351.2 286.7h.1M1373 338.1h.1M1374.7 280.7h.1M1388.3 254.6h.1M1372.5 313.8h.1M1381.7 321.8h.1M1332.9 330.8h.1M1347.9 310.3h.1M1338.4 309h.1M1332.1 346.1h.1M1376.2 285.7h.1M1362.5 266.4h.1M1351.9 298h.1M1351.4 305.1h.1M1370.9 298.3h.1M1379.1 273h.1M1324.7 319.2h.1M1357 283.8h.1M1363.7 296.8h.1M1358.2 303.2h.1M1364.7 258.2h.1M1362.1 294.8h.1M1401 273h.1M1370.8 281.8h.1M1335 308.1h.1M1385.1 250.9h.1M1351.1 284.8h.1M1359.7 303.5h.1M1389.5 248.4h.1M1328 340.3h.1M1375.7 279.8h.1M1369.3 288h.1M1355 266.9h.1M1364 323.7h.1M1341.3 318.1h.1M1348.4 326.1h.1M1352.2 280.1h.1M1379.3 274.5h.1M1355 285.9h.1M1372.6 288.3h.1M1369.1 257.2h.1M1339.2 282.7h.1M1355.6 326.7h.1M1354.5 286.9h.1M1381.1 292.7h.1M1342.5 323.1h.1M1332.9 284.8h.1M1377 266.2h.1M1397.5 277.5h.1M1363.9 303.1h.1M1404.8 244.8h.1M1362.7 309.2h.1M1364.9 288h.1M1374.5 265.4h.1M1413.3 244.3h.1M1358 286.3h.1M1382 265.3h.1M1408.1 249.6h.1M1381.6 269.5h.1M1354.8 296.9h.1M1321 330.9h.1M1367.5 279.4h.1M1362.5 270.4h.1M1361.7 284h.1M1356.4 293.2h.1M1348.5 300.1h.1M1370.2 300h.1M1340.2 298.8h.1M1334.9 310.9h.1M1379.1 249.2h.1M1345.8 319.3h.1M1380.6 284.9h.1M1330.2 347.8h.1M1354.9 311.7h.1M1384.4 263.5h.1M1350.4 286.4h.1M1382.9 267.4h.1M1379.5 287.5h.1M1338.6 336.5h.1M1405.5 245.7h.1M1385.8 279h.1M1382 280.2h.1M1375.1 280.6h.1M1370 300.2h.1M1360.7 298.6h.1M1350.6 321.2h.1M1386.3 281.5h.1M1377.4 267.4h.1M1340.6 334h.1M1401.9 249.6h.1M1363 281.8h.1M1371.9 296.5h.1M1370.5 295.1h.1M1386.9 258.6h.1M1381.5 270.7h.1M1361.1 277.5h.1M1337.6 334.2h.1M1384 278.2h.1M1350.6 304.5h.1M1368.2 284.3h.1M1350.3 292.8h.1M1345 309.2h.1M1335 322.6h.1M1355.9 299.3h.1M1338.5 346.5h.1M1362.2 297.3h.1M1373.6 264.9h.1M1387.2 276.4h.1M1341 309.5h.1M1359 296.3h.1M1320.1 324.1h.1M1352.1 331.2h.1M1315.3 342.7h.1M1398.5 225.9h.1M1384.2 287.3h.1M1371 305.8h.1M1349.3 273h.1M1374.5 274.7h.1M1355.7 301.3h.1M1354.4 306.4h.1M1372.7 270.6h.1M1357.3 298.1h.1M1356.4 299.3h.1M1360.8 294.9h.1M1399.4 248.4h.1M1340.5 285.9h.1M1365.8 315h.1M1328 308.9h.1M1353.8 290.1h.1M1344.2 320.4h.1M1366.4 301.3h.1M1366.7 286.3h.1M1383.5 275.1h.1M1351.9 311.5h.1M1374.3 273.4h.1M1356.4 317h.1M1367 271.2h.1M1336.3 352.8h.1M1364.1 288.2h.1M1341.6 312.7h.1M1349 295.3h.1M1410.8 239.6h.1M1340.6 307.9h.1M1383.7 242.3h.1M1353.5 304.9h.1M1348.3 294.7h.1M1341.6 305.7h.1M1363.8 287h.1M1335.4 324.7h.1M1344.2 317.8h.1M1366 281.5h.1M1387.8 281.4h.1M1380.7 304.1h.1M1358.7 299.4h.1M1355.7 267.2h.1M1388.6 234.3h.1M1350.5 326.2h.1M1380.9 252.8h.1M1339.3 307.9h.1M1402.5 258h.1M1346.3 325.6h.1M1335.9 298.2h.1M1355.2 312.5h.1M1341.4 292.2h.1M1375 282.7h.1M1384.7 277.9h.1M1367.6 294.5h.1M1327.1 299.1h.1M1387.8 274.2h.1M1382.5 273.3h.1M1364.6 300.2h.1M1345.1 302.3h.1M1363.6 299h.1M1341.9 263.5h.1M1361.7 288.1h.1M1399.4 250h.1M1372.2 278.3h.1M1352.3 293.6h.1M1356.4 320.6h.1M1363.4 287.3h.1M1360 286.7h.1M1359.2 281.9h.1M1382.5 274h.1M1374.8 281.1h.1M1367.4 295.3h.1M1371.9 264.4h.1M1356.3 338.7h.1M1359.1 298.8h.1M1394.1 243.6h.1M1372.7 274.5h.1M1344.5 303.2h.1M1378.6 262.2h.1M1372.2 293.5h.1M1357.8 307h.1M1310 326h.1M1392.8 256.8h.1M1394.2 269h.1M1340.4 276.9h.1M1380.7 279.7h.1M1368.7 287.4h.1M1364.7 304.4h.1M1357.7 281.2h.1M1346.6 333.8h.1M1400.8 273.9h.1M1346.9 311.6h.1M1376.8 283h.1M1379.6 281.6h.1M1337.9 326.6h.1M1361.3 279.5h.1M1345 310.4h.1M1372.1 290.6h.1M1348.1 305.4h.1M1357.9 309.9h.1M1357.5 313.5h.1M1381.4 263.3h.1M1394.5 249.7h.1M1344.7 311.9h.1M1388.5 274.7h.1M1358.7 292.4h.1M1359.2 305.4h.1M1322.4 318.7h.1M1361.5 290.1h.1M1392.8 295.1h.1M1368.2 282.2h.1M1369.8 288.2h.1M1367.7 273.3h.1M1368.1 276.7h.1M1373.8 276.9h.1M1379.3 285.5h.1M1367.1 290h.1M1321.2 335.1h.1M1314.6 317.3h.1M1367.6 296.4h.1M1379.8 241.2h.1M1365.5 274.9h.1M1368.2 276.3h.1M1348.5 288.5h.1M1359.6 291.9h.1M1360.6 282.8h.1M1341.6 312.1h.1M1351.7 252h.1M1350.1 349.1h.1M1374.5 305.8h.1M1349.2 313.6h.1M1379.2 312.5h.1M1384.9 275.3h.1M1398.5 265h.1M1318.8 340.6h.1M1367.3 268h.1M1368 279h.1M1378.7 279.3h.1M1353.8 301.9h.1M1355 284.9h.1M1382.7 279.5h.1M1338.4 313.1h.1M1384.3 249.3h.1M1334.6 340.9h.1M1355.1 294.9h.1M1329.9 325.8h.1M1381.8 268.3h.1M1390.3 265.6h.1M1392.3 323.7h.1M1337.2 288.3h.1M1412.3 261.5h.1M1374 293.9h.1M1344.1 320.8h.1M1346.6 302.3h.1M1351.6 264.5h.1M1346.9 320.1h.1M1331.8 339.7h.1M1370.6 270.3h.1M1342.3 327.3h.1M1344.8 322.9h.1M1370.9 268.3h.1M1386.1 256.5h.1M1372.4 297.8h.1M1345 305h.1M1359.7 318.5h.1M1339.8 306.1h.1M1340.3 314.6h.1M1358.1 271.8h.1M1359 306.6h.1M1374.8 259.4h.1M1395 243.7h.1M1380 261.2h.1M1340.8 306.1h.1M1357.6 322.3h.1M1330.1 334.4h.1M1372.3 275.2h.1M1366.5 276.9h.1M1368.9 303h.1M1370.8 277.4h.1M1398.9 262.8h.1M1365.2 281.6h.1M1338.4 306.4h.1M1364.7 295.5h.1M1353.4 289.4h.1M1406.6 253.5h.1M1347.8 300.8h.1M1388.9 246.6h.1M1342 272.4h.1M1414 248.8h.1M1354.1 309.7h.1M1381.5 264.9h.1M1352.6 289.9h.1M1389.1 260.2h.1M1380.7 273h.1M1356.7 315.3h.1M1388.3 258.3h.1M1352.4 284.4h.1M1364.6 302h.1M1358.4 310.3h.1M1359.3 272.2h.1M1349.7 304.4h.1M1357.4 299.9h.1M1368.8 271.1h.1M1369.4 307.8h.1M1344.9 330.7h.1M1358.6 285.7h.1M1365.1 341.1h.1M1389.2 272.8h.1M1385.9 285.2h.1M1345.8 331.6h.1M1332 294.2h.1M1349.4 306.8h.1M1372.9 257.5h.1M1345.1 322.9h.1M1332.1 307.7h.1M1341.7 302.1h.1M1356.4 293.3h.1M1416.8 250.7h.1M1370.5 293.4h.1M1345.7 278.3h.1M1340.3 306h.1M1358.7 299.7h.1M1376.5 286.7h.1M1377.5 268h.1M1351.3 319.2h.1M1314.5 298.3h.1M1408.1 259.8h.1M1393.8 280.6h.1M1382.5 277h.1M1366.7 287.7h.1M1363.6 285.3h.1M1367.6 272.8h.1M1375.5 307.8h.1M1371.4 311.9h.1M1376.7 275.4h.1M1335.2 318h.1M1370.6 248.6h.1M1362.6 293.9h.1M1358.9 275.6h.1M1376.1 294.1h.1M1362.1 259.4h.1M1354.3 302.9h.1M1331.3 324.4h.1M1363.1 293.5h.1M1351.4 321.2h.1M1343.4 308h.1M1356.3 312.4h.1M1333.6 342.2h.1M1349 325.9h.1M1379.4 289.5h.1M1344.6 301.4h.1M1348 302.2h.1M1336.9 287.6h.1M1372.9 284.3h.1M1369.9 268.6h.1M1374.9 295.3h.1M1366.7 270.4h.1M1382.6 287.6h.1M1332 312.7h.1M1394.9 272.6h.1M1373.8 276.2h.1M1337.2 323.4h.1M1340.7 320.6h.1M1319.5 319.6h.1M1349.2 292.1h.1M1354.8 318.3h.1M1340.6 320.7h.1M1381.4 283.4h.1M1363.1 277.3h.1M1358.6 283.1h.1M1360.7 304.7h.1M1354.6 297.4h.1M1348.6 312.6h.1M1385.3 279h.1M1387 248.1h.1M1358.5 300.1h.1M1364.5 277.5h.1M1400.5 260.9h.1M1353.6 299.3h.1M1336.6 316.9h.1M1368.9 299.4h.1M1389.6 274.2h.1M1316.6 329.6h.1M1337.4 325.8h.1M1376.1 285.5h.1M1334.7 330.6h.1M1352.3 291h.1M1376 276.6h.1M1368.3 289.9h.1M1370.5 278.6h.1M1334.9 334.1h.1M1396 265h.1M1346.3 335.5h.1M1348.5 294.2h.1M1393.6 243.9h.1M1344.4 312.2h.1M1346.1 311.7h.1M1353.4 282.5h.1M1397.7 259.4h.1M1354.7 292.2h.1M1393.6 234.9h.1M1367.8 271.8h.1M1371.3 289h.1M1362.5 292h.1M1355 305.5h.1M1379.4 264.6h.1M1353.6 289h.1M1360.5 283h.1M1397.8 246.1h.1M1383.4 285h.1M1371.7 290.5h.1M1346 291.6h.1M1375.1 298h.1M1373.2 281.9h.1M1341.6 314h.1M1371.4 302.2h.1M1371.4 270.5h.1M1384.7 256.8h.1M1328.9 303.6h.1M1380.9 291.4h.1M1357.2 266.2h.1M1339.9 312.9h.1M1401.9 236.4h.1M1360.6 285.1h.1M1367.2 287.6h.1M1375.3 265.3h.1M1365.6 287.8h.1M1397.1 225.2h.1M1376.2 285.4h.1M1358.6 300.4h.1M1353.3 313.6h.1M1401.6 276.3h.1M1353.4 306.7h.1M1337.8 312.7h.1M1341 277.7h.1M1367 284.4h.1M1351.3 292.2h.1M1390.4 265.2h.1M1363.9 277.3h.1M1347.4 324.3h.1M1358.1 300.5h.1M1367.9 282.5h.1M1374.5 271h.1M1355 309.2h.1M1325 326.5h.1M1371.5 297.9h.1M1362.9 302.4h.1M1360.5 295.8h.1M1363 287h.1M1356.3 322.4h.1M1321.4 337.6h.1M1371 294.4h.1M1368.3 277.6h.1M1359.9 291.6h.1M1388.7 240.5h.1M1374.5 257.4h.1M1369 294.9h.1M1384.7 290.9h.1M1367.1 281.1h.1M1365.5 292.1h.1M1368.6 282.8h.1M1351.5 312.6h.1M1359.3 313.5h.1M1388.8 236.4h.1M1359.8 278.8h.1M1358.2 287.8h.1M1380.4 279.5h.1M1385.7 277.7h.1M1366.3 291.1h.1M1381.8 284.4h.1M1355.4 295.7h.1M1334.3 299.5h.1M1379 271.4h.1M1368.5 280.6h.1M1374.3 279.2h.1M1404.5 266.1h.1M1355.1 295.7h.1M1369.4 273.9h.1M1359.3 294.3h.1M1384.8 280h.1M1357 307h.1M1378.7 258.1h.1M1393.1 313.4h.1M1325.6 331.2h.1M1391.5 257.9h.1M1353.3 295.2h.1M1327 319.9h.1M1384.4 279.2h.1M1368.8 274.1h.1M1378 278.5h.1M1353.6 314.2h.1M1363.1 295.8h.1M1370.5 303.8h.1M1370.3 271.9h.1M1373.3 276.9h.1M1359.2 291.8h.1M1356 301.3h.1M1338.6 299.4h.1M1333.5 311.7h.1M1358.7 296.4h.1M1336.9 318.9h.1M1360.6 277h.1M1327.5 330.1h.1M1332.7 337.1h.1M1346.1 317.1h.1M1349.1 300.4h.1M1362.9 293.3h.1M1380.1 291.2h.1M1401.2 237.2h.1M1367.5 304.1h.1M1366 272.8h.1M1357.4 299.2h.1M1373.8 292.3h.1M1362.1 298.7h.1M1366.3 302.9h.1M1341.9 328.1h.1M1347.1 298.8h.1M1364.5 307.5h.1M1388.8 246.2h.1M1388.9 258.6h.1M1374.4 286.3h.1M1376.9 280.9h.1M1391.7 263.1h.1M1377.1 277.8h.1M1325.5 338.2h.1M1345.9 284.5h.1M1369.3 290.1h.1M1347.4 307.9h.1M1360.3 273.2h.1M1353.6 302.1h.1M1359.1 290.8h.1M1395.5 230.4h.1M1347.1 296.8h.1M1337.9 304.2h.1M1340.3 313.8h.1M1400 262.3h.1M1377.6 273h.1M1370.3 293.4h.1M1361.6 300.2h.1M1364.5 303.9h.1M1362.8 313.6h.1M1382.5 266.5h.1M1379.1 269.9h.1M1370.7 278.3h.1M1337.8 295.5h.1M1333.2 332.7h.1M1353.1 297.2h.1M1352 302.9h.1M1365 305.1h.1M1361.5 304.7h.1M1377 288.4h.1M1398.7 266.2h.1M1373.5 284.4h.1M1362.6 283.2h.1M1255 298h.1M1284 318h.1M1293 334h.1M1300 345h.1M1330 360h.1M1362 358h.1M1320 362h.1M1302 320h.1M1310 300h.1M1365 222h.1M1378 218h.1M1395 205h.1M1418 230h.1M1412 250h.1" stroke="#b4b9bf" stroke-width="2.3" stroke-linecap="round" fill="none" opacity="1.0"/><line x1="337" y1="534" x2="337" y2="886" stroke="#595f64" stroke-width="2"/><line x1="332.5" y1="884" x2="337" y2="884" stroke="#595f64" stroke-width="1.6"/><line x1="332.5" y1="869.2" x2="337" y2="869.2" stroke="#595f64" stroke-width="1.6"/><line x1="332.5" y1="854.5" x2="337" y2="854.5" stroke="#595f64" stroke-width="1.6"/><line x1="332.5" y1="825.1" x2="337" y2="825.1" stroke="#595f64" stroke-width="1.6"/><line x1="332.5" y1="810.3" x2="337" y2="810.3" stroke="#595f64" stroke-width="1.6"/><line x1="332.5" y1="795.6" x2="337" y2="795.6" stroke="#595f64" stroke-width="1.6"/><line x1="332.5" y1="780.9" x2="337" y2="780.9" stroke="#595f64" stroke-width="1.6"/><line x1="332.5" y1="751.4" x2="337" y2="751.4" stroke="#595f64" stroke-width="1.6"/><line x1="332.5" y1="736.7" x2="337" y2="736.7" stroke="#595f64" stroke-width="1.6"/><line x1="332.5" y1="722" x2="337" y2="722" stroke="#595f64" stroke-width="1.6"/><line x1="332.5" y1="707.3" x2="337" y2="707.3" stroke="#595f64" stroke-width="1.6"/><line x1="332.5" y1="677.8" x2="337" y2="677.8" stroke="#595f64" stroke-width="1.6"/><line x1="332.5" y1="663.1" x2="337" y2="663.1" stroke="#595f64" stroke-width="1.6"/><line x1="332.5" y1="648.4" x2="337" y2="648.4" stroke="#595f64" stroke-width="1.6"/><line x1="332.5" y1="633.6" x2="337" y2="633.6" stroke="#595f64" stroke-width="1.6"/><line x1="332.5" y1="604.2" x2="337" y2="604.2" stroke="#595f64" stroke-width="1.6"/><line x1="332.5" y1="589.5" x2="337" y2="589.5" stroke="#595f64" stroke-width="1.6"/><line x1="332.5" y1="574.7" x2="337" y2="574.7" stroke="#595f64" stroke-width="1.6"/><line x1="332.5" y1="560" x2="337" y2="560" stroke="#595f64" stroke-width="1.6"/><line x1="328.5" y1="839.8" x2="337" y2="839.8" stroke="#595f64" stroke-width="1.6"/><line x1="328.5" y1="766.2" x2="337" y2="766.2" stroke="#595f64" stroke-width="1.6"/><line x1="328.5" y1="692.5" x2="337" y2="692.5" stroke="#595f64" stroke-width="1.6"/><line x1="328.5" y1="618.9" x2="337" y2="618.9" stroke="#595f64" stroke-width="1.6"/><line x1="328.5" y1="545.3" x2="337" y2="545.3" stroke="#595f64" stroke-width="1.6"/><text x="324" y="844.1" text-anchor="end" class="al">10 000</text><text x="324" y="770.5" text-anchor="end" class="al">20 000</text><text x="324" y="696.8" text-anchor="end" class="al">30 000</text><text x="324" y="623.2" text-anchor="end" class="al">40 000</text><text x="324" y="549.6" text-anchor="end" class="al">50 000</text><line x1="347.5" y1="900.5" x2="1001" y2="900.5" stroke="#595f64" stroke-width="2"/><line x1="356.1" y1="900.5" x2="356.1" y2="905.0" stroke="#595f64" stroke-width="1.6"/><line x1="372.7" y1="900.5" x2="372.7" y2="905.0" stroke="#595f64" stroke-width="1.6"/><line x1="389.4" y1="900.5" x2="389.4" y2="905.0" stroke="#595f64" stroke-width="1.6"/><line x1="406" y1="900.5" x2="406" y2="905.0" stroke="#595f64" stroke-width="1.6"/><line x1="439.4" y1="900.5" x2="439.4" y2="905.0" stroke="#595f64" stroke-width="1.6"/><line x1="456" y1="900.5" x2="456" y2="905.0" stroke="#595f64" stroke-width="1.6"/><line x1="472.7" y1="900.5" x2="472.7" y2="905.0" stroke="#595f64" stroke-width="1.6"/><line x1="489.3" y1="900.5" x2="489.3" y2="905.0" stroke="#595f64" stroke-width="1.6"/><line x1="522.7" y1="900.5" x2="522.7" y2="905.0" stroke="#595f64" stroke-width="1.6"/><line x1="539.3" y1="900.5" x2="539.3" y2="905.0" stroke="#595f64" stroke-width="1.6"/><line x1="556" y1="900.5" x2="556" y2="905.0" stroke="#595f64" stroke-width="1.6"/><line x1="572.6" y1="900.5" x2="572.6" y2="905.0" stroke="#595f64" stroke-width="1.6"/><line x1="606" y1="900.5" x2="606" y2="905.0" stroke="#595f64" stroke-width="1.6"/><line x1="622.6" y1="900.5" x2="622.6" y2="905.0" stroke="#595f64" stroke-width="1.6"/><line x1="639.3" y1="900.5" x2="639.3" y2="905.0" stroke="#595f64" stroke-width="1.6"/><line x1="655.9" y1="900.5" x2="655.9" y2="905.0" stroke="#595f64" stroke-width="1.6"/><line x1="689.3" y1="900.5" x2="689.3" y2="905.0" stroke="#595f64" stroke-width="1.6"/><line x1="705.9" y1="900.5" x2="705.9" y2="905.0" stroke="#595f64" stroke-width="1.6"/><line x1="722.6" y1="900.5" x2="722.6" y2="905.0" stroke="#595f64" stroke-width="1.6"/><line x1="739.2" y1="900.5" x2="739.2" y2="905.0" stroke="#595f64" stroke-width="1.6"/><line x1="772.6" y1="900.5" x2="772.6" y2="905.0" stroke="#595f64" stroke-width="1.6"/><line x1="789.2" y1="900.5" x2="789.2" y2="905.0" stroke="#595f64" stroke-width="1.6"/><line x1="805.9" y1="900.5" x2="805.9" y2="905.0" stroke="#595f64" stroke-width="1.6"/><line x1="822.5" y1="900.5" x2="822.5" y2="905.0" stroke="#595f64" stroke-width="1.6"/><line x1="855.9" y1="900.5" x2="855.9" y2="905.0" stroke="#595f64" stroke-width="1.6"/><line x1="872.5" y1="900.5" x2="872.5" y2="905.0" stroke="#595f64" stroke-width="1.6"/><line x1="889.2" y1="900.5" x2="889.2" y2="905.0" stroke="#595f64" stroke-width="1.6"/><line x1="905.8" y1="900.5" x2="905.8" y2="905.0" stroke="#595f64" stroke-width="1.6"/><line x1="939.2" y1="900.5" x2="939.2" y2="905.0" stroke="#595f64" stroke-width="1.6"/><line x1="955.8" y1="900.5" x2="955.8" y2="905.0" stroke="#595f64" stroke-width="1.6"/><line x1="972.5" y1="900.5" x2="972.5" y2="905.0" stroke="#595f64" stroke-width="1.6"/><line x1="989.1" y1="900.5" x2="989.1" y2="905.0" stroke="#595f64" stroke-width="1.6"/><line x1="422.7" y1="900.5" x2="422.7" y2="909.0" stroke="#595f64" stroke-width="1.6"/><line x1="506" y1="900.5" x2="506" y2="909.0" stroke="#595f64" stroke-width="1.6"/><line x1="589.3" y1="900.5" x2="589.3" y2="909.0" stroke="#595f64" stroke-width="1.6"/><line x1="672.6" y1="900.5" x2="672.6" y2="909.0" stroke="#595f64" stroke-width="1.6"/><line x1="755.9" y1="900.5" x2="755.9" y2="909.0" stroke="#595f64" stroke-width="1.6"/><line x1="839.2" y1="900.5" x2="839.2" y2="909.0" stroke="#595f64" stroke-width="1.6"/><line x1="922.5" y1="900.5" x2="922.5" y2="909.0" stroke="#595f64" stroke-width="1.6"/><text x="422.7" y="921.0" text-anchor="middle" class="al">5 000</text><text x="506" y="921.0" text-anchor="middle" class="al">10 000</text><text x="589.3" y="921.0" text-anchor="middle" class="al">15 000</text><text x="672.6" y="921.0" text-anchor="middle" class="al">20 000</text><text x="755.9" y="921.0" text-anchor="middle" class="al">25 000</text><text x="839.2" y="921.0" text-anchor="middle" class="al">30 000</text><text x="922.5" y="921.0" text-anchor="middle" class="al">35 000</text><path d="M338.5 899L337.4 900.6L337 902.5L335.1 902.9L333.5 904L331.9 902.9L330 902.5L329.6 900.6L328.5 899L329.6 897.4L330 895.5L331.9 895.1L333.5 894L335.1 895.1L337 895.5L337.4 897.4Z" fill="#1581c9"/><circle cx="333.5" cy="899" r="1.3" fill="#f8f8f8"/><path d="M343.4 892.7L342.5 894L342.2 895.5L340.7 895.8L339.4 896.7L338.1 895.8L336.6 895.5L336.3 894L335.4 892.7L336.3 891.4L336.6 889.9L338.1 889.6L339.4 888.7L340.7 889.6L342.2 889.9L342.5 891.4Z" fill="#1581c9"/><circle cx="339.4" cy="892.7" r="1.1" fill="#f8f8f8"/><line x1="555.8" y1="531" x2="555.8" y2="895" stroke="#e4d04a" stroke-width="1.5" stroke-dasharray="5 1"/><line x1="341" y1="791.3" x2="1005.5" y2="791.3" stroke="#3ab2d2" stroke-width="2" stroke-dasharray="4.2 1.3"/><path d="M382.2 712.6h.1M385.2 706.8h.1M391.3 701.6h.1M379.1 701.2h.1M382.5 693.5h.1M378.6 683.6h.1M381.7 695.3h.1M377.4 708.7h.1M385.5 701h.1M383.9 701.5h.1M374.2 704.5h.1M383 700.7h.1M375.8 700h.1M385.9 695.7h.1M386.7 694.2h.1M381.2 705.6h.1M381.8 715h.1M385.5 687.9h.1M379.1 702.1h.1M382.9 701.1h.1M383.1 702.3h.1M379.7 702.1h.1M372.5 697.9h.1M379.2 706.2h.1M388.8 696.7h.1M381.3 684.8h.1M379.9 708.8h.1M382.3 692.9h.1M381.1 691.9h.1M384.1 697.7h.1M389.2 701.4h.1M380.5 690.3h.1M372.3 692.5h.1M379.7 712.7h.1M380.7 710.1h.1M383.5 695.6h.1M382.7 690.8h.1M382.7 689.1h.1M384.3 714.2h.1M375.7 705.7h.1M390.2 692.5h.1M383.4 691.9h.1M382.3 708.3h.1M385.3 701.1h.1M374.4 708.7h.1M386.4 688.8h.1M378.9 702.6h.1M379.6 699.7h.1M386.3 706h.1M382.1 692.8h.1M374.8 697.7h.1M385.6 686.3h.1M376.7 701h.1M383.2 697.9h.1M387.9 699.6h.1M378.4 694.8h.1M386.1 691.8h.1M379.4 712.5h.1M386.8 690h.1M371.9 701.4h.1M376.2 706.9h.1M384.2 701.4h.1M379.9 685.9h.1M381.8 704.4h.1M377.4 702.8h.1M378.2 687.2h.1M383.2 713h.1M380.8 704.9h.1M386.8 706.8h.1M378.4 703.6h.1M373.9 698.3h.1M379 716.9h.1M377.4 696.3h.1M383.2 687h.1M380.7 700.2h.1M383.7 696.5h.1M384 698h.1M384 696.9h.1M382.9 691.3h.1M377.5 689.5h.1M384.3 701.8h.1M379 705.1h.1M381.4 701.1h.1M386.3 683.1h.1M380 703.7h.1M382.1 693.6h.1M376.3 697.6h.1M379.7 706.6h.1M375.9 702.6h.1M384.2 680.4h.1M380.6 691.2h.1M383.7 693.1h.1M381.4 708.3h.1M380.8 691.1h.1M379.3 694.8h.1M381 711.2h.1M391.8 694.8h.1M378.2 711.2h.1M380.6 701.7h.1M377.5 686.5h.1M383.8 693.3h.1M374.1 698.2h.1M379.4 691.9h.1M381.2 702.2h.1M379.3 695.9h.1M370.4 702h.1M372 703.1h.1M384.3 711.1h.1M374.2 710.2h.1M376.8 713.3h.1M387.2 697.1h.1M387 692.3h.1M384.5 703h.1M384.1 710.7h.1M379.5 695.7h.1M383 701.6h.1M377.3 710h.1M377.9 688.1h.1M373.5 696.1h.1M381.7 714.1h.1M376.8 698.9h.1M373.5 703.6h.1M383.4 704.1h.1M382.7 707.2h.1M380.2 703.5h.1M374.5 694.4h.1M374.5 704h.1M375.6 702.6h.1M370 701.7h.1M386.9 687.5h.1M380.8 715.5h.1M375.6 696.1h.1M383.7 696h.1M372 702.5h.1M383.1 715.2h.1M376.3 691.2h.1M380.3 688.4h.1M377.6 695.2h.1M377.4 705.1h.1M381 701.3h.1M379.9 707.9h.1M383.9 688.6h.1M384.6 691.8h.1M387.3 696.1h.1M383.6 698.5h.1M386.5 691.2h.1M383.1 705.9h.1M379.1 696.9h.1M381 708.4h.1M381.1 682.7h.1M376.4 702.1h.1M376.1 702.7h.1M374.5 711.7h.1M375.2 692.1h.1M387.3 695.9h.1M376.4 707.8h.1M384.7 689.2h.1M379.6 695.1h.1M386.7 697h.1M378.7 703.1h.1M382.2 710.3h.1M386.7 705.9h.1M377.6 689h.1M374.1 709h.1M384.4 691.2h.1M382.5 699.4h.1M379.7 686.5h.1M384.5 714.8h.1M385.3 705h.1M376.5 709.6h.1M376.5 704.8h.1M382.3 691.9h.1M378.6 715.1h.1M385.1 702.4h.1M388.8 688.4h.1M389 685h.1M375.7 709.9h.1M381.9 688h.1M377.5 693h.1M375.4 711.3h.1M376.8 704.5h.1M384.5 705.7h.1M379.1 691.7h.1M385.4 698.8h.1M382.6 696h.1M386.2 698.5h.1M375 709.2h.1M382.7 707.9h.1M381.9 695.5h.1M382.2 688.8h.1M379.9 703.8h.1M382 687.9h.1M387.5 707.1h.1M378.2 704h.1M381.6 703.4h.1M380.8 687.1h.1M377.2 695.9h.1M376.4 719h.1M385.8 700h.1M390.7 700.7h.1M377 710.9h.1M390.9 697.5h.1M382.8 700.6h.1M382.6 706.9h.1M376.3 696.5h.1M375.8 705.9h.1M373 706.9h.1M388.4 692.2h.1M381.7 708.5h.1M379.5 698.4h.1M376.6 702.2h.1M389 704.5h.1M377.3 707.5h.1M384 691.6h.1M382.5 698.3h.1M379.9 688.9h.1M375.3 702.1h.1M380.5 697h.1M380.1 718h.1M384.3 698.5h.1M384.3 686.5h.1M382.6 697.5h.1M375.7 698.4h.1M387.2 696.6h.1M376.2 697.3h.1M389.1 692.5h.1M378.6 690.8h.1M373.2 713.6h.1M384.6 690.2h.1M375.9 696.9h.1M375.6 710h.1M379.8 698h.1M384.2 696.1h.1M376.1 685.8h.1M386.4 706.8h.1M376.4 716h.1M377 692.9h.1M390.8 687.5h.1M387.1 692.6h.1M373.5 703.9h.1M387.7 694.9h.1M377.6 706.3h.1M379.1 707.7h.1M383.4 690.4h.1M383.3 689.4h.1M380 694.1h.1M378.7 710.1h.1M381.6 700.9h.1M385.5 701.3h.1M378.1 700.5h.1M382.4 705.2h.1M379.9 690.6h.1M375 693.1h.1M383.2 697.3h.1M373.4 701.3h.1M377.5 702.1h.1M380.5 690.8h.1M381.3 714.8h.1M386.7 692.1h.1M377.4 712.9h.1M377.9 688.4h.1M382.8 690.6h.1M379.6 704.2h.1M377.8 706.9h.1M377.6 701.2h.1M380.3 703.7h.1M378.1 685.3h.1M378.3 697.1h.1M385.3 700.6h.1M385.4 696.6h.1M385.8 687.7h.1M388.2 699.2h.1M382.6 695.4h.1M391.7 701h.1M385.4 705.5h.1M378.1 706.4h.1M375.3 699.5h.1M379.3 708h.1M387.7 685.7h.1M381.5 686.3h.1M382.7 702.5h.1M383.4 691.8h.1M378.5 694.5h.1M376.9 699.6h.1M380.4 705.8h.1M383.5 700.1h.1M385.9 704h.1M379.3 706.3h.1M383.5 697.9h.1M386.4 707.1h.1M375.3 691.3h.1M377.4 693.9h.1M388.3 705.1h.1M378.4 696.4h.1M384.9 700.3h.1M381.9 705.3h.1M385.4 703.3h.1M379.9 700.4h.1M381.6 703.4h.1M385.7 704.3h.1M385.7 690.8h.1M376.8 696.9h.1M379.6 697.6h.1M375.6 699.8h.1M378.3 695.9h.1M376 700.4h.1M384.1 695.4h.1M382.7 700.7h.1M386.1 695h.1M382.4 705.3h.1M374.5 707.6h.1M372.2 698h.1M384.5 705h.1M380.2 695.4h.1M385.2 694h.1M378.3 701.6h.1M381.2 688.4h.1M381.3 704h.1M384.3 708.8h.1M378.2 697.5h.1M375.4 695.1h.1M373.1 702h.1M386.5 706.1h.1M375.9 703.9h.1M377.1 690.8h.1M387.2 701.4h.1M380.1 704.2h.1M380.6 715.9h.1M383.9 701.7h.1M371.3 700.2h.1M381.6 687h.1M380.1 684.2h.1M371.8 715.3h.1M375.3 717.5h.1M382.4 694.9h.1M384.1 690.2h.1M378.4 705h.1M374.6 711.6h.1M385.9 702.9h.1M379.1 691.8h.1M387 685.7h.1M382.2 679.3h.1M380.5 697h.1M373.6 703.1h.1M383.7 706.1h.1M381.8 695.6h.1M370.4 698.3h.1M382.5 689.9h.1M379.9 694.9h.1M373.7 698.9h.1M375.9 711.2h.1M377.6 694.3h.1M373 703.8h.1M381.6 711.3h.1M376.2 702.4h.1M371.6 701.4h.1M371.7 710.9h.1M382.8 710.1h.1M380.4 709.1h.1M387.1 703.3h.1M375.6 702.3h.1M386.2 686.3h.1M375.2 700h.1M378.7 709.7h.1M378.7 692.2h.1M386.8 690.8h.1M382.9 718.7h.1M375.7 698.9h.1M381.3 707.7h.1M375.9 700.3h.1M378.4 695.4h.1M379.3 691.7h.1M385.3 694.5h.1M385.4 692.1h.1M384.4 693.7h.1M372.8 702.7h.1M379.9 694.1h.1M380.7 712.9h.1M380.7 714.3h.1M385.3 684.2h.1M377.3 700.7h.1M390.1 683.7h.1M384.9 683.8h.1M379.6 690.5h.1M383.6 705.6h.1M378.1 718.1h.1M381.5 697.6h.1M380.5 709.6h.1M379.1 690.3h.1M378.6 696.6h.1M384.7 684h.1M377.5 690.4h.1M377.4 686.1h.1M379.8 698.9h.1M386.5 708.8h.1M378.8 687.7h.1M381.3 707.9h.1M379.9 700.4h.1M378.8 685.4h.1M387.5 695.2h.1M384.2 689.2h.1M374.5 694.7h.1M374.6 707.9h.1M386.2 703.5h.1M380.5 698.2h.1M381.7 709.7h.1M377.5 692.7h.1M383.1 698.9h.1M383.6 695.1h.1M381.2 698h.1M389.4 701.5h.1M374.2 701.6h.1M379.5 703.3h.1M380.3 703.2h.1M384 698.9h.1M385.4 699.9h.1M382.5 705.3h.1M384.8 713.7h.1M386.3 689.4h.1M377.3 710.1h.1M379.2 704.6h.1M380.6 691.7h.1M380.8 689.9h.1M373.3 714.3h.1M380 702.2h.1M382.6 709.4h.1M384.4 703.4h.1M379.7 697.5h.1M386.3 700.5h.1M379.9 704.8h.1M372.7 703.2h.1M382.2 703.5h.1M371.4 696.9h.1M384.5 699.8h.1M372.4 712.7h.1M382.8 701.8h.1M380.6 699.7h.1M378.1 709.7h.1M371.5 698.2h.1M385.9 706.2h.1M375.2 700.1h.1M380.6 694.6h.1M385.6 689.8h.1M381.4 701.2h.1M379.7 704.2h.1M380.2 702.3h.1M387 690.6h.1M380.4 708h.1M377.1 701.3h.1M378.2 710.1h.1M374.9 704.9h.1M378.8 706.9h.1M383.7 690.7h.1M386.1 680h.1M379.1 682.8h.1M388.1 689.3h.1M378.5 696.9h.1M386.4 699.7h.1M380.7 697.9h.1M385 693.4h.1M379.6 700.1h.1M383.4 699.6h.1M386.9 693.3h.1M374.7 711.3h.1M381.9 688.7h.1M384.7 711.1h.1M386.5 685.8h.1M376.9 689.7h.1M382.9 703.7h.1M381.9 714.4h.1M383.4 689.4h.1M380.8 694.6h.1M380.8 700.1h.1M375.3 691.6h.1M377 717.2h.1M384.4 698.1h.1M381.7 693.9h.1M387.5 693.9h.1M383.7 689.5h.1M373.3 705.1h.1M374.7 690.3h.1M382.5 694.1h.1M381.7 686.9h.1M384.9 692.3h.1M385.3 702.3h.1M382.3 691.7h.1M377.9 706.8h.1M374.6 696.7h.1M383.2 696.9h.1M388.2 684.4h.1M370.8 706.5h.1M390 703.4h.1M375.5 703h.1M377.7 692.1h.1M381.6 696.8h.1M380.6 689.6h.1M381.4 700.8h.1M383.7 697.8h.1M377.1 714.8h.1M377.3 698h.1M384.2 700.4h.1M382.5 699.8h.1M383.2 697.9h.1M380 712.2h.1M381.9 704.2h.1M383.9 709.6h.1M390.2 683.7h.1M382.7 711.6h.1M380.4 704.2h.1M379 690h.1M377.5 696.7h.1M379.7 707.3h.1M372.1 693.6h.1M375.5 703.7h.1M384.7 705.3h.1M383.6 689.2h.1M382.1 697.3h.1M377.3 696.8h.1M382.3 697.6h.1M375.5 703.1h.1M382.5 692.6h.1M387.3 695.3h.1M385.6 685h.1M377.6 698.8h.1M386.4 699.3h.1M383.1 698.1h.1M381.4 691h.1M381.6 694.7h.1M380.9 699.4h.1M380.8 705.7h.1M383.2 700.5h.1M372.9 708.5h.1M381.2 701.5h.1M381.7 687.7h.1M376.4 700.7h.1M377.8 704.3h.1M376.7 697.5h.1M381.1 711h.1M383.3 689.4h.1M381.5 700.5h.1M376.3 693.1h.1M385.8 685.6h.1M374.5 699.1h.1M386.2 702.6h.1M386 694.9h.1M374.4 702h.1M380.7 703.1h.1M370.8 708.2h.1M377 700.9h.1M388.1 693.6h.1M385.7 696.2h.1M390.6 698.2h.1M370.7 711.3h.1M390 686.3h.1M382.5 699h.1M382.7 689.5h.1M376.9 709.4h.1M379.1 708.2h.1M384.5 699.1h.1M382.5 701.1h.1M379.9 691.8h.1M382.3 697.5h.1M375.8 712.9h.1M381.8 699.1h.1M371.8 708.4h.1M381.8 700.6h.1M372.1 715.2h.1M380.9 710.3h.1M382.6 694.1h.1M390.3 692.7h.1M372.8 707.9h.1M389.7 708h.1M384.9 698.6h.1M386.1 701.9h.1M372.9 711.4h.1M379.4 713.8h.1M375.4 700.3h.1M384.2 705.9h.1M384.3 711.4h.1M383 702.4h.1M386.1 696.8h.1M380.5 704.5h.1M379.9 698.3h.1M381.9 690.1h.1M377.4 696.3h.1M384.8 691.5h.1M376.1 712.6h.1M383 706.8h.1M373.1 700.7h.1M370.4 708.7h.1M373.3 697.5h.1M377.9 703.2h.1M383.2 697.2h.1M382.2 698.3h.1M380.6 710.7h.1M372.6 706.9h.1M387 701.1h.1M386 708.7h.1M385.8 691.1h.1M383.3 690.2h.1M381.7 704.2h.1M380 694h.1M381.8 694.9h.1M378.9 703.6h.1M389.7 695.5h.1M379.7 687.2h.1M376.6 691.3h.1M383.2 706.2h.1M390.3 693.5h.1M372.6 715h.1M387.1 695.1h.1M377.8 689.7h.1M381.1 706h.1M378.9 708.8h.1M380.2 706.1h.1M376.7 693.7h.1M385.8 707.8h.1M388.8 705h.1M373.4 707.2h.1M379.1 705.3h.1M383.9 692.9h.1M383 693.2h.1M384.2 699.7h.1M388 708.5h.1M371.3 694.7h.1M384.3 705.6h.1M380.3 705.2h.1M383.2 704.1h.1M381.3 690.9h.1M380.6 711.4h.1M386.7 682.3h.1M376.4 702.5h.1M383.2 708.2h.1M386.7 708.2h.1M386.8 699.1h.1M376.1 697.1h.1M383.1 692.6h.1M382.8 700h.1M389.2 694.7h.1M382.2 706.3h.1M377.7 696.3h.1M381.6 689h.1M385.7 686.8h.1M380.2 692.7h.1M385.4 699.7h.1M379.4 697.9h.1M380.4 708.1h.1M380.6 697.4h.1M381 688.5h.1M381.3 704.8h.1M384.1 688.9h.1M380.9 704.5h.1M380.7 689.6h.1M381.2 702.3h.1M381 689.2h.1M380.2 696.4h.1M381 715.1h.1M378.1 700.6h.1M377.6 705.3h.1M380.5 693.5h.1M382.3 707.1h.1M381.4 688.5h.1M386.3 703.1h.1M382.6 703h.1M384.7 692h.1M382.1 703.2h.1M386.7 691.3h.1M379.9 689.5h.1M376.2 708.2h.1M382.1 708.8h.1M378.2 697.9h.1M379.2 703h.1M388 694.7h.1M383.4 691.4h.1M381.6 703.5h.1M380.9 694.4h.1M380.9 702h.1M381.2 702.2h.1M383.8 711.5h.1M376.6 704.5h.1M375.1 705.3h.1M383.3 710.9h.1M384.3 702h.1M377 705.2h.1M384 707.4h.1M373.6 711h.1M380.8 692.5h.1M389 696.2h.1M380.9 696h.1M387 683.4h.1M376.9 697.6h.1M381.3 718.2h.1M371.4 710.5h.1M382.1 697.4h.1M380.1 696h.1M378.6 707.4h.1M378.3 693.3h.1M376 691.8h.1M377.9 701.6h.1M379 694.1h.1M370.9 697.2h.1M383.8 708.1h.1M380.5 691.6h.1M380.6 684.2h.1M378.4 697h.1M376.5 690.7h.1M383.4 701.2h.1M380.8 693.5h.1M379.4 713h.1M384.4 709.8h.1M382.5 714.2h.1M375.2 699.1h.1M380.1 693.7h.1M381.8 697.1h.1M380.8 708.8h.1M389.3 691.2h.1M378.4 700.9h.1M379.7 711.4h.1M383.4 679.3h.1M381.7 705.3h.1M378.8 692.4h.1M381.2 693.7h.1M383.7 711h.1M380.8 693.3h.1M377.7 701.5h.1M385.5 680.2h.1M377.9 717.2h.1M381.2 710.5h.1M378.9 698.6h.1M379.7 708.8h.1M378.7 708.1h.1M371.9 711.9h.1M377.7 707.1h.1M378.9 711h.1M378.1 696.9h.1M378.3 683.9h.1M387.1 696.2h.1M377.1 683.8h.1M382.4 702.8h.1M386.1 704h.1M381.6 715.2h.1M381.1 688h.1M383.7 705.9h.1M381.4 696.2h.1M377.5 705h.1M380.6 691.1h.1M387.7 697.5h.1M384.1 693.3h.1M382.7 708.9h.1M375.1 696.7h.1M372.3 691.3h.1M382.1 703.1h.1M387.9 682.5h.1M378.2 698.3h.1M381.7 702.4h.1M387 700.1h.1M385.4 690.5h.1M376.8 692.1h.1M376.2 693.7h.1M380.5 689.6h.1M380.9 703.2h.1M381.8 710.5h.1M380.4 689.1h.1M379.6 695.2h.1M377.8 690.6h.1M376.3 694.1h.1M383.7 698.6h.1M384.6 700.3h.1M376.6 684.4h.1M379.2 704.8h.1M383.7 701.7h.1M376.2 713.8h.1M377.1 693.6h.1M383.8 688.8h.1M384.7 689.6h.1M381 700.5h.1M384.1 699.7h.1M383.4 679.8h.1M379.7 699.1h.1M381.8 704.3h.1M380.6 698.3h.1M377.2 698.8h.1M377.1 702.1h.1M375.4 705.2h.1M387.6 693.7h.1M385.3 707.1h.1M385 694.9h.1M382.5 710.1h.1M383.7 695.4h.1M380.1 708.3h.1M383.4 688h.1M382.9 699.3h.1M392.2 700.2h.1M388.5 697.5h.1M378.3 703.6h.1M380.2 695.1h.1M388.7 711.2h.1M378.1 707.2h.1M376.9 691.2h.1M387.6 696.3h.1M380.1 688.9h.1M381.6 703.2h.1M380.5 703h.1M388.3 691h.1M370.3 701.5h.1M373.5 702h.1M384 695.7h.1M380.7 704.7h.1M385.8 686.8h.1M377.4 698h.1M372.9 713.8h.1M382.9 699h.1M373.2 689.4h.1M384.6 703.6h.1M377.4 701.2h.1M375.2 712.5h.1M380.8 701.5h.1M382.2 703.8h.1M382.4 688.9h.1M381.5 697.7h.1M377.6 711h.1M371.6 692h.1M382.3 692.6h.1M380.5 698.4h.1M376.9 715h.1M380.9 704.9h.1M383.3 700.7h.1M387.4 713.5h.1M377.2 693.9h.1M374.7 694.8h.1M382.5 702.5h.1M388.3 699.2h.1M386.1 691.7h.1M383.4 694.8h.1M376 701.7h.1M390.4 690.9h.1M374.3 707.8h.1M375.1 705.1h.1M377 709.9h.1M380.7 706.7h.1M375 697.6h.1M380.4 705.6h.1M374 689.8h.1M384.6 696.3h.1M376.1 703.9h.1M380.2 691.8h.1M371.3 711.8h.1M375.6 700.1h.1M385.9 700.8h.1M378.9 707.8h.1M377 703.2h.1M377 698.9h.1M376.7 693.8h.1M387.2 704.7h.1M380.3 700.3h.1M377.6 682.4h.1M379.9 694.7h.1M375.3 707.8h.1M375.5 701h.1M388.6 693.2h.1M381.8 686.4h.1M375.2 705.3h.1M382.5 703.7h.1M379 703.7h.1M377.5 705h.1M380.9 695.3h.1M385.3 703.2h.1M385.9 697.4h.1M373.1 702.6h.1M387 701.4h.1M383.5 698.4h.1M374 716.6h.1M374 696.9h.1M377.5 699.3h.1M373.3 700.6h.1M374.9 710.6h.1M390.9 704.2h.1M385.7 706.7h.1M377 691.9h.1M386.4 687.6h.1M387.3 682.2h.1M381.2 700.7h.1M383.3 706.4h.1M379.4 690.2h.1M378.8 698.7h.1M383.8 702.5h.1M380.9 698.2h.1M379 696.9h.1M376.8 692.1h.1M383.8 698.3h.1M379.3 720h.1M383 708.2h.1M379.8 699.3h.1M389.7 692.3h.1M381.6 712.2h.1M382.5 702.1h.1M379.8 693.3h.1M381.6 684.8h.1M379.4 699.5h.1M381 697.3h.1M373.3 707.7h.1M375.1 703.1h.1M379.7 705.3h.1M383.3 705.9h.1M381.2 702.8h.1M375.6 699.2h.1M381 704.7h.1M380.6 708.6h.1M380.5 697.5h.1M383.6 699.4h.1M381.6 716.9h.1M387.5 695.4h.1M384.6 693.8h.1M379.1 702.8h.1M375.5 707.1h.1M386.8 692.9h.1M382.5 693.9h.1M384.9 708.5h.1M391.7 696.6h.1M380.1 706.1h.1M384.2 695h.1M380.9 716.5h.1M376.2 707.3h.1M379.1 703.7h.1M377.5 703.9h.1M388.2 706.2h.1M385 699.8h.1M385.3 710.8h.1M385.1 714.1h.1M379.9 692.3h.1M379.9 711.2h.1M381.9 709.9h.1M379.7 707.7h.1M385.2 680.3h.1M381.2 690.9h.1M380.7 690.8h.1M383 699.7h.1M377.4 715.3h.1M383.9 686.6h.1M385.5 705.5h.1M378.5 696.2h.1M380.9 700.2h.1M380.8 682.9h.1M376.9 700.4h.1M381.4 696.7h.1M391.3 698.9h.1M383.2 698.1h.1M384.1 696h.1M378.6 701.4h.1M380 715.9h.1M373.9 691.8h.1M379.2 726.9h.1M381.1 685.9h.1M388.5 683.4h.1M377.9 699h.1M383.4 721.2h.1M374.2 696.5h.1M388.8 674.9h.1M388.9 699.1h.1M375.7 701.3h.1M373 705.3h.1M372.3 712h.1M373.3 720.6h.1M377.8 709.2h.1M386.2 683.4h.1M385.6 699.6h.1M376.2 708.6h.1M376.3 709.5h.1M377.9 695.1h.1M377.5 707.7h.1M379.3 707.3h.1M393.6 692.5h.1M364 697.2h.1M374.9 715.5h.1M395.9 709.7h.1M376.5 706.9h.1M373.1 701.8h.1M384 724.4h.1M391.6 695.2h.1M382.7 705.1h.1M382.5 712.4h.1M381.6 703.1h.1M385.8 707.2h.1M377.3 706.2h.1M375.3 705.2h.1M383.6 703.9h.1M372.1 685h.1M386.6 694.4h.1M393 688.1h.1M383.9 705.1h.1M383.1 698.6h.1M387.5 702.9h.1M379.9 726.5h.1M380.6 681.1h.1M375.4 702.1h.1M377.8 696.5h.1M377.8 720h.1M390.7 681.4h.1M374.5 729.5h.1M381.2 711.9h.1M377.2 699h.1M380.7 701.5h.1M389 705.5h.1M369.7 687h.1M388.7 682.6h.1M376.3 699.3h.1M390.1 710.7h.1M381.2 671.4h.1M386.8 685.4h.1M387.2 688.6h.1M383.5 666.3h.1M382.8 687h.1M384.8 670.2h.1M381.5 673.7h.1M378.7 684.4h.1M383.4 675.7h.1M382 677.5h.1M379.5 678.2h.1M382.3 684.1h.1M382.1 665.8h.1M382.3 682.3h.1M383.7 659.7h.1M378.9 675.5h.1M379 678.2h.1M384 677.9h.1M383 686.5h.1M383.3 674.9h.1M383 671.1h.1M379.1 686.7h.1M383.3 676.9h.1M379.2 686.7h.1M380.7 682.6h.1M381.9 685h.1M383.2 674.7h.1M382.1 674.8h.1M381 676.9h.1M389.2 681.7h.1M383.7 677.2h.1M382.7 660.7h.1M384.5 674.4h.1M383 680.9h.1M378.4 688.8h.1M379 676.4h.1M385.1 688.9h.1M383.8 681h.1M374.5 687.4h.1M382.5 661.4h.1M381.6 663.1h.1M381.8 679.8h.1M382.6 676.1h.1M383.5 670.2h.1M385.5 688h.1M385.4 688.9h.1M380.7 674.7h.1M381.5 677.3h.1M382.7 679.5h.1M382.7 670.2h.1M381.7 684.4h.1M384 681.7h.1M385.4 685.6h.1M383.8 679.2h.1M378.8 680h.1M381.5 668.5h.1M382.8 670.3h.1M386.8 682.6h.1M389.5 686.9h.1M384.1 681.7h.1M382.8 679.7h.1M381.6 676.5h.1M382.4 680.3h.1M383 672.4h.1M383.1 667.9h.1M384.5 677.7h.1M382.2 682.7h.1M384.3 684.4h.1M385 688.7h.1M385.5 679.7h.1M384.1 684h.1M381.7 670.2h.1M382.3 682.9h.1M381.8 670.5h.1M378 687.7h.1M373.3 683.2h.1M383.4 661.5h.1M381.9 671.4h.1M385.4 688h.1M378.5 676.3h.1M380.1 677.8h.1M375 684.9h.1M382.5 681.1h.1M380.4 670.9h.1M378.2 681.8h.1M380.6 680.3h.1M383.5 668.6h.1M383.2 683.1h.1M382.5 671.3h.1M380.6 678.9h.1M382 676.4h.1M385.3 684.9h.1M388.3 683.5h.1M384.4 689.3h.1M385.2 687.3h.1M382.4 675.1h.1M381.4 682.5h.1M381.5 669.4h.1M383.8 677.3h.1M386.5 688h.1M381.9 684.8h.1M385.6 673.6h.1M378.9 689.4h.1M382.4 678.4h.1M384.1 675.4h.1M379.3 680.8h.1M383 673h.1M378.9 679.1h.1M385.6 685.6h.1M383.4 677.3h.1M383.7 686.9h.1M381.3 683.3h.1M382 679h.1M388.3 682.5h.1M381.7 682.9h.1M384.1 676h.1M380.7 688.4h.1M382.5 677.4h.1M383.8 675h.1M379.6 686.5h.1M383.2 676.7h.1M381 681.8h.1M381.9 662.7h.1M382.3 679.1h.1M383.5 675.9h.1M384.1 687.2h.1M383.3 687.6h.1M378.9 684.3h.1M380.3 684.2h.1M380.8 687.7h.1M382.7 684.3h.1M382.4 670.5h.1M381.5 668.5h.1M383.2 676.6h.1M384.4 680.9h.1M384.7 686.2h.1M382.6 677.9h.1M385.8 674.6h.1M380.8 689h.1M377.8 683.9h.1M377.6 687.6h.1M382.3 665.6h.1M381.2 675.8h.1M373.1 686.4h.1M384.6 676.7h.1M384.3 676.8h.1M378.4 684.6h.1M380.4 682.4h.1M379.5 683h.1M381 682.4h.1M384.5 683.9h.1M383.8 674.2h.1M381 679.3h.1M382.1 675.3h.1M384.4 686.8h.1M380.2 674.1h.1M378.8 687.5h.1M383.4 672.2h.1M389.7 677.8h.1M385.4 687.3h.1M389.3 685.9h.1M380.9 669.1h.1M380.4 684.5h.1M381 675.5h.1M383.7 672.4h.1M381.4 674.1h.1M385.6 674.5h.1M383.9 675.6h.1M382.8 687.4h.1M388.9 686.8h.1M386.7 680.1h.1M383.5 660.8h.1M380.8 686.7h.1M378.7 678.1h.1M382.3 686.4h.1M385.7 684.3h.1M381.2 675.2h.1M383.7 680.4h.1M379.2 673.9h.1M381.6 668.9h.1M379.1 684.4h.1M381.4 671.1h.1M378.9 678.2h.1M383 679.9h.1M381.3 682.6h.1M380.8 673.9h.1M379.9 671.6h.1M384 688.9h.1M377.2 682.8h.1M384.2 680.8h.1M378.5 678.1h.1M385.7 671.8h.1M388.1 687.2h.1M383.3 663.1h.1M383.5 667.6h.1M384.3 682.4h.1M381.1 682.5h.1M381 680.1h.1M382.2 685.6h.1M392.7 689h.1M381.8 682h.1M384.4 678.5h.1M382.6 673.8h.1M383.9 686.2h.1M387.7 684.3h.1M384.4 675.1h.1M384.7 689.3h.1M386.4 679.9h.1M385.7 683.5h.1M380.4 677.7h.1M383.5 668.5h.1M384.6 669.1h.1M382.1 687.6h.1M381.3 684.3h.1M378.1 677.9h.1M380.8 675.8h.1M378.8 672.9h.1M385.1 674h.1M385 677.2h.1M380.3 672.4h.1M383.4 659.7h.1M386.3 682.1h.1M383.8 676.9h.1M387 676.2h.1M382.7 673.2h.1M383.5 688.1h.1M383.5 678.9h.1M380 675.6h.1M381.5 673h.1M381.9 670.6h.1M382.5 688.4h.1M382.2 677.2h.1M380.5 687.7h.1M383.1 674h.1M386.6 673.9h.1M378.2 681.7h.1M380.1 676.8h.1M382.4 671.9h.1M377.1 681.3h.1M381.8 666.9h.1M381.6 678.1h.1M381 680.9h.1M380.9 671.6h.1M383.4 682.4h.1M380.1 685.7h.1M382 661.8h.1M379.4 673.4h.1M383.9 687.7h.1M383 684.9h.1M383.1 685.4h.1M383.3 682.2h.1M382.3 672.3h.1M379.5 674.3h.1M382.1 667.5h.1M383.5 666.4h.1M383.8 685.8h.1M382.5 683.1h.1M383.1 667.2h.1M380.8 682.5h.1M376.4 680.3h.1M384 654h.1M382 660h.1M387 671h.1M443 692h.1M443 702h.1M417 711h.1M478 727h.1M516 697h.1M517 715h.1M537 706h.1M548 703h.1M541 730h.1M385 768h.1M378 764h.1M379 749h.1M374 728h.1M376 746h.1M369 711h.1M394 705h.1M400 700h.1M405 712h.1" stroke="#16a2c3" stroke-width="2.6" stroke-linecap="round" fill="none" opacity="1.0"/><path d="M384 874.9h.1M376.9 882.3h.1M384.7 877.5h.1M379.6 873.9h.1M398.3 875h.1M375.8 873.8h.1M387.1 875h.1M389 874.7h.1M393.5 872.7h.1M375.9 878.2h.1M392.9 871.1h.1M379.1 880.3h.1M391.2 874.4h.1M392 879.3h.1M389.3 873.6h.1M386.3 875.2h.1M373.2 870.6h.1M398.2 875.4h.1M378.5 875h.1M389.1 876.8h.1M383.8 874.7h.1M367.9 878.2h.1M385.6 872.3h.1M384.6 869.4h.1M380.2 878.3h.1M381.1 877.8h.1M378.7 873.4h.1M381.5 873.7h.1M381.6 882.1h.1M383.2 876h.1M393.7 868.4h.1M373.7 876.2h.1M372.2 872.6h.1M376.7 877.7h.1M379.2 874.3h.1M380.8 882.5h.1M382.9 880h.1M375.7 880.9h.1M390.8 875.5h.1M379.8 872.9h.1M376.6 881.1h.1M373.5 873.9h.1M383.7 878.2h.1M381.4 880.8h.1M375.5 873.1h.1M394.4 870.7h.1M387.8 873.2h.1M394.2 871.4h.1M394.3 878h.1M383.9 880.8h.1M393.2 875.4h.1M393.1 868.8h.1M388.6 881h.1M387.5 871.6h.1M382.3 877.6h.1M392.4 872h.1M370.3 880h.1M379.7 871.8h.1M387.5 879.3h.1M397.7 871.8h.1M393.6 879.1h.1M377.5 872.4h.1M371.5 880.4h.1M388.9 877.1h.1M381.3 873.3h.1M391.1 866.5h.1M373.8 878.6h.1M380.9 873.5h.1M386.4 873.9h.1M388.1 876.1h.1M392.8 867.9h.1M378.6 875.5h.1M375.7 876h.1M387.2 872.9h.1M382.3 866.8h.1M382.4 881.3h.1M378.3 872.9h.1M388.7 872.3h.1M386.4 878.4h.1M371.7 872.5h.1M378.7 874.9h.1M390.8 873.2h.1M384.8 871.8h.1M390.6 871.8h.1M377.5 870.3h.1M383.1 879.4h.1M390.3 872.7h.1M379.5 878.1h.1M382.7 878.9h.1M385.8 871h.1M382.4 876.3h.1M385.9 876h.1M388.2 876h.1M386.1 879.6h.1M384.8 878h.1M376.2 874.9h.1M385.1 881.1h.1M371.5 874.7h.1M377.6 875.5h.1M387.2 873.9h.1M386.3 878.8h.1M391.4 877.9h.1M391.5 878.8h.1M392.3 873.7h.1M380.6 877h.1M371 873.5h.1M390.7 877.2h.1M380.2 879.3h.1M381.8 877.5h.1M369.6 880.9h.1M379.5 876h.1M387.6 874.3h.1M388.8 873.7h.1M385.9 878.3h.1M386.5 875.1h.1M391.4 872.1h.1M384 878.3h.1M368.7 878.5h.1M395.4 872.4h.1M381.8 875.4h.1M384.7 873.3h.1M400.3 873.7h.1M378.7 882.2h.1M387.5 881.3h.1M382.7 874.1h.1M383.8 877.9h.1M394.4 875.9h.1M379 877.5h.1M387.6 875.4h.1M390.5 874.1h.1M387.1 869.9h.1M393.3 871h.1M382.9 868.2h.1M387.8 872.7h.1M381.4 878.4h.1M388 874.7h.1M393.4 873.9h.1M378.6 875.8h.1M386.4 875.5h.1M393.6 877.6h.1M382.2 879.6h.1M378.7 877.2h.1M380.6 875.7h.1M387.5 873.4h.1M382.2 881.2h.1M391 873.1h.1M377.8 877.3h.1M390.2 871.1h.1M375.6 875.4h.1M387.5 876.7h.1M382.2 876.2h.1M386.6 872.8h.1M388 872.6h.1M390 873.5h.1M377.8 876.7h.1M374.2 871h.1M378.1 873.4h.1M371 875.1h.1M379.3 874.8h.1M385.4 874.4h.1M383.1 874.9h.1M376.7 874.4h.1M374.3 877.9h.1M373.9 876.1h.1M382.6 878.9h.1M384.4 872.4h.1M383.5 879.5h.1M381.9 874.2h.1M396.3 873.1h.1M386.9 879.7h.1M392.6 876.8h.1M384.3 875.6h.1M380.2 878.8h.1M389.4 879.4h.1M388.7 872.4h.1M381.7 872.1h.1M379.6 874h.1M391.7 868.9h.1M380.5 878.7h.1M387.6 874.4h.1M383.6 873.2h.1M393.5 871.1h.1M378.5 874h.1M387.4 872.1h.1M377.5 873h.1M386.7 873.8h.1M390.4 872.6h.1M390.2 875.4h.1M384.7 869.1h.1M388.2 875.4h.1M391 868.7h.1M390.3 873.6h.1M397.6 869.3h.1M384 877.9h.1M390.6 877.9h.1M374.2 879.4h.1M385.1 881.4h.1M396.5 874.1h.1M389.1 876.5h.1M391 870.7h.1M382.2 875.5h.1M386.8 878.8h.1M383.6 873.2h.1M392 876.8h.1M383.9 874.9h.1M391.1 872.9h.1M383 879h.1M377.6 875.5h.1M387.8 874.3h.1M385.4 876.4h.1M376.1 879.9h.1M388.4 876.5h.1M377.5 882.3h.1M378.8 878.9h.1M382.5 876.4h.1M393.8 876.1h.1M372.6 876.5h.1M385.4 879.9h.1M383.6 872.5h.1M389.4 874.6h.1M383.5 875.5h.1M384.6 876.8h.1M378.7 880.9h.1M372.5 872.7h.1M397 874.2h.1M381.8 879h.1M385 872.9h.1M391.6 880h.1M380 872.6h.1M382 875.3h.1M388.6 873h.1M373.1 882.3h.1M391.3 879.3h.1M391.7 868.4h.1M396.7 869.9h.1M383.7 879.7h.1M386.1 877.4h.1M392.7 876.8h.1M398.1 875h.1M392 869.1h.1M394.1 874.3h.1M389.1 875h.1M379.7 875.9h.1M377.5 869.7h.1M388.7 875h.1M379.3 873.7h.1M379.7 879.7h.1M388.4 876.6h.1M381.2 874.9h.1M379.8 879.9h.1M377.2 882.7h.1M387.2 877.4h.1M387.8 877.6h.1M371.2 874.5h.1M379.3 869h.1M386.3 877.1h.1M379.1 872.6h.1M381.1 874.1h.1M376.7 877.5h.1M386.5 874.9h.1M389.8 878.2h.1M385.4 878.8h.1M384 870.6h.1M391.7 879.2h.1M389.2 868.4h.1M383.9 870.8h.1M379.7 874.6h.1M376.7 876.8h.1M384.4 879.3h.1M378.2 868.3h.1M396.8 870.9h.1M381.3 878.2h.1M396.6 871.3h.1M386.2 875.3h.1M388.6 875.4h.1M379 872.9h.1M371.7 872.9h.1M376.3 873.5h.1M372.8 882h.1M382.5 873.6h.1M381.1 872.9h.1M376.9 882.3h.1M386.3 878.5h.1M392.4 876.5h.1M386 873.7h.1M376.5 878.4h.1M392.1 878.7h.1M374.5 878.4h.1M388.8 878.5h.1M373.2 879.6h.1M390.7 876.7h.1M389.1 870.7h.1M377.9 878.2h.1M381.4 874.8h.1M386 875.3h.1M382.5 877.8h.1M382.3 875.3h.1M398.7 874.5h.1M381.9 873h.1M389 871.7h.1M389.8 868.7h.1M387.8 872h.1M384.8 875.8h.1M383.5 874.8h.1M393.2 867.4h.1M386.6 873.9h.1M388.3 874.6h.1M384.2 869.5h.1M386.7 870.5h.1M377.1 871.5h.1M381.6 877.3h.1M378.5 872.1h.1M382.2 880.3h.1M376.9 873.3h.1M370.5 875.7h.1M389.4 873.2h.1M386 880.7h.1M380.8 877.6h.1M383.6 875.7h.1M380.4 874.5h.1M388.6 879.7h.1M378.2 878.1h.1M386.1 876.9h.1M385.4 872.4h.1M383.4 882.9h.1M375.5 877.9h.1M371.1 875.1h.1M380.1 877.2h.1M381.7 869.3h.1M384.1 871.8h.1M379.9 874.1h.1M375.9 876.2h.1M388.1 877h.1M395.9 871.9h.1M387.5 872h.1M390.3 875.3h.1M388.5 874.6h.1M383.2 875.6h.1M387.9 879.7h.1M381.1 871h.1M379.7 875.6h.1M382.7 875.1h.1M392.4 869.1h.1M394.9 873.9h.1M383.1 876h.1M386.7 870.9h.1M384.7 878.3h.1M385.4 877h.1M382.3 871.5h.1M385.9 871.8h.1M384.9 880.1h.1M379.8 876.7h.1M380.5 876.1h.1M385.1 873.8h.1M369.1 880.5h.1M392.3 870.1h.1M379.8 879.4h.1M383.8 871.7h.1M379.5 877.5h.1M381 874.6h.1M383.4 883.2h.1M382.1 877.5h.1M387.1 874.3h.1M387.9 872.1h.1M383.2 867.6h.1M381.5 880.9h.1M392.4 869.9h.1M385.3 871.1h.1M393.9 875.5h.1M385.3 876.4h.1M381.4 880.2h.1M374.1 882.5h.1M382.5 868h.1M377 872.4h.1M380 877.7h.1M383.9 878.2h.1M386.4 873.9h.1M374.5 879.3h.1M374.2 871.4h.1M386.7 880h.1M392.1 873.3h.1M381.9 882h.1M379 873.5h.1M375.4 869.5h.1M373.3 875.9h.1M378.4 879.8h.1M388.1 875h.1M386.9 872.2h.1M389.2 874.5h.1M379 871.3h.1M380.5 873h.1M385 878.3h.1M379.4 872h.1M372.3 874.9h.1M376.1 874.4h.1M374 872.4h.1M386.4 873.7h.1M387.6 878.7h.1M375.1 878.2h.1M377.3 870.8h.1M379.1 871.9h.1M370.5 879.7h.1M379.7 869.5h.1M394.7 869.2h.1M391.4 873.7h.1M371 878.7h.1M382.1 879.7h.1M375.6 876.1h.1M381.2 878.2h.1M385.8 875.8h.1M388.2 875.7h.1M380.4 878.5h.1M383.3 869.6h.1M390.7 871.8h.1M379.2 880.7h.1M383.2 876.5h.1M382.4 880.5h.1M379.4 876.8h.1M383.5 875.6h.1M372.2 872.5h.1M394.3 872.2h.1M375.7 878.4h.1M370.1 872.2h.1M376.8 873.2h.1M384 873.1h.1M382.2 875h.1M390.2 875.6h.1M390.7 874.5h.1M384.1 881.2h.1M371.2 876.8h.1M388.8 880.4h.1M389.3 876.9h.1M387.7 870.9h.1M385.1 870.5h.1M378.1 868.8h.1M387.4 875.6h.1M382.1 879.1h.1M381.1 878h.1M375 878.6h.1M390.6 878h.1M388.9 877.2h.1M375.9 873.9h.1M384.1 873.7h.1M378.2 872.1h.1M393.1 876.1h.1M381.3 870.7h.1M388.5 880.2h.1M378.8 873.5h.1M390.1 870.7h.1M388.5 870.8h.1M396.6 878h.1M384.7 870.8h.1M382.6 875.2h.1M385.2 871.7h.1M392.5 872h.1M391.1 881h.1M392.3 872.9h.1M389.3 873.5h.1M374.8 874.7h.1M382.5 868.8h.1M381.3 868.3h.1M380.6 874h.1M379.1 878.7h.1M371.8 875.6h.1M380.6 876.2h.1M371.5 876.4h.1M371.9 877.7h.1M379.9 876.4h.1M390.7 872.3h.1M388.7 867.3h.1M386.9 873.7h.1M379.9 873h.1M383.9 872.5h.1M379.4 872.4h.1M380.8 878.8h.1M380 881.8h.1M382.3 867.4h.1M390.7 873.6h.1M383.4 881.3h.1M390.5 870h.1M382.1 878.3h.1M383.7 876.2h.1M386.5 869.1h.1M376.6 872h.1M388.4 867.3h.1M373.6 882.7h.1M388.4 873h.1M385 882.6h.1M388.4 877.6h.1M385.7 883.3h.1M380.1 875.1h.1M381.6 877.9h.1M381.9 873.2h.1M380.8 877.6h.1M382 876.1h.1M379.8 877h.1M389 869.6h.1M373.4 881.7h.1M381.9 878.6h.1M378 879.8h.1M389 872.3h.1M384.6 866.3h.1M380.6 867.1h.1M393 868.6h.1M384.2 873.3h.1M394.9 876.2h.1M383.3 873.3h.1M375.9 876.6h.1M385.9 873.1h.1M379.1 875.4h.1M382.5 867.6h.1M372.3 875.6h.1M384 874.7h.1M397 871.2h.1M378.5 878.5h.1M395.1 879.1h.1M378 875.4h.1M389.3 876.7h.1M381 877.5h.1M388 873.3h.1M380.3 876.5h.1M382.8 875.5h.1M382.2 876.9h.1M390.3 868.8h.1M382.2 872.4h.1M384.2 881.7h.1M391.6 878.2h.1M381.1 873.2h.1M393.4 878.7h.1M398 872.6h.1M391.7 876.2h.1M393.5 871.1h.1M376.8 872h.1M384.7 874.2h.1M378.5 874.8h.1M379.5 877.9h.1M378 870.1h.1M383.9 879.2h.1M389.7 870h.1M370.6 872.8h.1M391.1 874.1h.1M373.5 880.9h.1M388.2 869.6h.1M381 868.1h.1M386.6 875.5h.1M384.4 875.5h.1M383.9 873.2h.1M386.4 875.5h.1M380.7 873.7h.1M384.8 875.1h.1M388.6 868.5h.1M376.8 875.6h.1M387.5 872.1h.1M393.5 876h.1M387.7 874.6h.1M388 872h.1M383.3 868h.1M379.1 877.7h.1M384.3 872.7h.1M393.2 875.8h.1M385.9 872.5h.1M389.6 867.4h.1M381.1 869.7h.1M387.4 877.7h.1M378.8 875.7h.1M390.5 878.2h.1M384.2 872.2h.1M389.7 874.3h.1M385.7 880.5h.1M390.1 875.2h.1M383 878.3h.1M376.7 876.2h.1M383 871.4h.1M381.4 878.1h.1M379.4 878.3h.1M396.7 874.2h.1M389.2 869.3h.1M379.5 878.1h.1M388 866.7h.1M390.3 875.7h.1M383.4 873.5h.1M380.7 882.5h.1M394.4 876.1h.1M390.4 880.3h.1M388.6 881.2h.1M376.4 875.9h.1M393 877.4h.1M388.6 873.4h.1M393.5 877.3h.1M384.7 873.8h.1M393.7 873.9h.1M377.8 875.4h.1M378.7 872.5h.1M386.1 877h.1M388.2 873.4h.1M384 882.6h.1M371.4 878.9h.1M383.8 874.5h.1M382.2 877.3h.1M388 874.1h.1M384.4 871.5h.1M377.1 880h.1M389.1 868h.1M381.7 872.4h.1M382.6 877.8h.1M378.3 874.7h.1M380.4 876.7h.1M380.1 876.2h.1M388.9 873.8h.1M386.9 875.6h.1M384.2 870.2h.1M373.5 870.1h.1M381.9 876h.1M384.5 872.1h.1M378.3 872.9h.1M388.9 875.4h.1M388.9 873.5h.1M392.3 866.8h.1M379.9 877.5h.1M373.2 873.6h.1M381 876.4h.1M381.9 880.2h.1M383.6 873.7h.1M387.1 871.5h.1M378.1 877.2h.1M382.9 882.1h.1M381.9 870.7h.1M381.6 881h.1M382.5 872.2h.1M393.3 877.1h.1M381.2 874.8h.1M387.2 872.5h.1M388.6 873h.1M372.3 878.1h.1M386.4 880.8h.1M398.2 871.7h.1M390 877.7h.1M380.6 873.9h.1M395.3 872.7h.1M385.5 879.1h.1M391.7 870.1h.1M386.6 872.3h.1M386.8 875.8h.1M391.2 874.5h.1M384.3 877.4h.1M384.9 881.2h.1M378.8 875.8h.1M384.3 875.7h.1M382.5 877.1h.1M387 873h.1M388.1 872h.1M384.4 875h.1M384.3 876.7h.1M385 870.7h.1M392.7 866.8h.1M386.3 875.9h.1M378.7 870.6h.1M383.9 876.6h.1M382.6 879h.1M380.5 871.5h.1M379 875h.1M386.6 878.9h.1M373.1 874.5h.1M381.3 871.6h.1M395.6 871.1h.1M390 868.4h.1M380.5 872.8h.1M380.4 873.7h.1M388.3 873.4h.1M393.8 870.6h.1M375.4 874.2h.1M387.3 877.9h.1M391.3 872.1h.1M374.6 882.4h.1M390.1 870.6h.1M378 880h.1M385.3 881.3h.1M385.9 868.6h.1M374.4 877.4h.1M388.1 867.5h.1M391.1 873.5h.1M379.9 878.5h.1M389.9 875.5h.1M392.7 872.6h.1M384.5 875.2h.1M375.5 870.4h.1M384.1 878h.1M392.1 876.2h.1M373.9 873.9h.1M379.3 880.1h.1M381.5 876.1h.1M390.1 879.3h.1M376.4 878h.1M381.5 878.2h.1M371.8 875.7h.1M381.1 881.9h.1M382.4 874.5h.1M394 871.4h.1M394.4 871.5h.1M383.9 877.6h.1M390.4 873.2h.1M375.5 876.7h.1M387.9 873.5h.1M396.5 874.2h.1M379.7 877.4h.1M374.5 871.5h.1M393.4 867.9h.1M384.9 869.3h.1M377.4 878h.1M387.4 872.4h.1M372.2 880.6h.1M384.9 872h.1M381.8 874.2h.1M381.6 875.2h.1M374 873.5h.1M385 867.2h.1M384.5 871h.1M377.4 876.7h.1M380.5 876.7h.1M387.2 869.6h.1M388.1 877.6h.1M381.6 872.7h.1M377.7 868.1h.1M395.8 870.4h.1M386 878.1h.1M384.1 878.7h.1M370.4 878.5h.1M382.6 875.8h.1M370.9 879.3h.1M381.8 872.5h.1M373.7 874.8h.1M386 872.5h.1M386.2 870.3h.1M380.1 879.7h.1M379.4 871.6h.1M382 882.2h.1M389.2 869.7h.1M377.8 881.3h.1M395.7 879.7h.1M377.9 875.4h.1M385.8 872.8h.1M375.9 875.8h.1M396 872.6h.1M391.9 872.6h.1M373.3 875.4h.1M377.4 872.1h.1M385.1 874.1h.1M393.2 873.3h.1M394.1 875.3h.1M379.5 877.7h.1M383.5 872.9h.1M381.1 870.6h.1M398.5 874.5h.1M383.6 871.8h.1M390.4 874.6h.1M382 878.9h.1M372.2 878.2h.1M382.6 878.4h.1M357.1 878.6h.1M383.7 875.9h.1M410.2 873.4h.1M373.9 879.9h.1M372.8 879h.1M394.9 880.1h.1M386.5 871h.1M380.4 873.4h.1M405.6 875h.1M401.5 874.9h.1M386.8 870.8h.1M370.4 881.4h.1M366.3 879.6h.1M382.1 877.2h.1M394.2 876h.1M376.3 867h.1M381.2 877.1h.1M388.3 876.3h.1M369.7 877.5h.1M391 873.9h.1M383.8 872.5h.1M385.3 878.1h.1M373.9 877.5h.1M387.5 876.4h.1M386 875.9h.1M393.5 876.8h.1M381.6 874.4h.1M380.3 888.3h.1M393.1 871.4h.1M375 882.7h.1M397.1 874.6h.1M382.5 877.2h.1M370.9 873.4h.1M395.5 879.1h.1M376 882.3h.1M396.5 879.6h.1M388.4 877.2h.1M386.2 884.9h.1M369 874h.1M391.5 875h.1M382.3 876.3h.1M369.6 879.3h.1M392.1 869.6h.1M373.3 873.4h.1M373.2 875.8h.1M370.2 876.9h.1M385.6 879.4h.1M388.8 868.7h.1M403.1 876.6h.1M382.7 868.2h.1M388.3 872.4h.1M378.7 874.9h.1M405 866.3h.1M401 870h.1M383.5 873.5h.1M374.9 871h.1M370.3 869h.1M401.1 870.3h.1M381.8 879.7h.1M367.7 877.2h.1M384.3 866.3h.1M373.4 877.3h.1M391.5 872.5h.1M375.6 871.8h.1M369 880.1h.1M386.5 874.6h.1M374.5 872.2h.1M375 833h.1M371 854h.1M400 865h.1M405 875h.1M412 873h.1M460 873h.1M505 877h.1M510 876h.1M526 880h.1M536 878h.1M546 874h.1M550 870h.1" stroke="#55636c" stroke-width="2.6" stroke-linecap="round" fill="none" opacity="1.0"/><path d="M748.5 690.6h.1M742.6 693h.1M746.9 693.4h.1M686.8 702.5h.1M739.7 689.7h.1M737.6 695.9h.1M718.8 704.2h.1M760.3 693.4h.1M743.4 698.4h.1M713.7 704.3h.1M732.4 693.1h.1M739.2 703.5h.1M765.7 714.2h.1M743.7 699.2h.1M736.6 707.5h.1M714 710.1h.1M758.9 710h.1M713.8 691.9h.1M677.8 707.7h.1M762.6 684.5h.1M725.8 703.9h.1M749 699.7h.1M770.9 698.3h.1M677.9 689.9h.1M706.9 703.8h.1M668.7 688.6h.1M758.7 695.2h.1M654.9 706h.1M774.9 697.2h.1M737.5 678.1h.1M697.3 700.5h.1M708.6 694.5h.1M718.8 693.3h.1M660.4 705.2h.1M655.7 705.7h.1M696 691.7h.1M749.4 698.8h.1M758.6 692.7h.1M755.5 687.4h.1M720.5 699.1h.1M707.9 709.3h.1M700.2 701.4h.1M790.3 693.4h.1M776.3 699.4h.1M676 684.8h.1M704 718h.1M744.7 690.7h.1M703 706.1h.1M667.3 723.3h.1M731.1 704.4h.1M649.9 692.3h.1M675.2 684.7h.1M710.1 694.9h.1M677.9 694.3h.1M719.4 679.3h.1M736.2 703.8h.1M662 682.8h.1M752.3 670.5h.1M749.4 698.1h.1M727.8 680.8h.1M726.6 688.2h.1M750.2 704.5h.1M729.6 689.7h.1M767.5 689h.1M740.7 690.3h.1M740.6 703.7h.1M741.6 702.9h.1M677.6 697h.1M769 697.2h.1M748.4 703.9h.1M735.4 689.5h.1M782.2 704.4h.1M723.7 693.8h.1M738.1 698.8h.1M750.7 691.9h.1M720 717.3h.1M656.6 690.3h.1M748.5 709.8h.1M636.4 703.9h.1M746.2 684.9h.1M756.3 683.4h.1M748.1 682.8h.1M712 687.9h.1M746 689.4h.1M727.9 696.9h.1M700.8 692h.1M759.8 669.8h.1M758.5 706.1h.1M742.6 697.5h.1M705.2 687.1h.1M728.3 694h.1M741.8 695.2h.1M759.7 694.6h.1M728.6 691.3h.1M778.4 696.1h.1M744.1 697.6h.1M747.5 695.2h.1M663.5 699.8h.1M752.8 703.9h.1M740 689.6h.1M706.4 682.1h.1M718.4 723.9h.1M665.5 699.4h.1M755.5 713.4h.1M755 704.4h.1M713.2 692.2h.1M707.7 696.1h.1M762.7 705.3h.1M645.8 699.5h.1M748.7 701.5h.1M770.9 692.9h.1M734 688.7h.1M706.8 701.7h.1M758.9 689.1h.1M700.1 708.5h.1M669.4 687.4h.1M742.7 706.8h.1M665.4 701.1h.1M734.4 697.2h.1M757.2 694.7h.1M762.8 697.7h.1M680.2 688.6h.1M762.5 687.6h.1M761.6 701.4h.1M659.5 691.8h.1M788.7 695.5h.1M774.9 697.6h.1M766.2 691.8h.1M760.2 700.6h.1M724.6 707.2h.1M710.4 678.3h.1M723 689.6h.1M770.4 665h.1M739.6 699.9h.1M679.3 692.9h.1M749.6 696.2h.1M768.1 688.2h.1M749.1 697.2h.1M733.7 688.2h.1M780.9 696.3h.1M764.1 694.7h.1M768.2 702.8h.1M742.7 698.6h.1M723.8 651.5h.1M754.7 682.5h.1M714.5 694h.1M734.9 694.8h.1M684.8 699h.1M750 714.3h.1M760.2 705.3h.1M778.5 694.6h.1M754.6 691.6h.1M751.1 708.5h.1M756.4 702.6h.1M656.7 703.1h.1M782 692.3h.1M664.8 701h.1M767.7 698.6h.1M781 696.2h.1M682.7 692.7h.1M745.1 688.5h.1M708.5 701.9h.1M733.5 700.4h.1M694.8 702h.1M722 698.4h.1M660.5 697.5h.1M686.4 691.7h.1M709.3 700.7h.1M673.6 682.9h.1M728.4 693.3h.1M754.5 699.3h.1M768.2 686.8h.1M768.2 717.7h.1M658.5 701.6h.1M656.8 696.7h.1M738.2 698h.1M738 686.5h.1M724 687.8h.1M770.8 706.7h.1M756.2 699.6h.1M777.8 697.3h.1M717.2 702.3h.1M784.8 686.2h.1M708.4 685.2h.1M742.3 691.5h.1M772 681.8h.1M753.1 691.7h.1M780.1 722.2h.1M729.4 694.8h.1M753.5 693h.1M728 703.2h.1M677.6 693.8h.1M736.6 705.1h.1M774.6 710.5h.1M751.3 695h.1M763.9 696.2h.1M713.5 710.7h.1M749.5 683.9h.1M753 695.5h.1M735.5 688.9h.1M726.6 672.5h.1M766.1 716.6h.1M752.1 707.9h.1M736.7 698.2h.1M759.4 695.1h.1M733.4 702.6h.1M753.6 705.2h.1M744.8 692.3h.1M748.8 686.4h.1M755.6 691.9h.1M737.5 653.1h.1M761 701.7h.1M696.6 692.4h.1M690.6 677.2h.1M685.3 705.1h.1M723.2 718h.1M655.6 705.6h.1M748.9 701.7h.1M767.3 698.9h.1M728 704.5h.1M759.6 710.9h.1M732.8 693.9h.1M707.7 692.8h.1M738.9 711.5h.1M728.4 684.2h.1M768.3 702.5h.1M667.2 703.8h.1M678.3 696.7h.1M659.9 699.2h.1M721.8 698.9h.1M671 698.4h.1M726.4 702.9h.1M684.4 697.7h.1M731.5 705.4h.1M717.2 696.8h.1M726.9 686.6h.1M732.6 702.1h.1M741.4 691.1h.1M726.9 691.7h.1M687.4 709.7h.1M777 717.4h.1M740.6 705.6h.1M775.6 701.2h.1M767.5 695.5h.1M691.3 689.2h.1M682.9 701.4h.1M749.2 698.3h.1M720.5 701.3h.1M689.7 685.1h.1M709.8 700.4h.1M706 693.8h.1M734.6 694.4h.1M751.7 696.4h.1M719.1 702.5h.1M678.8 691.6h.1M667.5 698.4h.1M773.8 701.4h.1M762.5 658.9h.1M733.3 684.8h.1M756.7 697h.1M669.4 709h.1M712.6 705h.1M696.3 709.6h.1M746.8 671.1h.1M754.3 698.8h.1M670.9 688.5h.1M739.5 702.6h.1M792.6 684.6h.1M674.9 701.7h.1M742.1 692.9h.1M777.9 699.9h.1M750.4 689.2h.1M664.5 691h.1M720.3 703.4h.1M748.5 687.2h.1M642.8 690.9h.1M728.3 697.1h.1M734.2 694.1h.1M746.4 692.4h.1M733.8 709.7h.1M729.5 699.2h.1M738.9 682.3h.1M756.8 699.9h.1M690.4 699.1h.1M739.3 697.9h.1M736.4 701.8h.1M756.4 701.5h.1M651.8 698.8h.1M759.9 698.6h.1M778.5 702.9h.1M736.9 697.2h.1M760.8 702.6h.1M735.2 696.8h.1M715.4 690.1h.1M745.2 682.6h.1M735.9 694.6h.1M721 693.2h.1M744.1 693.3h.1M686.1 701.2h.1M764.7 701.1h.1M718.6 715.1h.1M750.2 692.5h.1M762.8 691.5h.1M714 704.6h.1M717.5 707.4h.1M722.4 695.9h.1M724.8 696.5h.1M686.5 701.6h.1M765.8 723.9h.1M784.5 691.2h.1M768.4 695.6h.1M675.3 680.6h.1M730.1 696.6h.1M743.5 685.2h.1M781.1 692.3h.1M757.8 703h.1M740.8 683.1h.1M745.4 689.2h.1M789.3 693.8h.1M716 716.3h.1M736 708.8h.1M723.2 694h.1M734.4 702h.1M739.8 689.2h.1M663.3 693.4h.1M688.9 710.2h.1M677.3 692.4h.1M744.9 696.4h.1M694.5 708.4h.1M708.3 692.4h.1M767.3 687.2h.1M740 693.9h.1M711.5 703h.1M728.8 681.7h.1M673.8 701.6h.1M650.7 690h.1M784.5 694.2h.1M773.4 698.5h.1M717.2 673.8h.1M667.1 672.4h.1M683.2 691.9h.1M786.6 686.2h.1M767.7 694.1h.1M748.5 698.2h.1M674 705.5h.1M754.8 707.1h.1M727.3 705.6h.1M738.7 706.7h.1M711 673.7h.1M710.3 681.6h.1M744.9 710.2h.1M750.5 715h.1M740 685h.1M746.2 703.5h.1M721.4 689.7h.1M708 697.2h.1M744.1 707.7h.1M780 696.7h.1M785.6 680.6h.1M778.1 715.1h.1M731.7 694.3h.1M742.9 721.8h.1M742.3 688.2h.1M749.8 693.9h.1M744.8 688.6h.1M779.5 682.3h.1M722.4 705.2h.1M756 701.6h.1M652.9 711.4h.1M728.8 686.2h.1M755.3 699.5h.1M652.8 691.7h.1M711 697.7h.1M732.9 685.4h.1M763.9 698.1h.1M762.8 699.2h.1M756.5 689.7h.1M737.1 711.7h.1M726.5 692.8h.1M749.3 701.3h.1M750.4 681.9h.1M724.9 688.2h.1M746 706.8h.1M685.8 697h.1M710.1 688.9h.1M736.2 678.8h.1M763.4 693.8h.1M754.2 712.7h.1M655.9 707.3h.1M744.9 689.5h.1M694.6 697.9h.1M736 688.6h.1M758.2 687.9h.1M770.2 711.4h.1M749.5 709.7h.1M752 686.9h.1M632.9 691.1h.1M728.9 704.9h.1M729.5 685.7h.1M732.8 709.9h.1M770.6 689h.1M716.8 704.3h.1M747.1 685.6h.1M762.4 714.2h.1M715.5 689.1h.1M648.2 697.9h.1M767.7 689.8h.1M780.1 698h.1M721.4 686.1h.1M730.8 688.3h.1M717.6 720h.1M784.2 718h.1M775.2 704.6h.1M763.3 697h.1M724.3 688.3h.1M691.4 709.2h.1M786.3 691.7h.1M640.8 704.9h.1M744.5 695.2h.1M751.8 684h.1M747.4 703.7h.1M743.2 705.1h.1M738.9 673.1h.1M781.6 702.4h.1M708.1 687.5h.1M746.4 710.8h.1M762.3 709.3h.1M791.1 695.2h.1M744.7 699.5h.1M764.7 698.7h.1M712.1 696.9h.1M756.1 677h.1M729.5 714.3h.1M759.5 691h.1M732.7 692.8h.1M761.4 682.6h.1M734.3 696.4h.1M689 701.5h.1M715.8 700.7h.1M732.9 712.1h.1M764.6 695.5h.1M699.2 688.4h.1M719.1 696.5h.1M756.6 692.8h.1M747.5 717.2h.1M712.5 706.6h.1M744 687.5h.1M736.4 662.4h.1M755.5 720.1h.1M670.2 700.8h.1M778.9 702h.1M782.3 704.5h.1M723 694.5h.1M723.8 689.2h.1M750.9 687.3h.1M702.6 709.9h.1M726.7 695.9h.1M746.8 682h.1M744.3 700.7h.1M763.6 700.3h.1M735.9 691.7h.1M715.2 697.2h.1M691 693.4h.1M742.7 713.9h.1M739.9 690.6h.1M706.9 701h.1M747.6 699h.1M729.8 696.1h.1M642.6 705.7h.1M738.4 705.8h.1M690.5 694.8h.1M676.7 700.4h.1M702.3 702.9h.1M688.5 693.2h.1M703.2 696.4h.1M742.3 684.6h.1M707.8 711h.1M751.2 696.9h.1M788.7 693.8h.1M719.7 689.2h.1M679.1 714.3h.1M719.3 694.1h.1M685.8 698.8h.1M787.5 687.5h.1M665.7 693.6h.1M638.5 715.3h.1M651.4 708.7h.1M727.3 696.9h.1M688.4 682.2h.1M702.6 705.4h.1M751 689.1h.1M693.6 697.8h.1M734.9 697.4h.1M714.8 711.9h.1M613.7 698.6h.1M787.8 697.5h.1M740.4 700.8h.1M721.8 683.6h.1M766.5 709h.1M764.8 695.5h.1M718.9 694.7h.1M787.4 689.4h.1M726.5 703.5h.1M759.4 701.8h.1M690.5 690.9h.1M749.2 708.4h.1M759 686.1h.1M769.4 700.2h.1M728.5 696.5h.1M756.7 708h.1M769.5 684.5h.1M726.5 708.1h.1M674.6 702.9h.1M737 690.7h.1M772.1 696h.1M745.1 690.3h.1M711.6 709.7h.1M791.4 697.7h.1M691 704.7h.1M697.7 724.3h.1M702.5 686.6h.1M695.8 700.1h.1M751 683.1h.1M678.4 688.8h.1M712.6 698.8h.1M705.5 697.3h.1M738.7 677.2h.1M748 695.3h.1M766.8 717.1h.1M750.9 699.7h.1M721.4 704.2h.1M721.8 707.8h.1M756.8 716.9h.1M774.2 701.6h.1M729.1 694.7h.1M682.7 698.8h.1M707.3 701.1h.1M781.1 682.9h.1M757.7 699.2h.1M730.4 713.9h.1M678.9 698.6h.1M731.3 688.5h.1M743.2 709.4h.1M742.8 683.9h.1M733.5 696.4h.1M764.9 705.3h.1M687.8 690.4h.1M735.4 688.8h.1M751.5 713.3h.1M719.7 694.9h.1M692.5 692.2h.1M759.3 736.7h.1M777.8 686.3h.1M620.4 701.5h.1M718.1 692.3h.1M713.5 694.1h.1M714.9 680.6h.1M783.1 699.6h.1M744.9 678.4h.1M723.5 700.2h.1M723.9 697.2h.1M711.9 700.6h.1M710.3 702.2h.1M763.1 716h.1M737.2 690.2h.1M663.9 691.1h.1M759.9 696.6h.1M748.2 707.1h.1M671.5 697h.1M734.8 713.1h.1M759 679.5h.1M644.1 689.5h.1M758.6 701.2h.1M758.3 687.8h.1M772 701.2h.1M738.8 692.1h.1M787.4 704.7h.1M776.4 705.7h.1M671.1 689.9h.1M746.2 686.1h.1M770.4 695.7h.1M665.4 706.6h.1M734.1 699.8h.1M741.4 718.3h.1M730.3 700.2h.1M679.1 700h.1M768.9 708.6h.1M775.8 687.4h.1M713 717.6h.1M667.9 665.4h.1M753.2 706.1h.1M736.5 693.4h.1M713.5 693.5h.1M636.4 698.8h.1M749.7 696.5h.1M759.5 693.4h.1M731.5 687.4h.1M686.5 692.9h.1M765.6 703.3h.1M715.6 699.3h.1M746.7 659.8h.1M679.9 692.4h.1M742.1 706.1h.1M746.3 693.5h.1M657.8 690.2h.1M751.4 704.5h.1M737.4 698.5h.1M771 703.1h.1M764.7 711.9h.1M768.3 715.3h.1M663.3 696.7h.1M756.1 702.3h.1M756.1 692.9h.1M773.1 699.2h.1M665 694.2h.1M720.2 691.6h.1M697.5 697.6h.1M754.9 698.4h.1M739.9 696.6h.1M651.6 704.8h.1M768.5 693.5h.1M784.2 690.3h.1M702.6 696.9h.1M760.8 706.5h.1M694.5 704.9h.1M672.9 704.4h.1M744.2 711.8h.1M726.5 714h.1M742.9 688.7h.1M712.4 692.1h.1M756.7 709.8h.1M705 704.6h.1M768.4 692.9h.1M762.1 695.6h.1M767.2 721.8h.1M746.9 698.1h.1M707.6 685.5h.1M676.4 713.8h.1M762.4 697.1h.1M780.3 689.8h.1M719.1 693.1h.1M689.1 703.4h.1M749.3 703h.1M756.7 714h.1M677.7 697.1h.1M682.8 688.3h.1M742.6 689.2h.1M689.1 691.2h.1M728 688.6h.1M742 685.1h.1M756.1 682.7h.1M738.2 701.1h.1M739.3 699.9h.1M778.9 702.1h.1M758.6 691.7h.1M750.9 699.5h.1M722.3 689.6h.1M753.2 699.7h.1M764.9 688.6h.1M721.9 693.7h.1M714.7 711.8h.1M787.9 694.4h.1M778.4 701.5h.1M719.2 698.9h.1M712.1 737h.1M783 694.3h.1M710.3 697.2h.1M733.6 707.8h.1M760.9 693.5h.1M771.1 683.5h.1M715 700.8h.1M764.5 694.5h.1M761.3 676.9h.1M756.6 689.2h.1M760 680.5h.1M761.3 685.1h.1M769 701.2h.1M723.4 688.4h.1M729.3 688.8h.1M707.2 703.6h.1M749.2 696.3h.1M734 700.4h.1M722.6 701.6h.1M773.5 697.4h.1M755.8 722.6h.1M706.8 688h.1M745.4 693.8h.1M651.1 694.1h.1M781.8 688.8h.1M713.8 705.2h.1M776.5 694.2h.1M719.5 711.9h.1M767 707.4h.1M763.3 687.6h.1M677.1 689.7h.1M736 702.3h.1M735.4 702h.1M782.1 695.3h.1M788.2 691.1h.1M682.3 705.6h.1M707.7 712.2h.1M743.7 696.9h.1M762.2 693.9h.1M745.2 683.7h.1M762.4 693.8h.1M751.6 685.6h.1M707.8 687.2h.1M745.2 680.2h.1M743.5 707.5h.1M744.5 691h.1M769.4 710.6h.1M774.1 652h.1M751.1 709.5h.1M781.7 694.8h.1M649.8 685.8h.1M764.1 715.9h.1M751.4 685.1h.1M748.7 714.5h.1M687 689.2h.1M761.1 708.3h.1M759.1 688.2h.1M725.6 688.4h.1M758.2 682.9h.1M751.5 689.9h.1M770.6 702.8h.1M676.6 688.3h.1M713.5 694.2h.1M737.7 694.2h.1M761.5 693.7h.1M674.5 689.8h.1M763.5 694.4h.1M772 703.4h.1M761.8 703.6h.1M768.9 692.5h.1M765.7 687.3h.1M703.6 691.9h.1M759.7 689.6h.1M714.3 681.6h.1M744.5 685.9h.1M686.9 689.4h.1M724.1 695.5h.1M709.2 710h.1M776.1 694.5h.1M769.6 703.9h.1M754.1 703.4h.1M764 705.6h.1M749.3 710.1h.1M735.8 693h.1M703.7 695.7h.1M711.6 709.1h.1M791.8 695.8h.1M709 694.1h.1M691.3 698.8h.1M761.9 727.9h.1M689.6 683.8h.1M752.9 700.6h.1M747.3 687h.1M742.7 696.7h.1M768 690.7h.1M753.5 682.9h.1M745.2 694.2h.1M776.4 700.7h.1M737.6 697.8h.1M729.5 689.7h.1M716.2 713.4h.1M701.7 681.4h.1M761.7 708.3h.1M722.6 705.8h.1M721.7 691.6h.1M780.8 696.4h.1M728.9 694.3h.1M688.4 713.5h.1M719.7 697.7h.1M706.6 685.7h.1M695.7 679.9h.1M732.1 696.4h.1M698.7 709.2h.1M736 697.3h.1M756.3 707h.1M738.8 705h.1M753.6 697.9h.1M748.2 684.3h.1M739.9 705.4h.1M700.5 694.8h.1M659.2 687.2h.1M729.4 706.4h.1M777.3 705.1h.1M702.7 702.9h.1M708.9 688.8h.1M774.4 677.6h.1M774.2 698.2h.1M724.4 692.6h.1M787.6 692.6h.1M758.1 701.7h.1M695.9 705.9h.1M747 688.6h.1M743.4 693.5h.1M707.7 705.9h.1M747.1 687.4h.1M712.2 724.1h.1M661.8 690.8h.1M730.7 709.9h.1M762.7 701.1h.1M711.9 700.7h.1M734.3 693.8h.1M693.2 691h.1M739.2 699.3h.1M725.9 700.6h.1M782 704.3h.1M771.2 697.1h.1M771.1 695.4h.1M667.8 692.4h.1M704.6 705.9h.1M757.5 690.3h.1M686 704.3h.1M660.3 656.7h.1M748.8 675.8h.1M730 691.9h.1M774.5 698.7h.1M772.2 695.7h.1M685.9 696.6h.1M677.6 696.9h.1M764.6 695.1h.1M653.7 695.5h.1M686.1 712.4h.1M731.7 692.2h.1M742.1 683.7h.1M745.8 699.2h.1M659.5 701.7h.1M730.7 702h.1M718.4 701.2h.1M792 696h.1M700.2 694.9h.1M719.6 702.9h.1M735.1 718.1h.1M745.6 694.2h.1M774.8 706.7h.1M742.2 707.6h.1M707.3 697.8h.1M702.7 695.9h.1M685.2 699h.1M764.4 694.2h.1M682 706h.1M736.6 690.8h.1M701.8 695.9h.1M736.7 693.1h.1M786.7 700.4h.1M730.4 683.4h.1M726.8 716.7h.1M756.3 704.3h.1M723.6 692.4h.1M707.4 703h.1M787.4 700.7h.1M620.6 683.5h.1M758 697h.1M759.7 697.1h.1M663.9 697.7h.1M652.5 691.7h.1M731.1 683.6h.1M749.2 706.9h.1M731.8 687.1h.1M751.6 698h.1M740.2 697.2h.1M754 698.6h.1M732.8 696.9h.1M759 693h.1M787.4 696.1h.1M769.1 696.5h.1M774.1 682.4h.1M764.9 686.8h.1M665.2 691.4h.1M771.9 690.8h.1M763.4 685.9h.1M742.8 700.8h.1M701 695.4h.1M638.2 692.8h.1M741.3 698.7h.1M725.5 678.8h.1M704.8 702.4h.1M786.1 681.8h.1M739.7 695.5h.1M750.6 693.9h.1M734.9 699.7h.1M665.6 699.1h.1M672.1 703.1h.1M698.4 696.2h.1M767.9 696h.1M705.9 695h.1M740.9 691h.1M655.3 718.2h.1M625.3 684.1h.1M747.7 703.5h.1M678.5 688h.1M745.8 704.7h.1M733.7 701.9h.1M707.1 688.1h.1M756.3 704.6h.1M729.8 693.2h.1M737.8 695.1h.1M783.9 713.9h.1M766.8 690.8h.1M750.3 697.8h.1M764.9 699.1h.1M769.6 679.1h.1M734.2 703.4h.1M750 682.9h.1M719.6 732.2h.1M773 722.1h.1M743 686.5h.1M736.5 704.7h.1M702.7 691.2h.1M736.2 700.8h.1M637.5 688.2h.1M764.5 693h.1M740.3 706.3h.1M751.1 698h.1M665.1 697.8h.1M761.5 700.8h.1M768.2 708.5h.1M680.9 696.5h.1M760.3 702h.1M755.4 683.2h.1M765.2 689.4h.1M682.6 683.7h.1M778.6 701.5h.1M737.8 693.8h.1M646.6 696.8h.1M768.5 707.7h.1M704.7 688.2h.1M710.4 702.4h.1M743.5 701.7h.1M758.2 690.2h.1M718.6 700.2h.1M711.6 705.6h.1M615.7 707.3h.1M736.1 700.8h.1M772.1 689.5h.1M747.2 694.9h.1M702.2 695.1h.1M733.7 700.6h.1M704.7 702.4h.1M772.9 711.6h.1M746.6 703.9h.1M748.1 694.3h.1M724 684.8h.1M740.5 691.8h.1M744.7 683.6h.1M712.2 693.5h.1M636.1 703.8h.1M649.6 687.5h.1M732.9 688.9h.1M734.8 690.9h.1M748.7 682.6h.1M729.6 670.8h.1M721 700.8h.1M769.6 684.5h.1M673.5 693.2h.1M782.7 694.9h.1M787.7 704.2h.1M783.9 690.7h.1M735 685.6h.1M687.9 696.8h.1M721.9 698.3h.1M675.5 706.5h.1M772 691.6h.1M750.9 673.6h.1M651.2 694.8h.1M769.7 686.1h.1M775.7 698.7h.1M682.1 693.3h.1M769.3 703.2h.1M790.1 685.5h.1M747.4 715.9h.1M768.4 690.8h.1M745.9 687.1h.1M705.5 689h.1M720.2 689.3h.1M742.1 689.5h.1M738.9 694.6h.1M665.3 694.1h.1M704.5 694.5h.1M754.5 685.7h.1M734 688.2h.1M744.1 704.2h.1M750.5 700.7h.1M771.3 702.4h.1M754.8 710.8h.1M693.3 680.9h.1M652.9 703.6h.1M777.3 700.4h.1M729 679.7h.1M724.8 742.5h.1M742.7 691.3h.1M748.7 694.4h.1M731.3 697.7h.1M728.2 690.6h.1M686.3 709.7h.1M777.8 706h.1M758.6 687h.1M689.5 690.2h.1M715.7 725.4h.1M754.5 688.8h.1M758.2 680.2h.1M743.4 693.2h.1M687.6 704.2h.1M667 714.4h.1M774.8 719.8h.1M775.1 689.5h.1M741.6 692h.1M678 706.7h.1M759.3 701.2h.1M728.8 718.4h.1M754.3 687.7h.1M737.9 699.5h.1M740.8 695.9h.1M710.9 685.3h.1M770.4 694.4h.1M708.7 702.4h.1M639.7 684.4h.1M701.4 705.9h.1M726.6 690h.1M718.1 664.5h.1M768.1 709.8h.1M767.7 706h.1M723.1 697.7h.1M743 692.3h.1M736.5 701.7h.1M729.9 675.8h.1M723.7 701h.1M694.6 689.2h.1M680.8 678.7h.1M746.7 699.9h.1M732.3 706.7h.1M736.7 694.7h.1M783.8 690.4h.1M779.4 694.1h.1M773.2 706.9h.1M671 697.2h.1M727 710.5h.1M636.7 718.3h.1M765.7 699.5h.1M790.8 694.8h.1M746.6 706.3h.1M728.6 691.9h.1M701.3 693.1h.1M689.7 691.1h.1M753.4 704.6h.1M772 678.9h.1M731.3 709h.1M768.9 700.1h.1M726.9 696.3h.1M737.4 710.9h.1M762.8 707.8h.1M706 688.6h.1M763.5 707.5h.1M713.3 702h.1M713.1 694.1h.1M728.4 688.8h.1M612.4 717h.1M726.3 693.4h.1M759.6 681.4h.1M754.5 696.2h.1M753.8 696.3h.1M763.6 703.9h.1M737.5 708h.1M762.9 718.5h.1M773.8 708.5h.1M760.4 691.7h.1M727.6 699.9h.1M758.9 700.6h.1M773.6 694.7h.1M770.4 683.7h.1M760.1 700.3h.1M729.7 706.6h.1M664.5 716.8h.1M722.6 687.3h.1M731.1 689.4h.1M724.5 692.2h.1M726.9 705.6h.1M726.9 699.2h.1M648.7 690.5h.1M675 700.9h.1M744 691.7h.1M745.8 713.2h.1M712 709.2h.1M734.1 693.1h.1M771.2 693.3h.1M676.5 713.8h.1M668.3 681.9h.1M719 698.1h.1M747.8 689.6h.1M708.5 697.8h.1M752.2 701.2h.1M727.6 700h.1M717.9 695.2h.1M662.2 701.5h.1M750.4 696h.1M744.9 693.5h.1M770.1 698.8h.1M735.8 702.8h.1M746.3 709.8h.1M642.8 698.5h.1M746.6 689.5h.1M743.4 694.8h.1M743.2 694.4h.1M641.4 690.3h.1M743.3 702.6h.1M705.5 705h.1M736.1 696.7h.1M714.6 689.9h.1M782.2 694.5h.1M754.4 702.5h.1M745.2 685.3h.1M744.4 702.6h.1M729.1 702.3h.1M725.7 688.4h.1M757.7 713h.1M752.8 692.3h.1M666.9 666.7h.1M733.1 676.9h.1M664.9 699.2h.1M715.9 702.6h.1M769.7 697.3h.1M711 696.9h.1M680.7 700h.1M765.9 711.7h.1M753.8 706.1h.1M787 698.8h.1M722.7 715.2h.1M647.2 694.4h.1M702.5 693.2h.1M666.6 699.1h.1M758.8 699.2h.1M780 683.7h.1M760.6 700.6h.1M708.5 697.3h.1M759.1 702.6h.1M701.6 700.1h.1M724.7 679.7h.1M758 700.8h.1M748.9 680h.1M712.2 704.1h.1M698 715.2h.1M780.2 693.9h.1M763.2 700.5h.1M698.1 694.4h.1M776.6 704.8h.1M671 684.6h.1M734.9 699.3h.1M715.2 714.1h.1M747.4 739.8h.1M747.6 677.5h.1M687 705.1h.1M728.3 690.2h.1M762.1 691.7h.1M758.3 700.9h.1M733.3 696.5h.1M738.1 703.3h.1M751.6 694.5h.1M721.8 700.1h.1M752.1 707.8h.1M741.3 698.4h.1M692.6 694.1h.1M763.5 709.7h.1M658.7 707.1h.1M785.4 693.2h.1M753.7 690.1h.1M639.4 687.1h.1M662 705.9h.1M759.1 695.6h.1M771.6 693.5h.1M655.4 710.2h.1M758.7 705.9h.1M759 701.1h.1M763.8 694.8h.1M788.2 695.2h.1M663.3 708.9h.1M767.5 691h.1M731.5 695.5h.1M768.7 691.6h.1M728.6 696.7h.1M764.6 685.3h.1M689.3 689.1h.1M712.7 699.9h.1M715.5 656.6h.1M732.4 691.7h.1M730.7 699.5h.1M760.1 697.4h.1M756.1 709.7h.1M763.1 684.8h.1M756.9 700.4h.1M734.1 697.7h.1M714.1 687.6h.1M735.5 698.7h.1M713.9 702.5h.1M684.2 688.5h.1M687.3 687.2h.1M766.8 703.5h.1M751 686.8h.1M653.4 682.4h.1M781.4 711.3h.1M766.7 697.3h.1M730.3 693h.1M740.6 698.8h.1M695.4 697.5h.1M740.4 698.4h.1M787.4 696.9h.1M738.8 696.1h.1M763.9 696.3h.1M745.3 703.9h.1M778.5 691.3h.1M728.2 692.3h.1M636.4 697.4h.1M717.9 704.5h.1M691.6 708.7h.1M670.3 707.5h.1M742.3 713.3h.1M755.3 690.2h.1M739.3 689.9h.1M718.6 694h.1M761.8 682.5h.1M649.2 693.8h.1M748.6 689h.1M728.6 686.9h.1M675.4 681.5h.1M672.6 687.1h.1M778.1 695.9h.1M751.7 708.8h.1M736.5 699.5h.1M751.1 690.6h.1M744.8 696h.1M746.2 700.9h.1M766.1 695.9h.1M705.3 710.8h.1M765 696.3h.1M738.2 699.3h.1M751.9 694.1h.1M774.3 703.7h.1M744.2 705.4h.1M649.5 691.6h.1M691.5 667.5h.1M659.1 691.8h.1M743.8 687h.1M759.8 703.5h.1M668.6 680.9h.1M751.2 688.2h.1M671 684.8h.1M709.8 695.4h.1M760.4 700.1h.1M754.6 690.4h.1M705.3 702h.1M718.3 691.3h.1M750 694.6h.1M693.1 698h.1M678.6 696.5h.1M730 697.6h.1M762.6 702.4h.1M624.9 697.4h.1M752.4 698.6h.1M757.9 695.1h.1M729.7 704.8h.1M667.2 689.2h.1M765.9 692.5h.1M731.6 703.4h.1M772.8 689.7h.1M755.2 692.6h.1M776 711.4h.1M727.5 706.9h.1M698.3 686.1h.1M757.7 712.1h.1M701.2 689.5h.1M764.6 707.7h.1M741.7 687.1h.1M672.1 713.6h.1M671 695h.1M717.8 699.8h.1M770.4 709.9h.1M672.5 700.1h.1M762.4 711.9h.1M757.6 701.5h.1M673.9 688.2h.1M717.1 677.1h.1M765.1 709.9h.1M699.9 702.7h.1M682.7 689.9h.1M701.5 711.5h.1M673.7 708.6h.1M713.8 693.4h.1M780 692.8h.1M764 701.1h.1M714 707.9h.1M769.8 699.3h.1M749.3 691.4h.1M630.6 708h.1M776 718.5h.1M669 689.4h.1M773.1 702.3h.1M674.1 702.7h.1M718.3 694.3h.1M743.4 707.6h.1M762.1 698.1h.1M769.1 698.6h.1M645 692.3h.1M712 701.5h.1M687.3 694h.1M767.8 708.3h.1M785.2 687.2h.1M749.1 689.5h.1M708.1 705h.1M720.7 693.3h.1M761.5 704h.1M765.2 702.4h.1M744.1 705.3h.1M722.8 707.4h.1M772.8 714.6h.1M719.4 692.5h.1M747.4 707.7h.1M735.1 703.3h.1M707.9 693.2h.1M751.8 683.2h.1M693.4 701h.1M724.5 709.9h.1M748 701.8h.1M717.7 684.6h.1M784.3 693.9h.1M756.2 704.4h.1M747.5 693.4h.1M763 692.3h.1M769.6 680.1h.1M701.3 686.5h.1M708.7 712.9h.1M727.5 693.5h.1M784.2 697.8h.1M665.4 695.7h.1M770.4 701.9h.1M763 720.2h.1M744.3 686.1h.1M759.9 683.5h.1M755.3 689.2h.1M778.3 697.1h.1M781.4 694h.1M680.5 698.3h.1M780.3 702.5h.1M756.8 687.9h.1M654.6 696.9h.1M681.3 690.1h.1M661.9 700.2h.1M682.3 691.6h.1M725.8 675.6h.1M655.5 703.9h.1M751.8 703.8h.1M775.9 695.5h.1M786.4 708.8h.1M704.8 685.8h.1M771 697.6h.1M753.1 693.1h.1M779.7 707.2h.1M688 693.9h.1M759.9 687h.1M738.2 710.4h.1M776.5 695.5h.1M644.4 691.8h.1M763 696.4h.1M731.9 689.4h.1M750.9 684.2h.1M732.9 692.1h.1M724.1 696h.1M685.3 706.9h.1M712.2 713.1h.1M763.7 703.7h.1M704.6 702.6h.1M750.5 719h.1M684.7 703.6h.1M737.8 674.1h.1M683.5 683h.1M716.7 688.2h.1M744.8 699.2h.1M748.5 671.3h.1M775.1 695.4h.1M774.5 701.1h.1M766.6 701.3h.1M647.3 685.3h.1M763.2 695.4h.1M731.6 691.1h.1M698.6 694.4h.1M705.4 701.2h.1M733.3 705h.1M777.3 688.9h.1M759.4 690.3h.1M744.7 697.9h.1M711.2 694.9h.1M744.4 676.5h.1M723.2 689.1h.1M748.5 691.3h.1M728.3 708.2h.1M768.9 693.3h.1M718.2 699.5h.1M778.2 693.9h.1M680.4 700.2h.1M675.5 685h.1M745.6 710.8h.1M761.5 690.3h.1M736.7 696.1h.1M789.5 688.7h.1M688.5 693.7h.1M676.3 690h.1M754.8 703.9h.1M757.7 719.5h.1M734.4 695.7h.1M766.5 703.3h.1M737 694.5h.1M757.1 711.8h.1M743.3 691.8h.1M702.8 692.8h.1M717.2 700.2h.1M673.1 702.9h.1M715.8 696.3h.1M715.6 695.3h.1M738.4 698h.1M759 710.5h.1M679.3 707.1h.1M719.6 703.5h.1M750.7 700.3h.1M715.3 694.6h.1M753.2 676.3h.1M718.2 692h.1M742.2 712.3h.1M685 690.2h.1M697.3 703.9h.1M749.8 680.9h.1M779.3 684.2h.1M742.4 685.5h.1M768.9 697.2h.1M740.6 689.8h.1M751.2 698.1h.1M777.3 697.6h.1M767 692.6h.1M669.2 721.8h.1M718.5 699.2h.1M746 699.7h.1M749.2 688.4h.1M734.3 691.4h.1M735.2 693.8h.1M692.4 703.7h.1M688.7 708.5h.1M773.6 699.5h.1M791.5 703.3h.1M784.8 712.6h.1M729.5 691.7h.1M672.9 696.4h.1M750.3 700.7h.1M734.5 689.8h.1M690.6 698.3h.1M672.8 707.7h.1M759.3 697.4h.1M747 709.8h.1M709.8 707.8h.1M693.9 700.6h.1M704.7 696.7h.1M648 685.6h.1M792.8 689.3h.1M666.1 698.2h.1M756.4 704.9h.1M702.2 714.3h.1M709 703.9h.1M740.5 691.2h.1M690.6 684.4h.1M784.5 687.6h.1M741.5 697.4h.1M767.4 697.5h.1M718.3 708.7h.1M735.3 700.5h.1M671.5 693h.1M725.7 695.9h.1M760.7 706.4h.1M671 689.1h.1M752.8 731.7h.1M728.3 699.7h.1M702.9 705.9h.1M737.7 705.5h.1M711 704.4h.1M760.2 715.9h.1M766.3 687.1h.1M741.2 698.6h.1M743.3 690.7h.1M763.9 688.2h.1M699.4 685.8h.1M785.5 691h.1M746.7 698.6h.1M727.6 701.8h.1M751.5 698.3h.1M765.9 696.5h.1M765.5 708.5h.1M767.7 685.3h.1M665.6 697.9h.1M692 702.2h.1M755.9 679.2h.1M714.8 697.6h.1M735.9 693.9h.1M767.4 705.2h.1M725.5 708.5h.1M692.7 696.9h.1M734.9 687.1h.1M746.1 698.9h.1M750.6 704.1h.1M744.3 689.4h.1M755.1 692.7h.1M670.4 701.2h.1M735.4 700.2h.1M672.7 676.3h.1M779.9 692h.1M742.5 689h.1M744 699.4h.1M700.5 683.6h.1M764.4 699.1h.1M753 695.8h.1M655.5 680h.1M775.2 702h.1M753.5 714.3h.1M692.6 693.5h.1M753.1 711h.1M737.1 693.9h.1M725.3 686.5h.1M775 708.7h.1M792.5 693.7h.1M734.5 690.9h.1M748.7 690.6h.1M748.3 705.7h.1M750.5 701.1h.1M726.8 696.3h.1M782.8 698.1h.1M680.6 720.6h.1M752.5 701.7h.1M778.9 685.4h.1M752.6 694.3h.1M788.2 696h.1M737.1 689.9h.1M781.4 691.7h.1M681.5 706h.1M726.6 695h.1M690.6 685.1h.1M716.7 693h.1M715.5 689.9h.1M662 691.6h.1M742.9 682.4h.1M733.5 696.2h.1M746.8 707.3h.1M751 712.4h.1M723.4 699.2h.1M750.4 708.6h.1M639.6 707.4h.1M674.2 697.6h.1M759.2 696.4h.1M715.7 697.4h.1M721.7 682.7h.1M666.1 687.2h.1M773.9 685.4h.1M661 701.5h.1M767.9 696h.1M784.7 692.7h.1M730.5 694.6h.1M730.9 699.7h.1M739.4 685h.1M733.8 701.1h.1M681.5 689.8h.1M704 708h.1M741.6 696.6h.1M761.5 695.1h.1M746.6 726.4h.1M725.7 691.8h.1M690 703h.1M718.4 694.8h.1M677.1 689.2h.1M739.2 699.7h.1M749.9 697.6h.1M658.6 674.6h.1M729.1 707.7h.1M769.9 684.8h.1M789.8 708.6h.1M732.8 686.4h.1M675.2 694.2h.1M735.4 700h.1M757.2 709.1h.1M695.2 687h.1M732.1 699.2h.1M720.5 713.7h.1M697.8 675.1h.1M725.2 708.9h.1M715.6 686.7h.1M737.9 707.7h.1M762.8 704.7h.1M735.2 723h.1M743.8 686.9h.1M680.2 694.4h.1M784.1 702.4h.1M765 711.1h.1M739.9 701.2h.1M704 705.2h.1M751.2 687.8h.1M712.6 700.2h.1M714.4 698.1h.1M723.5 681.6h.1M690.3 710.8h.1M751.2 693.7h.1M723 714.2h.1M720.2 686.4h.1M755.4 701.7h.1M749.2 697.2h.1M713.1 692.9h.1M712.6 700.6h.1M763.1 702.1h.1M776 689h.1M712.7 686.6h.1M732.7 708.3h.1M748.2 691.3h.1M762.6 696.3h.1M687.1 669.8h.1M706.4 697h.1M754.2 682h.1M721.8 692.5h.1M760.3 701.7h.1M704.5 701.6h.1M764.1 702.3h.1M782.6 701.6h.1M764.1 689.9h.1M728.8 699.9h.1M701.7 691.7h.1M713 692.8h.1M755.5 683.3h.1M709.2 701.9h.1M768.7 704.7h.1M658.8 682.8h.1M719.8 698.6h.1M710.2 704.6h.1M707.6 704.5h.1M750 701.9h.1M737.6 705.9h.1M721.1 693.6h.1M686.1 702.1h.1M762.3 696.2h.1M776.2 681.1h.1M779.3 701.9h.1M671.3 684.4h.1M698.4 683.4h.1M773.5 706h.1M723.9 697.5h.1M790.6 697.2h.1M688.2 692h.1M777.9 695.4h.1M771.5 688.1h.1M692.9 706.2h.1M748.4 701.2h.1M765.7 698.1h.1M702.3 701.6h.1M713.2 698.3h.1M711 688.1h.1M761.3 690.9h.1M717.3 703.1h.1M721.8 702.6h.1M747.4 694.6h.1M664.6 701.1h.1M763.7 691.4h.1M685.4 688h.1M726 697.3h.1M706 703.5h.1M666.9 690.2h.1M745 686.3h.1M770.4 698.7h.1M682.7 709.1h.1M725.9 690.4h.1M705.8 720h.1M784.3 678.5h.1M726.4 690.2h.1M677.9 683.7h.1M693.8 689h.1M737.3 708.8h.1M758.5 686.2h.1M767 694.4h.1M759.9 697.5h.1M770.2 709.4h.1M733.3 718.4h.1M740.1 707.1h.1M689.9 702.2h.1M734.9 701.3h.1M764.2 697.2h.1M705.6 695.9h.1M763.2 702.3h.1M773.5 715.9h.1M753.3 706.9h.1M764.3 693.2h.1M788.1 686.1h.1M727.8 707h.1M628.9 691h.1M750.1 686.6h.1M752.3 707.4h.1M723 696.9h.1M720.8 693.3h.1M773.5 675.9h.1M769.5 694.4h.1M642.8 700.1h.1M775.8 701.6h.1M750.9 704.5h.1M744.4 694.1h.1M720.9 688.9h.1M664.7 705h.1M759.5 702.8h.1M675.3 695.9h.1M710.4 707h.1M685.4 693.5h.1M657.4 681.7h.1M728.4 701.3h.1M633.2 691.2h.1M663.9 703.7h.1M784.1 705.7h.1M636.7 689.1h.1M660.5 687.3h.1M772 691.9h.1M730.9 691h.1M774.5 697h.1M730.6 713.7h.1M735.1 697.1h.1M747.6 688.1h.1M705.5 705.3h.1M732.8 693.9h.1M709.9 698.9h.1M776.8 715.2h.1M777.5 707.1h.1M723.6 691h.1M739.2 698h.1M726.9 707.9h.1M750.7 690.1h.1M668.3 704.7h.1M758.8 698.3h.1M752.4 685.5h.1M763.8 715.8h.1M763.4 688.3h.1M726.4 695.5h.1M733.6 695.3h.1M729.3 697.9h.1M781.3 696.2h.1M748 700.8h.1M657.4 701h.1M722.3 703.3h.1M749.6 700.3h.1M791.4 698.2h.1M721 685.7h.1M770.9 692.5h.1M774.1 690.6h.1M748.7 683.3h.1M778.3 680.1h.1M733.7 687.4h.1M744 703.7h.1M721.2 702.4h.1M729 683.9h.1M790.3 671.9h.1M749 705.6h.1M760.1 700h.1M766.6 703.9h.1M706.4 702.2h.1M765.1 706.5h.1M736.1 685.3h.1M688.6 709h.1M764.7 702.5h.1M744.5 700.3h.1M750 704.5h.1M744.7 720.2h.1M770.2 679.6h.1M688 708.5h.1M732.4 697.9h.1M778.7 703h.1M751.3 684.2h.1M712.1 686.1h.1M774.9 706.4h.1M724.2 696.1h.1M681 688.2h.1M721.5 706.2h.1M747.4 726.4h.1M730.4 702h.1M629.5 690.7h.1M737.5 720h.1M717.7 689.6h.1M741.9 689.9h.1M766.1 714.6h.1M616.5 708.1h.1M709 701.5h.1M725.6 699.3h.1M770.6 699.8h.1M698.8 699.2h.1M701.8 686.2h.1M754.6 700.1h.1M743.1 700.1h.1M700.7 693.6h.1M748.8 693.6h.1M722.3 720.6h.1M766 705.9h.1M672.2 684.4h.1M763.7 696.5h.1M734.6 697.9h.1M732.2 697.4h.1M715 697.6h.1M712.8 696.5h.1M739.8 720.2h.1M758.4 686h.1M723.9 693.1h.1M748.7 703.2h.1M660.2 704.4h.1M739.1 711.9h.1M718.6 715.5h.1M756.1 702.2h.1M753.5 713.6h.1M760.9 697.1h.1M774.6 690.7h.1M748.5 697.5h.1M715.5 692.7h.1M769.9 697.4h.1M748.9 691.2h.1M716.5 694.7h.1M775.9 697.4h.1M720.8 717.1h.1M762.9 704.5h.1M749.3 687.3h.1M658.4 696.7h.1M748.9 689.2h.1M702.2 695h.1M734.5 701.2h.1M725 705.4h.1M778.6 698.5h.1M740.6 697.3h.1M748.2 700.2h.1M753.9 687.9h.1M735.2 706.8h.1M755.2 683.1h.1M681.1 699.2h.1M714.1 708.6h.1M739.8 693.1h.1M789.4 707.8h.1M753.5 699h.1M787.1 699.6h.1M773 705.1h.1M735.3 685.8h.1M771.1 698.3h.1M734.3 702.8h.1M667.9 695.4h.1M732.7 711.9h.1M673.8 728.5h.1M732.8 703.7h.1M772.5 686.9h.1M733.2 697h.1M764.3 700h.1M744.7 707h.1M722.6 703.6h.1M734.8 717.6h.1M738.7 700.8h.1M699.1 698.1h.1M680.7 697.3h.1M692.8 701.5h.1M729.1 692.3h.1M753.5 707.6h.1M759.8 704.2h.1M776.6 689.2h.1M782.6 700.3h.1M737.5 703.1h.1M713.2 726.8h.1M751.2 705.6h.1M704 682.1h.1M656.7 709.5h.1M767.3 711.6h.1M718.3 699.3h.1M627.6 724.4h.1M719.3 694.5h.1M703.9 688h.1M767 709.8h.1M768.7 698.9h.1M681.1 694.8h.1M681.4 693.4h.1M737.7 680.9h.1M769.6 699.7h.1M751.1 696.2h.1M708 678.9h.1M755.4 687.4h.1M757.3 687.2h.1M704.8 692.4h.1M731.9 670.1h.1M746.8 704.7h.1M783.8 689.5h.1M661.1 687h.1M765.9 715.4h.1M729.1 698h.1M697.1 703.4h.1M717.2 700.1h.1M640.9 688.2h.1M688.2 699.7h.1M758.4 687.3h.1M680.5 682.7h.1M746.5 693.2h.1M710 688.1h.1M699.8 733.5h.1M716 694h.1M716 689.8h.1M753.9 689.7h.1M760.7 701.1h.1M661 695h.1M741.4 689.7h.1M717.3 706.2h.1M755.4 702.1h.1M665.1 703.3h.1M696.8 688.8h.1M745.5 700h.1M764.7 701.9h.1M741.8 695.1h.1M782.7 701h.1M761.6 688.6h.1M696.8 699.1h.1M673.2 688.5h.1M711.4 690.4h.1M773.2 673.5h.1M697.4 706.8h.1M743.4 713.7h.1M734.8 686.9h.1M766.4 706.7h.1M715.1 700.3h.1M756.3 688.7h.1M770.8 704.9h.1M736.7 694h.1M732 702.3h.1M712.7 688.7h.1M761.8 693h.1M742.7 690.8h.1M697.6 693.8h.1M768.6 694.7h.1M781.1 694.1h.1M695.7 709.1h.1M742.8 693.2h.1M714.6 681.3h.1M734.1 679h.1M774.2 704.3h.1M695.3 688h.1M758.5 691.5h.1M779.8 696.3h.1M760.6 692.2h.1M727.5 692.3h.1M690.1 695.5h.1M763.3 682.8h.1M768.1 697.5h.1M781.4 687.7h.1M715.9 699.2h.1M667.8 696.6h.1M733.4 700.1h.1M683.1 674.2h.1M735.2 709.7h.1M631.4 679.6h.1M750.9 683.9h.1M696.1 690.1h.1M784.1 679.8h.1M717.8 684h.1M753.3 691.1h.1M725.2 690.6h.1M749.3 679.3h.1M760.3 697.9h.1M711 682.3h.1M754.3 706.5h.1M741.3 686.2h.1M754.8 706.6h.1M744.3 707.3h.1M743.4 703.8h.1M728.9 713.6h.1M756.2 712.9h.1M752.3 691.6h.1M771.2 714.9h.1M780.6 695.5h.1M699.2 685.1h.1M772.7 704.5h.1M767.4 700.6h.1M702.4 687.8h.1M761.5 707.1h.1M740.7 702.8h.1M697.6 669.5h.1M722.2 701.3h.1M727.9 708.7h.1M766.6 696h.1M669.7 703.5h.1M741.1 692.8h.1M767.7 695.5h.1M741.7 707.1h.1M731.1 700.1h.1M668.3 694.6h.1M763.7 704.3h.1M722.5 695.2h.1M717.7 705.2h.1M756.4 694.6h.1M755.9 700.3h.1M764.6 699.5h.1M788.2 698.9h.1M763.3 695.3h.1M686.3 683.7h.1M732.7 699.2h.1M655.9 699.5h.1M674.9 708.4h.1M730 696.6h.1M711.1 707.2h.1M778.7 706.9h.1M731 664.6h.1M724.3 687.4h.1M730.3 696.4h.1M767.7 696.7h.1M757.7 713.7h.1M772.8 693.7h.1M681.5 699h.1M664.7 684.7h.1M746.9 685.3h.1M664.7 699.7h.1M692.1 703h.1M673.6 710.7h.1M789.2 688.3h.1M734.3 696h.1M668.7 694.9h.1M762.6 688.1h.1M784.4 699.5h.1M744.7 697.2h.1M754 703.2h.1M747.5 702.1h.1M664.3 695.6h.1M639.8 704.6h.1M781.3 699.2h.1M680.8 695h.1M701.3 696.1h.1M755.1 688.8h.1M669.8 673.8h.1M780.4 698.5h.1M787.5 695.8h.1M788.1 694.2h.1M737 686.8h.1M646.2 714.1h.1M708.6 701.3h.1M716.2 693.4h.1M786.6 699.8h.1M729.8 681.8h.1M711.1 703h.1M766.5 700.8h.1M669 696.5h.1M740.1 710.5h.1M731.5 703.2h.1M728.2 695.5h.1M788.5 685.8h.1M778 704.9h.1M685.1 714.1h.1M770.4 701.4h.1M727.4 693.3h.1M720.2 693h.1M698.1 682h.1M753.7 699.9h.1M702.4 694.2h.1M721.3 700.5h.1M671.2 710.7h.1M665.6 695.4h.1M735.5 699.7h.1M748.7 700.1h.1M773.2 702.2h.1M781.5 699.5h.1M745.8 688.8h.1M671.8 704h.1M774.9 685.1h.1M711.8 702.6h.1M758.1 700.5h.1M708.5 692.3h.1M661.6 698.1h.1M759.1 705.3h.1M746.3 706.3h.1M748.5 702.1h.1M769.2 686.3h.1M743.5 704.9h.1M677.6 701.5h.1M743.8 697.4h.1M770.1 690.8h.1M709.8 696.2h.1M762.3 700.2h.1M660.1 687.6h.1M648.1 702.9h.1M721.4 674.5h.1M781.3 703.5h.1M729.4 697.8h.1M733.2 691.3h.1M765.6 704.4h.1M766.3 691.4h.1M767.1 699h.1M754.3 695.3h.1M683.2 689.7h.1M736.8 701.9h.1M686.7 691.9h.1M729.4 702.4h.1M710.3 693h.1M761.5 684.9h.1M709.5 712.4h.1M712.7 699.7h.1M775.4 689.6h.1M753 701.7h.1M775.7 705h.1M762.6 682.7h.1M742.8 687.5h.1M723.9 691.5h.1M662.5 685.9h.1M771.5 720.3h.1M774.7 709.9h.1M733.8 694.4h.1M716.1 702.7h.1M737.9 693h.1M773.3 691.9h.1M742.2 700.2h.1M725.3 720.8h.1M760.2 687.3h.1M760.8 683.1h.1M753.7 698.5h.1M763.3 690.8h.1M734.6 685.5h.1M750.1 690.4h.1M742.9 687.9h.1M612.4 683.4h.1M745 695.7h.1M693.2 686.7h.1M707.4 687.7h.1M733.2 692.7h.1M748.6 705.8h.1M683.5 693.5h.1M741.7 711.8h.1M762 689.4h.1M724.3 698.1h.1M728.4 695.1h.1M660.2 707.3h.1M724.3 702.8h.1M717.6 694.5h.1M751.3 680.1h.1M756.3 702h.1M718.1 703.8h.1M761.5 673.3h.1M678.4 699.1h.1M770.7 689.9h.1M778.2 704.6h.1M752.9 696.5h.1M735.8 695.2h.1M713 695.8h.1M742.7 707.7h.1M787.4 690.2h.1M660.7 697.4h.1M745.2 719.6h.1M686.8 707.5h.1M740.2 692.3h.1M685.6 692.6h.1M743.9 696.5h.1M686.5 707.4h.1M687 700.7h.1M764 688.8h.1M736.2 683.8h.1M746.5 698h.1M775.5 706.9h.1M757.9 708.2h.1M765.5 703.2h.1M732.3 696.2h.1M755.3 701.1h.1M755.8 705h.1M733.7 694.9h.1M730.1 710.2h.1M770.7 701.6h.1M749.7 690.3h.1M754.2 704.8h.1M664.4 702h.1M780 700.8h.1M746.1 692.1h.1M743.9 695.9h.1M750.2 692.8h.1M769.5 695.2h.1M745 699.5h.1M753.4 682.5h.1M768.1 688.9h.1M753.9 691.8h.1M734.7 714.2h.1M734.4 701.1h.1M741 706.4h.1M740.5 694.4h.1M783.3 701.3h.1M714 700.2h.1M727.7 694.4h.1M705.8 706.8h.1M724 679.5h.1M671.7 693.1h.1M733.6 715.8h.1M726.3 692h.1M753.2 693.7h.1M760.4 693.3h.1M658.8 699.7h.1M741.8 703.8h.1M723.6 711.2h.1M779.3 698.3h.1M779.6 700.7h.1M719.3 720.1h.1M719.8 683.9h.1M734.3 695h.1M759.8 686.9h.1M731.3 711.1h.1M733.1 684.1h.1M748.8 711.7h.1M740.5 690.2h.1M634.8 703.2h.1M702 682.6h.1M756.4 682.6h.1M718.2 688h.1M729.8 672.3h.1M727.4 668.8h.1M750.6 703.2h.1M745.6 693.5h.1M732.7 714h.1M761.4 705.9h.1M776 695.5h.1M733.6 707.7h.1M668.8 695.4h.1M767.8 693.8h.1M769.3 710.5h.1M678.3 693.3h.1M734 706.6h.1M670.9 712.5h.1M669.7 705.9h.1M754.8 697.7h.1M782.3 683.6h.1M758.1 704.1h.1M717.1 691.3h.1M739.1 695.1h.1M780 691.5h.1M730.5 706.9h.1M756 689.3h.1M736 700.7h.1M742.5 694.9h.1M667.3 705.9h.1M737.5 690.8h.1M743.1 704.5h.1M720.5 693.3h.1M746.2 690.1h.1M747.6 701.9h.1M706.5 691.2h.1M672.1 706.3h.1M738.5 707.8h.1M755.4 693.3h.1M702.6 697.5h.1M779.3 691.7h.1M766 686.1h.1M720 681.4h.1M733.9 705.7h.1M658.9 685.3h.1M745.1 690.1h.1M740 690.5h.1M685.4 687h.1M751.5 698.9h.1M760.5 686.2h.1M729 705h.1M749.9 699h.1M742.1 698.5h.1M743 687.4h.1M739.9 695.5h.1M735 683.6h.1M744.8 708.8h.1M704.6 669h.1M699 687.5h.1M757.8 693.4h.1M660.8 696.8h.1M673 698h.1M740.6 693.7h.1M786.5 695.1h.1M722.2 680.9h.1M705.5 707.2h.1M698.6 703.5h.1M727.3 695.1h.1M728 690.3h.1M679.1 692h.1M672.4 696.3h.1M772.3 687.9h.1M745.7 692.2h.1M744.5 698.8h.1M789.9 711.9h.1M730 695.5h.1M772.1 714.4h.1M720.6 699.4h.1M774.4 689.4h.1M745 684.6h.1M680.5 685.3h.1M736.3 710.1h.1M727.8 690h.1M649.7 696.4h.1M758.5 693.5h.1M733.7 696.2h.1M679.3 687.5h.1M734.1 694.2h.1M752.3 695.7h.1M755.2 701.3h.1M745.1 693.4h.1M765.7 705.2h.1M785.5 691.2h.1M755.3 688.4h.1M755.9 699.7h.1M792.4 706.3h.1M667.4 716.2h.1M695.4 685.8h.1M727.4 683.6h.1M777.5 698.4h.1M742.5 685.9h.1M646 717.2h.1M759.4 688.8h.1M691.6 689.4h.1M739.2 697.9h.1M672.6 688.9h.1M748.4 698h.1M783.7 683.1h.1M770.5 708.5h.1M626.7 685.3h.1M746.6 690.4h.1M712.7 690.3h.1M762.8 697.4h.1M664 680.9h.1M786.5 681.7h.1M735.4 701.1h.1M754.8 706.5h.1M773.8 688.7h.1M745.3 693.4h.1M669 703.9h.1M753.5 692h.1M754.8 705.1h.1M711.2 684.3h.1M734.9 680.9h.1M644.7 699.4h.1M733.8 688.3h.1M663 714.1h.1M673.1 701.7h.1M698.2 691.7h.1M702.1 699.4h.1M774.8 693.8h.1M757.6 694.5h.1M753.7 695.3h.1M676.6 701.9h.1M758 683.2h.1M736.6 687.8h.1M703.1 714.6h.1M767.6 695.8h.1M783.9 697.4h.1M737.7 696.3h.1M744 698.7h.1M694.3 696.5h.1M727.2 695h.1M757.9 696.8h.1M686.4 697.8h.1M756.3 699h.1M732.6 697.1h.1M774.8 718.5h.1M752.1 703.6h.1M654.8 698.5h.1M666 701.1h.1M775.3 698.7h.1M761.5 695.7h.1M728.1 685.5h.1M773.4 710.8h.1M758 692.8h.1M787.4 700.7h.1M696.8 710.6h.1M661.8 692.5h.1M752.1 726.8h.1M729.3 694h.1M720.8 715.4h.1M728.5 682.7h.1M719 698.6h.1M783 701.2h.1M706.6 692.7h.1M729.9 695h.1M742.1 683h.1M749.2 686.5h.1M713.9 691.1h.1M739.8 702.3h.1M720.2 695.7h.1M773.8 697.4h.1M771.4 687.3h.1M740.2 710.3h.1M788.5 710.3h.1M702.7 703h.1M711.8 696.9h.1M700.9 713.4h.1M777.2 708.3h.1M723.2 684.3h.1M723.1 690.2h.1M758.5 700.8h.1M745.2 683.5h.1M683.1 685.9h.1M734.7 680.3h.1M742.8 691.7h.1M776.7 702.5h.1M790.3 722.4h.1M752 696.4h.1M711.7 688.9h.1M745.6 714.9h.1M708 693.2h.1M679.9 696.7h.1M672.1 695.3h.1M758 692.8h.1M684.3 700.8h.1M755.4 698.9h.1M709.3 694.6h.1M715.3 699.9h.1M748.6 716.1h.1M759.3 690.9h.1M754.7 694.9h.1M695.8 696.2h.1M780.3 688.4h.1M743.2 688.5h.1M719 692.1h.1M753.3 699.5h.1M770.6 681.2h.1M746.1 687.4h.1M720.7 697.8h.1M781 692.4h.1M766.3 704h.1M775.9 691.4h.1M629.1 699.1h.1M736.7 686.8h.1M770.6 689.7h.1M740.3 680.5h.1M757.6 685h.1M729.3 690.2h.1M687.6 677h.1M773.7 684.3h.1M751.2 708.1h.1M655 678.7h.1M758.2 716.5h.1M766.3 695.5h.1M674.6 677.8h.1M783.1 716.7h.1M639.7 695.9h.1M730.6 690.3h.1M674.8 713.4h.1M753.4 713.5h.1M776.4 703.2h.1M708.4 694.4h.1M765.7 710.1h.1M739 703.1h.1M727.4 692.7h.1M709 700.3h.1M774.5 680.9h.1M749.2 694.6h.1M764.5 714.4h.1M733.6 706.1h.1M746.1 687.2h.1M725.8 685.7h.1M732.8 706.1h.1M678.8 706.1h.1M773.4 690.1h.1M672.9 689.1h.1M724.7 685.1h.1M709.5 692.2h.1M736.2 690.2h.1M743.9 692h.1M751.8 697.8h.1M698.8 691h.1M685.5 700.4h.1M731.3 695.8h.1M743.5 705.5h.1M728.1 702.2h.1M679.4 673.2h.1M761 694.8h.1M768.5 705.3h.1M727 682.5h.1M739.2 693.6h.1M712.6 685.2h.1M768.3 700.4h.1M673.5 684.1h.1M761 704.7h.1M778 698.1h.1M767.4 699.3h.1M765 701.9h.1M696.4 695.9h.1M736.8 694h.1M750.4 686.7h.1M690.2 686.6h.1M761.9 699.1h.1M691.1 705h.1M705.3 696.6h.1M728.9 697.3h.1M700.3 698.3h.1M676.3 709.6h.1M732.1 703.7h.1M723.7 699.1h.1M769.1 718.9h.1M757.3 689.4h.1M706.9 691.4h.1M744.3 683.7h.1M760.4 686.7h.1M766.2 678.2h.1M745.5 697.6h.1M772.7 695.7h.1M786.5 685.8h.1M746.2 690.1h.1M778.3 699.5h.1M708.5 714.3h.1M736.9 693.4h.1M727.8 697.1h.1M697.8 695.5h.1M718.2 696.6h.1M777.1 693.2h.1M724.3 691.4h.1M741 694.3h.1M778.3 693h.1M734.8 697.8h.1M723.5 689.2h.1M769.2 680.7h.1M788.2 698.8h.1M688.1 694.2h.1M703 706.8h.1M701.7 699.6h.1M755.3 710.9h.1M648.4 692.4h.1M761.8 690.8h.1M711.5 711.6h.1M697.8 685.4h.1M691.4 688.6h.1M780.7 700.8h.1M727.3 698.7h.1M694.9 719.3h.1M693.1 703.2h.1M692.6 686.5h.1M645.7 695.8h.1M752.2 691.9h.1M786.9 696.7h.1M758 710.2h.1M752.2 701.3h.1M726.8 696.2h.1M674.8 700.4h.1M735.4 691.1h.1M737.4 686.8h.1M690.4 710.9h.1M667.7 680.6h.1M680.8 702h.1M648.2 703.3h.1M732.4 715.4h.1M718.2 697.6h.1M760.6 716.7h.1M726.4 689.7h.1M757.2 703.8h.1M747.3 699.8h.1M779.6 694.4h.1M749.3 689.6h.1M725.1 717.1h.1M760.2 700.8h.1M779 697.4h.1M675 696.6h.1M776.2 692.3h.1M762.1 679.9h.1M752.3 696.8h.1M727.2 687.2h.1M791 706.9h.1M751.2 697.4h.1M751.4 691.2h.1M773 695.8h.1M708 708.7h.1M690.1 678h.1M692.7 684.1h.1M749.9 704h.1M755.3 705.5h.1M751 700.1h.1M734 699.4h.1M716.3 704.6h.1M750.8 689.3h.1M707.4 691.8h.1M721.5 689.6h.1M717.1 677.2h.1M691.6 702.7h.1M731.7 688.3h.1M731.5 703.2h.1M728.1 695.1h.1M677.9 678.5h.1M757.1 706.4h.1M731.5 685.4h.1M721.6 687.7h.1M727 685.5h.1M707.4 700.3h.1M743.5 683h.1M790.1 705.6h.1M741.6 676.2h.1M774.6 689.1h.1M765.6 696.4h.1M700.5 723h.1M755.7 687.1h.1M734.7 681.4h.1M764.7 705.4h.1M777.8 695.5h.1M753.7 669.4h.1M757.7 691.4h.1M748.9 705.8h.1M758.1 691.1h.1M697.7 695.6h.1M685 704.5h.1M717.1 688.2h.1M754.9 682.8h.1M792.8 700.3h.1M770.9 707h.1M666.6 703h.1M737.9 694.6h.1M704.4 711.7h.1M748 693.2h.1M700.8 705.8h.1M728.4 712.4h.1M777.3 701.9h.1M686.9 705.5h.1M717.6 707.3h.1M744.3 691.9h.1M737.9 701.6h.1M683.9 688.6h.1M714.9 696.8h.1M705.4 702.7h.1M740.9 712h.1M669.2 709.2h.1M732.5 703.5h.1M746.7 696.1h.1M747.7 707.4h.1M769.2 692.4h.1M742.1 687.1h.1M758.6 698.5h.1M666.8 696.2h.1M745.5 694.4h.1M633.5 694.6h.1M772.4 713h.1M707.3 703.4h.1M744.2 701.9h.1M732.6 698.6h.1M721.1 702.5h.1M726.2 696.9h.1M763.1 695.7h.1M762.3 702.3h.1M737.2 682.4h.1M751.1 711.4h.1M715.5 698.2h.1M737.6 686.5h.1M749.1 689h.1M741.1 693h.1M661.4 700.7h.1M737 697.9h.1M718 703.4h.1M717.6 703.8h.1M774 708.3h.1M754.9 703.2h.1M752.5 698h.1M732.3 700.5h.1M721.5 677.6h.1M759.1 697.1h.1M781.6 715.2h.1M768.9 701.6h.1M779.3 703.3h.1M669.6 709.2h.1M759.8 700.5h.1M729.4 694h.1M648.3 694.8h.1M685.6 699h.1M764.1 704.2h.1M747 683h.1M681.2 694.6h.1M738.9 707.9h.1M722.1 693.7h.1M681.2 689.5h.1M769.3 703h.1M690.6 708.4h.1M753.6 687.8h.1M737.5 679.2h.1M784.1 702h.1M632 694.4h.1M769.5 701.1h.1M769.3 698.8h.1M792.9 697.1h.1M681.8 730.3h.1M711.4 675.7h.1M744.9 692.8h.1M737.6 700.8h.1M747.2 696h.1M697 707.7h.1M636.3 688.4h.1M733.1 697.5h.1M735 705.9h.1M703.7 698.7h.1M694.9 696.2h.1M672.5 698.9h.1M672.4 698.7h.1M769.7 701.5h.1M773.2 697.8h.1M769.8 681.7h.1M691.6 694.5h.1M719.8 709.3h.1M734.1 702.5h.1M730.4 703.9h.1M709.5 708.7h.1M791.9 704.1h.1M688.3 688.4h.1M658.9 702.5h.1M700.7 689h.1M771.3 695.8h.1M681.5 689.3h.1M790.4 687.5h.1M662.7 703.4h.1M698 702.6h.1M712.8 693.5h.1M735.2 697.7h.1M760.3 704h.1M750.3 690.2h.1M721 706.8h.1M758.9 691.9h.1M721.7 689.4h.1M782 705.7h.1M690.9 715.9h.1M767.9 689h.1M663.9 701.1h.1M712.3 693.8h.1M731.3 700.4h.1M666 698.3h.1M755.5 711.3h.1M690.1 692.7h.1M759.1 703.7h.1M711.4 696.7h.1M722.5 682.6h.1M681.6 693.6h.1M750.3 704.4h.1M685.8 705.3h.1M721.9 678h.1M722.8 700.4h.1M757.1 707h.1M737.4 694.1h.1M742.4 692.9h.1M732.1 689.8h.1M686.7 712.4h.1M655.9 702.8h.1M659.3 719.7h.1M767.4 700.7h.1M738 684.3h.1M777.9 701.6h.1M704.1 710.3h.1M714.4 711h.1M642.2 703.5h.1M784.6 713.4h.1M752.3 699.4h.1M708.2 698.6h.1M779.3 684.8h.1M758.5 703.7h.1M745.6 707.1h.1M725.1 693.7h.1M685 695.4h.1M745.4 695.9h.1M734.9 687.3h.1M743.6 700.3h.1M685.4 689.4h.1M760.8 697.2h.1M753 700.4h.1M730.5 691.9h.1M778.9 693.2h.1M715.5 682.5h.1M730.8 695.6h.1M743.3 704.8h.1M669.2 710.6h.1M748.6 695h.1M730.4 697h.1M665.3 705.2h.1M729.4 699.5h.1M714.4 694h.1M704.2 690.7h.1M774.4 704.1h.1M763.2 698.9h.1M677.3 709.6h.1M631.4 707.3h.1M681.1 702h.1M739 706.1h.1M737.7 694.1h.1M761.7 689.3h.1M766.7 702.2h.1M782.2 709.2h.1M751.8 696.1h.1M725.9 694.2h.1M751.1 705.3h.1M723.7 695h.1M724.1 712.6h.1M760.7 676.4h.1M760.4 695.4h.1M757.4 707.1h.1M728.7 699.8h.1M745.2 696.2h.1M723.5 713.5h.1M737.8 690.6h.1M781.3 679.9h.1M714.4 689h.1M712.4 704.8h.1M732.5 709.3h.1M764.6 713.4h.1M735.4 700.5h.1M733.5 705.6h.1M764.9 680.8h.1M738.4 687.4h.1M730.4 677.7h.1M723.9 700.9h.1M736.5 675.8h.1M739.6 707.6h.1M730.2 705.3h.1M741.8 710.6h.1M734.3 702.3h.1M738 704.7h.1M714.5 697.3h.1M750.7 703.5h.1M711.4 710.3h.1M781.8 686.5h.1M770.4 703.5h.1M724.7 696.2h.1M690 696.4h.1M767.2 692.9h.1M743.1 691.8h.1M789.1 702.3h.1M765.2 686.2h.1M755.6 719.2h.1M763 699.5h.1M760.7 689h.1M787.3 706.4h.1M741.2 710.3h.1M678.2 706.7h.1M731.1 709.2h.1M778.2 695.4h.1M753.1 695.4h.1M761.1 692.7h.1M671.2 692h.1M748.4 689h.1M778.1 681.6h.1M687.5 700.7h.1M712 699.2h.1M728.7 692.3h.1M746.7 705.6h.1M712.9 710.3h.1M695.8 695.1h.1M757.4 694h.1M740.4 705.2h.1M723.3 697.3h.1M730.1 707h.1M721.5 694.6h.1M768.6 695.2h.1M764.4 704h.1M734.3 696.8h.1M789.8 712.4h.1M718.5 700.7h.1M685.8 699.1h.1M756.8 700.4h.1M745.8 707.9h.1M669 692.1h.1M738.5 692.6h.1M740.3 697.7h.1M693.8 711.7h.1M777.9 709.5h.1M731.9 698.4h.1M757.8 698.6h.1M686.1 690.5h.1M751.3 687.7h.1M711.7 685.3h.1M696 706h.1M750.2 695.9h.1M700 695.9h.1M740.5 702.1h.1M699 693.2h.1M759.5 709.4h.1M765.9 697.5h.1M711.1 687.3h.1M724.7 701.5h.1M706.6 706h.1M746.5 713.2h.1M742.3 696.2h.1M771.9 695.5h.1M717.7 714.1h.1M765.4 710.3h.1M739.6 692.5h.1M770.1 681h.1M705.2 696.5h.1M741 698.2h.1M702.3 683.4h.1M711.2 702.4h.1M705.1 700.3h.1M723.1 689.2h.1M764.1 714.6h.1M672.1 693.4h.1M736.8 692.8h.1M751.5 698.3h.1M784.7 695.3h.1M765.6 702h.1M732.5 709.8h.1M661.9 697.2h.1M686.2 694.5h.1M728.9 698.5h.1M754.2 698.1h.1M707.5 696.4h.1M730.3 689h.1M775.9 697.9h.1M736.3 699.5h.1M698.5 705.4h.1M676.4 690h.1M736.6 708.2h.1M728 700.4h.1M752.1 699.9h.1M699.4 693.5h.1M740.9 692.2h.1M754.9 710h.1M678.4 690.6h.1M768.7 698.1h.1M716.2 697.2h.1M775.5 676.4h.1M744.1 685.2h.1M661.4 691.2h.1M670.6 698.8h.1M746.2 694.9h.1M732.3 702.3h.1M745.2 697.3h.1M725.5 701.5h.1M735.3 700.7h.1M773.7 689.1h.1M708.8 695.5h.1M705.3 723.7h.1M726.7 703.6h.1M712.3 703.6h.1M732.9 702.9h.1M758.9 704.9h.1M726.2 695.1h.1M732.4 701.4h.1M699.2 700h.1M706.7 712.6h.1M647.9 698h.1M774.8 694h.1M692 700.6h.1M776 692.3h.1M637.6 681.9h.1M750.4 683.9h.1M748.3 694h.1M757.2 696.9h.1M707.5 711.3h.1M722.3 704.3h.1M716 691.5h.1M717.4 696.1h.1M658 690.5h.1M658.6 702.7h.1M661.3 687.4h.1M736.7 674h.1M753.3 687.3h.1M707.7 697.2h.1M720.1 697.4h.1M766.5 699.8h.1M729.1 701.8h.1M698.9 700.6h.1M770.3 705.8h.1M719.7 686.3h.1M764.2 686.9h.1M792 710.3h.1M676.2 716.4h.1M734.4 696.2h.1M771.2 702.2h.1M752.4 701.5h.1M700.5 689.9h.1M719.1 706.6h.1M662.3 702.3h.1M752 677.4h.1M731 701.6h.1M722.9 705.8h.1M739.6 686.9h.1M734 692.8h.1M748.2 703h.1M769.4 686h.1M772.1 691h.1M735.1 707.2h.1M719 692h.1M691.2 698h.1M765.7 702.4h.1M763.4 663.9h.1M727.9 691.5h.1M732.3 692.6h.1M732.6 702.2h.1M688.9 692.8h.1M749.7 695.4h.1M791.2 695.3h.1M731.1 670.8h.1M694.7 706h.1M740.8 693.2h.1M720.8 693.8h.1M758.9 698.2h.1M762.1 667.2h.1M769 694h.1M695.6 710.6h.1M736.7 711.6h.1M754.4 714h.1M693.7 685.2h.1M674 695.6h.1M733.8 701.3h.1M734.3 682h.1M747.2 704h.1M649.4 707.5h.1M695.4 689.2h.1M774.2 699.4h.1M672 691.7h.1M674.1 708.6h.1M773.3 696.3h.1M684.3 710.6h.1M716.8 707.4h.1M674.2 699h.1M730.5 683.6h.1M755.7 707.9h.1M780.1 696h.1M727 692.6h.1M695.8 696h.1M770 685.4h.1M767.8 686.9h.1M783.6 705.4h.1M677.3 717.6h.1M785.9 698.5h.1M739.2 685.2h.1M746.2 717.9h.1M751.9 692.1h.1M755.1 715.6h.1M726.1 718.3h.1M774.2 700.6h.1M689.9 691.4h.1M743.6 679.4h.1M735.9 677.3h.1M731.4 700.4h.1M741.9 714.5h.1M723.8 703.2h.1M754.8 697.3h.1M764.5 684.7h.1M696 703.8h.1M748.7 686.4h.1M718.8 701.6h.1M719.6 708.8h.1M783.9 698.7h.1M762.3 672.6h.1M733.4 682.4h.1M737.1 704.5h.1M666.4 673.7h.1M756.4 691.7h.1M715.1 703.4h.1M698.3 673.9h.1M698 694.6h.1M705.8 707.3h.1M760.3 705.1h.1M746.9 700.9h.1M780.9 693.5h.1M684.8 679.9h.1M669.4 683.8h.1M753.4 692.8h.1M691.8 717.4h.1M755 699.4h.1M782.1 695.4h.1M737.2 711.7h.1M758.2 703.5h.1M764.2 709.4h.1M774.6 698.9h.1M714.7 699h.1M738.1 697.6h.1M789.9 690.4h.1M714.8 697.8h.1M743.5 698.1h.1M672.2 695h.1M765.4 693.4h.1M670.9 722.2h.1M727.3 693.9h.1M714.5 704.4h.1M786.6 703.9h.1M702.7 679.3h.1M747.4 703.2h.1M695.8 695.7h.1M748.9 701h.1M755.3 734.7h.1M777.5 686.3h.1M768.5 698.6h.1M767.1 706.9h.1M736.2 684.2h.1M738.4 693.4h.1M747.9 701.8h.1M717.6 704h.1M727.4 698.7h.1M743.8 699.2h.1M746.5 743.3h.1M658.8 697.6h.1M720.3 693.8h.1M738.4 676.5h.1M775.2 688.7h.1M683.1 713.5h.1M751.4 703.1h.1M765.4 707.5h.1M744 701.6h.1M771.8 701.9h.1M741.6 687.6h.1M780.1 691.4h.1M747 697.9h.1M768.6 678.5h.1M790.5 701.8h.1M767.1 693.5h.1M746.7 702h.1M718.7 692.2h.1M678.6 692.9h.1M732.9 697.1h.1M717.9 696.3h.1M719.6 698.2h.1M731.5 704.2h.1M723 678.7h.1M700.4 688.7h.1M755.1 709.6h.1M668.8 688.8h.1M725.8 696.7h.1M753.3 699.2h.1M740 701.9h.1M759.6 678.4h.1M753.7 710.7h.1M655.2 698h.1M759.7 684.7h.1M755.1 703.5h.1M713.2 698.4h.1M744.5 708.5h.1M674.1 698.3h.1M716.5 709.3h.1M724.8 689.6h.1M769.6 675.8h.1M761.9 694h.1M727.3 690.8h.1M660.9 687.7h.1M765.3 697.7h.1M698.8 671.4h.1M740 697.6h.1M694.4 712.4h.1M789.9 692.2h.1M690.9 703.8h.1M690.3 698.8h.1M790.4 696.5h.1M727.8 702.8h.1M777.8 704.1h.1M717.8 685.9h.1M699.3 696.5h.1M788.4 710h.1M708.9 703.6h.1M703.5 700.5h.1M759.5 698h.1M727 697.4h.1M733.2 689.5h.1M741 694.2h.1M622.9 694.9h.1M775.8 690.5h.1M760.7 705.3h.1M756.6 694.7h.1M760.3 689.8h.1M762.6 693.3h.1M730.8 691.2h.1M737 678.8h.1M707.2 700.4h.1M690.1 698.9h.1M726 707h.1M671.7 690.3h.1M688.1 687.6h.1M684.4 686.5h.1M758.5 709.5h.1M734.4 705.3h.1M707.8 704.4h.1M758 706.6h.1M763.3 683.5h.1M667.9 702.1h.1M712.5 691.4h.1M776.4 690.5h.1M713.4 692.9h.1M721.6 699.2h.1M755.4 695.6h.1M738.4 702.4h.1M671 688.2h.1M779.1 695.5h.1M660 698.1h.1M671 684.3h.1M785.5 708.5h.1M754.6 700.3h.1M719.6 696.7h.1M695.4 690.8h.1M771 693.8h.1M673.5 695.2h.1M740.7 697.1h.1M767.6 696.3h.1M743.6 698.8h.1M769.4 698.9h.1M720.2 686.7h.1M718.5 693.4h.1M769 711.1h.1M757.1 688.4h.1M742.7 674.6h.1M732.1 695.2h.1M708.5 696.6h.1M720.2 693.7h.1M764.3 707.5h.1M783.1 699h.1M730.7 694.9h.1M702.9 679h.1M755.6 671.1h.1M745.5 693.5h.1M724.7 695.2h.1M735.1 689.1h.1M641.7 700.8h.1M731.5 710.8h.1M702.1 698.4h.1M772.6 701.8h.1M681.8 699.1h.1M747.3 692.6h.1M720.4 703.6h.1M734.4 689h.1M755.4 695.3h.1M641.9 702.7h.1M731.7 692.5h.1M774.1 693.6h.1M697.7 699.5h.1M788.3 684.1h.1M693.7 689.7h.1M679.8 695.2h.1M765.5 682.1h.1M688.2 688.4h.1M778.7 690.9h.1M693.2 722.9h.1M662.3 671.5h.1M713.7 693.4h.1M763.1 688h.1M778.1 697.2h.1M722.3 669.9h.1M764.5 696.6h.1M720.3 692.9h.1M775.5 690.3h.1M768.4 698h.1M659.5 704.6h.1M710.9 706.8h.1M724.4 692h.1M760.7 692.5h.1M742.7 693h.1M769.6 692.8h.1M750.7 695.6h.1M649.9 691.7h.1M746 700.3h.1M689.9 707.7h.1M666.1 695.6h.1M743.9 705.4h.1M740.7 693.5h.1M663.4 687.5h.1M751.9 695.3h.1M754.4 695.8h.1M660.8 681.5h.1M674.9 714.1h.1M725.6 698.1h.1M772.3 700.9h.1M706.4 692.1h.1M719.9 684.1h.1M695 692.5h.1M770.9 702h.1M739.9 687.5h.1M722.9 676.6h.1M766.6 701.5h.1M738 699.1h.1M740.8 701h.1M705.1 688.4h.1M745.6 697.4h.1M678.4 697.1h.1M760.3 709.1h.1M751.2 688.2h.1M785.7 700.3h.1M689.7 700.9h.1M639.3 706.2h.1M691.8 700.6h.1M729.9 709.5h.1M758.5 681.8h.1M732.1 690.5h.1M761.7 709.6h.1M727.4 697.2h.1M662.5 667.8h.1M710.1 696.5h.1M704.8 689.7h.1M714 700h.1M704.9 699.6h.1M736.1 701h.1M749.8 694.2h.1M743.4 708.5h.1M697.9 693.9h.1M719.6 701.5h.1M674.8 692.9h.1M752.9 711.1h.1M722.7 696.1h.1M722.7 706h.1M782.3 700.5h.1M756.3 676.7h.1M693.4 689.6h.1M693.5 712.3h.1M736.2 705.4h.1M753.7 688.8h.1M766.9 687.5h.1M747.6 712h.1M748 689.4h.1M676.8 711h.1M756.9 696.7h.1M671.8 681.6h.1M702.8 683.8h.1M752.9 694.2h.1M710.8 698.9h.1M697.5 706h.1M652 701.4h.1M760.6 703h.1M754.4 707.9h.1M788.1 698.7h.1M687 693.9h.1M750.1 701.6h.1M740.4 691.7h.1M736.1 693.7h.1M649.1 706.2h.1M653.5 699.2h.1M763.6 693h.1M728.1 704.3h.1M744.4 707h.1M758.7 701.9h.1M718.2 700.2h.1M761.5 684.3h.1M715.3 686.8h.1M711.7 705.4h.1M695.8 712.9h.1M760.6 704.7h.1M694 697.1h.1M633.6 699.9h.1M734.6 683.2h.1M712.3 707.9h.1M755.3 685.1h.1M710 693.2h.1M757.1 705.3h.1M693.6 694.1h.1M782 698.6h.1M775.6 708.3h.1M755.6 701.2h.1M735.3 699.9h.1M737.4 683.4h.1M716 681.4h.1M733.2 695.9h.1M729.8 687.7h.1M730.2 698.7h.1M777.6 701.2h.1M721.4 710.8h.1M743.7 685.1h.1M739.8 695.7h.1M748.4 699.4h.1M738.9 700.5h.1M643.5 679.7h.1M749.3 693.5h.1M745.2 711.7h.1M650.5 711.3h.1M748.4 676.2h.1M736.6 713h.1M748.8 683.3h.1M754.7 701.6h.1M651.6 702.7h.1M779.7 694h.1M727.1 690.2h.1M719 689.2h.1M720.3 700.1h.1M753.4 687.5h.1M714.8 685.5h.1M650.7 702.5h.1M751.2 699.6h.1M738 696.1h.1M741.6 706h.1M736.4 700.9h.1M722 686.7h.1M705.5 715.1h.1M739.9 706.2h.1M781.3 700.1h.1M772.7 697.3h.1M781.9 697.9h.1M744.4 681.8h.1M729.8 715.3h.1M746.6 696.1h.1M748.8 700.2h.1M698.4 693.8h.1M766.9 684.3h.1M671.4 692.2h.1M739.8 687.5h.1M765.7 696.2h.1M754.1 695.1h.1M732.4 702.9h.1M770.5 700h.1M744.4 690.7h.1M754.8 690.9h.1M778.1 701.9h.1M665.5 692.6h.1M714.7 695h.1M753.2 703.9h.1M720.8 682.5h.1M685.8 708.2h.1M746.5 682.5h.1M786.3 688.4h.1M750.2 686.5h.1M758.1 684h.1M706.9 705.2h.1M746.9 711.1h.1M748 722.3h.1M752.2 704.1h.1M787.9 697.5h.1M705.8 703.1h.1M725.2 691.5h.1M709.1 686.8h.1M750.2 703.5h.1M684.1 676.6h.1M772.5 710.3h.1M685 700.5h.1M639.7 686.2h.1M619.9 711.6h.1M584.6 695.7h.1M588 678.9h.1M621.3 697.6h.1M634 701.4h.1M593.1 692.8h.1M600.8 694.1h.1M640.3 708.3h.1M585.3 680.4h.1M614.4 694.8h.1M626.6 691.8h.1M625.8 685.2h.1M594.7 685.7h.1M600.3 719.7h.1M645.6 711.4h.1M581.4 684.8h.1M612.6 716.1h.1M617.4 698h.1M605.2 703.5h.1M636 688.3h.1M644.2 700.6h.1M594.5 712.1h.1M623.5 697.3h.1M640.5 706.7h.1M595.8 695.9h.1M593.3 695.9h.1M647.6 690.5h.1M605.1 701.4h.1M599.1 701.3h.1M657.2 703.4h.1M579.6 688.9h.1M613.1 685h.1M602.1 721.8h.1M609.9 686.1h.1M589.3 693h.1M621 704.9h.1M608.9 712.9h.1M572.2 687.6h.1M617.4 706.8h.1M599.3 686.1h.1M610.9 710.7h.1M623.6 693.7h.1M620.2 690.5h.1M604.6 701.2h.1M619.4 685.4h.1M624 708.8h.1M635.9 682h.1M611.3 676.6h.1M634.5 701.1h.1M633.9 682.3h.1M588.1 708.5h.1M659.8 697.3h.1M603.2 705.1h.1M644.2 701.6h.1M633 713.6h.1M634.8 715h.1M597.6 697.7h.1M617.9 691.8h.1M640.9 703.6h.1M565 673h.1M583 681h.1M585 699h.1M612 660h.1M650 733h.1M690 760h.1M683 762h.1M737 762h.1M771 760h.1M733 722h.1M745 735h.1M739 708h.1M620 743h.1M644 740h.1M770 780h.1M750 790h.1M722 782h.1M700 756h.1M667 754h.1M642 760h.1M620 730h.1M731 637h.1M623 605h.1M565.5 652.8h.1" stroke="#b4b9bf" stroke-width="2.3" stroke-linecap="round" fill="none" opacity="1.0"/><path d="M740.1 879h.1M769.1 875.4h.1M716 866.7h.1M787.5 881.1h.1M731.1 878.4h.1M758.6 873.1h.1M747.4 876.6h.1M641 876.4h.1M773.6 879.1h.1M787.2 874h.1M802.3 873.8h.1M717.9 881.3h.1M790 876.3h.1M789.6 877.7h.1M660.8 877.1h.1M786.3 875.8h.1M733.8 879.8h.1M744.3 874h.1M760.5 870h.1M714.5 878.3h.1M728.5 879.8h.1M734.6 878.9h.1M704.3 871.9h.1M718.4 879.7h.1M787.8 871.6h.1M755.8 875.1h.1M651.1 877.1h.1M735.1 877h.1M741 878.8h.1M731.9 876h.1M729.4 876.5h.1M670.8 871.9h.1M803.2 874.8h.1M789.8 876h.1M752.2 876.1h.1M752.9 874.6h.1M739.5 872.6h.1M747.4 877.4h.1M789.6 875.3h.1M752.3 874.5h.1M782.7 879.2h.1M774.9 875.3h.1M763.7 877.2h.1M756 875.1h.1M704.8 876.7h.1M807.1 872.7h.1M731.1 879.6h.1M771.1 880.5h.1M732.6 875.6h.1M760.8 873.5h.1M723.6 870.7h.1M776.3 877.2h.1M766.7 874.2h.1M745.1 875.4h.1M744.3 874.1h.1M748.4 873.3h.1M707.2 869.2h.1M666.3 873.5h.1M816.1 874.6h.1M751 873.4h.1M783.8 871h.1M740.2 876.8h.1M739.7 877.1h.1M754.1 878.5h.1M759.9 876.5h.1M781.3 875h.1M778.5 870.4h.1M735.7 879.4h.1M789.6 876.9h.1M803.6 876.4h.1M770.6 878.1h.1M754.3 876.2h.1M751.4 877h.1M797.1 874.9h.1M679.9 878.9h.1M764.3 874.2h.1M677.3 873.1h.1M811.1 875.1h.1M796.6 880.1h.1M765.7 874.7h.1M779.9 879.4h.1M747.7 878h.1M690.2 880.3h.1M704.8 877.3h.1M786.5 875.5h.1M745.9 878.5h.1M813.1 875.2h.1M720.2 877h.1M709.8 878.6h.1M778.7 873.1h.1M709.5 875.1h.1M733 875.1h.1M721.5 874.2h.1M780 873h.1M664.2 876h.1M730 874.1h.1M771.4 876.6h.1M758.5 883h.1M795.5 875h.1M679.9 874.4h.1M751.9 875.9h.1M777.3 878.4h.1M681.5 877h.1M678.7 873.6h.1M759.8 878.4h.1M718.5 875.9h.1M730.2 878.8h.1M770.5 872.7h.1M767.6 879.7h.1M717.8 879.4h.1M731.3 881.7h.1M735.9 876.3h.1M752.1 874h.1M751 875.3h.1M764.2 877.6h.1M729.8 875.9h.1M759.4 876.9h.1M764.1 871.5h.1M751.3 872h.1M723.8 868.4h.1M753.1 876.9h.1M772.8 875.8h.1M729.1 875.2h.1M804.5 875.2h.1M790.1 875.2h.1M700.7 874.5h.1M778.2 877.8h.1M748.3 876.9h.1M751 878.9h.1M740.3 880h.1M798.3 872.8h.1M685.7 878.3h.1M767 871.3h.1M752.5 878.2h.1M775.6 876.3h.1M718.2 873h.1M779.9 871.7h.1M773.9 874.2h.1M774.4 871.8h.1M769.7 875.4h.1M754.4 873.5h.1M772 878.4h.1M807.3 875.1h.1M732.9 870.2h.1M727.7 883.9h.1M736.2 875.3h.1M719.7 873.2h.1M770.2 869.5h.1M739.4 878.5h.1M775.1 878.1h.1M746.9 875.2h.1M800 874h.1M759 874.2h.1M715 872.5h.1M743.4 876.8h.1M775.7 877h.1M766.4 880.7h.1M745.1 881.5h.1M737.2 875.1h.1M775.2 874h.1M769.5 875.5h.1M795.4 871.5h.1M708.2 879.3h.1M742.8 875h.1M775.9 877.6h.1M682.9 877.6h.1M766.9 871.4h.1M721.5 875.8h.1M719.5 871.5h.1M751.1 876.3h.1M721.4 881.1h.1M767.4 874.9h.1M777.7 875h.1M780.5 878.5h.1M759 874h.1M730.4 871.2h.1M722 877.2h.1M783.2 875.5h.1M745.7 878h.1M755.9 879.5h.1M785.1 875.2h.1M726.8 874.3h.1M691.7 879.6h.1M801.6 874.3h.1M654.1 879.2h.1M771.6 878.4h.1M801.9 876.3h.1M774 874.6h.1M746.8 878h.1M753.6 874.4h.1M746.3 879.4h.1M758.2 873.1h.1M761 876.3h.1M684.5 873.5h.1M740 879.8h.1M753.6 882.6h.1M746.3 878.7h.1M761.6 878.9h.1M638.7 869.4h.1M755.1 876.2h.1M739.9 875.3h.1M780.5 872.7h.1M697.8 883.1h.1M770 874.9h.1M732.4 877.1h.1M698.4 869h.1M717.3 879.5h.1M687.8 878.1h.1M751 877.5h.1M752.3 877.7h.1M745.5 872h.1M778.5 876.2h.1M742.3 877.3h.1M745.7 881.1h.1M762.3 876.2h.1M785.4 878.6h.1M804.8 872.9h.1M715.9 877.1h.1M798.2 874.9h.1M714.4 880.3h.1M760.7 874.8h.1M786.4 877.8h.1M734.4 875.2h.1M708.6 876h.1M746.9 875.7h.1M728.2 871.3h.1M750.5 880.2h.1M740.4 880.5h.1M788.9 876.4h.1M754 874.5h.1M763.1 873.3h.1M767.4 877.2h.1M748.6 882.6h.1M754.4 874h.1M803.2 882.2h.1M724.7 878.4h.1M785.8 871.8h.1M747.4 874.6h.1M660.9 879.2h.1M774.4 875.8h.1M678.2 876.6h.1M780.2 876.2h.1M748.7 875.9h.1M727.8 872.6h.1M771.3 881.5h.1M726.6 876.9h.1M675 878.7h.1M689.8 875.4h.1M706.9 869.3h.1M771 873.9h.1M650.3 875.6h.1M712.5 877.4h.1M788.1 871.7h.1M791.7 871.2h.1M750.6 873.9h.1M783.7 876.3h.1M755.9 874h.1M772.4 879.9h.1M754.8 870.5h.1M712.1 873.8h.1M680.1 880.8h.1M783.9 874.1h.1M773.9 878.1h.1M789.7 874.6h.1M668.2 878.8h.1M749.5 872.7h.1M730.6 871.3h.1M750.3 877.7h.1M740.3 878.9h.1M771.3 880.1h.1M756.2 876.5h.1M760.7 875.1h.1M747 880h.1M734.5 878.9h.1M724 876.4h.1M719.3 877.4h.1M680.5 870.2h.1M750.4 875.3h.1M767.4 875h.1M781.9 873.2h.1M738 874.6h.1M684.7 880.6h.1M722.4 878.2h.1M687.8 874.6h.1M747.4 875.2h.1M755.1 870.8h.1M785.3 874.9h.1M722.4 874.6h.1M785.2 877.3h.1M794 877h.1M661.3 874.8h.1M781.9 880.1h.1M707.2 876.3h.1M776.7 880.3h.1M764.5 871h.1M727.7 876.7h.1M703.4 877h.1M749.4 874.9h.1M732.5 869.8h.1M788.5 873h.1M752 877.9h.1M758.1 870.7h.1M797.5 875h.1M732 874.5h.1M727.6 871.6h.1M737.5 872.8h.1M708.3 875.2h.1M671.2 872.8h.1M748.4 876h.1M775.1 874.4h.1M750.5 873.5h.1M764.2 876.8h.1M787.2 869.5h.1M691.6 872.8h.1M792.2 873.8h.1M740.5 873.8h.1M774.3 878.4h.1M744.2 874.3h.1M746.5 875.4h.1M796.8 865h.1M755.5 879.3h.1M788.1 875.3h.1M744 877.3h.1M800.6 879.8h.1M766.7 876.7h.1M751.2 874.5h.1M815.1 871.6h.1M765.3 881.5h.1M737 875.8h.1M718.5 871.8h.1M759.7 879h.1M794.5 874.4h.1M761.8 872.4h.1M745.2 876.3h.1M750.5 873.4h.1M758.8 870.5h.1M787.8 876.7h.1M772.7 876.5h.1M739 877.9h.1M678.2 876.3h.1M679.2 873.1h.1M680.2 874.4h.1M749.9 877.6h.1M775.3 876h.1M687.2 876.9h.1M726.2 872.9h.1M763.5 873h.1M714.8 876.5h.1M729.2 873.6h.1M750.8 878.1h.1M747.3 881.8h.1M757 877.9h.1M722.6 875.4h.1M702.4 882.1h.1M783.2 879.9h.1M776.2 877h.1M744.4 880h.1M751.7 877.7h.1M695.9 873.9h.1M767.9 879.6h.1M775 877.7h.1M798.5 872.5h.1M704.3 873.5h.1M737 867.7h.1M785.2 872.8h.1M805.2 877.8h.1M764.4 871.1h.1M723.3 875.4h.1M674 873.3h.1M682.2 879h.1M728.4 879.6h.1M733.4 877.8h.1M748.3 879.2h.1M735.9 877.5h.1M776.1 878.6h.1M755.6 873.5h.1M754.5 877.5h.1M723 876.8h.1M769.7 876.5h.1M757.6 880.6h.1M795.9 873.7h.1M708 879.5h.1M754.8 875.9h.1M759.8 873.5h.1M777 872.2h.1M731.4 875.9h.1M683.6 873.2h.1M770.7 874.4h.1M668.8 878.4h.1M681.8 874.1h.1M751.6 876.1h.1M780 874.4h.1M729.7 872.1h.1M770.6 874.9h.1M705.8 879.4h.1M753.5 874.9h.1M725.7 873.6h.1M754.1 872.4h.1M742.1 877.2h.1M754 876.7h.1M781.2 877.7h.1M804.6 874.7h.1M729.2 873.4h.1M818 876.8h.1M725.8 875.4h.1M786.5 874.4h.1M676.1 876.3h.1M724.7 878h.1M753 869.4h.1M723.5 875.4h.1M802.1 872.9h.1M729.9 874.9h.1M750.1 876.2h.1M747.6 873h.1M690 873.7h.1M712.4 873.2h.1M706.2 876.7h.1M777.3 878.1h.1M776.6 878.8h.1M722.4 873.4h.1M713.5 871.6h.1M740.7 873.5h.1M717.1 877.6h.1M728 875.2h.1M708.5 872.2h.1M671 877.1h.1M734.6 876h.1M786.6 878h.1M816.4 874.4h.1M753.9 880.9h.1M775.9 875.3h.1M726.7 875.3h.1M647.9 873.4h.1M790 875.7h.1M771.7 876.7h.1M686.9 876.5h.1M755.9 878.9h.1M698.7 876.7h.1M794.1 876h.1M721.3 873.7h.1M802.6 875h.1M713.5 874.7h.1M737.1 876.9h.1M787.6 877.9h.1M736.3 879.2h.1M661.1 880h.1M778 874.9h.1M780.2 876h.1M739.3 875.9h.1M725.2 873.7h.1M757.1 877.3h.1M733.6 876.7h.1M727.6 873.7h.1M703.4 874.2h.1M778.2 875.8h.1M762.3 880.7h.1M701.4 870.6h.1M776.7 882.3h.1M754.7 881.9h.1M634.9 874.4h.1M757.8 871.2h.1M769.3 879.8h.1M781.8 877.9h.1M763.5 875.1h.1M773.7 875.9h.1M740.1 877.5h.1M722.8 875.6h.1M799.4 877.4h.1M631.8 879h.1M751.6 874.8h.1M709.1 876.8h.1M789.4 878h.1M765.1 870.5h.1M761.1 881.7h.1M772.7 878.4h.1M771.8 871h.1M650 875.5h.1M735.4 875.9h.1M749.4 879.1h.1M779 878.1h.1M708.5 873.4h.1M779.6 881.3h.1M796.6 876.2h.1M754.7 876.3h.1M740.4 873.6h.1M780.9 883.2h.1M782.6 880h.1M783.7 876.8h.1M732 876.3h.1M665.7 881.3h.1M660.5 877.2h.1M735.2 872.4h.1M819.6 875.1h.1M716.1 878.2h.1M693.7 879.8h.1M798.7 879.1h.1M803.7 876.3h.1M791.5 874.5h.1M780.6 873.7h.1M785.4 874.4h.1M718.1 877.7h.1M775.5 872.9h.1M677.6 874h.1M719.9 875.4h.1M786.8 875.1h.1M700.8 878.6h.1M799.7 876.2h.1M762.5 881h.1M731.8 875.7h.1M765.2 878.1h.1M645.1 876.4h.1M775.7 876.3h.1M756.1 876.3h.1M783.6 874.5h.1M763.3 871.6h.1M651.9 876.7h.1M749.5 883.6h.1M733.6 877.6h.1M763.6 879.5h.1M812.3 875.5h.1M743.9 868.8h.1M774.9 873.7h.1M776.8 879.3h.1M772.5 875.9h.1M748.2 880.9h.1M764.7 874.6h.1M767.7 878.9h.1M791 876.7h.1M733.9 875h.1M737.1 873h.1M749.8 873.5h.1M771 877.5h.1M758.5 879.2h.1M702.5 882h.1M728.9 867.6h.1M748 879.3h.1M802.7 876.5h.1M759.5 876.2h.1M703 876.5h.1M719.6 878.1h.1M690.2 872.7h.1M779.9 877.6h.1M789 879h.1M794 874.9h.1M763.9 879.5h.1M713.1 872.4h.1M780.7 872.8h.1M765.3 878.8h.1M750.7 879.3h.1M644.8 874.7h.1M758.1 876.3h.1M767 875.4h.1M762.1 872h.1M733 882.7h.1M756 874.7h.1M730.8 870.7h.1M741.1 885.4h.1M745.2 878.8h.1M735.7 876.5h.1M747.7 876.6h.1M761 875.6h.1M670.9 869.8h.1M734.9 877.4h.1M746.2 871.5h.1M774.1 880.2h.1M741.9 879.1h.1M753 872.7h.1M735.7 877.6h.1M783 875h.1M781.2 876.2h.1M658.3 873.8h.1M726.6 881h.1M756.1 875.8h.1M709.2 878.3h.1M775.8 872.9h.1M817.3 876.9h.1M804.6 877.1h.1M733.2 877.7h.1M746.1 877.9h.1M782.7 875.5h.1M744.1 874.3h.1M749 875.3h.1M741 868h.1M788.6 874.1h.1M707.2 876.4h.1M722.9 872.4h.1M778.9 873.6h.1M773.9 884.2h.1M765.7 876.5h.1M729.6 878.8h.1M741.3 876.9h.1M755.5 874.5h.1M677.6 867.2h.1M792.8 876.5h.1M792.1 878.8h.1M798.2 878h.1M689.1 879.2h.1M739.2 873.4h.1M766.7 878.6h.1M811.7 878.1h.1M699.4 872.5h.1M720.9 871.5h.1M683.4 869h.1M732.4 874.8h.1M706.5 875.8h.1M767.9 877h.1M720.7 871h.1M715 878.6h.1M776.4 879.2h.1M756.9 873.3h.1M792 874.3h.1M749.3 875.7h.1M778.1 874.9h.1M788 873.9h.1M775.7 873.9h.1M761.3 876.9h.1M737.3 879.8h.1M699.4 879.2h.1M754.8 876.3h.1M770 876.7h.1M786.5 881.3h.1M710.9 879.2h.1M733.9 877.5h.1M756 876.4h.1M792.7 874.5h.1M733.6 879h.1M804.7 877.6h.1M703.5 873.9h.1M723.1 873.3h.1M751.9 875h.1M810 873.7h.1M789.3 870.1h.1M746.6 871.8h.1M766.2 882.3h.1M690.1 876.3h.1M642.1 876.4h.1M761.8 877.1h.1M694.9 875.1h.1M800.2 875.5h.1M746.8 872.2h.1M781.8 876.6h.1M769.7 876.3h.1M728.9 877.2h.1M682.7 880.4h.1M755.5 874.9h.1M757.5 873.6h.1M760.4 873.8h.1M672.5 875.8h.1M776.3 872.6h.1M708.9 876.8h.1M753.2 872.2h.1M765 877.4h.1M766.2 875.5h.1M769.8 874.7h.1M736.6 879.6h.1M801.6 878.7h.1M727.5 879.3h.1M776.2 868.4h.1M734.9 875.4h.1M763.4 878.9h.1M741.6 875.2h.1M720.4 874.1h.1M727.5 879.8h.1M758 879.4h.1M752.1 877.4h.1M759.6 873.4h.1M752.6 875.7h.1M793.3 875.3h.1M762.5 879.7h.1M694 878.9h.1M783 874.7h.1M676 876.9h.1M772.1 873.1h.1M745.4 872.1h.1M743.1 876.4h.1M699.1 876.1h.1M754.6 879.8h.1M729.6 877.1h.1M789.6 872.5h.1M806.6 879h.1M643 874.1h.1M793.9 875.5h.1M751.3 876.7h.1M700.2 882.1h.1M723.1 868.6h.1M753.1 877.6h.1M727.4 878.1h.1M757.4 884.4h.1M796.4 877.8h.1M745.5 878.7h.1M757.6 874.6h.1M751.7 874.6h.1M725.6 874.2h.1M663.4 867.9h.1M760.6 870.8h.1M673.8 877.4h.1M766.7 874.8h.1M768.2 878.3h.1M767.2 870.2h.1M713.1 873.5h.1M741.8 879.7h.1M728.9 875.6h.1M698.6 879.1h.1M675.6 880h.1M781.9 883.4h.1M753.1 877.2h.1M780.8 879.2h.1M771.6 877.4h.1M678.9 873.3h.1M745.8 876h.1M781.5 869.5h.1M735.9 877.7h.1M772.4 874.8h.1M766.6 874.6h.1M771.6 877h.1M781.4 875.7h.1M748.4 873.9h.1M779.6 875.1h.1M754.1 880.2h.1M790.9 876.7h.1M750.4 880.4h.1M735.5 872.8h.1M771.5 869.6h.1M760 877.9h.1M766.9 874.2h.1M662.5 872.4h.1M736.3 879.1h.1M765 874.7h.1M748.4 876.7h.1M698.8 875.5h.1M673.2 876.5h.1M711.6 876.1h.1M802 873.7h.1M792.4 879.7h.1M711 877.6h.1M708.4 877.8h.1M776.4 875.5h.1M745.4 872.3h.1M690.1 877.4h.1M736.7 875.1h.1M769.2 874h.1M752.1 873h.1M767.6 879.6h.1M746.8 875h.1M789.7 874.8h.1M650.1 877.7h.1M725.8 876.9h.1M744.1 873.7h.1M737.5 878.8h.1M764.7 872h.1M748.6 876h.1M742 873.9h.1M721 877h.1M711.2 887.3h.1M749.7 870.2h.1M732.4 879.7h.1M700.3 879.6h.1M778.5 870.7h.1M729.9 872.5h.1M680.1 876.6h.1M642.5 873h.1M763.1 876.7h.1M779.3 877.5h.1M744 876.9h.1M738.2 874.6h.1M760.9 872h.1M753.3 881.8h.1M716.6 873.8h.1M794.9 873.3h.1M774.9 876.5h.1M777.6 877.2h.1M727.4 873.4h.1M760.9 871.5h.1M750.9 880.3h.1M746.3 881.3h.1M748.7 883.6h.1M797.8 876.2h.1M773.9 878.2h.1M796.7 879h.1M737.4 875.9h.1M753.4 876.4h.1M768.2 879.8h.1M787.9 875.4h.1M723 878.7h.1M728.2 872.2h.1M808.3 875.2h.1M654.9 875.3h.1M746.3 878.2h.1M742.1 877.5h.1M774 873.7h.1M741.9 867.2h.1M765 883.5h.1M778.7 874.4h.1M760.6 875.4h.1M788.5 877.2h.1M738.9 878.3h.1M713.8 878.9h.1M740.3 875.4h.1M765.1 873.1h.1M702.3 875.9h.1M674.9 878.1h.1M746.3 876.7h.1M712.4 879.9h.1M724.8 880.3h.1M705.8 872.6h.1M753.2 875.6h.1M766 882.9h.1M758.8 876.7h.1M793.7 877.8h.1M727.5 874.9h.1M653.4 874.9h.1M687.8 878.8h.1M798 881h.1M757.6 878.9h.1M784.3 875.9h.1M749 874.5h.1M707.7 876.4h.1M783.9 876.5h.1M707.8 871.7h.1M769.8 877.2h.1M787.3 877.8h.1M754.5 876.9h.1M745.9 877.8h.1M734.1 876.5h.1M779.8 877.1h.1M761.5 879.6h.1M810.3 878.9h.1M782.3 874.8h.1M737.2 877.5h.1M763.2 881.3h.1M737.8 876.3h.1M631.7 879.7h.1M785.2 880.1h.1M725.2 876.5h.1M760.4 873.8h.1M680.2 872.4h.1M757.5 876.6h.1M754.6 875.9h.1M756.2 875.2h.1M714 880.7h.1M761.6 878.4h.1M730.1 882.6h.1M749.1 871.2h.1M793.7 873.9h.1M695.2 874.4h.1M769.6 870.2h.1M726.1 874.3h.1M726.1 871.4h.1M751 881.3h.1M759 873.1h.1M753.1 878.3h.1M742.9 875.9h.1M778.1 872.8h.1M757.7 876.2h.1M717.4 876.6h.1M761.9 876.9h.1M780.1 881.2h.1M787.6 867.7h.1M772.7 875.7h.1M735.1 879.4h.1M686.7 876.6h.1M746.6 877.9h.1M726.5 880.3h.1M777.4 876.7h.1M710.5 872.8h.1M700.7 874.9h.1M809.4 876.7h.1M721.5 877.2h.1M770.6 876.1h.1M710.8 867.9h.1M729.4 877.4h.1M712.4 872h.1M735.1 868.2h.1M688.2 883.4h.1M756.4 879.8h.1M736.4 880.2h.1M779.9 872.4h.1M742.2 877h.1M760.5 877.2h.1M760.1 880.1h.1M748 882.6h.1M738.5 875.4h.1M785.3 873.4h.1M734.2 877.3h.1M763.5 885.2h.1M757.7 875.7h.1M744.2 875.8h.1M688.2 875.4h.1M758.5 877h.1M712.5 879.8h.1M727.4 877.4h.1M746.3 874.4h.1M723.6 876.5h.1M751.1 875.4h.1M784.4 871.7h.1M775.5 870h.1M760.8 877.9h.1M782.5 877.5h.1M777.7 874.9h.1M654.3 872.3h.1M790.5 872.8h.1M641.9 878.3h.1M722.3 877.8h.1M755.7 877h.1M760.7 875.3h.1M696.8 880.3h.1M711.6 872.7h.1M693.8 875.2h.1M751.3 878.9h.1M680.4 876.9h.1M812.7 879.1h.1M688.3 873.5h.1M769.9 881.7h.1M746.5 869.4h.1M784.1 877.4h.1M667.5 881.1h.1M731.2 873.9h.1M706.4 878.5h.1M762 875.7h.1M728.9 877.8h.1M749.1 880.3h.1M749.8 875.3h.1M731.6 875.6h.1M775 877.7h.1M783.6 875.6h.1M710.8 876h.1M801.3 872.7h.1M732.5 875.9h.1M759 874.9h.1M719.2 878.3h.1M746.1 873.5h.1M726.4 872.3h.1M772.6 871h.1M733.6 877.9h.1M728.1 873.4h.1M702.5 877.7h.1M734.6 870.7h.1M778.6 875h.1M751.9 875h.1M765.7 871.1h.1M762.7 873.2h.1M764.8 870.7h.1M711.8 874.3h.1M723 876.9h.1M676.8 870.6h.1M686.7 879.3h.1M759.8 874.7h.1M748 871.1h.1M754.2 875.4h.1M795.5 874.9h.1M788.9 878.6h.1M784.9 876.8h.1M734.7 871.9h.1M669.4 880.4h.1M775.6 874.2h.1M705.9 874.7h.1M722.9 874.7h.1M763 874h.1M785.1 875.2h.1M676.5 881.7h.1M635.4 874.7h.1M773.8 876h.1M791.1 870h.1M733.8 871.7h.1M770.6 880.2h.1M767.6 879.9h.1M630.6 872.6h.1M781.4 873.7h.1M804.7 877.8h.1M774 873.9h.1M780.5 875h.1M736.7 875.7h.1M696.3 879.5h.1M715.8 872.6h.1M773.6 876.7h.1M754.8 881.6h.1M775.3 877.3h.1M768.7 877.7h.1M705.8 874.2h.1M796.8 874.3h.1M774.7 872.5h.1M744.3 872.3h.1M768.3 876.1h.1M774.1 876.7h.1M729.2 881.9h.1M720.9 879.1h.1M776.5 880.8h.1M789.3 878.1h.1M759.3 870.9h.1M740.2 882.8h.1M706.7 879.2h.1M689.9 877.9h.1M783.4 866.7h.1M730.9 872.6h.1M798.1 878.3h.1M737.3 872.5h.1M783.8 873.7h.1M760.7 876h.1M748.8 874.4h.1M775.1 877.5h.1M738.3 872.8h.1M718.4 876.6h.1M760.9 875.5h.1M747.3 878.1h.1M686.4 872.7h.1M739.2 876.1h.1M708.6 870.6h.1M782 876.6h.1M742.2 876.7h.1M717 877.3h.1M803 875h.1M777 874h.1M730.2 879.6h.1M768.9 876.4h.1M775.4 877.6h.1M679.6 875.7h.1M732.6 876.4h.1M767.8 870.8h.1M810.1 877.1h.1M765.3 876.2h.1M756 874.1h.1M762.8 871.4h.1M799.4 874.3h.1M756.7 874.3h.1M764.6 875.6h.1M797.4 882.2h.1M774.2 877.9h.1M762 875.1h.1M776.5 873.6h.1M737.9 879.7h.1M757.5 879.9h.1M790.8 870h.1M736.2 872.5h.1M761.4 870.7h.1M692.9 876.7h.1M777.6 877.5h.1M696.8 878.7h.1M753.4 871.1h.1M744.7 877.7h.1M761.2 877.7h.1M741.9 875.1h.1M710.3 875.1h.1M781.7 875.4h.1M704.4 876.4h.1M764.9 878.8h.1M731.1 872.3h.1M788.6 872.8h.1M754.8 884.2h.1M772.4 873.8h.1M742.2 872.2h.1M784.7 877.6h.1M747.7 873.7h.1M719.9 873.2h.1M756.5 875.7h.1M703.8 875.7h.1M665.3 879h.1M795.6 877.4h.1M769.5 875.4h.1M796.8 872.2h.1M718.3 873.5h.1M758.8 880.1h.1M767.4 880.1h.1M743.8 876.4h.1M738.9 878h.1M739.3 875h.1M787.6 873.8h.1M789.7 876.6h.1M724.8 875.6h.1M731.3 877.6h.1M752.5 880h.1M689.4 870.1h.1M706.7 874.4h.1M712.2 869.4h.1M810.1 879.3h.1M800.5 876.9h.1M734.1 872.7h.1M723 881h.1M767.4 876h.1M766.9 873.9h.1M650.6 876.7h.1M742.6 877.1h.1M769.4 874.3h.1M782.1 875.8h.1M714.5 873.9h.1M809 876.5h.1M771.2 871.3h.1M741.7 873.9h.1M776.7 878h.1M782.1 871.4h.1M782 874.6h.1M777.4 871.4h.1M774.6 873.7h.1M714.3 871.6h.1M749.2 876.2h.1M797.1 876.1h.1M734.3 877.5h.1M781.6 877.3h.1M752.7 877h.1M725.8 875.2h.1M788.8 873.5h.1M726.6 881.8h.1M695.2 878h.1M760.4 875h.1M721.8 880.9h.1M737.9 873.3h.1M760.3 869.1h.1M771.2 878.9h.1M809.6 875h.1M754 876.6h.1M712 875h.1M755.7 878.7h.1M765.4 876.5h.1M764.2 878.9h.1M725.2 877.7h.1M760.4 873.6h.1M737.6 877.7h.1M728.7 875.3h.1M770.6 871.7h.1M696.4 877.5h.1M768.2 871.4h.1M779 874h.1M721.4 871.8h.1M661.7 871.5h.1M702 877.2h.1M717.7 883h.1M745.1 878.9h.1M761.1 870.9h.1M764.4 876.4h.1M757.4 875.6h.1M757 876.1h.1M725.8 872.3h.1M783.3 878.3h.1M762.2 868.6h.1M772.5 876.4h.1M732.5 875h.1M778 873.8h.1M726.4 873.6h.1M750.5 871.4h.1M755.4 879.3h.1M697.8 880.5h.1M746 873h.1M745.3 874.6h.1M704.4 878.6h.1M795 874.4h.1M739.2 876.7h.1M802.6 873.8h.1M785.3 877.6h.1M738.2 876.3h.1M775.2 873.2h.1M668.6 880.3h.1M770.5 875.7h.1M770.5 881.6h.1M708.2 876.7h.1M747.9 878.2h.1M689.1 881h.1M760.3 874.2h.1M692.9 873.9h.1M771.8 872.4h.1M768.8 878h.1M717.3 877.8h.1M788.4 873.9h.1M791.9 875.3h.1M730.9 874.2h.1M657.4 879.7h.1M775.8 878.3h.1M707.7 878.4h.1M745 877.5h.1M794.4 874.9h.1M762.2 870h.1M748.5 872.9h.1M752.7 873.9h.1M696.3 875.6h.1M727.1 872.7h.1M761.8 873.4h.1M784.7 873.2h.1M756.8 878.5h.1M744.6 879.7h.1M797.9 879.3h.1M744.7 874.6h.1M756.8 877.9h.1M657.3 875.8h.1M775.7 891h.1M767.2 876.7h.1M769.9 878.4h.1M757.2 873.6h.1M776.8 876.8h.1M764.7 874h.1M768.6 873.3h.1M744.5 871.7h.1M767.4 877.2h.1M651.6 879.9h.1M734.5 874.6h.1M740 875.3h.1M803.4 878.2h.1M779.1 875h.1M808.8 881.1h.1M740.5 881.1h.1M798.1 877.7h.1M767 871.7h.1M730.9 873h.1M777.7 873.5h.1M776.3 876.3h.1M764.5 881.8h.1M751.1 878.9h.1M728.3 882.5h.1M737.5 874.3h.1M716 880.2h.1M789.1 877.1h.1M769.4 877.3h.1M752.6 875.5h.1M759.2 876.9h.1M663.5 877.1h.1M790 872.6h.1M784 877.7h.1M731.2 872.8h.1M748.6 870.7h.1M705.8 869.5h.1M745.3 876.4h.1M752.2 872.9h.1M741.3 876.6h.1M717.4 872.6h.1M774.9 870.9h.1M745 872.5h.1M800.4 879.4h.1M765.8 876.4h.1M748.9 865h.1M685.5 880.2h.1M698.4 874.7h.1M748 871h.1M768.2 874.4h.1M758.4 875.1h.1M694.4 874.3h.1M793.1 875.8h.1M791.5 876.8h.1M745.5 874.2h.1M760.1 877.7h.1M761.2 874.4h.1M762.3 870.9h.1M785.6 876h.1M782.8 875.6h.1M731.1 874.4h.1M781.4 877.9h.1M722.2 878.2h.1M798.9 874.9h.1M693.6 869.8h.1M774.3 877.2h.1M716.1 876.9h.1M760.8 876.2h.1M787.1 873.2h.1M734.6 880.5h.1M746.9 878.8h.1M748.2 878.2h.1M751.7 877.4h.1M676 875.1h.1M746.1 878.7h.1M791.9 874.1h.1M781.7 874.4h.1M778.7 875.5h.1M737.1 878.8h.1M783.8 874.4h.1M669.7 879.5h.1M702.7 877.5h.1M654.1 872.8h.1M757.1 875.9h.1M737.7 873.6h.1M697.2 877.1h.1M742.6 877.1h.1M778.4 875.7h.1M807.1 876.8h.1M757.3 879.9h.1M685.9 871.3h.1M742.2 872h.1M791.4 874.5h.1M759.8 873.7h.1M756.6 870.4h.1M706.9 875h.1M721.5 877.4h.1M676.6 878.5h.1M782.7 877.2h.1M787.4 877.4h.1M762.9 880.2h.1M683.6 872.4h.1M703.6 875.9h.1M717.8 872.9h.1M769.7 876.8h.1M798 875.5h.1M753.2 880.7h.1M718.2 875.8h.1M698.3 872.4h.1M761.6 874.3h.1M772 869h.1M737.2 875.8h.1M748.1 878.6h.1M802.1 878.1h.1M755.9 873h.1M667.2 880.1h.1M786.2 875.3h.1M696.9 872h.1M741.4 871.4h.1M709.2 876.1h.1M736.9 877.4h.1M768.4 870h.1M776.8 874.9h.1M756.9 879.3h.1M663.7 877.7h.1M738.2 874.8h.1M731.6 876h.1M757.4 876.4h.1M724.6 884.1h.1M702.4 878.9h.1M743.7 878.2h.1M685.2 874h.1M759.1 875.9h.1M711 880.2h.1M737.1 874.3h.1M669.4 878.8h.1M768.6 879.7h.1M746 879.4h.1M724.5 875.6h.1M788.3 878.2h.1M749 881.1h.1M645.2 880h.1M737.7 873.9h.1M709.7 873.5h.1M753.2 873.9h.1M721.4 872.7h.1M776.5 876.9h.1M656.7 874.2h.1M703.2 875.5h.1M758.2 880.9h.1M736.7 876.2h.1M736.5 878.3h.1M735.8 877.6h.1M755.1 878h.1M722.9 879.3h.1M770.6 874.2h.1M777.1 878h.1M749.5 877.3h.1M763 875.9h.1M714.6 884.5h.1M764.5 876.9h.1M772.9 877.9h.1M778.8 874.2h.1M789.7 876.8h.1M763.6 879.4h.1M761.8 876.9h.1M765.3 875h.1M742.1 877.9h.1M753.8 875.8h.1M730.1 877h.1M741.4 869.9h.1M704.1 879.2h.1M771 871.5h.1M701 875.6h.1M747.3 877.4h.1M767.7 872.9h.1M748.3 876.4h.1M790.9 873.2h.1M723.6 875.1h.1M721.6 876.9h.1M731.6 877.5h.1M731.2 877.9h.1M637.3 880.1h.1M772.2 878h.1M740 876.8h.1M775.8 876.2h.1M710.3 877.3h.1M756 874.3h.1M764.4 866.9h.1M782.8 878.9h.1M737.9 877.1h.1M808.6 874.2h.1M668.9 876.4h.1M743.2 878.5h.1M764.3 872h.1M686.2 864.7h.1M691.8 879.8h.1M770.1 880.4h.1M719.2 879.2h.1M757.2 876.6h.1M755.8 876.7h.1M750.5 874.5h.1M737.8 873.6h.1M709.5 871h.1M757.3 871h.1M686.4 880.3h.1M762.9 880.5h.1M704.3 866.6h.1M743.6 877.8h.1M701.8 868.9h.1M719.7 876h.1M805.9 877.3h.1M725.5 882.4h.1M818.2 874h.1M704.9 879.3h.1M750.5 877.3h.1M760.3 880.3h.1M683.7 876.4h.1M735.4 886.5h.1M777.8 878.5h.1M698.2 876h.1M749.5 877.5h.1M753.9 877.7h.1M669.2 879.5h.1M637.7 886.3h.1M704 874h.1M730 876.2h.1M691.5 880.4h.1M781.9 876.4h.1M743.4 872.9h.1M734.5 877.6h.1M773.1 871.4h.1M748.9 873.6h.1M778.5 876.7h.1M683.4 879.2h.1M745 880h.1M808.5 879.2h.1M810.9 874.9h.1M797.5 879.5h.1M731.1 873.5h.1M754.8 877.7h.1M768 874.6h.1M694.2 876.5h.1M735.3 873.2h.1M775.4 876.6h.1M765.7 873.5h.1M770.7 875h.1M690.3 876.1h.1M748.5 877.4h.1M769.9 881.1h.1M758.9 874.4h.1M747.2 886.3h.1M786 881.1h.1M762.3 874.5h.1M732.5 869.2h.1M752.1 880h.1M786.1 871.5h.1M723.7 877.2h.1M731 875.9h.1M750.7 872.2h.1M782.4 880.8h.1M811.2 872.6h.1M717.8 877h.1M738.6 875.6h.1M783.6 877.2h.1M763.2 876.5h.1M790.2 876.4h.1M744.3 878.3h.1M797.7 874.3h.1M723.5 879.5h.1M757.9 873.9h.1M737.2 868.6h.1M796.3 873.1h.1M790.4 873.8h.1M771.9 876.6h.1M735.6 873.1h.1M788.6 876.4h.1M757.3 877.7h.1M720.1 876.4h.1M756.7 877.3h.1M758.5 876.3h.1M771.2 875.2h.1M739.6 875.6h.1M777.4 878.1h.1M802.6 878.4h.1M745.6 874.5h.1M669 878.1h.1M732.8 878.6h.1M703.5 879.2h.1M786.6 875.8h.1M764.1 875.8h.1M764.3 876.3h.1M775.2 872.5h.1M706.2 877h.1M765 873.2h.1M724 876.8h.1M720.4 877.6h.1M735 877.5h.1M698 878.7h.1M694 872.3h.1M782.6 879.7h.1M663.2 871.8h.1M682.3 881.8h.1M772 879.9h.1M764.9 882.1h.1M746.8 875.8h.1M758.2 877.8h.1M751.6 875.4h.1M759.9 880.8h.1M782 876.6h.1M729.5 875.7h.1M746.6 873.4h.1M740.2 876.8h.1M790.3 874.8h.1M806.2 874.4h.1M768.2 877.9h.1M740.9 874.2h.1M745.4 875.3h.1M763.3 877.9h.1M789 875.7h.1M784.4 876.4h.1M698.5 877.3h.1M767.9 875.2h.1M740.1 879.2h.1M734.9 876.7h.1M763.3 876h.1M787.7 876.2h.1M789.2 879.1h.1M710.4 882.4h.1M743.1 872.6h.1M647.3 874.9h.1M786.4 877.8h.1M698.8 870.5h.1M795.8 875.5h.1M760.1 874.5h.1M737.6 876.5h.1M762.6 871.5h.1M723.3 878.3h.1M800.6 877h.1M769.8 879.2h.1M778.4 873.7h.1M755.7 879.5h.1M750.6 873.5h.1M728.8 882.1h.1M788.4 882.8h.1M770.9 876.9h.1M761.1 873.6h.1M804.1 872.9h.1M780.8 876.8h.1M749 875.3h.1M793.5 870.9h.1M805.9 875.2h.1M766.3 879h.1M751.4 871.6h.1M744 877.1h.1M812.6 876.1h.1M801.4 877.9h.1M727.2 872h.1M746.2 873.7h.1M735.4 877.3h.1M758.1 874.7h.1M685.2 869.7h.1M746 874.8h.1M760.1 875.4h.1M745.8 872.8h.1M716.2 877.1h.1M778.2 875.8h.1M740.3 879.4h.1M737.9 870h.1M753.5 878.5h.1M752.7 876.9h.1M703.5 881h.1M739.1 881h.1M747.2 878.9h.1M747.4 877.2h.1M759 881.4h.1M774.9 879.8h.1M689.2 873.8h.1M666.4 869.1h.1M682 870.9h.1M636.6 878.8h.1M790.4 873.7h.1M752.5 872.5h.1M776.2 874h.1M667.8 875.2h.1M773.1 876.7h.1M721.7 873.8h.1M728.8 872.5h.1M670.6 872.5h.1M750.7 876.8h.1M733.2 875.1h.1M768.9 878h.1M808.6 878.2h.1M744.5 875.1h.1M754.9 878.6h.1M780.4 875.8h.1M753.9 874.7h.1M793 877.2h.1M788.3 873h.1M752.3 880.6h.1M743.4 872.9h.1M747.6 877h.1M798.7 877.6h.1M725.7 875.7h.1M779.1 875.3h.1M747.4 887h.1M817.2 876h.1M765.4 876.4h.1M711.1 875.6h.1M725.5 865.9h.1M768.4 876.5h.1M694.6 878.4h.1M740.3 879.2h.1M757.7 878.4h.1M758.6 874h.1M672.1 872h.1M784.1 874h.1M728.1 877.3h.1M789.9 868.1h.1M770 878.9h.1M750.7 878.9h.1M760.2 873.3h.1M751.1 880.8h.1M734.1 879.2h.1M708.7 878.7h.1M761.7 879.3h.1M706.9 875.1h.1M718.2 875.7h.1M718.9 874.1h.1M757.8 880.8h.1M705.7 878.3h.1M727 868.1h.1M652.5 883.6h.1M782.1 875.9h.1M750.5 880.4h.1M673.3 879.7h.1M730.9 876h.1M745.9 872.2h.1M782.1 875.7h.1M765.9 875.9h.1M759.6 874h.1M797.7 876.2h.1M692.9 870.5h.1M726.3 871.6h.1M693.9 875.3h.1M759.4 873.7h.1M787.8 880.5h.1M739.7 875.5h.1M684 873.5h.1M759.2 872.3h.1M764.4 877.2h.1M729.5 874.9h.1M722.4 872.4h.1M762.4 880.2h.1M803.9 875.3h.1M676.2 869.8h.1M780.3 874.2h.1M771.6 874.7h.1M748.2 876.7h.1M734.3 874.6h.1M768.6 876.1h.1M728.7 879.8h.1M758 877.2h.1M748.9 874.5h.1M680 876.2h.1M792.2 870.9h.1M791.7 874.3h.1M714.4 873.7h.1M741 875h.1M748 877.4h.1M767.2 877.6h.1M723.4 876.4h.1M771.3 875.5h.1M747 875.5h.1M782.4 876.9h.1M737.2 879.3h.1M795.3 877.6h.1M695.3 878.1h.1M776.3 876.6h.1M704.4 876.2h.1M775.6 878h.1M792.9 875.1h.1M726.1 876.5h.1M762.8 876h.1M779.1 875.8h.1M735.5 873.7h.1M672.6 878.2h.1M774.4 876h.1M764.1 885.2h.1M750.8 869.4h.1M744.9 874.1h.1M773.7 873.8h.1M756.7 877.1h.1M751.6 877.2h.1M774 877.1h.1M773.6 874.8h.1M750.9 884.4h.1M751.3 874.6h.1M743.6 877.3h.1M632 870h.1M744.7 876.1h.1M765.1 876.2h.1M782.7 875h.1M778.7 874.1h.1M763.4 876.2h.1M751.2 878.6h.1M748.7 879.6h.1M777.9 874.5h.1M788.9 875.2h.1M756.3 877.4h.1M745.7 877.5h.1M741.9 876.4h.1M727.4 877.2h.1M770.5 875.6h.1M733.6 881.3h.1M674.8 872.9h.1M750.1 874.8h.1M765.4 877.2h.1M755.2 880.6h.1M748 872.9h.1M790.1 874.4h.1M800.2 876h.1M695.3 877.2h.1M751.4 879.7h.1M743.5 879.8h.1M723.8 869.2h.1M769.8 870.8h.1M766.4 881.6h.1M746.6 878.6h.1M759.1 875.1h.1M769.2 872.6h.1M794.3 877.6h.1M732.7 875.5h.1M793.7 878.2h.1M789.2 873h.1M751.8 877h.1M731.3 873.5h.1M779 881.8h.1M806.8 880h.1M777.3 875.4h.1M686 874.5h.1M741.5 879.6h.1M758 877.1h.1M745.8 871h.1M749.6 877.3h.1M809.1 875.9h.1M782 878.9h.1M677.7 872.8h.1M787.9 876.1h.1M741.4 871.9h.1M726.6 879h.1M757.2 877.6h.1M803.7 876.3h.1M747.7 870.1h.1M648.8 875.3h.1M728.6 874.3h.1M777.1 873.8h.1M752.9 879.1h.1M750.1 880.7h.1M774.8 877.7h.1M769.3 875.7h.1M786.7 878.7h.1M653.3 878.5h.1M741.9 874.6h.1M788.3 881.2h.1M694.9 877.1h.1M779.3 872.8h.1M779.6 879.7h.1M752.5 880.6h.1M727.8 872.3h.1M798.2 875.9h.1M778.1 876.1h.1M771 873.9h.1M754.3 877.2h.1M784.1 874.1h.1M798.3 878.6h.1M810 874.9h.1M746.2 881.9h.1M699.2 876.9h.1M780.5 877.3h.1M817.8 877.7h.1M662.1 881.6h.1M775.5 868.3h.1M777.5 871.2h.1M761.7 876.9h.1M815 873h.1M818.1 875.4h.1M775 878.8h.1M799 878.2h.1M721.9 871h.1M717.8 874h.1M752.6 877.4h.1M648.7 875.7h.1M754.7 877.9h.1M724.2 868.8h.1M648.3 874.2h.1M730.1 878h.1M763.1 877.6h.1M743.2 875.1h.1M767.7 875h.1M738.5 877.1h.1M748.5 878.5h.1M799.7 873.4h.1M804.6 874.5h.1M712.8 878.4h.1M811.5 873.6h.1M758.7 879.2h.1M753.1 876.5h.1M719.7 873.8h.1M742.4 873.4h.1M792.3 878.6h.1M744.7 879.8h.1M743 875.3h.1M703.4 880.1h.1M763.7 874.7h.1M784.2 877.9h.1M765.4 871.3h.1M787 875.9h.1M771.2 874h.1M740.4 876.7h.1M779.4 876.4h.1M670.2 869.5h.1M721.6 877.6h.1M727.5 875.3h.1M745.3 879.2h.1M747.6 881.8h.1M722.3 872.8h.1M658.4 874.4h.1M666.5 882.5h.1M709.4 877.8h.1M730.9 874.8h.1M758.4 877.8h.1M664.5 877.4h.1M771.8 865.6h.1M724.5 875.5h.1M747.9 869.8h.1M643 877.2h.1M695.9 879.4h.1M782.1 880.4h.1M739 875h.1M754.5 876.7h.1M797.4 879.7h.1M780.3 877.8h.1M760.7 877.8h.1M658.2 879.1h.1M795.8 877.7h.1M759.2 879.8h.1M685.3 878.6h.1M767.1 883.1h.1M742.6 876h.1M759.2 876.7h.1M751.1 879.1h.1M766 872.7h.1M764.6 877.1h.1M710.9 877.6h.1M742.9 871.2h.1M721.9 874.6h.1M689.8 874.6h.1M704.3 883.3h.1M775.5 870.3h.1M717.6 882.2h.1M740 877.9h.1M800.6 875.2h.1M695.1 877.6h.1M749.5 884.1h.1M699.9 876.1h.1M763.9 871.2h.1M734 874.1h.1M759 879h.1M792.7 875.2h.1M688.7 874h.1M722.6 875.4h.1M741.4 876.2h.1M760.3 872.7h.1M748.4 879.4h.1M775.1 878.1h.1M755.5 877.1h.1M715.6 876.5h.1M762.7 870.6h.1M809.2 875.1h.1M789.6 875.8h.1M757.7 883.4h.1M692.5 881.6h.1M769 867.9h.1M685.5 881.2h.1M753.6 871.8h.1M744.5 875h.1M687.6 873.5h.1M797.8 876.8h.1M757.7 873.7h.1M771.9 875.9h.1M768.5 876.8h.1M752.2 876.8h.1M787.6 875.2h.1M766.3 875.9h.1M733.2 876.8h.1M772 867.7h.1M663.1 878.6h.1M761.7 877h.1M741.1 877.2h.1M791.7 877.4h.1M739.3 881.5h.1M690.8 876.3h.1M815.9 874.5h.1M734.6 876.1h.1M751.2 872.8h.1M653.9 875.7h.1M747 872.3h.1M679.8 873.2h.1M761.3 873h.1M734.1 875.1h.1M757.1 878h.1M747.3 870.7h.1M753.6 873.6h.1M757.6 880.3h.1M737.3 876.9h.1M749.5 874.4h.1M739.9 874.6h.1M754.1 875.9h.1M798.7 873h.1M679.4 875.9h.1M745.5 880.7h.1M731 877.9h.1M704.8 874.6h.1M690.6 873.1h.1M775.2 873.1h.1M781.7 880.3h.1M805.3 873.5h.1M726.3 873.3h.1M714.3 870.1h.1M732 874.8h.1M768.6 882.1h.1M799.6 876.4h.1M746.5 876.6h.1M747.9 872.7h.1M746.9 874h.1M681.7 873.9h.1M687.6 873.9h.1M741.9 874.3h.1M787.5 877.6h.1M730.7 876.9h.1M778.2 874.5h.1M739.2 877.8h.1M761.8 882.9h.1M722.5 875.1h.1M751.4 876.3h.1M767.9 874.7h.1M777.1 879.9h.1M779.6 873.8h.1M743.8 875.2h.1M764.6 876.5h.1M780.3 872.6h.1M789 875.1h.1M682.4 874.5h.1M734.4 874.6h.1M708.1 877.3h.1M760.4 877.6h.1M679.7 877.1h.1M691.4 875.8h.1M741.2 876.4h.1M755.1 876.8h.1M713.6 874.5h.1M734 871.3h.1M761.4 876.3h.1M791.4 879.3h.1M720.1 872.8h.1M741.3 877.9h.1M758.2 879.1h.1M756.3 875.4h.1M730.1 877.6h.1M729.2 880.9h.1M705.9 881.2h.1M778.7 874.5h.1M736.1 876.1h.1M764.7 876h.1M735.3 872.2h.1M759.5 872.4h.1M715.9 874.1h.1M751.5 871.9h.1M779.2 877.2h.1M763.1 875.6h.1M699.2 875.6h.1M784.4 873.7h.1M764.8 877.2h.1M760.9 879.7h.1M763.1 880.9h.1M764 878.7h.1M734.5 869.8h.1M747.7 876.1h.1M778.4 870.3h.1M715.7 865.4h.1M767.4 879.9h.1M774 874.5h.1M748.9 878.4h.1M758 875h.1M736.7 875.8h.1M716.9 880.2h.1M756.3 873.1h.1M790.2 876.6h.1M749.3 871.5h.1M786.8 878.9h.1M751.3 875.5h.1M757.1 876.1h.1M722.4 884h.1M734.9 875.8h.1M701.2 868.7h.1M766.4 877.6h.1M770.2 873.1h.1M785.2 882.7h.1M773.4 876.8h.1M695.5 877.6h.1M763.2 877h.1M754.4 871.1h.1M744.5 875.8h.1M794.9 873.2h.1M756.4 874.3h.1M735.2 873.1h.1M750.8 870.8h.1M751.3 874.9h.1M781.2 877.9h.1M749 877.3h.1M735.1 876.8h.1M791.7 878.3h.1M738.5 874.2h.1M761 873.3h.1M690.1 874.9h.1M776.6 871.1h.1M761.7 874.8h.1M689.2 876.9h.1M753.9 875.1h.1M776.6 876.6h.1M788.3 871.1h.1M782.1 874h.1M742.5 874.3h.1M749.9 876.2h.1M749.4 872.3h.1M779.4 882.1h.1M765.1 874h.1M763.4 876.3h.1M729.4 874.9h.1M773.8 878.4h.1M760.2 879.2h.1M749.8 874.6h.1M797.3 871.7h.1M785.5 874.7h.1M781.8 877.6h.1M763.9 875.7h.1M744 873.3h.1M767.7 871.6h.1M748.3 874.2h.1M776.6 880.1h.1M753.8 875.5h.1M782.1 873.1h.1M675 873.7h.1M773.7 878.9h.1M763.8 871.1h.1M761.5 883h.1M777.4 876.3h.1M765.5 877.4h.1M700.5 872.3h.1M744.6 876.3h.1M757.3 870.1h.1M740 869.4h.1M683.1 874.6h.1M756.3 873.3h.1M783.9 875.8h.1M782.2 876.2h.1M719.1 879.6h.1M775.8 882.6h.1M699.2 874.9h.1M751.5 879.1h.1M756.4 876.9h.1M765 876.5h.1M734.2 881.3h.1M775.2 871.9h.1M756.8 873.4h.1M735.3 870.9h.1M776.8 871.3h.1M729.6 873.9h.1M683 879h.1M771.4 878.1h.1M721.7 877h.1M745.4 871.1h.1M776.2 876.3h.1M766.6 866.9h.1M714.1 875.4h.1M779 876.8h.1M674.8 876.3h.1M754.6 871h.1M755.2 877.9h.1M747.7 877.9h.1M811.6 875.6h.1M782.7 876.7h.1M676.6 877.6h.1M784.9 879.4h.1M749.3 875h.1M695.3 874.7h.1M732.9 872.9h.1M747.4 876.6h.1M776.9 875.2h.1M757.1 879.4h.1M681.4 873.8h.1M774.7 878.2h.1M763.5 869.8h.1M748.6 871.4h.1M740.4 877.7h.1M731.3 882.3h.1M762.4 877.2h.1M767.7 878.6h.1M772 881.2h.1M795.2 875.8h.1M746.8 878.1h.1M769 872.8h.1M758.6 869.4h.1M710.3 874.2h.1M674.4 879.4h.1M725.8 876.9h.1M770.8 876.9h.1M737 876.7h.1M778.1 877.7h.1M786.6 875h.1M748.2 873.1h.1M788.3 877.3h.1M701.3 868.1h.1M739.2 881.4h.1M697.5 874.5h.1M764.5 879.6h.1M739.3 884.5h.1M795.4 876.2h.1M698.3 876.3h.1M743.5 872.7h.1M767.2 880.1h.1M779.1 877.7h.1M756.1 874.4h.1M757.8 875.5h.1M773.7 871.4h.1M774.7 878.5h.1M786.7 875.1h.1M717.5 870.5h.1M791.3 875.3h.1M643.6 874.5h.1M760 876h.1M729 882.9h.1M736.8 878.7h.1M787.8 874.6h.1M767.9 881.7h.1M687 876.5h.1M731 879h.1M767.4 876.3h.1M764.6 878.1h.1M804.9 876.3h.1M742.5 881.2h.1M791.8 876.8h.1M711.9 878.5h.1M762.6 876.8h.1M780.4 874.5h.1M658 877.4h.1M750.4 873.6h.1M708.4 873.6h.1M765 873.6h.1M731.1 875.6h.1M756.6 878.8h.1M724 877.7h.1M782.2 874.1h.1M749.3 877.1h.1M679.4 877.8h.1M700.4 875.8h.1M778.9 874.5h.1M746.8 875.6h.1M768.8 874.8h.1M783.4 876.1h.1M717 877.8h.1M760.3 869.9h.1M681.6 877.3h.1M757.3 875.2h.1M734.9 877.1h.1M795.5 876.9h.1M786.7 876.1h.1M784.2 879.1h.1M721.9 876.9h.1M766.3 873.1h.1M761.3 873.2h.1M723.9 880.5h.1M770.8 875.8h.1M756.3 877.5h.1M718.4 881.8h.1M766.9 876.8h.1M791.2 874.1h.1M719 875.7h.1M680.4 874h.1M718.4 876.4h.1M767.1 880.9h.1M724.4 873.7h.1M740.9 869.7h.1M795.4 876.9h.1M794.8 876.1h.1M723 879.3h.1M789 876.4h.1M774.4 874h.1M739.9 871.4h.1M806.3 876.2h.1M702.6 876.6h.1M782.3 873.7h.1M780.6 876h.1M778.7 878.8h.1M713.7 878.3h.1M722.1 871.1h.1M709 879.3h.1M732.1 875h.1M723.7 882h.1M719.5 883.1h.1M799.6 872.4h.1M733.9 875.2h.1M756.9 873.6h.1M746.2 872.6h.1M765.5 881.1h.1M679 874.6h.1M774.7 879.1h.1M726.8 876.6h.1M732.2 876h.1M742.9 878.8h.1M751.6 877.8h.1M765.7 877.6h.1M766.8 876.8h.1M795 880.4h.1M724.2 876.5h.1M758.7 875.1h.1M747.4 877.1h.1M760.3 876.2h.1M775.3 875.9h.1M767.8 880.5h.1M763.5 876.3h.1M728.6 882.7h.1M771.6 881.1h.1M723.6 878.1h.1M720.3 876.6h.1M755.2 876.1h.1M696.7 876.4h.1M766 877.2h.1M764.3 873.4h.1M772.7 872h.1M746.2 877.6h.1M742.3 871.3h.1M701.4 871.8h.1M738.2 872.4h.1M766.5 874.3h.1M725.2 876.7h.1M792.8 879.1h.1M749.3 874h.1M696.6 880h.1M681.7 876h.1M747.6 870.5h.1M706.3 875.4h.1M781.3 876.1h.1M757.6 881.6h.1M708.6 877h.1M758.8 879.9h.1M731.8 875.1h.1M760.2 874.9h.1M741.1 879.5h.1M679.5 874.2h.1M783.4 882.7h.1M745 876.7h.1M772.8 880h.1M686.7 875.6h.1M759.3 874.7h.1M759.3 874.8h.1M752.9 875.1h.1M744.6 874.9h.1M741.6 873.5h.1M737.4 882h.1M763.5 877h.1M648.1 876.9h.1M770.7 877h.1M719.2 876h.1M770.7 876.8h.1M724.6 872.9h.1M791.8 878.9h.1M763.2 876.7h.1M765.7 877.9h.1M772 880.5h.1M729.5 875.9h.1M775.5 881h.1M733.8 873.4h.1M809.6 876.4h.1M702.8 872.9h.1M776.5 873.2h.1M783.3 878.2h.1M744.1 874.4h.1M772.1 879h.1M779.1 874.5h.1M798.6 876.6h.1M766.6 877.6h.1M757.9 868.7h.1M735.7 877.1h.1M769 877.6h.1M773.6 885.3h.1M766.3 873.4h.1M693.4 875h.1M754.9 871.4h.1M730.9 869.8h.1M752.8 876.6h.1M803.1 876.1h.1M785.9 878.2h.1M738.3 881.5h.1M802.6 871.6h.1M756.2 875.2h.1M712.9 875.2h.1M695.6 884.3h.1M776.3 873.8h.1M744.8 876.6h.1M762 876.8h.1M721.8 874.7h.1M791.8 872.6h.1M673.7 874h.1M696.9 875.8h.1M802.5 874.3h.1M743 875h.1M762.9 877.6h.1M732.2 876h.1M728 877.4h.1M733.1 876.1h.1M736.7 878.1h.1M787.4 877.3h.1M776.9 878.3h.1M763 877.5h.1M759.8 875.7h.1M768.9 876.7h.1M745.7 873.3h.1M672.5 876.6h.1M713.8 872.2h.1M754.2 875.6h.1M742 872.8h.1M728.3 873.5h.1M757.6 872.7h.1M724.9 878.3h.1M722.5 881.2h.1M786.7 877.7h.1M742.3 873.5h.1M716.3 875.9h.1M768.7 873.4h.1M779.1 881.3h.1M780.9 872.9h.1M763.7 878.6h.1M765.6 883.5h.1M750 874h.1M750.9 873.9h.1M725.6 876.3h.1M779.7 871.7h.1M715.7 871.2h.1M713.4 881.9h.1M723.9 875.8h.1M752.3 872.2h.1M756.2 871.7h.1M773.7 874h.1M746.2 877.4h.1M783.1 873.1h.1M741.1 878.6h.1M739.2 880.1h.1M778.4 873.4h.1M780.4 873.2h.1M760.5 880.3h.1M776.5 871.7h.1M791.5 882.3h.1M758.3 879h.1M810.7 874.4h.1M760.3 872.7h.1M779.1 869.4h.1M717.1 872.6h.1M749.6 878.8h.1M788.6 877.8h.1M717.2 880.7h.1M711.4 874h.1M703 875.9h.1M744.8 875.5h.1M746.6 869.1h.1M717.7 875.9h.1M725.8 873.7h.1M789.4 877.9h.1M776.9 878.1h.1M718.3 870.3h.1M688.4 873.5h.1M768.6 874.8h.1M679.3 876.2h.1M740.2 877.8h.1M707.1 871.5h.1M766.6 871.9h.1M762.7 877h.1M740 878.7h.1M710.2 876.4h.1M781.6 876.6h.1M753.2 878.2h.1M724.8 877h.1M782.6 871.3h.1M663.5 874.3h.1M722.1 883.9h.1M740.1 878.1h.1M745.4 873h.1M792.1 878.4h.1M735.5 883h.1M686 880.4h.1M788.6 876.5h.1M730.9 874.7h.1M753.7 875.6h.1M803.4 878.5h.1M680.9 879.4h.1M745.4 875.3h.1M755.3 870h.1M768 871.4h.1M774.5 878h.1M787.6 869.2h.1M768.6 878.1h.1M734.9 873.5h.1M651.7 872.2h.1M740.9 874.3h.1M699.3 877.2h.1M762.1 876.8h.1M702.8 872.9h.1M731.8 875.2h.1M781.5 874h.1M760.6 875.7h.1M693.6 872.3h.1M815.5 879.2h.1M800.9 872.3h.1M733.9 882h.1M734.5 874.8h.1M754.6 870.2h.1M722.1 874.6h.1M788.6 879.6h.1M746.5 871.7h.1M786.8 874.8h.1M783 877.7h.1M759.5 877h.1M703.9 881.8h.1M704.9 878.7h.1M733 874.2h.1M769.1 880.2h.1M722.8 880.3h.1M737.3 878.2h.1M786.2 873.4h.1M665.7 873.1h.1M746.7 878h.1M723.1 884.7h.1M761.7 875.4h.1M746 875.1h.1M715 884.2h.1M782.7 879.9h.1M748.5 878h.1M768.4 878.6h.1M778.6 872.3h.1M753.2 872.8h.1M751.2 870.4h.1M751.4 875.1h.1M751 873.2h.1M798.1 876h.1M709.3 880.2h.1M748 873.7h.1M681.9 878.5h.1M809.4 877.8h.1M766.6 882.5h.1M644 875.7h.1M765.3 872.2h.1M743.9 876.1h.1M777.2 874.9h.1M737.9 877.8h.1M752.2 875.8h.1M725.8 872.1h.1M764.6 879.8h.1M750.3 872.2h.1M681 877.3h.1M760.2 878.9h.1M757.6 875.5h.1M780 875.5h.1M768.2 873.4h.1M755 876.6h.1M774.9 876.4h.1M796 874.2h.1M704.4 875.8h.1M740.8 874.9h.1M776.1 877h.1M725.8 878.1h.1M720 875.5h.1M722.8 873.4h.1M767.2 875.5h.1M733.6 873.4h.1M678.2 878h.1M777.1 875.5h.1M768.6 879.9h.1M734.4 874.6h.1M648.3 874.8h.1M699.8 882.6h.1M718.5 878h.1M666.1 871.7h.1M784.4 879.4h.1M777.5 875.6h.1M671.4 875.4h.1M765.7 880.2h.1M727.5 875.7h.1M762.8 881.9h.1M762.1 873.9h.1M757 879.6h.1M678.6 878h.1M763.8 874.8h.1M739.8 876.8h.1M682.2 875.4h.1M793.1 875.5h.1M658.4 879.9h.1M769.9 871.1h.1M755.1 878.3h.1M770.7 873.3h.1M697 873.8h.1M734.8 877.9h.1M689.9 876h.1M757.7 879h.1M731.3 875.5h.1M800.4 877.9h.1M810.7 875.1h.1M798.2 874.3h.1M770.8 880.1h.1M702.9 877.2h.1M782.8 871.7h.1M773.6 878.4h.1M681.8 883.7h.1M738.1 882.2h.1M737.8 876.7h.1M749.4 878.2h.1M772.6 871.6h.1M770.8 873.4h.1M749.2 878.8h.1M780.8 877.1h.1M735.1 879.3h.1M740.9 871.9h.1M751.5 877.1h.1M757.2 871.6h.1M777.7 870.7h.1M761.1 874.7h.1M725.3 875h.1M772.9 883.3h.1M722.2 873.2h.1M781.9 870.8h.1M755.1 873.4h.1M780.4 876.3h.1M761.4 876.5h.1M772.9 877.3h.1M781.5 874.4h.1M727.4 876.1h.1M799.7 879h.1M746.4 872h.1M765.4 877.4h.1M671.4 873.7h.1M772.2 879h.1M738.6 881h.1M726.6 872.8h.1M754.3 872.2h.1M742.8 884.4h.1M754.6 876.4h.1M801.9 876.7h.1M701.3 875.6h.1M789.9 874.4h.1M799.5 875.8h.1M765.2 879.1h.1M747.7 872.4h.1M692.7 874.6h.1M765.7 876.9h.1M726.8 871.6h.1M736.6 871.9h.1M732.1 877.4h.1M708.8 872.6h.1M683.3 875h.1M746.4 874.8h.1M655.6 881.6h.1M743.7 878.6h.1M787.3 873.7h.1M791.3 875.3h.1M691 874h.1M781.5 875.3h.1M773.1 875.9h.1M751.3 872h.1M811.6 877.3h.1M690.9 877.8h.1M743.6 874.9h.1M771 869h.1M760.2 882.6h.1M681.8 876.2h.1M754.2 880.3h.1M656.4 875.9h.1M767.8 875.4h.1M754.9 879.7h.1M809.4 877h.1M763.3 876h.1M776.4 871h.1M709.7 873.8h.1M672.8 878.3h.1M676 873h.1M776.3 878.3h.1M769.8 872.4h.1M753.6 874.9h.1M734.7 872.6h.1M750.6 880.6h.1M744.6 872.2h.1M768.5 868.1h.1M763.8 877.6h.1M721.9 877.5h.1M742.5 876.8h.1M750.1 877.1h.1M769.3 872.3h.1M772.8 877.2h.1M751.7 872.1h.1M729.6 877.5h.1M774.1 875.3h.1M762.1 878.8h.1M742.1 877.1h.1M738 884.1h.1M726 875.1h.1M743.4 876.6h.1M687.1 879.9h.1M731.8 878.9h.1M773.9 882.6h.1M789 874.5h.1M709.7 872.2h.1M745.6 877.7h.1M717.4 871.8h.1M781.5 878.6h.1M742.3 873.8h.1M710.2 867.6h.1M742.4 875h.1M707.8 878.8h.1M741 878.6h.1M776.1 878.5h.1M791.1 874.9h.1M729.6 874.1h.1M670 867.6h.1M734.9 877h.1M742.4 876.1h.1M754.5 875.1h.1M773.1 876.3h.1M733.9 875.8h.1M773 877.8h.1M810.2 876.3h.1M765.5 875.2h.1M757.2 874.7h.1M644.5 873.8h.1M770.6 873.9h.1M663.9 877.4h.1M794.2 874.6h.1M804.4 877.1h.1M748.7 875.6h.1M756 879.1h.1M761.3 875h.1M803.2 873.4h.1M754.7 877.5h.1M777.5 873h.1M745.4 876.2h.1M760.9 878.7h.1M766.4 877.2h.1M760.2 875.3h.1M774.8 882.2h.1M771.5 874.5h.1M803.6 878h.1M752 884.2h.1M749.9 876.5h.1M723.3 869.9h.1M729.5 871.3h.1M677.5 876.7h.1M715 874.6h.1M687.8 884.1h.1M739.2 879.7h.1M763 874.2h.1M650.2 878.1h.1M764.8 877.7h.1M780.1 873.9h.1M641.7 875.4h.1M735.6 881h.1M784.4 875.8h.1M674.6 872h.1M721.9 871.1h.1M654.2 877.6h.1M773.4 883.8h.1M773 883.5h.1M725.3 873.9h.1M742.1 872.5h.1M783 877.7h.1M786.9 879.1h.1M755.4 874.4h.1M802.1 872.1h.1M699.6 880.9h.1M795.8 873.6h.1M736.6 874.9h.1M782.1 875.4h.1M765.4 874.4h.1M745.6 869.3h.1M727.9 878.8h.1M747 878.2h.1M757.4 870.8h.1M736.1 873h.1M754.1 874.6h.1M732.1 876.8h.1M751.6 875.8h.1M677.1 873.4h.1M747.5 872.5h.1M696.8 876.4h.1M752.9 881.6h.1M799.2 875.2h.1M769.9 874h.1M747.5 877.6h.1M748.4 881.7h.1M797.8 875.6h.1M748.6 876.5h.1M703.2 873.2h.1M807.5 874.9h.1M717.5 873.1h.1M795.8 878.2h.1M702 877.4h.1M731.1 875.9h.1M739.8 877.6h.1M741.1 875.8h.1M759 873h.1M734.1 873.9h.1M756 880.9h.1M763.8 876.4h.1M713.5 875.6h.1M763.8 873.1h.1M746.9 878.2h.1M688 877.9h.1M751.7 878.7h.1M736.3 875.9h.1M751.4 873.8h.1M745.8 874.6h.1M777.7 878.3h.1M702.4 877.1h.1M631 875.7h.1M721.7 878.4h.1M714.1 875.7h.1M761 870.9h.1M732.5 873.8h.1M718.9 881.7h.1M701.9 879.5h.1M785.7 871.4h.1M673.9 881.5h.1M775.2 877.7h.1M693.2 874.2h.1M702.5 877h.1M804.1 877.2h.1M726.9 873.3h.1M673.4 878.6h.1M719.9 876.4h.1M733.2 874.8h.1M813.8 877h.1M783.1 875.5h.1M774.5 874.8h.1M746 877.4h.1M762.4 873.9h.1M778.9 876.9h.1M769.4 881.7h.1M746.8 875.8h.1M745.1 876.9h.1M769 879.4h.1M696.5 874.7h.1M812.4 875h.1M750.9 876.9h.1M737.1 873.4h.1M761.3 873.8h.1M734.1 876.7h.1M792.1 877h.1M756.5 878h.1M802.7 875.6h.1M777.8 874.7h.1M769.5 880.8h.1M761.7 882h.1M749.7 871h.1M760.5 875.7h.1M698 875.2h.1M763.4 877.4h.1M762.7 875.5h.1M634.9 871.4h.1M779.3 875.5h.1M811.3 871.9h.1M753 876h.1M791.8 877.1h.1M734.3 872.2h.1M655.4 868.9h.1M721.4 879.3h.1M773.4 877.7h.1M728.5 877.8h.1M717 880.6h.1M709 874.6h.1M662.8 872.4h.1M767.4 877h.1M715.1 876.3h.1M784.3 875.1h.1M759 878.7h.1M691.4 875h.1M716.6 878.5h.1M643.3 873.7h.1M782.7 874.4h.1M716.6 880.1h.1M758.5 877h.1M694.8 877.8h.1M765.4 880.4h.1M657.2 875.6h.1M774.5 878.9h.1M737.2 876.4h.1M785.2 878.3h.1M771.6 879h.1M727.7 873.6h.1M813.2 876.3h.1M795.4 874h.1M794.3 878.1h.1M701.9 875.6h.1M772.7 877.1h.1M733.7 874.3h.1M651.9 873.5h.1M736.2 875h.1M708.7 873.7h.1M703.9 878.8h.1M744 880.8h.1M736 883.5h.1M756.9 872.8h.1M737.7 876.4h.1M765.2 874.3h.1M637.5 879.1h.1M596.9 869.8h.1M621.7 876.4h.1M627.8 875.9h.1M611.8 880.8h.1M635.6 880.4h.1M635.1 876.5h.1M581 873.2h.1M627.5 872.5h.1M571.8 881.9h.1M605.3 874.8h.1M568 877.7h.1M614.3 873.2h.1M595.6 874.2h.1M577.9 872.4h.1M572.7 874.1h.1M597.4 874.1h.1M608.6 882.5h.1M585.9 871.3h.1M628.3 876.9h.1M614.1 873.3h.1M584.6 882.1h.1M585.9 877.2h.1M592.3 873.5h.1M608.1 873.2h.1M584.9 876.3h.1M641.9 873.1h.1M626.8 872.7h.1M580.2 877.7h.1M585.2 874.8h.1M596.6 880.5h.1M644.3 874.4h.1M578.7 873h.1M608.5 874.7h.1M630.8 882.8h.1M633.4 874.5h.1M630.9 879h.1M632.8 872.9h.1M607.1 879.6h.1M646.4 875.7h.1M578.6 881.5h.1M583.6 870.7h.1M598 877.2h.1M612 875.9h.1M586 876.3h.1M649.1 871h.1M619.7 874.5h.1M619.2 878.6h.1M593.9 879.8h.1M635.9 879.6h.1M587.6 870.9h.1M609.8 876.3h.1M569.2 875.1h.1M615.1 872.4h.1M641.8 873.5h.1M631.9 885.1h.1M575.4 873.7h.1M634.3 880.2h.1M576.5 872.7h.1M579.1 877.5h.1M565 828h.1M613 861h.1M692 862h.1M728 862h.1M713 800h.1M717 808h.1M727 794h.1M736 837h.1M746 826h.1M752 809h.1M756 805h.1M746 849h.1M740 863h.1M732 823h.1M760 792h.1M765 797h.1" stroke="#e6d23a" stroke-width="2.6" stroke-linecap="round" fill="none" opacity="1.0"/></svg>

  <!-- Plots Navigation -->
  <div class="gbox" style="left:1035.5px;top:574px;width:236.5px;height:146px"></div>
  <div class="gtitle" style="left:1152px;top:574.5px">Plots Navigation</div>
  <svg class="ab" style="left:1070px;top:605px" width="175" height="90" viewBox="1070 605 175 90">
    <circle cx="1092" cy="649" r="15.5" fill="#e6e8ea" stroke="#9a9fa4" stroke-width="2"/>
    <path d="M1096 640l-8.5 9 8.5 9" fill="none" stroke="#8a8f94" stroke-width="1.8"/>
    <circle cx="1163.3" cy="649" r="15.5" fill="#e6e8ea" stroke="#9a9fa4" stroke-width="2"/>
    <path d="M1159.3 640l8.5 9-8.5 9" fill="none" stroke="#8a8f94" stroke-width="1.8"/>
    <circle cx="1220" cy="626" r="14.5" fill="#f9f9f9" stroke="#6a8fb2" stroke-width="1.7"/>
    <path d="M1214.3 626h11.4M1220 620.3v11.4" stroke="#2089d0" stroke-width="2.4"/>
    <circle cx="1220" cy="673.5" r="14.5" fill="#e4e6e9" stroke="#a8adb2" stroke-width="1.4"/>
    <path d="M1213.5 673.5h13" stroke="#9ca1a6" stroke-width="2"/>
  </svg>
  <div class="ab" style="left:1116px;top:643px;font-size:11px;color:#4d6a88;line-height:14px;letter-spacing:0.4px">1 / 1</div>

  <!-- Thresholding Mode -->
  <div class="gbox" style="left:1035.5px;top:736.5px;width:236.5px;height:145.5px"></div>
  <div class="gtitle" style="left:1152px;top:737px">Thresholding Mode</div>
  <div class="lab2" style="top:765px">Type:</div>
  <div class="sel2" style="top:784px">Lines<div class="tri"></div></div>
  <div class="lab2" style="top:821.5px">Definition Scope:</div>
  <div class="sel2" style="top:841px">Common for all chambers<div class="tri"></div></div>

  <!-- Fluorescence Thresholds -->
  <div class="gbox" style="left:1282px;top:574px;width:231.5px;height:308px"></div>
  <div class="gtitle" style="left:1396.5px;top:574.5px">Fluorescence Thresholds</div>
  <div class="field" style="top:591px"><div class="dot" style="background:#3456a8"></div><div class="val">18111</div></div>
  <div class="field" style="top:634px"><div class="dot" style="background:#17a6c6"></div><div class="val">16660</div></div>
  <div class="field" style="top:677px"><div class="dot" style="background:#109a48"></div><div class="val">18874</div></div>
  <div class="field" style="top:720px"><div class="dot" style="background:#ecd748"></div><div class="val">13015</div></div>
  <div class="field" style="top:763px"><div class="dot" style="background:#c65040"></div><div class="val">12952</div></div>
  <div class="field" style="top:806px"><div class="dot" style="background:#761f47"></div><div class="val">9353</div></div>
  <div class="sbtn" style="left:1302.5px;width:46px;border:1px solid #5d84b0;background:#fafafa;color:#333">Auto</div>
  <div class="sbtn" style="left:1368.5px;width:49px;border:1px solid #b4b8bd;background:#dcdee1;color:#8e9398">Apply</div>
  <div class="sbtn" style="left:1437.5px;width:53px;border:1px solid #b4b8bd;background:#dcdee1;color:#8e9398">Cancel</div>

  <!-- Color View -->
  <div class="gbox" style="left:1523px;top:574px;width:233px;height:308px"></div>
  <div class="gtitle" style="left:1638px;top:574.5px">Color View</div>
  <div class="ab" style="left:1542.5px;top:608px;width:193px;height:186px;border:1px solid #6e90b4;background:#f9f9f9"></div>
  <div class="lg" style="top:614.5px;background:#3557a8"></div><div class="lgt" style="left:1656px;top:615.5px">Blue Channel</div>
  <div class="lg" style="top:641.5px;background:#19a3c5"></div><div class="lgt" style="left:1656px;top:642.5px">Teal Channel</div>
  <div class="lg" style="top:668.5px;background:#0f9a48"></div><div class="lgt" style="left:1656px;top:669.5px">Green Channel</div>
  <div class="lg" style="top:695.5px;background:#efd94c"></div><div class="lgt" style="left:1656px;top:696.5px">Yellow Channel</div>
  <div class="lg" style="top:722.5px;background:#c65242"></div><div class="lgt" style="left:1656px;top:723.5px">Red Channel</div>
  <div class="lg" style="top:749.5px;background:#761d47"></div><div class="lgt" style="left:1656px;top:750.5px">Infra-Red Channel</div>
  <div class="cvb" style="left:1547px"></div>
  <div class="cvb" style="left:1595px;background:#8ab4d8;border-color:#5f8ab4"></div>
  <div class="cvb" style="left:1643.5px"></div>
  <div class="cvb" style="left:1692px;background:#fafafa;border-color:#5d84b0"></div>
  <svg class="ab" style="left:1540px;top:820px" width="200" height="50" viewBox="1540 820 200 50">
    <circle cx="1566.6" cy="844.6" r="7.6" fill="none" stroke="#9a9ea3" stroke-width="1.4"/>
    <circle cx="1610" cy="844.6" r="7.4" fill="none" stroke="#2489d2" stroke-width="1.8"/>
    <circle cx="1619.7" cy="844.6" r="7.4" fill="none" stroke="#2489d2" stroke-width="1.8"/>
    <circle cx="1663.2" cy="839.8" r="7.4" fill="none" stroke="#9a9ea3" stroke-width="1.3"/>
    <circle cx="1658.6" cy="848.9" r="7.4" fill="none" stroke="#9a9ea3" stroke-width="1.3"/>
    <circle cx="1668.2" cy="848.9" r="7.4" fill="none" stroke="#9a9ea3" stroke-width="1.3"/>
    <path d="M1716.3 832.5l7.3 7.9 1.7 7.4-9 5.6-7.3-7.9 0.5-8.5z" fill="#a9cdee" stroke="#2489d2" stroke-width="1.7" stroke-linejoin="round"/>
    <g fill="#2489d2"><circle cx="1714" cy="841" r="0.9"/><circle cx="1717.5" cy="843" r="0.9"/><circle cx="1715" cy="846" r="0.9"/><circle cx="1718" cy="848" r="0.8"/><circle cx="1702" cy="833.5" r="0.8"/><circle cx="1703.5" cy="838.5" r="0.9"/><circle cx="1702.5" cy="842" r="0.8"/><circle cx="1701" cy="850" r="0.8"/><circle cx="1703.5" cy="855" r="0.9"/><circle cx="1707" cy="854" r="0.9"/><circle cx="1704" cy="851" r="0.7"/></g>
  </svg>
</div>
</body></html>
